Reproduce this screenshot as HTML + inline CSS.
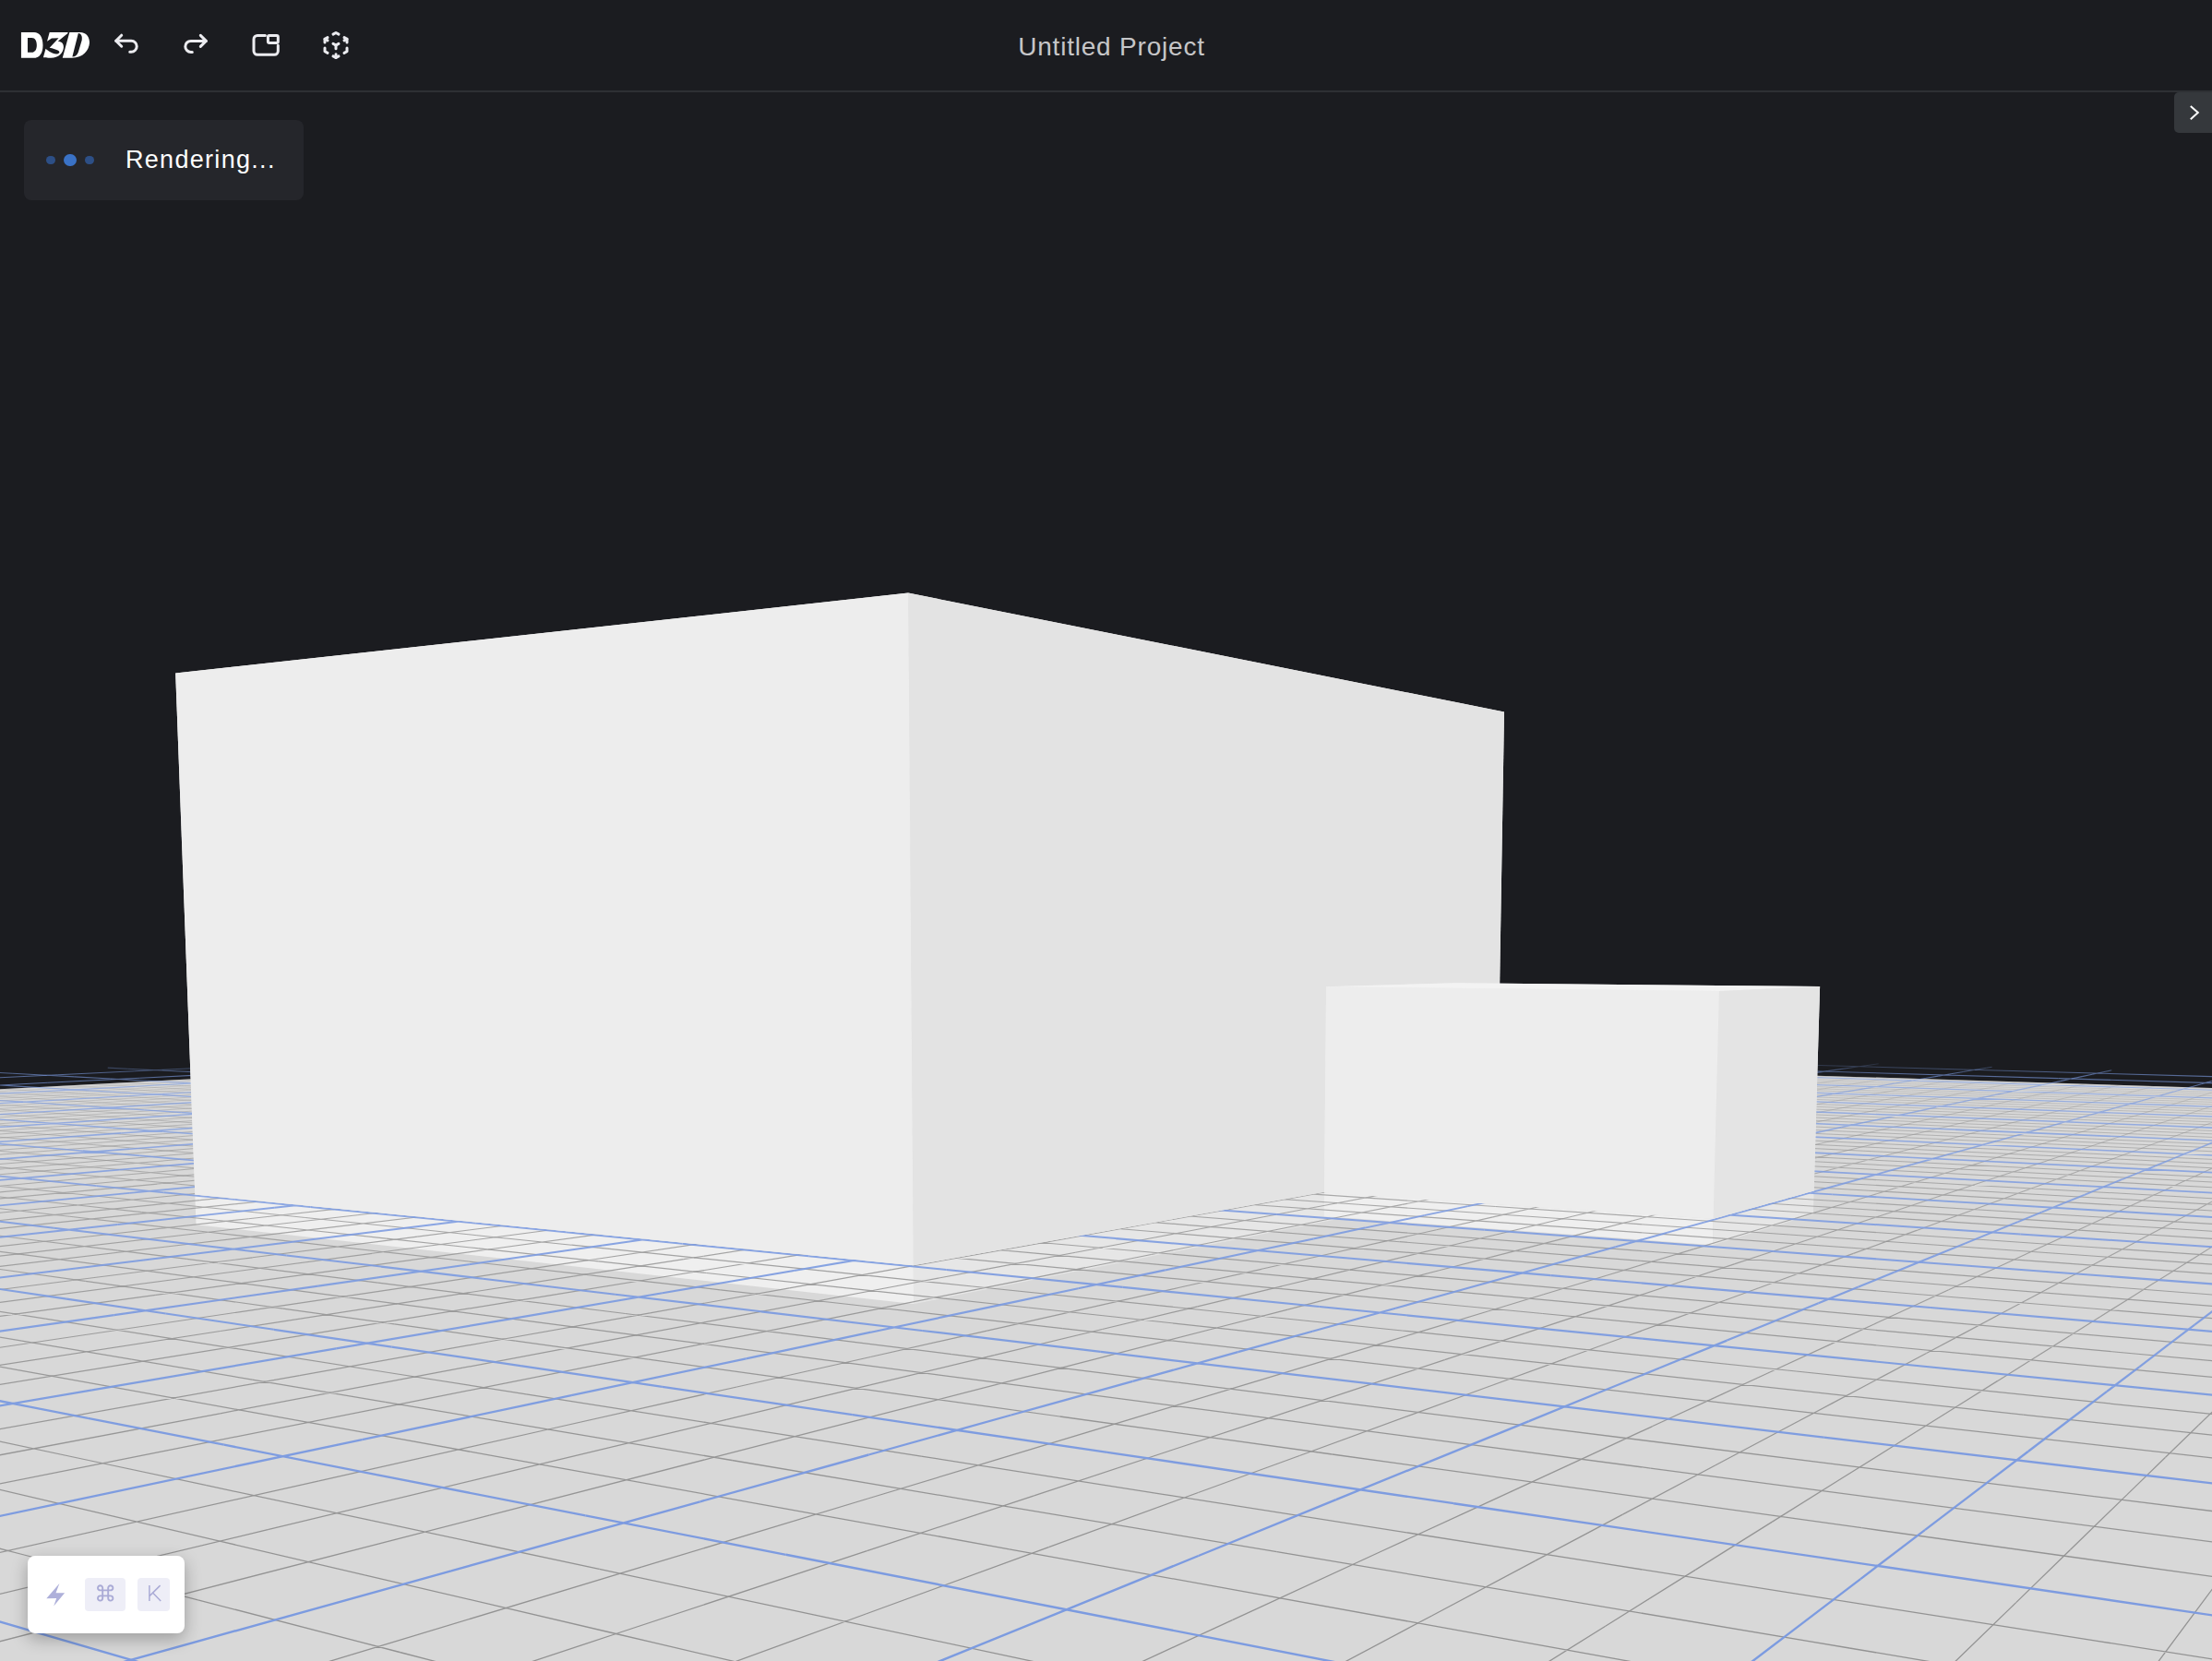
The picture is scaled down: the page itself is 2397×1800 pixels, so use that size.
<!DOCTYPE html>
<html><head><meta charset="utf-8"><title>D3D</title>
<style>
html,body{margin:0;padding:0;}
body{width:2397px;height:1800px;overflow:hidden;background:#1b1c20;position:relative;font-family:"Liberation Sans",sans-serif;}
.hdr{position:absolute;left:0;top:0;width:2397px;height:98px;background:#1b1c20;border-bottom:2px solid #2e3034;}
.title{position:absolute;left:0;top:1.5px;width:2397px;height:98px;text-align:center;line-height:98px;font-size:28px;color:#c6c6c8;letter-spacing:0.8px;text-indent:12px;}
.toast{position:absolute;left:26px;top:130px;width:303px;height:87px;background:#25262b;border-radius:8px;}
.toast .t{position:absolute;left:110px;top:0;line-height:87px;font-size:27px;color:#ffffff;letter-spacing:1.3px;}
.dot{position:absolute;border-radius:50%;}
.tog{position:absolute;left:2356px;top:100px;width:50px;height:44px;background:#35383c;border-radius:5px;}
.kb{position:absolute;left:30px;top:1686px;width:170px;height:84px;background:#ffffff;border-radius:8px;box-shadow:0 6px 18px rgba(0,0,0,0.28);}
.key{position:absolute;top:24px;height:36px;background:#eeeef7;border-radius:4px;color:#a9aad6;text-align:center;line-height:36px;font-size:22px;}
</style></head><body>
<svg width="2397" height="1800" viewBox="0 0 2397 1800" style="position:absolute;left:0;top:0">
<defs><clipPath id="sc"><rect x="0" y="100" width="2397" height="1700"/></clipPath><linearGradient id="gf" gradientUnits="userSpaceOnUse" x1="0" y1="1149" x2="0" y2="1164"><stop offset="0" stop-color="#000"/><stop offset="1" stop-color="#fff"/></linearGradient><mask id="mf" maskUnits="userSpaceOnUse" x="0" y="0" width="2397" height="1800"><rect x="0" y="0" width="2397" height="1800" fill="url(#gf)"/></mask></defs>
<clipPath id="fl"><polygon points="908.1,1132.6 -60.0,1183.3 -60.0,1900.0 2460.0,1900.0 2460.0,1180.9"/></clipPath>
<g clip-path="url(#sc)">
<polygon points="908.1,1132.6 -60.0,1183.3 -60.0,1900.0 2460.0,1900.0 2460.0,1180.9" fill="#d8d8d8" />
<polygon points="211.3,1294.6 989.8,1371.3 990.1,1413.0 212.5,1327.2" fill="#efefef" />
<polygon points="989.8,1371.3 1621.9,1258.4 1621.5,1286.6 990.1,1413.0" fill="#e6e6e6" />
<polygon points="1435.0,1292.4 1856.6,1320.8 1855.9,1349.2 1434.8,1318.1" fill="#efefef" />
<polygon points="1856.6,1320.8 1965.6,1290.6 1964.8,1316.1 1855.9,1349.2" fill="#e6e6e6" />
<path d="M-122.9,1945.4L-138.3,1950.0M308.7,1889.2L124.8,1950.0M633.2,1860.4L387.8,1950.0M1135.4,1847.8L913.7,1950.0M1380.8,1841.6L1176.6,1950.0M1589.4,1856.2L1439.4,1950.0M2029.7,1887.1L1965.0,1950.0M2262.4,1903.4L2227.7,1950.0M2492.4,1945.6L2490.3,1950.0M1295.3,1837.9L1821.4,1950.0M996.1,1847.4L1435.2,1950.0M689.9,1857.0L1048.8,1950.0M150.1,1908.4L275.8,1950.0" stroke="#939393" stroke-opacity="1.000" stroke-width="1.30" fill="none" clip-path="url(#fl)"/>
<path d="M-419.5,1886.8L-664.6,1950.0M380.1,1793.4L-122.9,1945.4M667.5,1770.5L308.7,1889.2M938.3,1749.0L633.2,1860.4M1335.4,1755.6L1135.4,1847.8M1552.0,1750.7L1380.8,1841.6M1739.7,1762.2L1589.4,1856.2M2114.6,1804.6L2029.7,1887.1M2326.0,1817.9L2262.4,1903.4M2535.3,1852.1L2492.4,1945.6M3013.3,1930.3L3015.5,1950.0M2004.1,1786.0L2979.6,1950.0M1536.6,1758.9L2593.7,1950.0M889.9,1751.6L1295.3,1837.9M667.5,1770.5L996.1,1847.4M433.2,1790.5L689.9,1857.0M-75.6,1833.8L150.1,1908.4M-313.9,1872.0L-110.9,1950.0M-576.0,1914.1L-497.6,1950.0" stroke="#939393" stroke-opacity="1.000" stroke-width="1.30" fill="none" clip-path="url(#fl)"/>
<path d="M-869.5,1877.8L-1191.0,1950.0M-194.0,1773.9L-927.8,1950.0M164.7,1736.3L-419.5,1886.8M695.2,1698.2L380.1,1793.4M939.5,1680.6L667.5,1770.5M1136.4,1676.7L938.3,1749.0M1495.0,1682.0L1335.4,1755.6M1663.7,1691.4L1552.0,1750.7M1837.4,1701.1L1739.7,1762.2M2184.7,1736.6L2114.6,1804.6M2378.3,1747.6L2326.0,1817.9M2570.3,1775.9L2535.3,1852.1M3003.4,1839.8L3013.3,1930.3M3248.8,1875.9L3278.0,1950.0M3517.1,1915.5L3540.5,1950.0M1735.0,1693.9L3365.5,1950.0M1383.7,1681.7L2004.1,1786.0M1093.6,1678.8L1536.6,1758.9M649.4,1700.4L889.9,1751.6M395.2,1706.8L667.5,1770.5M214.5,1733.8L433.2,1790.5M-230.3,1782.6L-75.6,1833.8M-459.7,1816.0L-313.9,1872.0M-710.5,1852.6L-576.0,1914.1" stroke="#939393" stroke-opacity="1.000" stroke-width="1.30" fill="none" clip-path="url(#fl)"/>
<path d="M-1423.0,1891.3L-1717.7,1950.0M-21.0,1687.1L-869.5,1877.8M290.2,1657.6L-194.0,1773.9M530.2,1642.1L164.7,1736.3M940.5,1624.0L695.2,1698.2M1120.5,1620.8L939.5,1680.6M1298.4,1617.5L1136.4,1676.7M1601.2,1633.1L1495.0,1682.0M1758.5,1641.1L1663.7,1691.4M1920.1,1649.4L1837.4,1701.1M2243.4,1679.5L2184.7,1736.6M2422.1,1688.8L2378.3,1747.6M2599.4,1712.6L2570.3,1775.9M2995.3,1765.7L3003.4,1839.8M3217.1,1795.5L3248.8,1875.9M3457.5,1827.8L3517.1,1915.5M4034.6,1925.4L4065.3,1950.0M2017.4,1655.7L4137.0,1950.0M1260.0,1619.3L1735.0,1693.9M1041.9,1624.3L1383.7,1681.7M820.0,1629.3L1093.6,1678.8M402.1,1647.7L649.4,1700.4M238.1,1670.1L395.2,1706.8M26.1,1685.0L214.5,1733.8M-398.2,1727.0L-230.3,1782.6M-617.0,1755.7L-459.7,1816.0M-827.5,1799.1L-710.5,1852.6M-1355.5,1887.7L-1271.4,1950.0M-1675.8,1931.4L-1658.5,1950.0" stroke="#939393" stroke-opacity="0.992" stroke-width="1.29" fill="none" clip-path="url(#fl)"/>
<path d="M-805.3,1728.5L-1981.0,1950.0M-242.8,1656.3L-1423.0,1891.3M345.6,1604.8L-21.0,1687.1M564.7,1591.7L290.2,1657.6M774.0,1579.2L530.2,1642.1M1107.1,1573.7L940.5,1624.0M1271.1,1571.0L1120.5,1620.8M1408.2,1577.5L1298.4,1617.5M1713.5,1581.3L1601.2,1633.1M1858.6,1588.0L1758.5,1641.1M1991.0,1605.0L1920.1,1649.4M2304.8,1619.9L2243.4,1679.5M2459.3,1638.9L2422.1,1688.8M2624.0,1659.2L2599.4,1712.6M2988.5,1704.1L2995.3,1765.7M3190.9,1729.0L3217.1,1795.5M3408.7,1755.8L3457.5,1827.8M3922.8,1835.8L4034.6,1925.4M4242.1,1894.2L4327.7,1950.0M2269.1,1621.6L3554.9,1781.6M1788.5,1591.1L4522.6,1950.0M1443.6,1576.0L2017.4,1655.7M998.2,1578.1L1260.0,1619.3M793.2,1582.5L1041.9,1624.3M585.0,1586.8L820.0,1629.3M223.8,1609.7L402.1,1647.7M64.0,1629.4L238.1,1670.1M-138.1,1642.4L26.1,1685.0M-515.7,1688.1L-398.2,1727.0M-726.5,1713.6L-617.0,1755.7M-930.3,1752.0L-827.5,1799.1M-1451.7,1816.3L-1355.5,1887.7M-1735.1,1867.5L-1675.8,1931.4M-2058.0,1925.8L-2045.6,1950.0" stroke="#939393" stroke-opacity="0.975" stroke-width="1.28" fill="none" clip-path="url(#fl)"/>
<path d="M-508.4,1639.6L-2244.5,1950.0M-89.4,1593.6L-805.3,1728.5M182.1,1571.7L-242.8,1656.3M594.0,1549.0L345.6,1604.8M787.2,1538.3L564.7,1591.7M942.2,1535.9L774.0,1579.2M1247.7,1531.2L1107.1,1573.7M1374.5,1536.8L1271.1,1571.0M1526.1,1534.4L1408.2,1577.5M1790.3,1545.8L1713.5,1581.3M1926.9,1551.7L1858.6,1588.0M2066.6,1557.8L1991.0,1605.0M2346.3,1579.5L2304.8,1619.9M2491.2,1596.0L2459.3,1638.9M2645.0,1613.5L2624.0,1659.2M2982.8,1651.9L2988.5,1704.1M3168.8,1673.1L3190.9,1729.0M3367.9,1695.8L3408.7,1755.8M3831.3,1762.5L3922.8,1835.8M4113.8,1810.4L4242.1,1894.2M4397.4,1844.0L4590.0,1950.0M1602.1,1538.6L2269.1,1621.6M3554.9,1781.6L4908.0,1950.0M1333.3,1531.4L1788.5,1591.1M1148.4,1535.0L1443.6,1576.0M770.3,1542.3L998.2,1578.1M577.0,1546.1L793.2,1582.5M413.0,1555.7L585.0,1586.8M96.0,1582.5L223.8,1609.7M-89.4,1593.6L64.0,1629.4M-254.9,1612.2L-138.1,1642.4M-620.9,1653.3L-515.7,1688.1M-824.0,1676.2L-726.5,1713.6M-1042.5,1700.7L-930.3,1752.0M-1517.9,1767.2L-1451.7,1816.3M-1786.7,1812.1L-1735.1,1867.5M-2090.2,1862.7L-2058.0,1925.8" stroke="#939393" stroke-opacity="0.959" stroke-width="1.27" fill="none" clip-path="url(#fl)"/>
<path d="M-2058.2,1798.5L-2731.3,1902.9M-760.4,1623.7L-2771.5,1950.0M-10.3,1550.5L-508.4,1639.6M238.4,1531.8L-89.4,1593.6M469.9,1514.4L182.1,1571.7M798.5,1503.0L594.0,1549.0M942.8,1500.9L787.2,1538.3M1085.8,1498.9L942.2,1535.9M1368.0,1494.9L1247.7,1531.2M1486.8,1499.7L1374.5,1536.8M1608.0,1504.5L1526.1,1534.4M1858.0,1514.6L1790.3,1545.8M1987.0,1519.9L1926.9,1551.7M2118.7,1525.2L2066.6,1557.8M2382.6,1544.3L2346.3,1579.5M2519.0,1558.7L2491.2,1596.0M2663.2,1574.0L2645.0,1613.5M2977.9,1607.3L2982.8,1651.9M3150.1,1625.5L3168.8,1673.1M3333.4,1644.9L3367.9,1695.8M3755.1,1701.4L3831.3,1762.5M4008.1,1741.5L4113.8,1810.4M4261.6,1769.3L4397.4,1844.0M4932.8,1873.9L5114.4,1950.0M5344.7,1938.1L5376.6,1950.0M2192.4,1533.1L3799.7,1706.2M1783.6,1510.8L4717.0,1841.6M1276.7,1498.1L1602.1,1538.6M1068.0,1496.6L1333.3,1531.4M894.1,1499.7L1148.4,1535.0M570.1,1510.9L770.3,1542.3M417.3,1519.3L577.0,1546.1M259.1,1527.9L413.0,1555.7M-47.8,1551.9L96.0,1582.5M-199.5,1567.8L-89.4,1593.6M-360.8,1584.7L-254.9,1612.2M-715.6,1622.0L-620.9,1653.3M-911.5,1642.6L-824.0,1676.2M-1121.4,1664.6L-1042.5,1700.7M-1576.3,1723.8L-1517.9,1767.2M-1831.8,1763.5L-1786.7,1812.1M-2118.2,1807.9L-2090.2,1862.7M-2808.7,1914.9L-2820.2,1950.0" stroke="#939393" stroke-opacity="0.942" stroke-width="1.25" fill="none" clip-path="url(#fl)"/>
<path d="M-1071.3,1619.3L-3298.7,1950.0M-507.8,1558.2L-2058.2,1798.5M-2731.3,1902.9L-3035.0,1950.0M-140.8,1523.2L-760.4,1623.7M324.7,1490.6L-10.3,1550.5M501.7,1482.2L238.4,1531.8M672.3,1474.1L469.9,1514.4M943.3,1470.5L798.5,1503.0M1077.2,1468.7L942.8,1500.9M1209.9,1466.9L1085.8,1498.9M1452.4,1469.3L1368.0,1494.9M1565.5,1473.6L1486.8,1499.7M1697.6,1471.8L1608.0,1504.5M1917.9,1487.0L1858.0,1514.6M2040.1,1491.6L1987.0,1519.9M2164.8,1496.4L2118.7,1525.2M2414.5,1513.3L2382.6,1544.3M2543.3,1526.0L2519.0,1558.7M2679.1,1539.4L2663.2,1574.0M2973.7,1568.5L2977.9,1607.3M3133.9,1584.4L3150.1,1625.5M3303.7,1601.2L3333.4,1644.9M3690.5,1649.7L3755.1,1701.4M3899.6,1670.7L4008.1,1741.5M4148.7,1707.1L4261.6,1769.3M4742.0,1793.9L4932.8,1873.9M5099.3,1846.1L5344.7,1938.1M5508.8,1906.0L5638.7,1950.0M1946.3,1486.0L4309.1,1729.5M1622.0,1471.7L2192.4,1533.1M3799.7,1706.2L5232.1,1860.4M1387.7,1466.2L1783.6,1510.8M4717.0,1841.6L5678.7,1950.0M1031.5,1467.6L1276.7,1498.1M868.1,1470.3L1068.0,1496.6M702.7,1473.1L894.1,1499.7M421.1,1487.5L570.1,1510.9M273.3,1495.1L417.3,1519.3M120.6,1502.9L259.1,1527.9M-176.6,1524.5L-47.8,1551.9M-323.9,1538.7L-199.5,1567.8M-479.9,1553.9L-360.8,1584.7M-821.5,1587.0L-715.6,1622.0M-990.4,1612.3L-911.5,1642.6M-1192.3,1632.2L-1121.4,1664.6M-1628.3,1685.3L-1576.3,1723.8M-1871.7,1720.5L-1831.8,1763.5M-2142.7,1759.7L-2118.2,1807.9M-2788.5,1853.2L-2808.7,1914.9M-3177.5,1909.6L-3207.7,1950.0" stroke="#939393" stroke-opacity="0.926" stroke-width="1.24" fill="none" clip-path="url(#fl)"/>
<path d="M-1539.7,1637.1L-3641.1,1924.7M-353.6,1512.8L-1071.3,1619.3M-67.4,1489.9L-507.8,1558.2M155.3,1475.2L-140.8,1523.2M529.5,1454.0L324.7,1490.6M689.3,1446.9L501.7,1482.2M817.1,1445.3L672.3,1474.1M1069.6,1442.1L943.3,1470.5M1194.4,1440.5L1077.2,1468.7M1318.2,1439.0L1209.9,1466.9M1545.8,1441.1L1452.4,1469.3M1652.4,1444.9L1565.5,1473.6M1760.9,1448.7L1697.6,1471.8M1983.9,1456.6L1917.9,1487.0M2087.5,1466.5L2040.1,1491.6M2205.8,1470.7L2164.8,1496.4M2442.7,1485.8L2414.5,1513.3M2564.8,1497.1L2543.3,1526.0M2693.0,1509.0L2679.1,1539.4M2969.9,1534.7L2973.7,1568.5M3119.7,1548.6L3133.9,1584.4M3277.9,1563.2L3303.7,1601.2M3635.2,1605.3L3690.5,1649.7M3827.2,1623.4L3899.6,1670.7M4053.2,1654.5L4148.7,1707.1M4548.8,1712.9L4742.0,1793.9M4854.4,1754.4L5099.3,1846.1M5255.1,1820.1L5508.8,1906.0M6130.0,1940.7L6162.8,1950.0M2135.6,1467.6L3916.7,1636.6M1519.4,1442.0L1946.3,1486.0M4309.1,1729.5L5626.2,1865.2M1334.9,1440.8L1622.0,1471.7M5232.1,1860.4L6063.9,1950.0M1151.4,1439.6L1387.7,1466.2M845.2,1444.4L1031.5,1467.6M689.3,1446.9L868.1,1470.3M558.8,1453.1L702.7,1473.1M285.8,1466.2L421.1,1487.5M142.8,1473.1L273.3,1495.1M19.3,1484.6L120.6,1502.9M-270.4,1504.5L-176.6,1524.5M-414.2,1517.6L-323.9,1538.7M-566.2,1531.5L-479.9,1553.9M-897.6,1561.8L-821.5,1587.0M-1061.8,1584.8L-990.4,1612.3M-1256.3,1602.9L-1192.3,1632.2M-1674.9,1650.8L-1628.3,1685.3M-1907.2,1682.3L-1871.7,1720.5M-2164.4,1717.2L-2142.7,1759.7M-2770.9,1799.6L-2788.5,1853.2M-3131.9,1848.6L-3177.5,1909.6M-3541.9,1904.3L-3595.2,1950.0" stroke="#939393" stroke-opacity="0.909" stroke-width="1.22" fill="none" clip-path="url(#fl)"/>
<path d="M-998.1,1542.9L-4089.8,1950.0M-507.3,1495.9L-1539.7,1637.1M-3641.1,1924.7L-3826.0,1950.0M35.3,1455.0L-353.6,1512.8M238.7,1442.5L-67.4,1489.9M399.0,1435.7L155.3,1475.2M704.4,1422.8L529.5,1454.0M824.8,1421.3L689.3,1446.9M967.9,1415.2L817.1,1445.3M1180.7,1417.1L1069.6,1442.1M1297.6,1415.8L1194.4,1440.5M1395.5,1419.1L1318.2,1439.0M1612.4,1421.0L1545.8,1441.1M1714.3,1424.4L1652.4,1444.9M1818.0,1427.9L1760.9,1448.7M2030.8,1435.0L1983.9,1456.6M2130.1,1443.9L2087.5,1466.5M2242.6,1447.7L2205.8,1470.7M2468.0,1461.3L2442.7,1485.8M2584.0,1471.4L2564.8,1497.1M2705.5,1482.0L2693.0,1509.0M2966.7,1504.8L2969.9,1534.7M3107.3,1517.1L3119.7,1548.6M3255.4,1530.0L3277.9,1563.2M3587.2,1566.9L3635.2,1605.3M3764.7,1582.6L3827.2,1623.4M3971.4,1609.5L4053.2,1654.5M4421.4,1659.5L4548.8,1712.9M4694.7,1694.6L4854.4,1754.4M5000.2,1733.8L5255.1,1820.1M5804.5,1848.3L6130.0,1940.7M6266.7,1908.5L6424.8,1950.0M2397.5,1458.2L3480.8,1553.5M1923.4,1431.4L4375.8,1655.3M1671.8,1423.5L2135.6,1467.6M3916.7,1636.6L5080.0,1747.0M1256.9,1414.9L1519.4,1442.0M5626.2,1865.2L6449.0,1950.0M1114.4,1417.0L1334.9,1440.8M942.0,1416.0L1151.4,1439.6M677.5,1423.5L845.2,1444.4M554.2,1429.1L689.3,1446.9M427.3,1434.9L558.8,1453.1M162.3,1446.9L285.8,1466.2M23.9,1453.1L142.8,1473.1M-96.8,1463.6L19.3,1484.6M-357.0,1486.0L-270.4,1504.5M-497.4,1498.2L-414.2,1517.6M-645.4,1511.0L-566.2,1531.5M-967.2,1538.8L-897.6,1561.8M-1126.9,1559.8L-1061.8,1584.8M-1314.5,1576.3L-1256.3,1602.9M-1716.8,1619.7L-1674.9,1650.8M-1939.1,1648.1L-1907.2,1682.3M-2183.7,1679.4L-2164.4,1717.2M-2755.4,1752.4L-2770.9,1799.6M-3092.2,1795.5L-3131.9,1848.6M-3471.5,1844.0L-3541.9,1904.3" stroke="#939393" stroke-opacity="0.893" stroke-width="1.21" fill="none" clip-path="url(#fl)"/>
<path d="M-701.4,1486.5L-4353.6,1950.0M-369.8,1460.1L-998.1,1542.9M-112.7,1441.9L-507.3,1495.9M279.2,1418.8L35.3,1455.0M459.2,1408.3L238.7,1442.5M603.2,1402.6L399.0,1435.7M855.3,1395.8L704.4,1422.8M967.0,1394.5L824.8,1421.3M1077.9,1393.3L967.9,1415.2M1279.1,1395.0L1180.7,1417.1M1389.1,1393.8L1297.6,1415.8M1482.1,1396.7L1395.5,1419.1M1672.7,1402.8L1612.4,1421.0M1770.4,1405.9L1714.3,1424.4M1869.6,1409.0L1818.0,1427.9M2073.1,1415.5L2030.8,1435.0M2168.4,1423.5L2130.1,1443.9M2275.7,1427.0L2242.6,1447.7M2490.7,1439.2L2468.0,1461.3M2601.1,1448.3L2584.0,1471.4M2716.6,1457.9L2705.5,1482.0M2963.8,1478.3L2966.7,1504.8M3096.3,1489.2L3107.3,1517.1M3235.5,1500.7L3255.4,1530.0M3545.2,1533.2L3587.2,1566.9M3710.2,1547.0L3764.7,1582.6M3900.6,1570.5L3971.4,1609.5M4312.4,1613.8L4421.4,1659.5M4559.4,1643.9L4694.7,1694.6M4833.0,1677.2L5000.2,1733.8M5479.9,1756.1L5804.5,1848.3M5865.9,1803.2L6266.7,1908.5M6394.1,1878.5L6686.7,1950.0M1777.0,1403.7L2397.5,1458.2M3480.8,1553.5L4765.0,1666.5M1544.9,1396.8L1923.4,1431.4M4375.8,1655.3L5419.4,1750.6M1380.4,1395.9L1671.8,1423.5M5080.0,1747.0L6271.8,1860.1M1053.7,1394.0L1256.9,1414.9M917.9,1395.9L1114.4,1417.0M780.6,1397.8L942.0,1416.0M550.0,1407.7L677.5,1423.5M429.9,1412.8L554.2,1429.1M306.6,1418.1L427.3,1434.9M49.3,1429.1L162.3,1446.9M-63.8,1438.4L23.9,1453.1M-182.4,1448.1L-96.8,1463.6M-456.2,1464.9L-357.0,1486.0M-592.5,1475.9L-497.4,1498.2M-735.9,1487.5L-645.4,1511.0M-1031.0,1517.7L-967.2,1538.8M-1200.6,1531.6L-1126.9,1559.8M-1367.5,1552.0L-1314.5,1576.3M-1754.7,1591.5L-1716.8,1619.7M-1967.7,1617.2L-1939.1,1648.1M-2201.1,1645.4L-2183.7,1679.4M-2741.7,1710.7L-2755.4,1752.4M-3057.4,1748.8L-3092.2,1795.5M-3410.3,1791.5L-3471.5,1844.0M-4290.3,1909.9L-4370.6,1950.0" stroke="#939393" stroke-opacity="0.876" stroke-width="1.20" fill="none" clip-path="url(#fl)"/>
<path d="M-2170.5,1609.6L-2786.5,1680.1M-941.6,1483.9L-4881.3,1950.0M-251.8,1429.4L-701.4,1486.5M-16.8,1413.6L-369.8,1460.1M168.8,1403.3L-112.7,1441.9M485.0,1388.3L279.2,1418.8M621.1,1383.2L459.2,1408.3M729.8,1382.0L603.2,1402.6M966.2,1375.9L855.3,1395.8M1071.5,1374.8L967.0,1394.5M1176.2,1373.7L1077.9,1393.3M1367.0,1375.3L1279.1,1395.0M1455.1,1377.9L1389.1,1393.8M1559.4,1376.8L1482.1,1396.7M1740.8,1382.2L1672.7,1402.8M1833.5,1385.0L1770.4,1405.9M1927.8,1387.8L1869.6,1409.0M2111.6,1397.7L2073.1,1415.5M2211.4,1400.7L2168.4,1423.5M2305.8,1408.2L2275.7,1427.0M2511.2,1419.3L2490.7,1439.2M2616.6,1427.5L2601.1,1448.3M2726.5,1436.1L2716.6,1457.9M2961.2,1454.5L2963.8,1478.3M3086.5,1464.3L3096.3,1489.2M3217.7,1474.6L3235.5,1500.7M3508.2,1503.5L3545.2,1533.2M3662.2,1515.7L3710.2,1547.0M3838.6,1536.4L3900.6,1570.5M4218.1,1574.2L4312.4,1613.8M4443.1,1600.3L4559.4,1643.9M4690.7,1629.0L4833.0,1677.2M5268.4,1696.0L5479.9,1756.1M5608.2,1735.5L5865.9,1803.2M5990.6,1779.8L6394.1,1878.5M7028.5,1910.9L7210.4,1950.0M2286.6,1406.7L3662.2,1515.7M1905.4,1388.4L4429.8,1595.3M1463.0,1376.1L1777.0,1403.7M4765.0,1666.5L5762.0,1754.2M1307.8,1375.2L1544.9,1396.8M5419.4,1750.6L6671.4,1864.9M1153.4,1374.3L1380.4,1395.9M6271.8,1860.1L7218.9,1950.0M896.1,1377.7L1053.7,1394.0M765.6,1379.5L917.9,1395.9M657.3,1383.9L780.6,1397.8M409.8,1390.2L550.0,1407.7M293.5,1394.9L429.9,1412.8M195.3,1402.6L306.6,1418.1M-34.4,1415.9L49.3,1429.1M-165.3,1421.3L-63.8,1438.4M-281.1,1430.2L-182.4,1448.1M-529.3,1449.3L-456.2,1464.9M-662.4,1459.6L-592.5,1475.9M-802.2,1470.4L-735.9,1487.5M-1089.8,1498.2L-1031.0,1517.7M-1254.1,1511.0L-1200.6,1531.6M-1416.0,1529.8L-1367.5,1552.0M-1789.2,1565.9L-1754.7,1591.5M-1993.7,1589.3L-1967.7,1617.2M-2216.7,1614.8L-2201.1,1645.4M-2729.6,1673.5L-2741.7,1710.7M-3026.5,1707.5L-3057.4,1748.8M-3356.4,1745.3L-3410.3,1791.5M-4167.8,1848.9L-4290.3,1909.9M-4648.4,1904.6L-4758.5,1950.0" stroke="#939393" stroke-opacity="0.860" stroke-width="1.18" fill="none" clip-path="url(#fl)"/>
<path d="M-1237.4,1487.7L-4519.2,1851.4M-727.4,1444.4L-2170.5,1609.6M-2786.5,1680.1L-5145.2,1950.0M-382.9,1417.8L-941.6,1483.9M66.8,1389.0L-251.8,1429.4M238.8,1380.0L-16.8,1413.6M375.4,1375.1L168.8,1403.3M637.4,1365.7L485.0,1388.3M740.7,1364.6L621.1,1383.2M864.6,1360.1L729.8,1382.0M1065.8,1358.1L966.2,1375.9M1165.4,1357.2L1071.5,1374.8M1247.5,1359.5L1176.2,1373.7M1430.7,1361.0L1367.0,1375.3M1530.1,1359.9L1455.1,1377.9M1615.5,1362.4L1559.4,1376.8M1790.0,1367.3L1740.8,1382.2M1879.3,1369.9L1833.5,1385.0M1969.8,1372.4L1927.8,1387.8M2146.7,1381.5L2111.6,1397.7M2242.4,1384.3L2211.4,1400.7M2333.1,1391.1L2305.8,1408.2M2529.8,1401.2L2511.2,1419.3M2630.6,1408.7L2616.6,1427.5M2735.6,1416.5L2726.5,1436.1M2958.8,1433.1L2961.2,1454.5M3077.7,1442.0L3086.5,1464.3M3201.9,1451.2L3217.7,1474.6M3475.2,1477.1L3508.2,1503.5M3619.7,1488.0L3662.2,1515.7M3771.4,1499.4L3838.6,1536.4M4135.7,1539.7L4218.1,1574.2M4319.1,1553.9L4443.1,1600.3M4539.9,1578.0L4690.7,1629.0M5048.4,1633.6L5268.4,1696.0M5343.2,1665.8L5608.2,1735.5M5729.5,1716.0L5990.6,1779.8M6535.5,1805.1L7028.5,1910.9M7130.1,1880.8L7472.2,1950.0M2057.1,1376.9L4091.0,1533.0M1774.7,1366.1L2286.6,1406.7M3662.2,1515.7L4694.8,1597.6M1594.2,1362.9L1905.4,1388.4M4429.8,1595.3L5367.3,1672.2M1269.1,1359.0L1463.0,1376.1M5762.0,1754.2L6909.3,1855.1M1122.0,1358.2L1307.8,1375.2M6671.4,1864.9L7603.7,1950.0M999.8,1359.8L1153.4,1374.3M751.9,1362.9L896.1,1377.7M648.6,1366.9L765.6,1379.5M520.9,1368.5L657.3,1383.9M302.4,1376.9L409.8,1390.2M209.3,1383.8L293.5,1394.9M92.5,1388.4L195.3,1402.6M-131.7,1400.7L-34.4,1415.9M-240.6,1408.7L-165.3,1421.3M-354.3,1417.0L-281.1,1430.2M-597.3,1434.9L-529.3,1449.3M-727.4,1444.4L-662.4,1459.6M-863.7,1454.4L-802.2,1470.4M-1144.1,1480.2L-1089.8,1498.2M-1303.4,1492.1L-1254.1,1511.0M-1460.6,1509.4L-1416.0,1529.8M-1820.7,1542.5L-1789.2,1565.9M-2017.3,1563.9L-1993.7,1589.3M-2230.8,1587.1L-2216.7,1614.8M-2718.6,1640.2L-2729.6,1673.5M-2998.9,1670.7L-3026.5,1707.5M-3308.6,1704.3L-3356.4,1745.3M-4061.2,1795.7L-4167.8,1848.9M-4502.1,1844.3L-4648.4,1904.6M-5048.8,1915.7L-5146.4,1950.0" stroke="#939393" stroke-opacity="0.844" stroke-width="1.17" fill="none" clip-path="url(#fl)"/>
<path d="M-1670.1,1505.3L-3461.9,1692.1M-547.3,1411.2L-1237.4,1487.7M-4519.2,1851.4L-5409.2,1950.0M-274.9,1392.6L-727.4,1444.4M-59.7,1379.5L-382.9,1417.8M273.5,1362.8L66.8,1389.0M403.1,1358.3L238.8,1380.0M529.2,1354.0L375.4,1375.1M771.8,1345.7L637.4,1365.7M868.6,1344.8L740.7,1364.6M964.8,1343.9L864.6,1360.1M1155.6,1342.1L1065.8,1358.1M1250.2,1341.2L1165.4,1357.2M1328.9,1343.3L1247.5,1359.5M1503.4,1344.6L1430.7,1361.0M1584.7,1346.8L1530.1,1359.9M1667.1,1349.1L1615.5,1362.4M1835.3,1353.6L1790.0,1367.3M1921.3,1356.0L1879.3,1369.9M2008.4,1358.4L1969.8,1372.4M2178.9,1366.7L2146.7,1381.5M2270.7,1369.2L2242.4,1384.3M2358.1,1375.5L2333.1,1391.1M2546.8,1384.7L2529.8,1401.2M2643.4,1391.6L2630.6,1408.7M2743.7,1398.7L2735.6,1416.5M2956.7,1413.8L2958.8,1433.1M3069.8,1421.8L3077.7,1442.0M3187.6,1430.2L3201.9,1451.2M3445.7,1453.5L3475.2,1477.1M3581.8,1463.2L3619.7,1488.0M3724.2,1473.4L3771.4,1499.4M4063.1,1509.3L4135.7,1539.7M4233.4,1521.8L4319.1,1553.9M4436.6,1543.0L4539.9,1578.0M4900.0,1591.4L5048.4,1633.6M5166.0,1619.2L5343.2,1665.8M5459.4,1649.9L5729.5,1716.0M6218.7,1737.1L6535.5,1805.1M6640.2,1781.6L7130.1,1880.8M7225.0,1852.6L7734.0,1950.0M2233.1,1368.6L3759.3,1478.7M1687.4,1348.6L2057.1,1376.9M4091.0,1533.0L5052.7,1606.8M1516.8,1345.7L1774.7,1366.1M4694.8,1597.6L5672.4,1675.0M1349.3,1342.9L1594.2,1362.9M5367.3,1672.2L6457.4,1761.5M1093.3,1343.5L1269.1,1359.0M6909.3,1855.1L7988.4,1950.0M953.3,1342.8L1122.0,1358.2M858.5,1346.4L999.8,1359.8M619.4,1349.2L751.9,1362.9M518.8,1352.9L648.6,1366.9M415.9,1356.7L520.9,1368.5M202.6,1364.4L302.4,1376.9M111.0,1370.9L209.3,1383.8M-2.8,1375.1L92.5,1388.4M-204.3,1389.3L-131.7,1400.7M-328.3,1393.9L-240.6,1408.7M-439.3,1401.6L-354.3,1417.0M-676.1,1418.1L-597.3,1434.9M-788.0,1430.2L-727.4,1444.4M-921.0,1439.6L-863.7,1454.4M-1194.4,1463.6L-1144.1,1480.2M-1349.0,1474.5L-1303.4,1492.1M-1501.8,1490.6L-1460.6,1509.4M-1849.6,1521.1L-1820.7,1542.5M-2038.8,1540.7L-2017.3,1563.9M-2243.7,1561.9L-2230.8,1587.1M-2708.7,1610.1L-2718.6,1640.2M-2974.2,1637.6L-2998.9,1670.7M-3266.0,1667.8L-3308.6,1704.3M-3967.5,1749.0L-4061.2,1795.7M-4374.5,1791.7L-4502.1,1844.3M-4872.9,1853.9L-5048.8,1915.7" stroke="#939393" stroke-opacity="0.827" stroke-width="1.16" fill="none" clip-path="url(#fl)"/>
<path d="M-1161.6,1440.0L-5003.9,1828.8M-706.3,1404.9L-1670.1,1505.3M-3461.9,1692.1L-5937.3,1950.0M-179.9,1370.5L-547.3,1411.2M19.5,1358.9L-274.9,1392.6M178.6,1351.3L-59.7,1379.5M452.3,1340.1L273.5,1362.8M570.9,1336.2L403.1,1358.3M665.5,1335.4L529.2,1354.0M872.3,1330.8L771.8,1345.7M964.3,1330.0L868.6,1344.8M1055.7,1329.1L964.8,1343.9M1237.2,1327.5L1155.6,1342.1M1312.3,1329.5L1250.2,1341.2M1402.6,1328.7L1328.9,1343.3M1556.6,1332.7L1503.4,1344.6M1647.2,1331.8L1584.7,1346.8M1726.1,1333.9L1667.1,1349.1M1887.1,1338.0L1835.3,1353.6M1960.0,1343.2L1921.3,1356.0M2044.0,1345.4L2008.4,1358.4M2208.4,1353.1L2178.9,1366.7M2296.8,1355.4L2270.7,1369.2M2381.0,1361.2L2358.1,1375.5M2562.3,1369.7L2546.8,1384.7M2655.0,1375.9L2643.4,1391.6M2751.2,1382.4L2743.7,1398.7M2954.8,1396.2L2956.7,1413.8M3062.5,1403.5L3069.8,1421.8M3174.7,1411.1L3187.6,1430.2M3413.0,1427.2L3445.7,1453.5M3547.7,1441.0L3581.8,1463.2M3682.0,1450.2L3724.2,1473.4M3983.7,1476.0L4063.1,1509.3M4157.6,1493.4L4233.4,1521.8M4345.6,1512.2L4436.6,1543.0M4770.9,1554.8L4900.0,1591.4M5012.8,1579.0L5166.0,1619.2M5278.0,1605.6L5459.4,1649.9M5893.0,1667.2L6218.7,1737.1M6323.3,1717.5L6640.2,1781.6M6738.8,1759.5L7225.0,1852.6M2435.4,1363.0L3441.2,1431.4M2028.8,1344.3L4157.6,1493.4M1800.8,1337.4L2233.1,1368.6M3759.3,1478.7L4716.3,1547.7M1447.0,1330.1L1687.4,1348.6M5052.7,1606.8L5980.1,1677.9M1288.2,1327.6L1516.8,1345.7M5672.4,1675.0L6668.4,1754.0M1178.1,1328.8L1349.3,1342.9M6457.4,1761.5L7538.8,1850.1M933.1,1329.4L1093.3,1343.5M820.7,1330.7L953.3,1342.8M728.2,1334.0L858.5,1346.4M516.9,1338.7L619.4,1349.2M418.5,1342.1L518.8,1352.9M317.9,1345.6L415.9,1356.7M127.7,1355.1L202.6,1364.4M19.5,1358.9L111.0,1370.9M-74.2,1365.2L-2.8,1375.1M-289.0,1376.0L-204.3,1389.3M-393.7,1382.9L-328.3,1393.9M-502.7,1390.2L-439.3,1401.6M-734.6,1405.6L-676.1,1418.1M-858.2,1413.8L-788.0,1430.2M-974.4,1425.7L-921.0,1439.6M-1241.2,1448.1L-1194.4,1463.6M-1391.3,1458.3L-1349.0,1474.5M-1539.8,1473.2L-1501.8,1490.6M-1876.2,1501.4L-1849.6,1521.1M-2058.6,1519.4L-2038.8,1540.7M-2255.4,1538.9L-2243.7,1561.9M-2699.8,1582.8L-2708.7,1610.1M-2951.9,1607.8L-2974.2,1637.6M-3227.7,1635.0L-3266.0,1667.8M-3884.6,1707.7L-3967.5,1749.0M-4262.4,1745.5L-4374.5,1791.7M-4719.8,1800.1L-4872.9,1853.9M-5817.6,1921.5L-5922.6,1950.0" stroke="#939393" stroke-opacity="0.811" stroke-width="1.14" fill="none" clip-path="url(#fl)"/>
<path d="M-860.2,1398.8L-6206.0,1924.5M-543.5,1377.5L-1161.6,1440.0M-5003.9,1828.8L-6201.4,1950.0M-294.0,1361.9L-706.3,1404.9M62.3,1343.7L-179.9,1370.5M213.3,1336.7L19.5,1358.9M357.9,1330.1L178.6,1351.3M587.3,1323.0L452.3,1340.1M677.7,1322.2L570.9,1336.2M787.0,1318.7L665.5,1335.4M963.7,1317.2L872.3,1330.8M1051.4,1316.5L964.3,1330.0M1138.5,1315.7L1055.7,1329.1M1297.1,1316.8L1237.2,1327.5M1383.7,1316.0L1312.3,1329.5M1456.9,1317.8L1402.6,1328.7M1617.8,1318.9L1556.6,1332.7M1693.1,1320.8L1647.2,1331.8M1769.5,1322.7L1726.1,1333.9M1925.0,1326.5L1887.1,1338.0M2004.4,1328.5L1960.0,1343.2M2076.9,1333.4L2044.0,1345.4M2235.7,1340.5L2208.4,1353.1M2320.8,1342.6L2296.8,1355.4M2402.1,1348.0L2381.0,1361.2M2576.6,1355.8L2562.3,1369.7M2665.7,1361.6L2655.0,1375.9M2758.1,1367.6L2751.2,1382.4M2953.0,1380.2L2954.8,1396.2M3056.0,1386.8L3062.5,1403.5M3162.9,1393.8L3174.7,1411.1M3389.5,1408.4L3413.0,1427.2M3517.0,1420.9L3547.7,1441.0M3643.9,1429.2L3682.0,1450.2M3927.7,1452.5L3983.7,1476.0M4090.1,1468.1L4157.6,1493.4M4264.8,1484.9L4345.6,1512.2M4631.3,1515.2L4770.9,1554.8M4848.4,1535.8L5012.8,1579.0M5084.7,1558.3L5278.0,1605.6M5675.3,1620.4L5893.0,1667.2M5995.7,1651.2L6323.3,1717.5M6351.1,1685.4L6738.8,1759.5M1906.5,1327.0L2435.4,1363.0M3441.2,1431.4L4442.2,1499.5M1693.1,1320.8L2028.8,1344.3M4157.6,1493.4L5042.7,1555.3M1537.2,1318.4L1800.8,1337.4M4716.3,1547.7L5600.4,1611.4M1255.4,1315.4L1447.0,1330.1M5980.1,1677.9L7018.6,1757.6M1127.5,1314.8L1288.2,1327.6M6668.4,1754.0L7940.3,1854.8M1021.4,1316.0L1178.1,1328.8M7538.8,1850.1L8757.5,1950.0M806.6,1318.3L933.1,1329.4M717.7,1321.3L820.7,1330.7M607.5,1322.5L728.2,1334.0M420.9,1328.8L516.9,1338.7M324.6,1332.0L418.5,1342.1M226.2,1335.3L317.9,1345.6M39.7,1344.2L127.7,1355.1M-49.3,1349.9L19.5,1358.9M-157.9,1353.6L-74.2,1365.2M-352.4,1366.0L-289.0,1376.0M-455.3,1372.6L-393.7,1382.9M-562.3,1379.4L-502.7,1390.2M-789.6,1393.9L-734.6,1405.6M-910.4,1401.6L-858.2,1413.8M-1024.4,1412.8L-974.4,1425.7M-1284.8,1433.7L-1241.2,1448.1M-1430.7,1443.2L-1391.3,1458.3M-1575.1,1457.0L-1539.8,1473.2M-1900.8,1483.2L-1876.2,1501.4M-2076.8,1499.8L-2058.6,1519.4M-2266.2,1517.7L-2255.4,1538.9M-2691.6,1558.0L-2699.8,1582.8M-2931.7,1580.7L-2951.9,1607.8M-3193.2,1605.4L-3227.7,1635.0M-3810.6,1670.8L-3884.6,1707.7M-4163.0,1704.5L-4262.4,1745.5M-4585.4,1752.9L-4719.8,1800.1M-5586.9,1858.9L-5817.6,1921.5M-6171.6,1916.1L-6310.8,1950.0" stroke="#939393" stroke-opacity="0.794" stroke-width="1.13" fill="none" clip-path="url(#fl)"/>
<path d="M-2165.1,1488.2L-2728.5,1539.3M-1100.0,1401.3L-5265.4,1789.1M-402.7,1353.8L-860.2,1398.8M-6206.0,1924.5L-6465.6,1950.0M-205.5,1343.3L-543.5,1377.5M-20.6,1333.5L-294.0,1361.9M269.3,1320.7L62.3,1343.7M382.9,1317.3L213.3,1336.7M493.8,1314.0L357.9,1330.1M708.2,1307.6L587.3,1323.0M793.7,1306.9L677.7,1322.2M878.7,1306.2L787.0,1318.7M1047.3,1304.8L963.7,1317.2M1131.0,1304.1L1051.4,1316.5M1214.3,1303.4L1138.5,1315.7M1366.3,1304.4L1297.1,1316.8M1449.1,1303.7L1383.7,1316.0M1519.5,1305.4L1456.9,1317.8M1662.8,1308.8L1617.8,1318.9M1735.8,1310.5L1693.1,1320.8M1809.7,1312.3L1769.5,1322.7M1960.3,1315.9L1925.0,1326.5M2037.0,1317.7L2004.4,1328.5M2107.4,1322.2L2076.9,1333.4M2261.0,1328.8L2235.7,1340.5M2343.1,1330.8L2320.8,1342.6M2421.6,1335.8L2402.1,1348.0M2589.7,1343.0L2576.6,1355.8M2675.6,1348.3L2665.7,1361.6M2764.4,1353.9L2758.1,1367.6M2951.4,1365.5L2953.0,1380.2M3050.0,1371.6L3056.0,1386.8M3152.1,1377.9L3162.9,1393.8M3368.2,1391.3L3389.5,1408.4M3489.1,1402.7L3517.0,1420.9M3609.5,1410.3L3643.9,1429.2M3877.2,1431.3L3927.7,1452.5M4029.5,1445.4L4090.1,1468.1M4175.9,1454.7L4264.8,1484.9M4533.9,1487.5L4631.3,1515.2M4734.3,1505.8L4848.4,1535.8M4951.3,1525.7L5084.7,1558.3M5444.2,1570.8L5675.3,1620.4M5725.5,1596.5L5995.7,1651.2M6093.4,1636.0L6351.1,1685.4M2343.1,1330.8L3536.7,1405.7M2005.4,1317.2L4214.6,1459.5M1620.6,1307.5L1906.5,1327.0M4442.2,1499.5L5291.1,1557.3M1472.2,1305.3L1693.1,1320.8M5042.7,1555.3L5877.5,1613.8M1326.0,1303.2L1537.2,1318.4M5600.4,1611.4L6480.1,1674.9M1102.2,1303.7L1255.4,1315.4M7018.6,1757.6L8160.5,1845.2M1000.2,1304.7L1127.5,1314.8M7940.3,1854.8L9141.9,1950.0M897.3,1305.8L1021.4,1316.0M689.2,1308.0L806.6,1318.3M602.2,1310.8L717.7,1321.3M513.6,1313.6L607.5,1322.5M330.8,1319.5L420.9,1328.8M236.5,1322.5L324.6,1332.0M140.3,1325.6L226.2,1335.3M-42.6,1333.9L39.7,1344.2M-130.1,1339.3L-49.3,1349.9M-220.8,1344.9L-157.9,1353.6M-426.7,1354.3L-352.4,1366.0M-527.4,1360.4L-455.3,1372.6M-618.5,1369.2L-562.3,1379.4M-841.2,1382.9L-789.6,1393.9M-959.4,1390.2L-910.4,1401.6M-1071.3,1400.6L-1024.4,1412.8M-1335.3,1417.0L-1284.8,1433.7M-1467.4,1429.1L-1430.7,1443.2M-1607.9,1442.0L-1575.1,1457.0M-1923.5,1466.3L-1900.8,1483.2M-2093.6,1481.7L-2076.8,1499.8M-2276.1,1498.3L-2266.2,1517.7M-2684.2,1535.3L-2691.6,1558.0M-2913.3,1556.0L-2931.7,1580.7M-3161.9,1578.6L-3193.2,1605.4M-3744.2,1637.7L-3810.6,1670.8M-4074.3,1668.0L-4163.0,1704.5M-4466.5,1711.1L-4585.4,1752.9M-5386.2,1804.5L-5586.9,1858.9M-5917.4,1854.2L-6171.6,1916.1M-6597.1,1927.4L-6699.1,1950.0" stroke="#939393" stroke-opacity="0.778" stroke-width="1.11" fill="none" clip-path="url(#fl)"/>
<path d="M-1343.2,1403.9L-4276.6,1663.1M-869.6,1370.7L-2165.1,1488.2M-2728.5,1539.3L-6431.0,1875.0M-540.3,1349.2L-1100.0,1401.3M-5265.4,1789.1L-6994.0,1950.0M-126.3,1326.6L-402.7,1353.8M20.8,1320.4L-205.5,1343.3M161.8,1314.4L-20.6,1333.5M405.9,1305.6L269.3,1320.7M512.1,1302.5L382.9,1317.3M616.1,1299.6L493.8,1314.0M799.8,1296.0L708.2,1307.6M881.5,1295.3L793.7,1306.9M978.8,1292.5L878.7,1306.2M1124.1,1293.4L1047.3,1304.8M1204.1,1292.8L1131.0,1304.1M1283.8,1292.1L1214.3,1303.4M1429.9,1293.0L1366.3,1304.4M1497.4,1294.6L1449.1,1303.7M1565.8,1296.2L1519.5,1305.4M1715.0,1297.1L1662.8,1308.8M1785.2,1298.7L1735.8,1310.5M1856.3,1300.3L1809.7,1312.3M1993.1,1306.0L1960.3,1315.9M2067.3,1307.7L2037.0,1317.7M2135.7,1311.9L2107.4,1322.2M2290.0,1315.5L2261.0,1328.8M2363.7,1319.9L2343.1,1330.8M2439.7,1324.5L2421.6,1335.8M2601.9,1331.2L2589.7,1343.0M2684.7,1336.1L2675.6,1348.3M2770.2,1341.2L2764.4,1353.9M2949.9,1351.9L2951.4,1365.5M3044.4,1357.6L3050.0,1371.6M3142.3,1363.4L3152.1,1377.9M3348.7,1375.7L3368.2,1391.3M3463.7,1386.1L3489.1,1402.7M3578.1,1393.0L3609.5,1410.3M3831.5,1412.1L3877.2,1431.3M3974.8,1424.9L4029.5,1445.4M4112.7,1433.4L4175.9,1454.7M4447.0,1462.8L4533.9,1487.5M4633.0,1479.2L4734.3,1505.8M4833.5,1496.9L4951.3,1525.7M5285.4,1536.7L5444.2,1570.8M5541.3,1559.2L5725.5,1596.5M5820.9,1583.9L6093.4,1636.0M2153.0,1311.5L3915.2,1419.2M1894.2,1302.7L2343.1,1330.8M3536.7,1405.7L4478.9,1464.8M1698.0,1297.4L2005.4,1317.2M4214.6,1459.5L5034.3,1512.3M1412.8,1293.4L1620.6,1307.5M5291.1,1557.3L6156.7,1616.2M1294.4,1292.9L1472.2,1305.3M5877.5,1613.8L6791.1,1677.8M1176.4,1292.4L1326.0,1303.2M6480.1,1674.9L7573.6,1753.8M961.1,1292.8L1102.2,1303.7M8160.5,1845.2L9526.2,1950.0M862.5,1293.8L1000.2,1304.7M781.7,1296.3L897.3,1305.8M597.4,1299.9L689.2,1308.0M512.1,1302.5L602.2,1310.8M425.2,1305.2L513.6,1313.6M246.0,1310.7L330.8,1319.5M153.7,1313.6L236.5,1322.5M75.3,1318.3L140.3,1325.6M-104.7,1326.2L-42.6,1333.9M-205.9,1329.4L-130.1,1339.3M-294.9,1334.6L-220.8,1344.9M-482.6,1345.5L-426.7,1354.3M-581.6,1351.3L-527.4,1360.4M-684.3,1357.3L-618.5,1369.2M-889.8,1372.6L-841.2,1382.9M-1005.5,1379.4L-959.4,1390.2M-1125.8,1386.5L-1071.3,1400.6M-1372.8,1404.6L-1335.3,1417.0M-1501.7,1415.9L-1467.4,1429.1M-1638.6,1428.0L-1607.9,1442.0M-1944.7,1450.6L-1923.5,1466.3M-2109.2,1464.9L-2093.6,1481.7M-2285.3,1480.3L-2276.1,1498.3M-2677.3,1514.4L-2684.2,1535.3M-2896.4,1533.5L-2913.3,1556.0M-3133.3,1554.1L-3161.9,1578.6M-3684.3,1607.8L-3744.2,1637.7M-3994.7,1635.1L-4074.3,1668.0M-4360.5,1673.8L-4466.5,1711.1M-5210.2,1756.7L-5386.2,1804.5M-5696.4,1800.3L-5917.4,1854.2M-6310.0,1864.0L-6597.1,1927.4" stroke="#939393" stroke-opacity="0.761" stroke-width="1.10" fill="none" clip-path="url(#fl)"/>
<path d="M-1754.3,1420.3L-3460.6,1563.8M-674.1,1344.8L-1343.2,1403.9M-4276.6,1663.1L-7522.7,1950.0M-441.7,1331.9L-869.6,1370.7M-6431.0,1875.0L-7258.3,1950.0M-227.4,1320.1L-540.3,1349.2M83.4,1306.0L-126.3,1326.6M216.4,1300.6L20.8,1320.4M322.9,1297.7L161.8,1314.4M548.4,1289.8L405.9,1305.6M628.8,1289.2L512.1,1302.5M726.5,1286.5L616.1,1299.6M900.2,1283.2L799.8,1296.0M977.7,1282.7L881.5,1295.3M1054.9,1282.1L978.8,1292.5M1194.8,1282.9L1124.1,1293.4M1271.5,1282.3L1204.1,1292.8M1335.5,1283.8L1283.8,1292.1M1477.1,1284.6L1429.9,1293.0M1553.6,1284.0L1497.4,1294.6M1619.5,1285.5L1565.8,1296.2M1753.6,1288.4L1715.0,1297.1M1821.8,1289.9L1785.2,1298.7M1890.8,1291.4L1856.3,1300.3M2023.8,1296.7L1993.1,1306.0M2095.7,1298.3L2067.3,1307.7M2168.5,1299.9L2135.7,1311.9M2311.5,1305.6L2290.0,1315.5M2382.9,1309.7L2363.7,1319.9M2456.5,1314.0L2439.7,1324.5M2613.2,1320.2L2601.9,1331.2M2693.1,1324.8L2684.7,1336.1M2775.5,1329.5L2770.2,1341.2M2948.5,1339.5L2949.9,1351.9M3039.3,1344.7L3044.4,1357.6M3133.2,1350.0L3142.3,1363.4M3330.8,1361.4L3348.7,1375.7M3440.4,1370.9L3463.7,1386.1M3549.5,1377.3L3578.1,1393.0M3790.0,1394.7L3831.5,1412.1M3925.3,1406.3L3974.8,1424.9M4055.6,1414.0L4112.7,1433.4M4368.9,1440.6L4447.0,1462.8M4521.1,1449.8L4633.0,1479.2M4704.0,1465.2L4833.5,1496.9M5112.9,1499.7L5285.4,1536.7M5379.7,1526.5L5541.3,1559.2M5634.3,1548.2L5820.9,1583.9M2294.8,1306.0L3666.8,1385.8M1793.6,1289.5L2153.0,1311.5M3915.2,1419.2L4749.7,1470.2M1630.8,1286.2L1894.2,1302.7M4478.9,1464.8L5262.3,1514.0M1493.5,1284.3L1698.0,1297.4M5034.3,1512.3L5793.2,1561.2M1244.8,1282.0L1412.8,1293.4M6156.7,1616.2L7104.9,1680.7M1151.3,1282.9L1294.4,1292.9M6791.1,1677.8L7770.9,1746.4M1038.0,1282.4L1176.4,1292.4M7573.6,1753.8L8774.5,1840.4M848.5,1284.2L961.1,1292.8M770.5,1286.5L862.5,1293.8M673.6,1287.5L781.7,1296.3M510.8,1292.3L597.4,1299.9M427.1,1294.8L512.1,1302.5M341.8,1297.3L425.2,1305.2M166.2,1302.5L246.0,1310.7M91.0,1306.8L153.7,1313.6M-1.5,1309.6L75.3,1318.3M-178.2,1317.0L-104.7,1326.2M-263.1,1321.8L-205.9,1329.4M-350.9,1326.8L-294.9,1334.6M-535.6,1337.2L-482.6,1345.5M-632.9,1342.7L-581.6,1351.3M-733.8,1348.4L-684.3,1357.3M-935.7,1362.8L-889.8,1372.6M-1049.0,1369.2L-1005.5,1379.4M-1166.6,1375.9L-1125.8,1386.5M-1407.9,1392.9L-1372.8,1404.6M-1533.8,1403.6L-1501.7,1415.9M-1667.2,1414.9L-1638.6,1428.0M-1964.3,1436.0L-1944.7,1450.6M-2123.7,1449.4L-2109.2,1464.9M-2293.8,1463.6L-2285.3,1480.3M-2671.0,1495.2L-2677.3,1514.4M-2880.9,1512.7L-2896.4,1533.5M-3107.2,1531.7L-3133.3,1554.1M-3630.0,1580.8L-3684.3,1607.8M-3922.9,1605.5L-3994.7,1635.1M-4243.2,1632.6L-4360.5,1673.8M-5018.4,1704.7L-5210.2,1756.7M-5502.3,1753.1L-5696.4,1800.3M-6060.6,1808.9L-6310.0,1864.0M-7387.2,1933.4L-7476.1,1950.0" stroke="#939393" stroke-opacity="0.745" stroke-width="1.09" fill="none" clip-path="url(#fl)"/>
<path d="M-1270.9,1371.4L-4658.2,1649.6M-840.7,1343.5L-1754.3,1420.3M-3460.6,1563.8L-6632.6,1830.6M-324.1,1313.8L-674.1,1344.8M-152.6,1305.7L-441.7,1331.9M-15.1,1300.3L-227.4,1320.1M244.5,1290.2L83.4,1306.0M367.1,1285.4L216.4,1300.6M466.2,1282.7L322.9,1297.7M658.2,1277.6L548.4,1289.8M734.7,1277.1L628.8,1289.2M810.8,1276.5L726.5,1286.5M976.8,1273.5L900.2,1283.2M1051.2,1273.0L977.7,1282.7M1125.3,1272.4L1054.9,1282.1M1260.1,1273.2L1194.8,1282.9M1333.8,1272.7L1271.5,1282.3M1395.6,1274.0L1335.5,1283.8M1532.0,1274.8L1477.1,1284.6M1595.4,1276.1L1553.6,1284.0M1659.5,1277.5L1619.5,1285.5M1789.9,1280.3L1753.6,1288.4M1856.1,1281.7L1821.8,1289.9M1923.1,1283.1L1890.8,1291.4M2052.4,1288.1L2023.8,1296.7M2122.2,1289.5L2095.7,1298.3M2192.7,1291.1L2168.5,1299.9M2331.5,1296.3L2311.5,1305.6M2400.8,1300.2L2382.9,1309.7M2472.1,1304.2L2456.5,1314.0M2623.7,1310.0L2613.2,1320.2M2700.9,1314.3L2693.1,1324.8M2780.5,1318.7L2775.5,1329.5M2947.3,1327.9L2948.5,1339.5M3034.6,1332.7L3039.3,1344.7M3124.8,1337.7L3133.2,1350.0M3314.3,1348.2L3330.8,1361.4M3419.0,1357.0L3440.4,1370.9M3523.2,1362.8L3549.5,1377.3M3752.0,1378.8L3790.0,1394.7M3869.5,1385.4L3925.3,1406.3M4003.7,1396.4L4055.6,1414.0M4281.8,1415.9L4368.9,1440.6M4441.6,1428.9L4521.1,1449.8M4612.4,1442.8L4704.0,1465.2M4991.9,1473.7L5112.9,1499.7M5203.7,1490.9L5379.7,1526.5M5432.3,1509.5L5634.3,1548.2M2488.4,1303.8L3376.0,1353.1M2122.2,1289.5L3978.6,1395.0M1883.7,1282.0L2294.8,1306.0M3666.8,1385.8L4510.5,1434.9M1568.9,1275.8L1793.6,1289.5M4749.7,1470.2L5491.9,1515.6M1437.6,1274.0L1630.8,1286.2M5262.3,1514.0L6047.0,1563.2M1327.7,1273.6L1493.5,1284.3M5793.2,1561.2L6608.5,1613.7M1109.2,1272.7L1244.8,1282.0M7104.9,1680.7L8122.6,1750.0M1018.6,1273.6L1151.3,1282.9M7770.9,1746.4L8981.2,1831.1M927.4,1274.4L1038.0,1282.4M8774.5,1840.4L10057.1,1932.9M743.1,1276.1L848.5,1284.2M666.6,1278.3L770.5,1286.5M588.7,1280.5L673.6,1287.5M412.9,1283.7L510.8,1292.3M331.1,1286.0L427.1,1294.8M262.9,1289.8L341.8,1297.3M90.8,1294.7L166.2,1302.5M16.6,1298.8L91.0,1306.8M-74.0,1301.4L-1.5,1309.6M-233.8,1310.1L-178.2,1317.0M-317.5,1314.7L-263.1,1321.8M-404.1,1319.4L-350.9,1326.8M-585.9,1329.3L-535.6,1337.2M-681.6,1334.5L-632.9,1342.7M-780.7,1339.9L-733.8,1348.4M-989.6,1351.3L-935.7,1362.8M-1090.0,1359.6L-1049.0,1369.2M-1205.1,1366.0L-1166.6,1375.9M-1441.0,1382.0L-1407.9,1392.9M-1564.0,1392.0L-1533.8,1403.6M-1694.0,1402.6L-1667.2,1414.9M-1982.7,1422.4L-1964.3,1436.0M-2137.2,1434.8L-2123.7,1449.4M-2301.7,1448.1L-2293.8,1463.6M-2665.2,1477.4L-2671.0,1495.2M-2866.6,1493.6L-2880.9,1512.7M-3083.1,1511.1L-3107.2,1531.7M-3580.5,1556.1L-3630.0,1580.8M-3857.7,1578.6L-3922.9,1605.5M-4159.6,1603.2L-4243.2,1632.6M-4883.6,1668.1L-5018.4,1704.7M-5330.5,1711.2L-5502.3,1753.1M-5842.0,1760.6L-6060.6,1808.9M-7042.3,1869.2L-7387.2,1933.4M-7837.3,1945.3L-7864.7,1950.0" stroke="#939393" stroke-opacity="0.728" stroke-width="1.07" fill="none" clip-path="url(#fl)"/>
<path d="M-1005.9,1342.2L-5717.9,1720.3M-661.5,1321.3L-1270.9,1371.4M-4658.2,1649.6L-7737.0,1902.4M-446.1,1310.3L-840.7,1343.5M-6632.6,1830.6L-8051.5,1950.0M-84.8,1292.7L-324.1,1313.8M45.1,1287.8L-152.6,1305.7M170.3,1283.1L-15.1,1300.3M388.2,1276.0L244.5,1290.2M483.5,1273.6L367.1,1285.4M576.9,1271.2L466.2,1282.7M742.3,1268.3L658.2,1277.6M831.2,1266.0L734.7,1277.1M903.7,1265.5L810.8,1276.5M1047.8,1264.5L976.8,1273.5M1119.4,1264.0L1051.2,1273.0M1190.6,1263.5L1125.3,1272.4M1320.6,1264.2L1260.1,1273.2M1380.3,1265.5L1333.8,1272.7M1451.4,1265.0L1395.6,1274.0M1573.0,1267.5L1532.0,1274.8M1634.7,1268.7L1595.4,1276.1M1706.2,1268.2L1659.5,1277.5M1824.0,1272.6L1789.9,1280.3M1888.4,1273.9L1856.1,1281.7M1953.5,1275.3L1923.1,1283.1M2085.8,1278.0L2052.4,1288.1M2147.0,1281.3L2122.2,1289.5M2215.5,1282.8L2192.7,1291.1M2350.2,1287.7L2331.5,1296.3M2417.5,1291.3L2400.8,1300.2M2486.7,1295.0L2472.1,1304.2M2633.5,1300.5L2623.7,1310.0M2708.2,1304.5L2700.9,1314.3M2785.2,1308.6L2780.5,1318.7M2946.1,1317.2L2947.3,1327.9M3030.3,1321.6L3034.6,1332.7M3117.1,1326.3L3124.8,1337.7M3299.1,1336.0L3314.3,1348.2M3399.3,1344.1L3419.0,1357.0M3499.0,1349.5L3523.2,1362.8M3717.2,1364.2L3752.0,1378.8M3829.1,1370.3L3869.5,1385.4M3956.3,1380.4L4003.7,1396.4M4219.3,1398.2L4281.8,1415.9M4369.6,1410.0L4441.6,1428.9M4529.7,1422.6L4612.4,1442.8M4883.6,1450.4L4991.9,1473.7M5080.0,1465.9L5203.7,1490.9M5291.1,1482.5L5432.3,1509.5M1992.1,1276.3L2488.4,1303.8M3376.0,1353.1L4253.3,1401.8M1790.7,1270.7L2122.2,1289.5M3978.6,1395.0L4762.9,1439.6M1639.5,1267.8L1883.7,1282.0M4510.5,1434.9L5237.9,1477.2M1385.9,1264.6L1568.9,1275.8M5491.9,1515.6L6302.6,1565.2M1280.3,1264.2L1437.6,1274.0M6047.0,1563.2L6890.5,1616.1M1175.1,1263.8L1327.7,1273.6M6608.5,1613.7L7465.4,1668.9M1000.5,1265.3L1109.2,1272.7M8122.6,1750.0L9183.3,1822.1M912.3,1266.1L1018.6,1273.6M8981.2,1831.1L10270.7,1921.4M823.5,1266.9L927.4,1274.4M10057.1,1932.9L10294.5,1950.0M660.1,1269.7L743.1,1276.1M584.9,1271.8L666.6,1278.3M492.7,1272.7L588.7,1280.5M336.1,1276.9L412.9,1283.7M270.5,1280.5L331.1,1286.0M188.4,1282.7L262.9,1289.8M33.5,1288.8L90.8,1294.7M-53.6,1291.3L16.6,1298.8M-129.0,1295.2L-74.0,1301.4M-299.6,1301.9L-233.8,1310.1M-382.0,1306.2L-317.5,1314.7M-467.0,1310.7L-404.1,1319.4M-645.3,1320.0L-585.9,1329.3M-739.0,1324.9L-681.6,1334.5M-825.1,1331.9L-780.7,1339.9M-1030.1,1342.7L-989.6,1351.3M-1128.8,1350.6L-1090.0,1359.6M-1241.4,1356.5L-1205.1,1366.0M-1472.2,1371.7L-1441.0,1382.0M-1592.3,1381.1L-1564.0,1392.0M-1719.2,1391.1L-1694.0,1402.6M-1999.9,1409.6L-1982.7,1422.4M-2149.8,1421.3L-2137.2,1434.8M-2309.1,1433.7L-2301.7,1448.1M-2659.8,1460.9L-2665.2,1477.4M-2853.4,1476.0L-2866.6,1493.6M-3061.0,1492.1L-3083.1,1511.1M-3535.2,1533.5L-3580.5,1556.1M-3798.3,1554.1L-3857.7,1578.6M-4083.7,1576.5L-4159.6,1603.2M-4762.6,1635.2L-4883.6,1668.1M-5177.5,1674.0L-5330.5,1711.2M-5604.0,1708.0L-5842.0,1760.6M-6743.1,1813.4L-7042.3,1869.2M-7455.9,1879.4L-7837.3,1945.3" stroke="#939393" stroke-opacity="0.712" stroke-width="1.06" fill="none" clip-path="url(#fl)"/>
<path d="M-2222.2,1413.2L-2765.2,1453.9M-1170.0,1340.9L-4877.0,1625.3M-565.1,1306.8L-1005.9,1342.2M-5717.9,1720.3L-8580.5,1950.0M-336.2,1294.6L-661.5,1321.3M-7737.0,1902.4L-8316.0,1950.0M-175.5,1287.5L-446.1,1310.3M100.0,1276.3L-84.8,1292.7M198.3,1273.9L45.1,1287.8M314.3,1269.7L170.3,1283.1M499.7,1265.1L388.2,1276.0M589.7,1262.8L483.5,1273.6M678.1,1260.6L576.9,1271.2M835.2,1258.0L742.3,1268.3M905.3,1257.5L831.2,1266.0M975.1,1257.1L903.7,1265.5M1113.8,1256.1L1047.8,1264.5M1182.7,1255.7L1119.4,1264.0M1239.5,1256.8L1190.6,1263.5M1365.9,1257.5L1320.6,1264.2M1434.7,1257.0L1380.3,1265.5M1493.1,1258.2L1451.4,1265.0M1620.9,1258.9L1573.0,1267.5M1680.7,1260.1L1634.7,1268.7M1741.1,1261.2L1706.2,1268.2M1863.7,1263.7L1824.0,1272.6M1926.0,1264.9L1888.4,1273.9M1982.0,1267.9L1953.5,1275.3M2110.6,1270.5L2085.8,1278.0M2170.4,1273.6L2147.0,1281.3M2236.8,1275.0L2215.5,1282.8M2367.8,1279.6L2350.2,1287.7M2433.2,1283.0L2417.5,1291.3M2500.4,1286.5L2486.7,1295.0M2642.6,1291.6L2633.5,1300.5M2715.0,1295.3L2708.2,1304.5M2789.5,1299.2L2785.2,1308.6M2945.0,1307.2L2946.1,1317.2M3026.2,1311.3L3030.3,1321.6M3109.9,1315.6L3117.1,1326.3M3285.0,1324.7L3299.1,1336.0M3381.1,1332.2L3399.3,1344.1M3476.7,1337.2L3499.0,1349.5M3685.2,1350.8L3717.2,1364.2M3792.0,1356.4L3829.1,1370.3M3912.8,1365.7L3956.3,1380.4M4162.3,1382.0L4219.3,1398.2M4304.0,1392.8L4369.6,1410.0M4454.6,1404.2L4529.7,1422.6M4763.1,1424.6L4883.6,1450.4M4942.9,1438.2L5080.0,1465.9M5135.4,1452.7L5291.1,1482.5M2406.8,1281.6L3496.2,1338.2M2095.8,1270.8L4034.6,1373.6M1726.4,1261.5L1992.1,1276.3M4253.3,1401.8L4955.9,1440.8M1581.6,1258.8L1790.7,1270.7M4762.9,1439.6L5450.0,1478.6M1459.0,1257.3L1639.5,1267.8M5237.9,1477.2L5955.5,1518.9M1254.5,1256.6L1385.9,1264.6M6302.6,1565.2L7056.4,1611.3M1152.7,1256.2L1280.3,1264.2M6890.5,1616.1L7777.7,1671.7M1068.4,1256.9L1175.1,1263.8M7465.4,1668.9L8500.0,1735.5M881.6,1257.2L1000.5,1265.3M9183.3,1822.1L10479.0,1910.3M812.2,1259.1L912.3,1266.1M10270.7,1921.4L10678.5,1950.0M725.6,1259.9L823.5,1266.9M565.9,1262.5L660.1,1269.7M492.2,1264.5L584.9,1271.8M417.1,1266.5L492.7,1272.7M263.2,1270.5L336.1,1276.9M198.3,1273.9L270.5,1280.5M117.7,1276.0L188.4,1282.7M-34.7,1281.8L33.5,1288.8M-107.1,1285.5L-53.6,1291.3M-194.4,1287.9L-129.0,1295.2M-349.7,1295.7L-299.6,1301.9M-430.9,1299.8L-382.0,1306.2M-514.7,1304.0L-467.0,1310.7M-690.3,1312.9L-645.3,1320.0M-782.4,1317.6L-739.0,1324.9M-867.4,1324.2L-825.1,1331.9M-1068.5,1334.5L-1030.1,1342.7M-1165.5,1342.0L-1128.8,1350.6M-1275.8,1347.6L-1241.4,1356.5M-1501.6,1362.0L-1472.2,1371.7M-1619.0,1370.9L-1592.3,1381.1M-1742.9,1380.2L-1719.2,1391.1M-2016.0,1397.7L-1999.9,1409.6M-2161.6,1408.6L-2149.8,1421.3M-2316.0,1420.2L-2309.1,1433.7M-2654.8,1445.6L-2659.8,1460.9M-2841.2,1459.6L-2853.4,1476.0M-3040.5,1474.6L-3061.0,1492.1M-3493.6,1512.8L-3535.2,1533.5M-3743.9,1531.7L-3798.3,1554.1M-4014.5,1552.2L-4083.7,1576.5M-4653.3,1605.6L-4762.6,1635.2M-5040.2,1640.5L-5177.5,1674.0M-5436.8,1671.1L-5604.0,1708.0M-6480.9,1764.6L-6743.1,1813.4M-7049.8,1809.2L-7455.9,1879.4M-7784.2,1874.4L-8253.5,1950.0" stroke="#939393" stroke-opacity="0.695" stroke-width="1.05" fill="none" clip-path="url(#fl)"/>
<path d="M-1416.5,1345.8L-4124.1,1544.8M-969.2,1319.1L-2222.2,1413.2M-2765.2,1453.9L-5915.0,1690.3M-681.2,1303.4L-1170.0,1340.9M-4877.0,1625.3L-7874.7,1855.3M-262.7,1282.6L-565.1,1306.8M-111.0,1276.1L-336.2,1294.6M11.5,1271.8L-175.5,1287.5M244.0,1263.6L100.0,1276.3M336.0,1261.4L198.3,1273.9M443.9,1257.6L314.3,1269.7M601.7,1255.0L499.7,1265.1M687.1,1253.0L589.7,1262.8M770.9,1251.0L678.1,1260.6M906.8,1250.1L835.2,1258.0M974.3,1249.6L905.3,1257.5M1041.6,1249.2L975.1,1257.1M1175.3,1248.3L1113.8,1256.1M1241.7,1247.9L1182.7,1255.7M1296.9,1249.0L1239.5,1256.8M1419.1,1249.6L1365.9,1257.5M1475.5,1250.7L1434.7,1257.0M1542.0,1250.2L1493.1,1258.2M1656.9,1252.4L1620.9,1258.9M1715.2,1253.6L1680.7,1260.1M1774.1,1254.7L1741.1,1261.2M1893.5,1257.0L1863.7,1263.7M1954.2,1258.1L1926.0,1264.9M2015.4,1259.3L1982.0,1267.9M2134.1,1263.4L2110.6,1270.5M2192.3,1266.4L2170.4,1273.6M2256.9,1267.6L2236.8,1275.0M2384.3,1272.0L2367.8,1279.6M2447.9,1275.2L2433.2,1283.0M2516.3,1276.5L2500.4,1286.5M2651.2,1283.3L2642.6,1291.6M2721.4,1286.8L2715.0,1295.3M2793.6,1290.3L2789.5,1299.2M2944.0,1297.8L2945.0,1307.2M3022.4,1301.7L3026.2,1311.3M3103.1,1305.8L3109.9,1315.6M3271.9,1314.2L3285.0,1324.7M3364.1,1321.2L3381.1,1332.2M3456.0,1325.8L3476.7,1337.2M3655.6,1338.4L3685.2,1350.8M3757.8,1343.6L3792.0,1356.4M3872.8,1352.1L3912.8,1365.7M4110.0,1367.1L4162.3,1382.0M4244.1,1377.0L4304.0,1392.8M4370.1,1383.6L4454.6,1404.2M4676.9,1406.0L4763.1,1424.6M4845.2,1418.4L4942.9,1438.2M5024.8,1431.5L5135.4,1452.7M2195.0,1265.5L3846.5,1349.4M1975.9,1259.3L2406.8,1281.6M3496.2,1338.2L4294.0,1379.6M1788.3,1254.4L2095.8,1270.8M4034.6,1373.6L4716.0,1409.8M1527.8,1250.5L1726.4,1261.5M4955.9,1440.8L5663.3,1480.0M1409.9,1249.1L1581.6,1258.8M5450.0,1478.6L6189.6,1520.6M1311.2,1248.7L1459.0,1257.3M5955.5,1518.9L6714.7,1563.1M1131.6,1249.0L1254.5,1256.6M7056.4,1611.3L7951.0,1666.0M1033.3,1248.7L1152.7,1256.2M7777.7,1671.7L8849.6,1739.0M951.4,1249.4L1068.4,1256.9M8500.0,1735.5L9773.7,1817.6M801.6,1251.8L881.6,1257.2M10479.0,1910.3L11062.5,1950.0M717.7,1252.5L812.2,1259.1M648.3,1254.3L725.6,1259.9M491.6,1256.8L565.9,1262.5M419.0,1258.7L492.2,1264.5M345.3,1260.6L417.1,1266.5M207.6,1265.6L263.2,1270.5M129.7,1267.6L198.3,1273.9M50.6,1269.7L117.7,1276.0M-99.4,1275.1L-34.7,1281.8M-170.7,1278.6L-107.1,1285.5M-244.1,1282.2L-194.4,1287.9M-397.5,1289.8L-349.7,1295.7M-477.6,1293.7L-430.9,1299.8M-560.2,1297.7L-514.7,1304.0M-733.1,1306.2L-690.3,1312.9M-823.7,1310.6L-782.4,1317.6M-917.3,1315.2L-867.4,1324.2M-1105.0,1326.7L-1068.5,1334.5M-1200.4,1333.8L-1165.5,1342.0M-1308.3,1339.2L-1275.8,1347.6M-1529.4,1352.8L-1501.6,1362.0M-1644.3,1361.2L-1619.0,1370.9M-1765.2,1370.0L-1742.9,1380.2M-2031.2,1386.5L-2016.0,1397.7M-2172.6,1396.7L-2161.6,1408.6M-2322.4,1407.6L-2316.0,1420.2M-2650.1,1431.4L-2654.8,1445.6M-2829.8,1444.4L-2841.2,1459.6M-3021.6,1458.3L-3040.5,1474.6M-3455.3,1493.7L-3493.6,1512.8M-3693.9,1511.1L-3743.9,1531.7M-3951.2,1530.0L-4014.5,1552.2M-4554.2,1578.7L-4653.3,1605.6M-4916.4,1610.4L-5040.2,1640.5M-5286.8,1637.9L-5436.8,1671.1M-6195.7,1711.4L-6480.9,1764.6M-6770.0,1760.8L-7049.8,1809.2M-7433.7,1818.0L-7784.2,1874.4" stroke="#939393" stroke-opacity="0.679" stroke-width="1.03" fill="none" clip-path="url(#fl)"/>
<path d="M-1813.1,1360.9L-3372.1,1470.8M-794.6,1300.1L-1416.5,1345.8M-4124.1,1544.8L-6760.6,1738.5M-561.0,1288.5L-969.2,1319.1M-5915.0,1690.3L-9131.5,1931.8M-372.2,1279.7L-681.2,1303.4M-7874.7,1855.3L-9109.7,1950.0M-73.9,1267.4L-262.7,1282.6M64.6,1261.7L-111.0,1276.1M177.1,1257.9L11.5,1271.8M374.0,1252.1L244.0,1263.6M460.3,1250.1L336.0,1261.4M545.2,1248.2L443.9,1257.6M695.4,1245.8L601.7,1255.0M776.6,1243.9L687.1,1253.0M842.5,1243.5L770.9,1251.0M973.6,1242.7L906.8,1250.1M1038.8,1242.3L974.3,1249.6M1103.7,1241.9L1041.6,1249.2M1232.7,1241.0L1175.3,1248.3M1286.1,1242.0L1241.7,1247.9M1350.4,1241.6L1296.9,1249.0M1468.7,1242.2L1419.1,1249.6M1523.5,1243.3L1475.5,1250.7M1578.8,1244.3L1542.0,1250.2M1690.9,1246.4L1656.9,1252.4M1747.8,1247.4L1715.2,1253.6M1805.2,1248.5L1774.1,1254.7M1921.7,1250.6L1893.5,1257.0M1980.8,1251.7L1954.2,1258.1M2040.4,1252.9L2015.4,1259.3M2156.1,1256.7L2134.1,1263.4M2218.0,1257.9L2192.3,1266.4M2275.9,1260.7L2256.9,1267.6M2399.8,1264.8L2384.3,1272.0M2461.7,1267.8L2447.9,1275.2M2528.2,1269.1L2516.3,1276.5M2659.3,1275.4L2651.2,1283.3M2727.4,1278.7L2721.4,1286.8M2797.4,1282.1L2793.6,1290.3M2943.0,1289.1L2944.0,1297.8M3018.9,1292.8L3022.4,1301.7M3096.9,1296.5L3103.1,1305.8M3259.7,1304.4L3271.9,1314.2M3348.4,1310.9L3364.1,1321.2M3436.8,1315.2L3456.0,1325.8M3628.3,1326.9L3655.6,1338.4M3726.1,1331.7L3757.8,1343.6M3835.9,1339.7L3872.8,1352.1M4062.0,1353.5L4110.0,1367.1M4189.2,1362.6L4244.1,1377.0M4308.9,1368.6L4370.1,1383.6M4598.3,1389.2L4676.9,1406.0M4756.5,1400.4L4845.2,1418.4M4924.7,1412.4L5024.8,1431.5M2337.3,1262.8L3605.9,1324.6M1887.2,1249.8L2195.0,1265.5M3846.5,1349.4L4509.6,1383.1M1728.2,1246.4L1975.9,1259.3M4294.0,1379.6L4954.8,1413.9M1592.6,1244.1L1788.3,1254.4M4716.0,1409.8L5414.0,1446.8M1381.8,1242.4L1527.8,1250.5M5663.3,1480.0L6333.6,1517.2M1286.1,1242.0L1409.9,1249.1M6189.6,1520.6L6867.1,1559.1M1190.7,1241.7L1311.2,1248.7M6714.7,1563.1L7500.2,1608.8M1016.5,1242.0L1131.6,1249.0M7951.0,1666.0L9030.0,1731.9M937.0,1242.6L1033.3,1248.7M8849.6,1739.0L9963.5,1808.9M857.0,1243.3L951.4,1249.4M9773.7,1817.6L11125.7,1904.6M710.3,1245.6L801.6,1251.8M628.5,1246.2L717.7,1252.5M560.3,1247.9L648.3,1254.3M420.8,1251.4L491.6,1256.8M349.4,1253.2L419.0,1258.7M276.8,1255.0L345.3,1260.6M141.0,1259.8L207.6,1265.6M64.6,1261.7L129.7,1267.6M-0.7,1264.8L50.6,1269.7M-148.7,1270.1L-99.4,1275.1M-219.3,1273.4L-170.7,1278.6M-303.4,1275.6L-244.1,1282.2M-454.4,1282.7L-397.5,1289.8M-533.2,1286.4L-477.6,1293.7M-614.3,1290.2L-560.2,1297.7M-774.0,1299.8L-733.1,1306.2M-863.2,1304.0L-823.7,1310.6M-955.1,1308.4L-917.3,1315.2M-1139.7,1319.3L-1105.0,1326.7M-1241.5,1324.2L-1200.4,1333.8M-1339.2,1331.2L-1308.3,1339.2M-1555.7,1344.1L-1529.4,1352.8M-1668.1,1352.0L-1644.3,1361.2M-1786.3,1360.4L-1765.2,1370.0M-2045.4,1375.9L-2031.2,1386.5M-2183.0,1385.5L-2172.6,1396.7M-2328.4,1395.8L-2322.4,1407.6M-2645.7,1418.0L-2650.1,1431.4M-2819.2,1430.2L-2829.8,1444.4M-3003.9,1443.2L-3021.6,1458.3M-3419.8,1476.0L-3455.3,1493.7M-3647.9,1492.2L-3693.9,1511.1M-3893.0,1509.5L-3951.2,1530.0M-4463.9,1554.2L-4554.2,1578.7M-4804.2,1583.0L-4916.4,1610.4M-5151.4,1608.0L-5286.8,1637.9M-5995.4,1674.1L-6195.7,1711.4M-6522.7,1718.1L-6770.0,1760.8M-7127.0,1768.5L-7433.7,1818.0M-8645.6,1895.3L-9031.2,1950.0" stroke="#939393" stroke-opacity="0.662" stroke-width="1.02" fill="none" clip-path="url(#fl)"/>
<path d="M-1349.0,1322.2L-4438.7,1535.7M-937.5,1299.2L-1813.1,1360.9M-3372.1,1470.8L-6095.8,1662.9M-453.2,1275.1L-794.6,1300.1M-6760.6,1738.5L-9639.1,1950.0M-277.2,1267.2L-561.0,1288.5M-9131.5,1931.8L-9374.4,1950.0M-134.0,1261.5L-372.2,1279.7M93.8,1254.0L-73.9,1267.4M202.2,1250.4L64.6,1261.7M307.3,1246.9L177.1,1257.9M475.7,1243.1L374.0,1252.1M557.8,1241.3L460.3,1250.1M638.4,1239.5L545.2,1248.2M781.9,1237.3L695.4,1245.8M845.8,1236.9L776.6,1243.9M909.5,1236.5L842.5,1243.5M1036.1,1235.8L973.6,1242.7M1099.1,1235.4L1038.8,1242.3M1161.8,1235.0L1103.7,1241.9M1276.0,1235.5L1232.7,1241.0M1338.4,1235.2L1286.1,1242.0M1390.8,1236.1L1350.4,1241.6M1506.1,1236.7L1468.7,1242.2M1559.6,1237.7L1523.5,1243.3M1622.1,1237.3L1578.8,1244.3M1730.9,1239.2L1690.9,1246.4M1786.1,1240.2L1747.8,1247.4M1841.8,1241.2L1805.2,1248.5M1948.3,1244.7L1921.7,1250.6M2005.9,1245.7L1980.8,1251.7M2064.1,1246.8L2040.4,1252.9M2177.0,1250.4L2156.1,1256.7M2237.3,1251.5L2218.0,1257.9M2293.8,1254.2L2275.9,1260.7M2414.5,1258.1L2399.8,1264.8M2474.8,1260.9L2461.7,1267.8M2539.4,1262.1L2528.2,1269.1M2666.8,1268.1L2659.3,1275.4M2733.0,1271.2L2727.4,1278.7M2800.9,1274.3L2797.4,1282.1M2942.1,1280.9L2943.0,1289.1M3015.6,1284.4L3018.9,1292.8M3091.0,1287.9L3096.9,1296.5M3248.3,1295.2L3259.7,1304.4M3333.8,1301.4L3348.4,1310.9M3418.9,1305.4L3436.8,1315.2M3602.8,1316.3L3628.3,1326.9M3696.8,1320.7L3726.1,1331.7M3801.8,1328.1L3835.9,1339.7M4017.6,1340.9L4062.0,1353.5M4126.6,1346.2L4189.2,1362.6M4252.6,1354.8L4308.9,1368.6M4526.4,1373.7L4598.3,1389.2M4675.5,1384.0L4756.5,1400.4M4833.7,1395.0L4924.7,1412.4M2525.5,1262.4L3332.0,1300.2M2166.1,1249.9L3902.8,1332.9M1961.7,1244.4L2337.3,1262.8M3605.9,1324.6L4330.1,1360.0M1672.2,1238.9L1887.2,1249.8M4509.6,1383.1L5136.2,1415.0M1541.7,1236.7L1728.2,1246.4M4954.8,1413.9L5612.1,1448.1M1431.1,1235.5L1592.6,1244.1M5414.0,1446.8L6012.6,1478.6M1245.9,1234.8L1381.8,1242.4M6333.6,1517.2L7123.5,1561.1M1153.8,1234.5L1286.1,1242.0M6867.1,1559.1L7783.2,1611.2M1077.5,1235.1L1190.7,1241.7M7500.2,1608.8L8431.8,1663.0M923.5,1236.3L1016.5,1242.0M9030.0,1731.9L10149.1,1800.3M845.8,1236.9L937.0,1242.6M9963.5,1808.9L11319.4,1893.9M767.7,1237.5L857.0,1243.3M11125.7,1904.6L11830.0,1950.0M623.9,1239.7L710.3,1245.6M557.8,1241.3L628.5,1246.2M490.7,1242.9L560.3,1247.9M353.3,1246.2L420.8,1251.4M283.0,1247.9L349.4,1253.2M211.6,1249.6L276.8,1255.0M77.7,1254.2L141.0,1259.8M14.7,1257.1L64.6,1261.7M-61.9,1259.0L-0.7,1264.8M-207.6,1264.0L-148.7,1270.1M-277.2,1267.2L-219.3,1273.4M-348.7,1270.5L-303.4,1275.6M-497.8,1277.3L-454.4,1282.7M-575.5,1280.8L-533.2,1286.4M-655.4,1284.5L-614.3,1290.2M-822.6,1292.2L-774.0,1299.8M-900.8,1297.7L-863.2,1304.0M-991.2,1301.9L-955.1,1308.4M-1172.7,1312.3L-1139.7,1319.3M-1272.6,1317.0L-1241.5,1324.2M-1368.6,1323.6L-1339.2,1331.2M-1580.7,1335.8L-1555.7,1344.1M-1690.7,1343.3L-1668.1,1352.0M-1806.2,1351.3L-1786.3,1360.4M-2058.9,1365.9L-2045.4,1375.9M-2192.8,1375.0L-2183.0,1385.5M-2334.1,1384.6L-2328.4,1395.8M-2641.6,1405.6L-2645.7,1418.0M-2809.3,1417.0L-2819.2,1430.2M-2987.5,1429.1L-3003.9,1443.2M-3387.0,1459.6L-3419.8,1476.0M-3605.3,1474.6L-3647.9,1492.2M-3839.3,1490.6L-3893.0,1509.5M-4381.2,1531.8L-4463.9,1554.2M-4677.9,1552.3L-4804.2,1583.0M-5028.6,1580.9L-5151.4,1608.0M-5815.8,1640.6L-5995.4,1674.1M-6302.6,1680.1L-6522.7,1718.1M-6856.3,1724.9L-7127.0,1768.5M-8132.8,1822.6L-8645.6,1895.3M-8973.2,1890.2L-9420.3,1950.0" stroke="#939393" stroke-opacity="0.646" stroke-width="1.00" fill="none" clip-path="url(#fl)"/>
<path d="M-1079.5,1298.2L-5267.4,1582.0M-776.0,1282.6L-1349.0,1322.2M-4438.7,1535.7L-6916.7,1707.0M-557.5,1272.4L-937.5,1299.2M-6095.8,1662.9L-9196.3,1881.4M-213.4,1257.4L-453.2,1275.1M-98.3,1253.7L-277.2,1267.2M33.1,1248.6L-134.0,1261.5M243.6,1241.9L93.8,1254.0M327.2,1240.1L202.2,1250.4M409.4,1238.3L307.3,1246.9M569.7,1234.8L475.7,1243.1M647.8,1233.1L557.8,1241.3M724.6,1231.5L638.4,1239.5M848.9,1230.7L781.9,1237.3M910.7,1230.4L845.8,1236.9M984.4,1228.7L909.5,1236.5M1094.7,1229.3L1036.1,1235.8M1155.6,1228.9L1099.1,1235.4M1216.3,1228.5L1161.8,1235.0M1327.0,1229.1L1276.0,1235.5M1387.4,1228.7L1338.4,1235.2M1438.4,1229.6L1390.8,1236.1M1550.2,1230.1L1506.1,1236.7M1602.3,1231.0L1559.6,1237.7M1654.8,1232.0L1622.1,1237.3M1761.1,1233.8L1730.9,1239.2M1815.0,1234.8L1786.1,1240.2M1869.4,1235.7L1841.8,1241.2M1979.7,1237.6L1948.3,1244.7M2029.8,1240.0L2005.9,1245.7M2086.5,1241.0L2064.1,1246.8M2196.8,1244.4L2177.0,1250.4M2255.5,1245.5L2237.3,1251.5M2310.7,1248.0L2293.8,1254.2M2428.3,1251.7L2414.5,1258.1M2487.1,1254.4L2474.8,1260.9M2549.9,1255.5L2539.4,1262.1M2674.0,1261.1L2666.8,1268.1M2738.3,1264.1L2733.0,1271.2M2804.3,1267.0L2800.9,1274.3M2941.3,1273.3L2942.1,1280.9M3012.5,1276.5L3015.6,1284.4M3085.5,1279.8L3091.0,1287.9M3237.6,1286.7L3248.3,1295.2M3316.8,1290.3L3333.8,1301.4M3402.1,1296.2L3418.9,1305.4M3579.2,1306.4L3602.8,1316.3M3669.5,1310.5L3696.8,1320.7M3762.5,1314.8L3801.8,1328.1M3976.6,1329.2L4017.6,1340.9M4080.8,1334.1L4126.6,1346.2M4200.7,1342.2L4252.6,1354.8M4444.8,1356.2L4526.4,1373.7M4583.8,1365.5L4675.5,1384.0M4730.9,1375.3L4833.7,1395.0M2053.0,1240.2L2525.5,1262.4M3332.0,1300.2L4129.2,1337.6M1879.0,1236.2L2166.1,1249.9M3902.8,1332.9L4533.9,1363.1M1729.8,1233.1L1961.7,1244.4M4330.1,1360.0L4953.9,1390.4M1494.2,1229.9L1672.2,1238.9M5136.2,1415.0L5811.4,1449.3M1404.0,1229.6L1541.7,1236.7M5612.1,1448.1L6227.5,1480.0M1297.8,1228.4L1431.1,1235.5M6012.6,1478.6L6708.9,1515.5M1134.6,1228.7L1245.9,1234.8M7123.5,1561.1L7940.2,1606.4M1060.4,1229.2L1153.8,1234.5M7783.2,1611.2L8596.9,1657.4M971.0,1228.9L1077.5,1235.1M8431.8,1663.0L9380.2,1718.2M835.2,1230.9L923.5,1236.3M10149.1,1800.3L11508.5,1883.4M759.3,1231.5L845.8,1236.9M11319.4,1893.9L12213.6,1950.0M696.7,1233.0L767.7,1237.5M555.4,1235.0L623.9,1239.7M490.2,1236.6L557.8,1241.3M424.1,1238.1L490.7,1242.9M288.8,1241.3L353.3,1246.2M219.6,1242.9L283.0,1247.9M149.3,1244.5L211.6,1249.6M17.2,1248.9L77.7,1254.2M-45.0,1251.7L14.7,1257.1M-108.9,1254.5L-61.9,1259.0M-252.7,1259.3L-207.6,1264.0M-321.5,1262.4L-277.2,1267.2M-392.1,1265.6L-348.7,1270.5M-539.3,1272.1L-497.8,1277.3M-616.0,1275.5L-575.5,1280.8M-694.9,1279.0L-655.4,1284.5M-859.5,1286.4L-822.6,1292.2M-936.7,1291.6L-900.8,1297.7M-1025.6,1295.6L-991.2,1301.9M-1204.2,1305.6L-1172.7,1312.3M-1302.2,1310.0L-1272.6,1317.0M-1396.5,1316.3L-1368.6,1323.6M-1604.4,1328.0L-1580.7,1335.8M-1712.1,1335.1L-1690.7,1343.3M-1825.1,1342.6L-1806.2,1351.3M-2071.5,1356.5L-2058.9,1365.9M-2202.0,1365.1L-2192.8,1375.0M-2339.5,1374.2L-2334.1,1384.6M-2637.8,1393.8L-2641.6,1405.6M-2800.1,1404.5L-2809.3,1417.0M-2972.1,1415.9L-2987.5,1429.1M-3356.5,1444.4L-3387.0,1459.6M-3565.8,1458.3L-3605.3,1474.6M-3789.7,1473.2L-3839.3,1490.6M-4305.3,1511.2L-4381.2,1531.8M-4586.4,1530.0L-4677.9,1552.3M-4916.8,1556.2L-5028.6,1580.9M-5653.9,1610.5L-5815.8,1640.6M-6105.5,1646.0L-6302.6,1680.1M-6559.6,1677.1L-6856.3,1724.9M-7780.5,1772.6L-8132.8,1822.6M-8536.0,1831.6L-8973.2,1890.2M-9421.7,1900.9L-9809.4,1950.0" stroke="#939393" stroke-opacity="0.629" stroke-width="0.99" fill="none" clip-path="url(#fl)"/>
<path d="M-2210.7,1355.7L-2727.4,1388.8M-1255.4,1299.6L-4625.8,1519.4M-659.6,1269.8L-1079.5,1298.2M-5267.4,1582.0L-7860.4,1757.7M-456.2,1260.5L-776.0,1282.6M-6916.7,1707.0L-10242.2,1936.8M-312.6,1255.1L-557.5,1272.4M-9196.3,1881.4L-10168.7,1950.0M-44.7,1245.0L-213.4,1257.4M61.7,1241.7L-98.3,1253.7M164.9,1238.5L33.1,1248.6M345.9,1233.7L243.6,1241.9M441.2,1230.7L327.2,1240.1M518.9,1229.1L409.4,1238.3M656.6,1227.2L569.7,1234.8M731.2,1225.6L647.8,1233.1M791.6,1225.2L724.6,1231.5M924.0,1223.3L848.9,1230.7M983.5,1223.0L910.7,1230.4M1042.7,1222.7L984.4,1228.7M1149.8,1223.2L1094.7,1229.3M1208.7,1222.8L1155.6,1228.9M1267.5,1222.5L1216.3,1228.5M1375.0,1223.0L1327.0,1229.1M1424.5,1223.8L1387.4,1228.7M1483.1,1223.5L1438.4,1229.6M1583.6,1225.2L1550.2,1230.1M1634.5,1226.1L1602.3,1231.0M1685.8,1226.9L1654.8,1232.0M1789.8,1228.7L1761.1,1233.8M1842.5,1229.6L1815.0,1234.8M1895.6,1230.5L1869.4,1235.7M2003.3,1232.3L1979.7,1237.6M2052.4,1234.5L2029.8,1240.0M2107.8,1235.5L2086.5,1241.0M2215.5,1238.8L2196.8,1244.4M2272.8,1239.8L2255.5,1245.5M2326.7,1242.2L2310.7,1248.0M2441.4,1245.7L2428.3,1251.7M2498.8,1248.2L2487.1,1254.4M2559.9,1249.3L2549.9,1255.5M2680.7,1254.6L2674.0,1261.1M2743.3,1257.3L2738.3,1264.1M2807.4,1260.2L2804.3,1267.0M2940.5,1266.0L2941.3,1273.3M3009.5,1269.1L3012.5,1276.5M3080.3,1272.2L3085.5,1279.8M3227.6,1278.6L3237.6,1286.7M3304.1,1282.0L3316.8,1290.3M3386.5,1287.5L3402.1,1296.2M3551.8,1294.9L3579.2,1306.4M3644.0,1301.0L3669.5,1310.5M3733.5,1305.0L3762.5,1314.8M3929.4,1315.8L3976.6,1329.2M4038.3,1322.9L4080.8,1334.1M4152.7,1330.4L4200.7,1342.2M4385.2,1343.4L4444.8,1356.2M4517.0,1352.0L4583.8,1365.5M4656.2,1361.0L4730.9,1375.3M2430.1,1245.2L3435.1,1289.7M2140.8,1236.2L3953.5,1318.0M1802.4,1228.5L2053.0,1240.2M4129.2,1337.6L4741.6,1366.3M1677.0,1226.5L1879.0,1236.2M4533.9,1363.1L5124.2,1391.3M1554.1,1224.6L1729.8,1233.1M4953.9,1390.4L5567.7,1420.3M1362.4,1223.2L1494.2,1229.9M5811.4,1449.3L6443.7,1481.4M1275.2,1222.9L1404.0,1229.6M6227.5,1480.0L6943.7,1517.2M1188.3,1222.6L1297.8,1228.4M6708.9,1515.5L7529.0,1559.1M1029.7,1222.8L1134.6,1228.7M7940.2,1606.4L8908.0,1660.1M957.4,1223.4L1060.4,1229.2M8596.9,1657.4L9725.1,1721.5M884.6,1223.9L971.0,1228.9M9380.2,1718.2L10717.6,1796.0M751.4,1225.8L835.2,1230.9M11508.5,1883.4L12597.2,1950.0M677.1,1226.3L759.3,1231.5M615.6,1227.7L696.7,1233.0M489.8,1230.6L555.4,1235.0M425.5,1232.0L490.2,1236.6M360.3,1233.5L424.1,1238.1M227.1,1236.5L288.8,1241.3M158.9,1238.1L219.6,1242.9M101.5,1240.6L149.3,1244.5M-29.1,1244.8L17.2,1248.9M-102.0,1246.5L-45.0,1251.7M-165.0,1249.2L-108.9,1254.5M-296.0,1254.9L-252.7,1259.3M-374.4,1256.7L-321.5,1262.4M-444.1,1259.7L-392.1,1265.6M-589.0,1265.9L-539.3,1272.1M-654.9,1270.4L-616.0,1275.5M-732.6,1273.8L-694.9,1279.0M-894.8,1280.8L-859.5,1286.4M-979.5,1284.5L-936.7,1291.6M-1058.6,1289.7L-1025.6,1295.6M-1234.2,1299.2L-1204.2,1305.6M-1330.4,1303.4L-1302.2,1310.0M-1423.1,1309.5L-1396.5,1316.3M-1626.9,1320.5L-1604.4,1328.0M-1732.4,1327.3L-1712.1,1335.1M-1847.3,1332.5L-1825.1,1342.6M-2083.6,1347.6L-2071.5,1356.5M-2210.7,1355.7L-2202.0,1365.1M-2344.5,1364.3L-2339.5,1374.2M-2634.2,1382.8L-2637.8,1393.8M-2791.3,1392.9L-2800.1,1404.5M-2957.7,1403.5L-2972.1,1415.9M-3328.0,1430.2L-3356.5,1444.4M-3529.1,1443.2L-3565.8,1458.3M-3743.7,1457.0L-3789.7,1473.2M-4235.3,1492.2L-4305.3,1511.2M-4502.4,1509.5L-4586.4,1530.0M-4814.5,1533.6L-4916.8,1556.2M-5507.1,1583.1L-5653.9,1610.5M-5927.8,1615.3L-6105.5,1646.0M-6349.9,1643.4L-6559.6,1677.1M-7469.7,1728.5L-7780.5,1772.6M-8154.3,1780.5L-8536.0,1831.6M-8948.7,1840.9L-9421.7,1900.9" stroke="#939393" stroke-opacity="0.613" stroke-width="0.98" fill="none" clip-path="url(#fl)"/>
<path d="M-1508.1,1305.6L-4019.3,1463.5M-1042.9,1281.0L-2210.7,1355.7M-2727.4,1388.8L-5442.2,1562.6M-759.6,1267.2L-1255.4,1299.6M-4625.8,1519.4L-7059.7,1678.1M-387.0,1251.3L-659.6,1269.8M-7860.4,1757.7L-10698.4,1950.0M-250.5,1246.3L-456.2,1260.5M-10242.2,1936.8L-10433.5,1950.0M-120.0,1241.6L-312.6,1255.1M106.7,1233.9L-44.7,1245.0M205.5,1230.9L61.7,1241.7M285.2,1229.3L164.9,1238.5M455.8,1224.9L345.9,1233.7M531.2,1223.4L441.2,1230.7M605.3,1221.8L518.9,1229.1M737.3,1220.0L656.6,1227.2M796.1,1219.7L731.2,1225.6M866.8,1218.2L791.6,1225.2M982.6,1217.6L924.0,1223.3M1040.2,1217.3L983.5,1223.0M1097.5,1216.9L1042.7,1222.7M1201.6,1217.4L1149.8,1223.2M1258.8,1217.1L1208.7,1222.8M1306.3,1217.9L1267.5,1222.5M1411.4,1218.4L1375.0,1223.0M1468.4,1218.0L1424.5,1223.8M1516.9,1218.8L1483.1,1223.5M1615.3,1220.5L1583.6,1225.2M1672.6,1220.1L1634.5,1226.1M1722.5,1221.0L1685.8,1226.9M1823.7,1222.6L1789.8,1228.7M1874.9,1223.5L1842.5,1229.6M1920.6,1225.5L1895.6,1230.5M2025.8,1227.3L2003.3,1232.3M2079.1,1228.1L2052.4,1234.5M2128.0,1230.3L2107.8,1235.5M2233.3,1233.4L2215.5,1238.8M2289.1,1234.3L2272.8,1239.8M2341.8,1236.6L2326.7,1242.2M2453.8,1239.9L2441.4,1245.7M2509.8,1242.4L2498.8,1248.2M2569.3,1243.4L2559.9,1249.3M2687.1,1248.4L2680.7,1254.6M2748.0,1251.0L2743.3,1257.3M2810.4,1253.7L2807.4,1260.2M2939.7,1259.2L2940.5,1266.0M3006.8,1262.1L3009.5,1269.1M3075.5,1265.0L3080.3,1272.2M3218.2,1271.1L3227.6,1278.6M3292.3,1274.3L3304.1,1282.0M3371.8,1279.5L3386.5,1287.5M3531.4,1286.3L3551.8,1294.9M3620.2,1292.0L3644.0,1301.0M3706.4,1295.8L3733.5,1305.0M3894.5,1305.9L3929.4,1315.8M3998.8,1312.6L4038.3,1322.9M4108.1,1319.5L4152.7,1330.4M4330.1,1331.6L4385.2,1343.4M4455.4,1339.5L4517.0,1352.0M4587.5,1347.8L4656.2,1361.0M2245.7,1233.2L3762.8,1299.2M2035.3,1227.7L2430.1,1245.2M3435.1,1289.7L4169.4,1322.2M1871.8,1224.1L2140.8,1236.2M3953.5,1318.0L4555.7,1345.2M1627.6,1220.3L1802.4,1228.5M4741.6,1366.3L5295.3,1392.2M1508.9,1218.5L1677.0,1226.5M5124.2,1391.3L5753.6,1421.4M1423.7,1218.2L1554.1,1224.6M5567.7,1420.3L6136.4,1448.1M1238.9,1216.9L1362.4,1223.2M6443.7,1481.4L7081.5,1513.9M1169.3,1217.4L1275.2,1222.9M6943.7,1517.2L7674.1,1555.1M1085.0,1217.1L1188.3,1222.6M7529.0,1559.1L8376.3,1604.0M944.5,1218.1L1029.7,1222.8M8908.0,1660.1L9892.5,1714.8M873.6,1218.6L957.4,1223.4M9725.1,1721.5L10891.9,1787.8M802.4,1219.1L884.6,1223.9M10717.6,1796.0L12128.7,1878.1M671.7,1220.9L751.4,1225.8M611.7,1222.2L677.1,1226.3M551.0,1223.6L615.6,1227.7M414.7,1225.5L489.8,1230.6M351.5,1226.9L425.5,1232.0M299.3,1229.1L360.3,1233.5M168.0,1232.0L227.1,1236.5M112.4,1234.4L158.9,1238.1M44.1,1235.9L101.5,1240.6M-84.7,1239.9L-29.1,1244.8M-145.7,1242.5L-102.0,1246.5M-208.1,1245.1L-165.0,1249.2M-347.9,1249.5L-296.0,1254.9M-415.0,1252.3L-374.4,1256.7M-483.8,1255.2L-444.1,1259.7M-626.9,1261.2L-589.0,1265.9M-701.3,1264.3L-654.9,1270.4M-777.7,1267.5L-732.6,1273.8M-928.7,1275.5L-894.8,1280.8M-1012.0,1279.0L-979.5,1284.5M-1090.1,1284.0L-1058.6,1289.7M-1262.9,1293.1L-1234.2,1299.2M-1357.3,1297.1L-1330.4,1303.4M-1448.5,1302.9L-1423.1,1309.5M-1648.3,1313.4L-1626.9,1320.5M-1751.7,1319.9L-1732.4,1327.3M-1864.1,1324.8L-1847.3,1332.5M-2094.9,1339.1L-2083.6,1347.6M-2219.0,1346.9L-2210.7,1355.7M-2349.3,1355.0L-2344.5,1364.3M-2630.8,1372.5L-2634.2,1382.8M-2783.2,1381.9L-2791.3,1392.9M-2944.1,1392.0L-2957.7,1403.5M-3301.4,1417.0L-3328.0,1430.2M-3494.9,1429.1L-3529.1,1443.2M-3700.8,1442.0L-3743.7,1457.0M-4170.6,1474.6L-4235.3,1492.2M-4425.0,1490.7L-4502.4,1509.5M-4720.6,1512.8L-4814.5,1533.6M-5373.5,1558.2L-5507.1,1583.1M-5729.1,1581.0L-5927.8,1615.3M-6160.9,1612.9L-6349.9,1643.4M-7193.7,1689.3L-7469.7,1728.5M-7740.3,1725.1L-8154.3,1780.5M-8441.4,1776.7L-8948.7,1840.9M-10208.2,1906.5L-10587.9,1950.0" stroke="#939393" stroke-opacity="0.596" stroke-width="0.96" fill="none" clip-path="url(#fl)"/>
<path d="M-1856.5,1317.1L-3237.7,1400.9M-885.5,1266.5L-1508.1,1305.6M-4019.3,1463.5L-6249.4,1603.7M-650.7,1255.9L-1042.9,1281.0M-5442.2,1562.6L-7970.9,1724.5M-482.0,1249.1L-759.6,1267.2M-7059.7,1678.1L-10245.5,1885.9M-193.0,1238.2L-387.0,1251.3M-68.5,1233.7L-250.5,1246.3M32.9,1230.8L-120.0,1241.6M226.9,1225.1L106.7,1233.9M319.9,1222.4L205.5,1230.9M395.4,1220.9L285.2,1229.3M542.8,1217.9L455.8,1224.9M614.9,1216.5L531.2,1223.4M672.8,1216.2L605.3,1221.8M800.3,1214.5L737.3,1220.0M869.1,1213.1L796.1,1219.7M925.5,1212.8L866.8,1218.2M1037.8,1212.2L982.6,1217.6M1093.6,1211.9L1040.2,1217.3M1149.2,1211.6L1097.5,1216.9M1250.5,1212.0L1201.6,1217.4M1305.9,1211.7L1258.8,1217.1M1352.2,1212.4L1306.3,1217.9M1454.4,1212.9L1411.4,1218.4M1501.7,1213.7L1468.4,1218.0M1557.1,1213.4L1516.9,1218.8M1653.0,1214.9L1615.3,1220.5M1701.5,1215.7L1672.6,1220.1M1750.4,1216.4L1722.5,1221.0M1849.4,1218.0L1823.7,1222.6M1899.5,1218.8L1874.9,1223.5M1950.1,1219.6L1920.6,1225.5M2047.2,1222.4L2025.8,1227.3M2099.3,1223.3L2079.1,1228.1M2147.2,1225.3L2128.0,1230.3M2250.2,1228.3L2233.3,1233.4M2304.7,1229.2L2289.1,1234.3M2356.3,1231.4L2341.8,1236.6M2465.6,1234.5L2453.8,1239.9M2520.2,1236.8L2509.8,1242.4M2578.3,1237.8L2569.3,1243.4M2693.1,1242.5L2687.1,1248.4M2752.5,1245.0L2748.0,1251.0M2813.2,1247.5L2810.4,1253.7M2939.0,1252.8L2939.7,1259.2M3004.2,1255.5L3006.8,1262.1M3070.9,1258.2L3075.5,1265.0M3209.3,1264.0L3218.2,1271.1M3281.1,1267.0L3292.3,1274.3M3358.0,1271.9L3371.8,1279.5M3512.3,1278.3L3531.4,1286.3M3597.9,1283.7L3620.2,1292.0M3681.0,1287.2L3706.4,1295.8M3862.0,1296.7L3894.5,1305.9M3962.0,1302.9L3998.8,1312.6M4056.7,1306.9L4108.1,1319.5M4278.9,1320.6L4330.1,1331.6M4398.4,1327.9L4455.4,1339.5M4508.8,1332.8L4587.5,1347.8M2368.4,1231.2L3530.6,1280.0M1938.2,1219.8L2245.7,1233.2M3762.8,1299.2L4391.5,1326.6M1799.7,1217.2L2035.3,1227.7M4169.4,1322.2L4752.3,1348.1M1681.3,1215.5L1871.8,1224.1M4555.7,1345.2L5113.6,1370.4M1466.3,1212.7L1627.6,1220.3M5295.3,1392.2L5871.2,1419.2M1383.7,1212.5L1508.9,1218.5M5753.6,1421.4L6337.1,1449.3M1301.3,1212.2L1423.7,1218.2M6136.4,1448.1L6791.3,1480.0M1137.1,1211.7L1238.9,1216.9M7081.5,1513.9L7931.3,1557.1M1069.2,1212.2L1169.3,1217.4M7674.1,1555.1L8526.6,1599.4M1000.9,1212.7L1085.0,1217.1M8376.3,1604.0L9225.2,1649.1M863.2,1213.6L944.5,1218.1M9892.5,1714.8L11062.6,1779.7M793.8,1214.1L873.6,1218.6M10891.9,1787.8L12304.6,1868.0M736.9,1215.3L802.4,1219.1M12128.7,1878.1L13363.9,1950.0M608.1,1217.0L671.7,1220.9M536.7,1217.5L611.7,1222.2M476.9,1218.8L551.0,1223.6M354.9,1221.4L414.7,1225.5M304.2,1223.5L351.5,1226.9M240.9,1224.9L299.3,1229.1M111.5,1227.7L168.0,1232.0M56.4,1229.9L112.4,1234.4M-10.9,1231.4L44.1,1235.9M-127.4,1236.2L-84.7,1239.9M-198.1,1237.7L-145.7,1242.5M-259.8,1240.2L-208.1,1245.1M-387.7,1245.4L-347.9,1249.5M-454.0,1248.1L-415.0,1252.3M-522.1,1250.9L-483.8,1255.2M-663.4,1256.7L-626.9,1261.2M-736.8,1259.7L-701.3,1264.3M-812.2,1262.7L-777.7,1267.5M-961.2,1270.4L-928.7,1275.5M-1043.2,1273.7L-1012.0,1279.0M-1120.2,1278.5L-1090.1,1284.0M-1290.4,1287.3L-1262.9,1293.1M-1383.1,1291.1L-1357.3,1297.1M-1472.7,1296.6L-1448.5,1302.9M-1668.8,1306.7L-1648.3,1313.4M-1770.1,1312.8L-1751.7,1319.9M-1880.0,1317.5L-1864.1,1324.8M-2105.7,1331.1L-2094.9,1339.1M-2226.8,1338.5L-2219.0,1346.9M-2353.8,1346.1L-2349.3,1355.0M-2627.6,1362.7L-2630.8,1372.5M-2775.4,1371.6L-2783.2,1381.9M-2931.4,1381.1L-2944.1,1392.0M-3276.5,1404.5L-3301.4,1417.0M-3462.9,1415.9L-3494.9,1429.1M-3660.9,1427.9L-3700.8,1442.0M-4110.6,1458.3L-4170.6,1474.6M-4353.3,1473.2L-4425.0,1490.7M-4634.1,1493.7L-4720.6,1512.8M-5251.2,1535.4L-5373.5,1558.2M-5586.0,1556.2L-5729.1,1581.0M-5989.7,1585.3L-6160.9,1612.9M-6889.0,1646.1L-7193.7,1689.3M-7450.4,1686.3L-7740.3,1725.1M-8089.8,1732.1L-8441.4,1776.7M-9678.0,1845.8L-10208.2,1906.5M-10681.2,1917.6L-10977.4,1950.0" stroke="#939393" stroke-opacity="0.580" stroke-width="0.95" fill="none" clip-path="url(#fl)"/>
<path d="M-1407.7,1285.3L-4192.2,1451.4M-1010.6,1265.8L-1856.5,1317.1M-3237.7,1400.9L-5605.3,1544.5M-551.7,1245.5L-885.5,1266.5M-6249.4,1603.7L-9022.1,1778.0M-393.2,1239.4L-650.7,1255.9M-7970.9,1724.5L-11493.4,1950.0M-263.7,1234.9L-482.0,1249.1M-10245.5,1885.9L-11228.3,1950.0M-20.5,1226.5L-193.0,1238.2M76.6,1223.7L-68.5,1233.7M171.1,1221.0L32.9,1230.8M337.4,1217.0L226.9,1225.1M410.6,1215.6L319.9,1222.4M482.8,1214.2L395.4,1220.9M623.9,1211.4L542.8,1217.9M692.9,1210.1L614.9,1216.5M748.7,1209.8L672.8,1216.2M871.3,1208.2L800.3,1214.5M926.2,1207.9L869.1,1213.1M980.9,1207.6L925.5,1212.8M1089.9,1207.0L1037.8,1212.2M1144.1,1206.7L1093.6,1211.9M1198.1,1206.5L1149.2,1211.6M1296.7,1206.9L1250.5,1212.0M1341.8,1207.6L1305.9,1211.7M1395.7,1207.3L1352.2,1212.4M1487.2,1208.7L1454.4,1212.9M1541.2,1208.5L1501.7,1213.7M1587.6,1209.2L1557.1,1213.4M1681.5,1210.6L1653.0,1214.9M1729.0,1211.4L1701.5,1215.7M1776.9,1212.1L1750.4,1216.4M1873.9,1213.6L1849.4,1218.0M1923.0,1214.4L1899.5,1218.8M1972.4,1215.2L1950.1,1219.6M2067.6,1217.9L2047.2,1222.4M2118.6,1218.7L2099.3,1223.3M2165.5,1220.6L2147.2,1225.3M2270.2,1222.3L2250.2,1228.3M2319.5,1224.3L2304.7,1229.2M2370.0,1226.4L2356.3,1231.4M2476.8,1229.4L2465.6,1234.5M2530.2,1231.5L2520.2,1236.8M2586.8,1232.5L2578.3,1237.8M2698.8,1237.0L2693.1,1242.5M2756.7,1239.3L2752.5,1245.0M2815.9,1241.7L2813.2,1247.5M2938.4,1246.7L2939.0,1252.8M3001.7,1249.2L3004.2,1255.5M3066.6,1251.9L3070.9,1258.2M3200.9,1257.3L3209.3,1264.0M3270.6,1260.1L3281.1,1267.0M3345.1,1264.7L3358.0,1271.9M3494.4,1270.8L3512.3,1278.3M3577.0,1275.9L3597.9,1283.7M3657.2,1279.1L3681.0,1287.2M3831.6,1288.1L3862.0,1296.7M3927.6,1293.9L3962.0,1302.9M4018.6,1297.6L4056.7,1306.9M4231.3,1310.4L4278.9,1320.6M4332.7,1314.7L4398.4,1327.9M4451.0,1321.7L4508.8,1332.8M2553.0,1231.8L3300.3,1262.1M2217.6,1221.4L3814.3,1287.4M2019.7,1216.5L2368.4,1231.2M3530.6,1280.0L4205.8,1308.3M1748.8,1211.6L1938.2,1219.8M4391.5,1326.6L4902.2,1348.8M1634.4,1209.9L1799.7,1217.2M4752.3,1348.1L5274.8,1371.2M1521.9,1208.3L1681.3,1215.5M5113.6,1370.4L5640.0,1394.1M1346.1,1207.1L1466.3,1212.7M5871.2,1419.2L6538.8,1450.5M1266.1,1206.9L1383.7,1212.5M6337.1,1449.3L7009.1,1481.4M1186.4,1206.6L1301.3,1212.2M6791.3,1480.0L7451.3,1512.2M1054.2,1207.5L1137.1,1211.7M7931.3,1557.1L8674.4,1594.8M974.3,1207.3L1069.2,1212.2M8526.6,1599.4L9379.6,1643.7M907.6,1207.7L1000.9,1212.7M9225.2,1649.1L10217.6,1701.7M785.7,1209.3L863.2,1213.6M11062.6,1779.7L12476.3,1858.2M717.7,1209.8L793.8,1214.1M12304.6,1868.0L13747.2,1950.0M661.5,1210.9L736.9,1215.3M535.1,1212.6L608.1,1217.0M476.9,1213.8L536.7,1217.5M417.9,1215.0L476.9,1218.8M297.5,1217.5L354.9,1221.4M247.2,1219.5L304.2,1223.5M184.8,1220.8L240.9,1224.9M68.0,1224.3L111.5,1227.7M2.7,1225.7L56.4,1229.9M-53.1,1227.9L-10.9,1231.4M-178.8,1231.6L-127.4,1236.2M-238.4,1234.0L-198.1,1237.7M-299.5,1236.4L-259.8,1240.2M-435.4,1240.5L-387.7,1245.4M-500.9,1243.1L-454.0,1248.1M-567.9,1245.7L-522.1,1250.9M-698.5,1252.3L-663.4,1256.7M-770.9,1255.2L-736.8,1259.7M-845.3,1258.1L-812.2,1262.7M-992.4,1265.5L-961.2,1270.4M-1073.2,1268.7L-1043.2,1273.7M-1156.2,1272.0L-1120.2,1278.5M-1323.0,1280.3L-1290.4,1287.3M-1407.7,1285.3L-1383.1,1291.1M-1495.9,1290.6L-1472.7,1296.6M-1688.3,1300.2L-1668.8,1306.7M-1787.7,1306.1L-1770.1,1312.8M-1895.2,1310.5L-1880.0,1317.5M-2116.0,1323.5L-2105.7,1331.1M-2234.2,1330.5L-2226.8,1338.5M-2358.0,1337.8L-2353.8,1346.1M-2624.5,1353.4L-2627.6,1362.7M-2768.2,1361.9L-2775.4,1371.6M-2919.4,1370.8L-2931.4,1381.1M-3247.5,1390.1L-3276.5,1404.5M-3432.9,1403.5L-3462.9,1415.9M-3623.6,1414.8L-3660.9,1427.9M-4054.8,1443.2L-4110.6,1458.3M-4286.9,1457.0L-4353.3,1473.2M-4554.1,1476.0L-4634.1,1493.7M-5139.0,1514.5L-5251.2,1535.4M-5455.1,1533.6L-5586.0,1556.2M-5833.8,1560.2L-5989.7,1585.3M-6672.5,1615.4L-6889.0,1646.1M-7191.0,1651.6L-7450.4,1686.3M-7777.6,1692.5L-8089.8,1732.1M-9216.2,1793.0L-9678.0,1845.8M-10111.7,1855.5L-10681.2,1917.6M-11166.4,1929.1L-11366.9,1950.0" stroke="#939393" stroke-opacity="0.564" stroke-width="0.94" fill="none" clip-path="url(#fl)"/>
<path d="M-1165.1,1266.8L-4966.5,1489.6M-863.9,1252.9L-1407.7,1285.3M-4192.2,1451.4L-6395.5,1582.8M-642.7,1243.4L-1010.6,1265.8M-5605.3,1544.5L-8071.7,1694.2M-332.2,1231.7L-551.7,1245.5M-9022.1,1778.0L-11758.5,1950.0M-208.6,1227.6L-393.2,1239.4M-89.9,1223.6L-263.7,1234.9M117.4,1217.1L-20.5,1226.5M192.5,1215.7L76.6,1223.7M281.6,1213.2L171.1,1221.0M439.0,1209.5L337.4,1217.0M508.7,1208.2L410.6,1215.6M564.3,1207.9L482.8,1214.2M699.5,1205.3L623.9,1211.4M753.9,1205.1L692.9,1210.1M819.6,1203.8L748.7,1209.8M926.8,1203.3L871.3,1208.2M980.2,1203.0L926.2,1207.9M1033.4,1202.7L980.9,1207.6M1139.2,1202.2L1089.9,1207.0M1191.9,1201.9L1144.1,1206.7M1235.3,1202.6L1198.1,1206.5M1331.8,1203.0L1296.7,1206.9M1384.4,1202.7L1341.8,1207.6M1428.7,1203.4L1395.7,1207.3M1526.1,1203.8L1487.2,1208.7M1571.2,1204.5L1541.2,1208.5M1616.7,1205.2L1587.6,1209.2M1715.5,1205.6L1681.5,1210.6M1761.8,1206.3L1729.0,1211.4M1808.5,1207.0L1776.9,1212.1M1897.3,1209.5L1873.9,1213.6M1945.3,1210.2L1923.0,1214.4M1993.8,1210.9L1972.4,1215.2M2087.1,1213.5L2067.6,1217.9M2136.9,1214.3L2118.6,1218.7M2187.2,1215.0L2165.5,1220.6M2285.3,1217.7L2270.2,1222.3M2333.7,1219.6L2319.5,1224.3M2383.0,1221.6L2370.0,1226.4M2487.4,1224.5L2476.8,1229.4M2539.6,1226.5L2530.2,1231.5M2594.9,1227.4L2586.8,1232.5M2704.3,1231.7L2698.8,1237.0M2760.7,1233.9L2756.7,1239.3M2818.4,1236.2L2815.9,1241.7M2937.7,1240.9L2938.4,1246.7M2999.4,1243.3L3001.7,1249.2M3062.5,1245.8L3066.6,1251.9M3193.0,1251.0L3200.9,1257.3M3260.6,1253.6L3270.6,1260.1M3332.8,1258.0L3345.1,1264.7M3477.5,1263.7L3494.4,1270.8M3557.3,1268.5L3577.0,1275.9M3634.9,1271.6L3657.2,1279.1M3803.0,1280.0L3831.6,1288.1M3895.3,1285.4L3927.6,1293.9M3983.1,1288.9L4018.6,1297.6M4187.0,1300.9L4231.3,1310.4M4284.2,1304.9L4332.7,1314.7M4397.2,1311.4L4451.0,1321.7M2098.4,1213.3L2553.0,1231.8M3300.3,1262.1L4041.4,1292.2M1928.3,1209.5L2217.6,1221.4M3814.3,1287.4L4376.7,1310.6M1797.3,1207.2L2019.7,1216.5M4205.8,1308.3L4761.9,1331.7M1590.1,1204.7L1748.8,1211.6M4902.2,1348.8L5436.7,1372.0M1496.1,1203.8L1634.4,1209.9M5274.8,1371.2L5813.7,1395.1M1402.9,1202.9L1521.9,1208.3M5640.0,1394.1L6244.5,1421.4M1246.7,1202.4L1346.1,1207.1M6538.8,1450.5L7136.4,1478.6M1168.9,1202.2L1266.1,1206.9M7009.1,1481.4L7686.8,1513.8M1104.6,1202.6L1186.4,1206.6M7451.3,1512.2L8212.1,1549.3M962.1,1202.8L1054.2,1207.5M8674.4,1594.8L9687.1,1646.3M896.9,1203.2L974.3,1207.3M9379.6,1643.7L10557.9,1704.9M831.5,1203.7L907.6,1207.7M10217.6,1701.7L11393.2,1764.1M711.6,1205.2L785.7,1209.3M12476.3,1858.2L14130.3,1950.0M656.9,1206.3L717.7,1209.8M589.7,1206.7L661.5,1210.9M476.9,1209.0L535.1,1212.6M419.4,1210.2L476.9,1213.8M361.1,1211.3L417.9,1215.0M242.3,1213.7L297.5,1217.5M192.5,1215.7L247.2,1219.5M130.9,1217.0L184.8,1220.8M15.5,1220.3L68.0,1224.3M-38.6,1222.4L2.7,1225.7M-104.0,1223.7L-53.1,1227.9M-218.3,1228.2L-178.8,1231.6M-286.9,1229.6L-238.4,1234.0M-347.2,1231.9L-299.5,1236.4M-472.1,1236.7L-435.4,1240.5M-536.8,1239.2L-500.9,1243.1M-603.1,1241.8L-567.9,1245.7M-740.5,1247.1L-698.5,1252.3M-803.8,1250.9L-770.9,1255.2M-877.2,1253.7L-845.3,1258.1M-1022.4,1260.8L-992.4,1265.5M-1101.9,1263.9L-1073.2,1268.7M-1183.7,1267.1L-1156.2,1272.0M-1347.9,1275.0L-1323.0,1280.3M-1431.3,1279.8L-1407.7,1285.3M-1518.0,1284.9L-1495.9,1290.6M-1706.9,1294.0L-1688.3,1300.2M-1804.4,1299.7L-1787.7,1306.1M-1909.7,1303.9L-1895.2,1310.5M-2125.8,1316.3L-2116.0,1323.5M-2241.2,1322.9L-2234.2,1330.5M-2362.1,1329.8L-2358.0,1337.8M-2621.7,1344.7L-2624.5,1353.4M-2761.3,1352.7L-2768.2,1361.9M-2908.1,1361.1L-2919.4,1370.8M-3225.8,1379.3L-3247.5,1390.1M-3404.8,1391.9L-3432.9,1403.5M-3588.6,1402.5L-3623.6,1414.8M-4002.7,1429.1L-4054.8,1443.2M-4225.1,1442.0L-4286.9,1457.0M-4462.2,1455.7L-4554.1,1476.0M-5035.7,1495.3L-5139.0,1514.5M-5335.0,1512.9L-5455.1,1533.6M-5691.3,1537.3L-5833.8,1560.2M-6476.4,1587.6L-6672.5,1615.4M-6957.5,1620.3L-7191.0,1651.6M-7498.5,1657.2L-7777.6,1692.5M-8716.5,1735.7L-9216.2,1793.0M-9502.7,1788.9L-10111.7,1855.5M-10416.5,1850.8L-11166.4,1929.1" stroke="#939393" stroke-opacity="0.547" stroke-width="0.92" fill="none" clip-path="url(#fl)"/>
<path d="M-2247.9,1315.7L-2699.7,1340.9M-1352.8,1269.6L-4450.1,1445.3M-756.5,1242.8L-1165.1,1266.8M-4966.5,1489.6L-7312.1,1627.1M-571.5,1235.5L-863.9,1252.9M-6395.5,1582.8L-9081.6,1742.9M-398.7,1228.6L-642.7,1243.4M-8071.7,1694.2L-11306.4,1890.4M-157.2,1220.7L-332.2,1231.7M-43.5,1217.0L-208.6,1227.6M49.4,1214.5L-89.9,1223.6M227.9,1209.6L117.4,1217.1M299.2,1208.3L192.5,1215.7M383.5,1206.1L281.6,1213.2M520.0,1203.5L439.0,1209.5M586.8,1202.3L508.7,1208.2M640.5,1202.1L564.3,1207.9M758.9,1200.6L699.5,1205.3M822.9,1199.4L753.9,1205.1M875.3,1199.1L819.6,1203.8M979.5,1198.6L926.8,1203.3M1031.3,1198.4L980.2,1203.0M1083.0,1198.1L1033.4,1202.7M1185.9,1197.6L1139.2,1202.2M1228.3,1198.2L1191.9,1201.9M1279.6,1198.0L1235.3,1202.6M1373.6,1198.4L1331.8,1203.0M1424.7,1198.1L1384.4,1202.7M1468.1,1198.7L1428.7,1203.4M1555.7,1200.0L1526.1,1203.8M1607.0,1199.8L1571.2,1204.5M1651.4,1200.4L1616.7,1205.2M1741.3,1201.8L1715.5,1205.6M1786.7,1202.4L1761.8,1206.3M1832.5,1203.1L1808.5,1207.0M1925.1,1204.5L1897.3,1209.5M1966.7,1206.2L1945.3,1210.2M2014.2,1206.9L1993.8,1210.9M2105.7,1209.3L2087.1,1213.5M2154.5,1210.0L2136.9,1214.3M2203.7,1210.8L2187.2,1215.0M2299.7,1213.3L2285.3,1217.7M2347.1,1215.2L2333.7,1219.6M2395.4,1217.1L2383.0,1221.6M2497.5,1219.8L2487.4,1224.5M2548.6,1221.8L2539.6,1226.5M2602.6,1222.6L2594.9,1227.4M2709.4,1226.7L2704.3,1231.7M2764.6,1228.8L2760.7,1233.9M2820.9,1231.0L2818.4,1236.2M2937.1,1235.4L2937.7,1240.9M2997.2,1237.7L2999.4,1243.3M3058.6,1240.1L3062.5,1245.8M3185.5,1245.0L3193.0,1251.0M3251.2,1247.5L3260.6,1253.6M3321.2,1251.6L3332.8,1258.0M3461.5,1257.0L3477.5,1263.7M3538.7,1261.5L3557.3,1268.5M3613.8,1264.4L3634.9,1271.6M3776.2,1272.3L3803.0,1280.0M3857.9,1275.5L3895.3,1285.4M3949.7,1280.8L3983.1,1288.9M4135.5,1289.8L4187.0,1300.9M4239.0,1295.7L4284.2,1304.9M4347.1,1301.8L4397.2,1311.4M2467.4,1218.6L3418.7,1255.4M2192.6,1210.9L3861.5,1276.5M1859.6,1203.6L2098.4,1213.3M4041.4,1292.2L4550.3,1312.8M1749.1,1202.1L1928.3,1209.5M4376.7,1310.6L4904.1,1332.3M1640.5,1200.6L1797.3,1207.2M4761.9,1331.7L5256.5,1352.5M1457.1,1198.9L1590.1,1204.7M5436.7,1372.0L5988.2,1396.0M1366.7,1198.0L1496.1,1203.8M5813.7,1395.1L6432.7,1422.5M1290.7,1197.8L1402.9,1202.9M6244.5,1421.4L6862.4,1449.3M1152.3,1198.0L1246.7,1202.4M7136.4,1478.6L7818.4,1510.5M1076.6,1197.8L1168.9,1202.2M7686.8,1513.8L8468.2,1551.2M1013.6,1198.2L1104.6,1202.6M8212.1,1549.3L9098.5,1592.5M886.8,1199.0L962.1,1202.8M9687.1,1646.3L10713.3,1698.5M822.9,1199.4L896.9,1203.2M10557.9,1704.9L11770.9,1767.8M770.6,1200.4L831.5,1203.7M11393.2,1764.1L12807.9,1839.2M652.4,1201.9L711.6,1205.2M586.8,1202.3L656.9,1206.3M532.2,1203.4L589.7,1206.7M420.8,1205.6L476.9,1209.0M364.0,1206.7L419.4,1210.2M306.5,1207.8L361.1,1211.3M199.8,1210.8L242.3,1213.7M139.8,1212.0L192.5,1215.7M79.1,1213.2L130.9,1217.0M-34.8,1216.4L15.5,1220.3M-88.5,1218.5L-38.6,1222.4M-143.3,1220.5L-104.0,1223.7M-265.8,1224.0L-218.3,1228.2M-324.2,1226.2L-286.9,1229.6M-383.9,1228.4L-347.2,1231.9M-507.5,1233.1L-472.1,1236.7M-571.5,1235.5L-536.8,1239.2M-637.0,1237.9L-603.1,1241.8M-772.8,1243.1L-740.5,1247.1M-843.2,1245.7L-803.8,1250.9M-907.8,1249.5L-877.2,1253.7M-1058.2,1255.1L-1022.4,1260.8M-1129.6,1259.2L-1101.9,1263.9M-1210.1,1262.3L-1183.7,1267.1M-1371.8,1269.9L-1347.9,1275.0M-1453.9,1274.5L-1431.3,1279.8M-1539.2,1279.4L-1518.0,1284.9M-1724.7,1288.2L-1706.9,1294.0M-1820.4,1293.5L-1804.4,1299.7M-1923.5,1297.6L-1909.7,1303.9M-2135.1,1309.4L-2125.8,1316.3M-2247.9,1315.7L-2241.2,1322.9M-2365.9,1322.3L-2362.1,1329.8M-2619.0,1336.4L-2621.7,1344.7M-2754.8,1344.0L-2761.3,1352.7M-2897.4,1351.9L-2908.1,1361.1M-3205.4,1369.1L-3225.8,1379.3M-3378.4,1381.0L-3404.8,1391.9M-3555.8,1391.0L-3588.6,1402.5M-3954.1,1415.9L-4002.7,1429.1M-4167.4,1427.9L-4225.1,1442.0M-4394.4,1440.8L-4462.2,1455.7M-4917.4,1473.2L-5035.7,1495.3M-5224.2,1493.7L-5335.0,1512.9M-5560.6,1516.2L-5691.3,1537.3M-6297.9,1562.3L-6476.4,1587.6M-6746.3,1592.1L-6957.5,1620.3M-7188.6,1617.9L-7498.5,1657.2M-8367.4,1695.8L-8716.5,1735.7M-9081.6,1742.9L-9502.7,1788.9M-9904.1,1797.3L-10416.5,1850.8" stroke="#939393" stroke-opacity="0.531" stroke-width="0.91" fill="none" clip-path="url(#fl)"/>
<path d="M-1545.0,1272.5L-3863.7,1399.9M-1127.6,1253.2L-2247.9,1315.7M-2699.7,1340.9L-5235.3,1482.4M-844.6,1240.8L-1352.8,1269.6M-4450.1,1445.3L-6531.4,1563.3M-484.2,1226.9L-756.5,1242.8M-7312.1,1627.1L-9943.2,1781.4M-340.6,1221.7L-571.5,1235.5M-9081.6,1742.9L-12554.0,1950.0M-222.7,1217.9L-398.7,1228.6M-11306.4,1890.4L-12288.8,1950.0M-16.8,1211.9L-157.2,1220.7M89.2,1208.5L-43.5,1217.0M176.3,1206.2L49.4,1214.5M330.0,1202.7L227.9,1209.6M397.9,1201.5L299.2,1208.3M464.8,1200.3L383.5,1206.1M595.9,1198.0L520.0,1203.5M660.1,1196.8L586.8,1202.3M711.9,1196.6L640.5,1202.1M826.0,1195.2L758.9,1200.6M877.1,1194.9L822.9,1199.4M928.0,1194.7L875.3,1199.1M1029.4,1194.2L979.5,1198.6M1079.8,1194.0L1031.3,1198.4M1130.1,1193.7L1083.0,1198.1M1230.2,1193.2L1185.9,1197.6M1271.6,1193.8L1228.3,1198.2M1321.6,1193.6L1279.6,1198.0M1413.3,1194.0L1373.6,1198.4M1455.5,1194.6L1424.7,1198.1M1498.1,1195.2L1468.1,1198.7M1591.0,1195.6L1555.7,1200.0M1634.3,1196.2L1607.0,1199.8M1677.9,1196.8L1651.4,1200.4M1766.0,1198.1L1741.3,1201.8M1810.6,1198.7L1786.7,1202.4M1855.5,1199.4L1832.5,1203.1M1946.3,1200.7L1925.1,1204.5M1992.2,1201.4L1966.7,1206.2M2033.7,1203.0L2014.2,1206.9M2127.7,1204.4L2105.7,1209.3M2171.2,1206.0L2154.5,1210.0M2219.4,1206.7L2203.7,1210.8M2313.5,1209.2L2299.7,1213.3M2360.0,1210.9L2347.1,1215.2M2410.2,1211.7L2395.4,1217.1M2507.2,1215.3L2497.5,1219.8M2557.2,1217.2L2548.6,1221.8M2609.9,1218.0L2602.6,1222.6M2714.4,1221.9L2709.4,1226.7M2768.2,1223.9L2764.6,1228.8M2823.1,1226.0L2820.9,1231.0M2936.6,1230.2L2937.1,1235.4M2995.1,1232.4L2997.2,1237.7M3054.9,1234.7L3058.6,1240.1M3178.5,1239.3L3185.5,1245.0M3242.3,1241.7L3251.2,1247.5M3310.3,1245.6L3321.2,1251.6M3446.5,1250.7L3461.5,1257.0M3521.2,1255.0L3538.7,1261.5M3593.9,1257.7L3613.8,1264.4M3750.9,1265.2L3776.2,1272.3M3829.9,1268.2L3857.9,1275.5M3918.3,1273.1L3949.7,1280.8M4097.3,1281.6L4135.5,1289.8M4196.6,1287.1L4239.0,1295.7M4300.2,1292.9L4347.1,1301.8M2284.3,1208.6L3701.6,1262.5M2080.5,1203.7L2467.4,1218.6M3418.7,1255.4L4079.8,1280.9M1935.6,1200.9L2192.6,1210.9M3861.5,1276.5L4402.3,1297.7M1688.6,1196.7L1859.6,1203.6M4550.3,1312.8L5095.6,1335.0M1598.3,1195.9L1749.1,1202.1M4904.1,1332.3L5409.5,1353.2M1508.8,1195.1L1640.5,1200.6M5256.5,1352.5L5762.8,1373.7M1345.8,1194.0L1457.1,1198.9M5988.2,1396.0L6546.8,1420.3M1271.6,1193.8L1366.7,1198.0M6432.7,1422.5L6981.6,1446.8M1197.6,1193.6L1290.7,1197.8M6862.4,1449.3L7479.2,1477.1M1062.5,1193.8L1152.3,1198.0M7818.4,1510.5L8604.1,1547.4M1001.0,1194.2L1076.6,1197.8M8468.2,1551.2L9240.0,1588.1M939.2,1194.6L1013.6,1198.2M9098.5,1592.5L9983.9,1635.7M814.7,1195.3L886.8,1199.0M10713.3,1698.5L11927.8,1760.2M752.0,1195.7L822.9,1199.4M11770.9,1767.8L12967.9,1830.0M700.4,1196.7L770.6,1200.4M12807.9,1839.2L14542.9,1931.2M584.2,1198.1L652.4,1201.9M530.8,1199.1L586.8,1202.3M476.8,1200.2L532.2,1203.4M366.7,1202.3L420.8,1205.6M310.7,1203.4L364.0,1206.7M253.9,1204.4L306.5,1207.8M148.3,1207.3L199.8,1210.8M89.2,1208.5L139.8,1212.0M39.2,1210.3L79.1,1213.2M-73.7,1213.4L-34.8,1216.4M-136.3,1214.7L-88.5,1218.5M-190.5,1216.7L-143.3,1220.5M-302.5,1220.8L-265.8,1224.0M-360.3,1222.9L-324.2,1226.2M-419.4,1225.1L-383.9,1228.4M-541.7,1229.6L-507.5,1233.1M-605.0,1231.9L-571.5,1235.5M-669.7,1234.3L-637.0,1237.9M-803.9,1239.2L-772.8,1243.1M-873.4,1241.7L-843.2,1245.7M-937.4,1245.4L-907.8,1249.5M-1085.6,1250.8L-1058.2,1255.1M-1156.1,1254.8L-1129.6,1259.2M-1235.4,1257.7L-1210.1,1262.3M-1394.7,1265.0L-1371.8,1269.9M-1475.6,1269.5L-1453.9,1274.5M-1564.5,1272.8L-1539.2,1279.4M-1741.7,1282.5L-1724.7,1288.2M-1835.7,1287.7L-1820.4,1293.5M-1936.7,1291.5L-1923.5,1297.6M-2143.9,1302.8L-2135.1,1309.4M-2254.3,1308.8L-2247.9,1315.7M-2369.6,1315.1L-2365.9,1322.3M-2616.4,1328.5L-2619.0,1336.4M-2748.6,1335.7L-2754.8,1344.0M-2887.3,1343.3L-2897.4,1351.9M-3186.2,1359.5L-3205.4,1369.1M-3353.4,1370.8L-3378.4,1381.0M-3524.9,1380.1L-3555.8,1391.0M-3908.6,1403.5L-3954.1,1415.9M-4113.6,1414.8L-4167.4,1427.9M-4331.2,1426.8L-4394.4,1440.8M-4830.5,1457.0L-4917.4,1473.2M-5121.9,1476.1L-5224.2,1493.7M-5411.6,1492.2L-5560.6,1516.2M-6134.9,1539.2L-6297.9,1562.3M-6508.9,1560.3L-6746.3,1592.1M-6967.2,1589.9L-7188.6,1617.9M-8055.5,1660.1L-8367.4,1695.8M-8708.3,1702.2L-9081.6,1742.9M-9454.2,1750.3L-9904.1,1797.3" stroke="#939393" stroke-opacity="0.514" stroke-width="0.89" fill="none" clip-path="url(#fl)"/>
<path d="M-1889.9,1283.4L-3200.9,1353.2M-956.5,1240.2L-1545.0,1272.5M-3863.7,1399.9L-5900.8,1511.7M-743.5,1231.7L-1127.6,1253.2M-5235.3,1482.4L-7424.2,1604.5M-568.1,1225.1L-844.6,1240.8M-6531.4,1563.3L-9135.7,1711.0M-286.3,1215.3L-484.2,1226.9M-9943.2,1781.4L-12819.2,1950.0M-173.3,1211.7L-340.6,1221.7M-64.4,1208.3L-222.7,1217.9M111.4,1203.8L-16.8,1211.9M196.0,1201.7L89.2,1208.5M278.5,1199.5L176.3,1206.2M411.6,1197.2L330.0,1202.7M476.8,1196.1L397.9,1201.5M541.1,1194.9L464.8,1200.3M667.1,1192.7L595.9,1198.0M717.7,1192.5L660.1,1196.8M779.0,1191.4L711.9,1196.6M878.9,1191.0L826.0,1195.2M928.6,1190.7L877.1,1194.9M987.9,1189.7L928.0,1194.7M1076.8,1190.0L1029.4,1194.2M1125.9,1189.8L1079.8,1194.0M1174.9,1189.6L1130.1,1193.7M1264.1,1189.9L1230.2,1193.2M1312.8,1189.7L1271.6,1193.8M1353.6,1190.3L1321.6,1193.6M1443.6,1190.6L1413.3,1194.0M1492.3,1190.4L1455.5,1194.6M1533.9,1191.0L1498.1,1195.2M1617.9,1192.1L1591.0,1195.6M1660.4,1192.8L1634.3,1196.2M1709.4,1192.5L1677.9,1196.8M1795.5,1193.7L1766.0,1198.1M1833.5,1195.2L1810.6,1198.7M1877.5,1195.8L1855.5,1199.4M1966.6,1197.1L1946.3,1200.7M2011.6,1197.7L1992.2,1201.4M2052.4,1199.3L2033.7,1203.0M2144.6,1200.6L2127.7,1204.4M2187.3,1202.2L2171.2,1206.0M2234.4,1202.8L2219.4,1206.7M2326.7,1205.2L2313.5,1209.2M2372.2,1206.9L2360.0,1210.9M2421.4,1207.6L2410.2,1211.7M2516.4,1211.1L2507.2,1215.3M2565.3,1212.9L2557.2,1217.2M2616.9,1213.6L2609.9,1218.0M2719.0,1217.4L2714.4,1221.9M2771.6,1219.3L2768.2,1223.9M2825.3,1221.2L2823.1,1226.0M2936.0,1225.3L2936.6,1230.2M2993.1,1227.4L2995.1,1232.4M3051.4,1229.5L3054.9,1234.7M3171.7,1233.9L3178.5,1239.3M3233.9,1236.2L3242.3,1241.7M3299.9,1239.9L3310.3,1245.6M3432.2,1244.7L3446.5,1250.7M3504.6,1248.8L3521.2,1255.0M3575.2,1251.4L3593.9,1257.7M3727.1,1258.4L3750.9,1265.2M3803.5,1261.3L3829.9,1268.2M3888.8,1265.9L3918.3,1273.1M4061.4,1273.9L4097.3,1281.6M4156.8,1279.1L4196.6,1287.1M4245.8,1282.4L4300.2,1292.9M2410.7,1207.7L3502.6,1248.0M1993.1,1197.5L2284.3,1208.6M3701.6,1262.5L4269.2,1284.1M1869.8,1195.5L2080.5,1203.7M4079.8,1280.9L4568.2,1299.8M1749.3,1193.5L1935.6,1200.9M4402.3,1297.7L4905.9,1317.5M1558.3,1191.4L1688.6,1196.7M5095.6,1335.0L5563.2,1354.0M1471.4,1190.6L1598.3,1195.9M5409.5,1353.2L5927.0,1374.6M1385.2,1189.9L1508.8,1195.1M5762.8,1373.7L6339.7,1398.0M1240.6,1189.5L1345.8,1194.0M6546.8,1420.3L7183.9,1448.1M1168.6,1189.3L1271.6,1193.8M6981.6,1446.8L7602.3,1474.3M1109.0,1189.6L1197.6,1193.6M7479.2,1477.1L8182.8,1508.9M977.0,1189.8L1062.5,1193.8M8604.1,1547.4L9379.2,1583.7M916.8,1190.2L1001.0,1194.2M9240.0,1588.1L10128.4,1630.6M867.9,1191.1L939.2,1194.6M9983.9,1635.7L11015.3,1686.0M745.6,1191.8L814.7,1195.3M11927.8,1760.2L13387.9,1834.4M695.2,1192.8L752.0,1195.7M12967.9,1830.0L14698.8,1919.9M633.2,1193.1L700.4,1196.7M14542.9,1931.2L14896.3,1950.0M529.5,1195.1L584.2,1198.1M476.8,1196.1L530.8,1199.1M423.4,1197.1L476.8,1200.2M314.7,1199.1L366.7,1202.3M259.3,1200.1L310.7,1203.4M203.3,1201.2L253.9,1204.4M98.8,1204.0L148.3,1207.3M50.1,1205.7L89.2,1208.5M-9.1,1206.9L39.2,1210.3M-120.6,1209.8L-73.7,1213.4M-173.3,1211.7L-136.3,1214.7M-227.0,1213.7L-190.5,1216.7M-346.6,1216.9L-302.5,1220.8M-403.8,1218.9L-360.3,1222.9M-462.2,1221.0L-419.4,1225.1M-582.9,1225.3L-541.7,1229.6M-645.3,1227.5L-605.0,1231.9M-709.1,1229.8L-669.7,1234.3M-833.9,1235.4L-803.9,1239.2M-902.5,1237.9L-873.4,1241.7M-972.8,1240.4L-937.4,1245.4M-1112.1,1246.7L-1085.6,1250.8M-1181.7,1250.5L-1156.1,1254.8M-1259.8,1253.3L-1235.4,1257.7M-1416.7,1260.3L-1394.7,1265.0M-1496.4,1264.6L-1475.6,1269.5M-1583.8,1267.8L-1564.5,1272.8M-1758.0,1277.1L-1741.7,1282.5M-1850.3,1282.1L-1835.7,1287.7M-1949.4,1285.8L-1936.7,1291.5M-2152.4,1296.5L-2143.9,1302.8M-2260.4,1302.3L-2254.3,1308.8M-2373.1,1308.2L-2369.6,1315.1M-2613.9,1321.0L-2616.4,1328.5M-2742.7,1327.9L-2748.6,1335.7M-2877.7,1335.0L-2887.3,1343.3M-3168.0,1350.4L-3186.2,1359.5M-3329.9,1361.1L-3353.4,1370.8M-3495.8,1369.9L-3524.9,1380.1M-3865.8,1391.9L-3908.6,1403.5M-4063.1,1402.5L-4113.6,1414.8M-4272.2,1413.8L-4331.2,1426.8M-4749.7,1442.0L-4830.5,1457.0M-5027.0,1459.7L-5121.9,1476.1M-5302.5,1474.6L-5411.6,1492.2M-5985.3,1517.9L-6134.9,1539.2M-6337.3,1537.3L-6508.9,1560.3M-6765.9,1564.3L-6967.2,1589.9M-7775.2,1628.0L-8055.5,1660.1M-8375.2,1665.8L-8708.3,1702.2M-8963.3,1699.0L-9454.2,1750.3" stroke="#939393" stroke-opacity="0.498" stroke-width="0.88" fill="none" clip-path="url(#fl)"/>
<path d="M-1453.4,1256.6L-4094.8,1395.1M-1094.2,1241.0L-1889.9,1283.4M-3200.9,1353.2L-5380.7,1469.2M-650.7,1223.4L-956.5,1240.2M-5900.8,1511.7L-8249.4,1640.7M-485.1,1217.3L-743.5,1231.7M-7424.2,1604.5L-9959.9,1746.0M-348.2,1212.6L-568.1,1225.1M-9135.7,1711.0L-12379.2,1895.0M-126.9,1205.9L-286.3,1215.3M-38.3,1203.7L-173.3,1211.7M63.5,1200.6L-64.4,1208.3M214.7,1197.3L111.4,1203.8M294.9,1195.3L196.0,1201.7M360.2,1194.2L278.5,1199.5M500.4,1191.2L411.6,1197.2M550.8,1190.9L476.8,1196.1M612.7,1189.9L541.1,1194.9M723.2,1188.6L667.1,1192.7M783.0,1187.6L717.7,1192.5M831.9,1187.4L779.0,1191.4M938.9,1186.1L878.9,1191.0M987.0,1185.9L928.6,1190.7M1035.0,1185.7L987.9,1189.7M1121.9,1186.0L1076.8,1190.0M1169.7,1185.8L1125.9,1189.8M1217.4,1185.6L1174.9,1189.6M1304.5,1185.9L1264.1,1189.9M1352.0,1185.7L1312.8,1189.7M1392.0,1186.3L1353.6,1190.3M1479.8,1186.6L1443.6,1190.6M1520.4,1187.2L1492.3,1190.4M1561.2,1187.7L1533.9,1191.0M1650.1,1188.1L1617.9,1192.1M1691.7,1188.6L1660.4,1192.8M1733.5,1189.2L1709.4,1192.5M1818.1,1190.4L1795.5,1193.7M1860.8,1191.0L1833.5,1195.2M1903.8,1191.6L1877.5,1195.8M1986.0,1193.6L1966.6,1197.1M2030.2,1194.2L2011.6,1197.7M2074.7,1194.8L2052.4,1199.3M2160.7,1197.0L2144.6,1200.6M2202.6,1198.5L2187.3,1202.2M2248.9,1199.1L2234.4,1202.8M2339.3,1201.4L2326.7,1205.2M2384.0,1203.0L2372.2,1206.9M2432.1,1203.7L2421.4,1207.6M2525.3,1207.0L2516.4,1211.1M2575.0,1207.7L2565.3,1212.9M2623.6,1209.4L2616.9,1213.6M2723.5,1213.0L2719.0,1217.4M2774.9,1214.9L2771.6,1219.3M2827.4,1216.7L2825.3,1221.2M2935.5,1220.6L2936.0,1225.3M2991.2,1222.6L2993.1,1227.4M3048.0,1224.6L3051.4,1229.5M3165.3,1228.8L3171.7,1233.9M3225.9,1230.9L3233.9,1236.2M3290.1,1234.5L3299.9,1239.9M3418.7,1239.1L3432.2,1244.7M3485.2,1241.5L3504.6,1248.8M3557.4,1245.4L3575.2,1251.4M3704.6,1252.0L3727.1,1258.4M3778.6,1254.7L3803.5,1261.3M3861.0,1259.1L3888.8,1265.9M4027.6,1266.6L4061.4,1273.9M4119.5,1271.5L4156.8,1279.1M4205.3,1274.7L4245.8,1282.4M2574.1,1208.2L3276.4,1233.4M2257.5,1199.4L3748.8,1253.6M2064.4,1195.0L2410.7,1207.7M3502.6,1248.0L4114.9,1270.6M1807.9,1190.5L1993.1,1197.5M4269.2,1284.1L4736.6,1301.9M1706.0,1189.2L1869.8,1195.5M4568.2,1299.8L5041.8,1318.1M1605.6,1187.9L1749.3,1193.5M4905.9,1317.5L5385.1,1336.3M1435.8,1186.4L1558.3,1191.4M5563.2,1354.0L6091.9,1375.4M1364.9,1186.2L1471.4,1190.6M5927.0,1374.6L6447.2,1396.0M1294.2,1186.0L1385.2,1189.9M6339.7,1398.0L6847.2,1419.3M1153.2,1185.7L1240.6,1189.5M7183.9,1448.1L7819.7,1475.7M1094.9,1186.0L1168.6,1189.3M7602.3,1474.3L8309.7,1505.7M1024.5,1185.8L1109.0,1189.6M8182.8,1508.9L8993.0,1545.5M907.0,1186.5L977.0,1189.8M9379.2,1583.7L10432.2,1633.1M847.8,1186.9L916.8,1190.2M10128.4,1630.6L11162.1,1680.0M799.4,1187.7L867.9,1191.1M11015.3,1686.0L12232.2,1745.4M690.2,1189.0L745.6,1191.8M13387.9,1834.4L14850.9,1908.8M629.6,1189.4L695.2,1192.8M14698.8,1919.9L15279.2,1950.0M579.2,1190.3L633.2,1193.1M476.7,1192.2L529.5,1195.1M424.6,1193.1L476.8,1196.1M371.8,1194.1L423.4,1197.1M264.4,1196.0L314.7,1199.1M209.8,1197.0L259.3,1200.1M164.1,1198.7L203.3,1201.2M51.1,1200.7L98.8,1204.0M2.8,1202.4L50.1,1205.7M-55.6,1203.5L-9.1,1206.9M-156.9,1207.1L-120.6,1209.8M-217.9,1208.2L-173.3,1211.7M-271.0,1210.1L-227.0,1213.7M-380.7,1213.9L-346.6,1216.9M-437.3,1215.9L-403.8,1218.9M-495.2,1217.9L-462.2,1221.0M-614.6,1222.0L-582.9,1225.3M-676.3,1224.2L-645.3,1227.5M-739.4,1226.4L-709.1,1229.8M-862.9,1231.8L-833.9,1235.4M-930.7,1234.2L-902.5,1237.9M-1000.0,1236.6L-972.8,1240.4M-1137.6,1242.7L-1112.1,1246.7M-1206.3,1246.3L-1181.7,1250.5M-1283.3,1249.1L-1259.8,1253.3M-1437.9,1255.8L-1416.7,1260.3M-1516.4,1259.9L-1496.4,1264.6M-1602.3,1263.0L-1583.8,1267.8M-1773.7,1272.0L-1758.0,1277.1M-1864.3,1276.7L-1850.3,1282.1M-1961.5,1280.2L-1949.4,1285.8M-2160.5,1290.5L-2152.4,1296.5M-2266.2,1296.0L-2260.4,1302.3M-2376.4,1301.7L-2373.1,1308.2M-2611.6,1313.9L-2613.9,1321.0M-2737.2,1320.4L-2742.7,1327.9M-2868.6,1327.2L-2877.7,1335.0M-3150.7,1341.8L-3168.0,1350.4M-3307.7,1351.9L-3329.9,1361.1M-3468.4,1360.3L-3495.8,1369.9M-3815.9,1378.4L-3865.8,1391.9M-4015.7,1391.0L-4063.1,1402.5M-4216.8,1401.5L-4272.2,1413.8M-4674.3,1427.9L-4749.7,1442.0M-4938.8,1444.4L-5027.0,1459.7M-5201.3,1458.3L-5302.5,1474.6M-5814.9,1493.8L-5985.3,1517.9M-6179.9,1516.3L-6337.3,1537.3M-6581.9,1541.0L-6765.9,1564.3M-7462.3,1592.1L-7775.2,1628.0M-8006.1,1625.5L-8375.2,1665.8M-8618.0,1663.0L-8963.3,1699.0" stroke="#939393" stroke-opacity="0.481" stroke-width="0.87" fill="none" clip-path="url(#fl)"/>
<path d="M-1233.0,1241.8L-4846.7,1428.5M-933.6,1229.4L-1453.4,1256.6M-4094.8,1395.1L-6035.0,1496.9M-731.9,1221.7L-1094.2,1241.0M-5380.7,1469.2L-7350.9,1574.1M-427.3,1211.1L-650.7,1223.4M-8249.4,1640.7L-11205.1,1803.1M-296.1,1206.8L-485.1,1217.3M-9959.9,1746.0L-13615.3,1950.0M-187.9,1203.6L-348.2,1212.6M-12379.2,1895.0L-13349.9,1950.0M2.0,1198.4L-126.9,1205.9M85.3,1196.3L-38.3,1203.7M166.7,1194.3L63.5,1200.6M310.6,1191.3L214.7,1197.3M387.0,1189.4L294.9,1195.3M449.3,1188.4L360.2,1194.2M571.7,1186.4L500.4,1191.2M620.5,1186.1L550.8,1190.9M680.1,1185.1L612.7,1189.9M786.9,1183.9L723.2,1188.6M834.6,1183.7L783.0,1187.6M891.9,1182.8L831.9,1187.4M986.2,1182.3L938.9,1186.1M1033.2,1182.1L987.0,1185.9M1080.0,1181.9L1035.0,1185.7M1164.8,1182.2L1121.9,1186.0M1211.4,1182.0L1169.7,1185.8M1257.9,1181.8L1217.4,1185.6M1343.0,1182.1L1304.5,1185.9M1382.0,1182.7L1352.0,1185.7M1428.5,1182.5L1392.0,1186.3M1507.5,1183.5L1479.8,1186.6M1553.9,1183.3L1520.4,1187.2M1593.9,1183.9L1561.2,1187.7M1674.7,1184.9L1650.1,1188.1M1715.6,1185.5L1691.7,1188.6M1756.7,1186.0L1733.5,1189.2M1839.7,1187.2L1818.1,1190.4M1881.6,1187.7L1860.8,1191.0M1923.9,1188.3L1903.8,1191.6M2004.7,1190.3L1986.0,1193.6M2048.0,1190.8L2030.2,1194.2M2091.7,1191.4L2074.7,1194.8M2176.1,1193.5L2160.7,1197.0M2217.3,1195.0L2202.6,1198.5M2262.7,1195.6L2248.9,1199.1M2351.4,1197.7L2339.3,1201.4M2395.2,1199.3L2384.0,1203.0M2442.4,1199.9L2432.1,1203.7M2533.7,1203.1L2525.3,1207.0M2582.4,1203.8L2575.0,1207.7M2630.0,1205.5L2623.6,1209.4M2727.8,1208.9L2723.5,1213.0M2778.1,1210.6L2774.9,1214.9M2829.4,1212.4L2827.4,1216.7M2935.0,1216.1L2935.5,1220.6M2989.4,1218.0L2991.2,1222.6M3044.9,1219.9L3048.0,1224.6M3159.3,1223.9L3165.3,1228.8M3218.2,1226.0L3225.9,1230.9M3280.7,1229.3L3290.1,1234.5M3405.9,1233.7L3418.7,1239.1M3470.5,1236.0L3485.2,1241.5M3540.6,1239.7L3557.4,1245.4M3683.3,1246.0L3704.6,1252.0M3755.0,1248.5L3778.6,1254.7M3834.8,1252.7L3861.0,1259.1M3995.7,1259.8L4027.6,1266.6M4075.8,1262.7L4119.5,1271.5M4167.1,1267.4L4205.3,1274.7M2149.8,1193.0L2574.1,1208.2M3276.4,1233.4L3944.9,1257.3M1981.7,1189.4L2257.5,1199.4M3748.8,1253.6L4262.1,1272.3M1864.3,1187.6L2064.4,1195.0M4114.9,1270.6L4584.5,1287.9M1651.0,1184.5L1807.9,1190.5M4736.6,1301.9L5225.3,1320.5M1567.3,1183.8L1706.0,1189.2M5041.8,1318.1L5530.8,1337.0M1484.3,1183.1L1605.6,1187.9M5385.1,1336.3L5872.6,1355.5M1333.0,1182.3L1435.8,1186.4M6091.9,1375.4L6623.6,1397.0M1264.1,1182.1L1364.9,1186.2M6447.2,1396.0L7035.8,1420.3M1195.3,1181.9L1294.2,1186.0M6847.2,1419.3L7503.3,1446.8M1069.7,1182.0L1153.2,1185.7M7819.7,1475.7L8544.6,1507.3M1012.6,1182.4L1094.9,1186.0M8309.7,1505.7L9123.5,1541.7M955.2,1182.7L1024.5,1185.8M8993.0,1545.5L9791.9,1581.5M839.6,1183.3L907.0,1186.5M10432.2,1633.1L11495.3,1682.9M792.3,1184.2L847.8,1186.9M11162.1,1680.0L12379.7,1738.2M733.7,1184.5L799.4,1187.7M12232.2,1745.4L13689.6,1816.5M626.1,1185.7L690.2,1189.0M14850.9,1908.8L15661.9,1950.0M576.9,1186.6L629.6,1189.4M527.1,1187.5L579.2,1190.3M415.8,1188.8L476.7,1192.2M364.3,1189.7L424.6,1193.1M322.1,1191.2L371.8,1194.1M216.0,1193.1L264.4,1196.0M162.0,1194.0L209.8,1197.0M116.6,1195.6L164.1,1198.7M14.2,1198.2L51.1,1200.7M-42.7,1199.2L2.8,1202.4M-91.5,1200.9L-55.6,1203.5M-200.7,1203.7L-156.9,1207.1M-252.3,1205.5L-217.9,1208.2M-305.0,1207.3L-271.0,1210.1M-413.8,1211.0L-380.7,1213.9M-469.8,1212.9L-437.3,1215.9M-527.1,1214.8L-495.2,1217.9M-645.3,1218.9L-614.6,1222.0M-706.3,1221.0L-676.3,1224.2M-768.7,1223.1L-739.4,1226.4M-890.9,1228.4L-862.9,1231.8M-957.8,1230.7L-930.7,1234.2M-1026.3,1233.0L-1000.0,1236.6M-1162.1,1238.8L-1137.6,1242.7M-1235.9,1241.4L-1206.3,1246.3M-1305.9,1245.0L-1283.3,1249.1M-1458.3,1251.5L-1437.9,1255.8M-1535.6,1255.4L-1516.4,1259.9M-1620.1,1258.4L-1602.3,1263.0M-1788.7,1267.0L-1773.7,1272.0M-1877.7,1271.5L-1864.3,1276.7M-1973.1,1274.9L-1961.5,1280.2M-2168.2,1284.8L-2160.5,1290.5M-2271.8,1290.0L-2266.2,1296.0M-2379.6,1295.5L-2376.4,1301.7M-2609.4,1307.1L-2611.6,1313.9M-2731.9,1313.3L-2737.2,1320.4M-2859.9,1319.8L-2868.6,1327.2M-3134.3,1333.7L-3150.7,1341.8M-3286.7,1343.2L-3307.7,1351.9M-3442.4,1351.2L-3468.4,1360.3M-3778.6,1368.3L-3815.9,1378.4M-3971.1,1380.1L-4015.7,1391.0M-4164.9,1390.0L-4216.8,1401.5M-4603.9,1414.8L-4674.3,1427.9M-4856.5,1430.2L-4938.8,1444.4M-5107.2,1443.2L-5201.3,1458.3M-5690.2,1476.1L-5814.9,1493.8M-6035.0,1496.9L-6179.9,1516.3M-6413.2,1519.7L-6581.9,1541.0M-7237.6,1566.4L-7462.3,1592.1M-7742.7,1596.7L-8006.1,1625.5M-8307.8,1630.6L-8618.0,1663.0" stroke="#939393" stroke-opacity="0.465" stroke-width="0.85" fill="none" clip-path="url(#fl)"/>
<path d="M-2277.1,1284.3L-2726.8,1306.6M-1401.7,1244.1L-4320.2,1390.5M-834.1,1221.2L-1233.0,1241.8M-4846.7,1428.5L-6776.7,1528.2M-643.8,1214.2L-933.6,1229.4M-6035.0,1496.9L-8125.9,1606.5M-486.0,1208.6L-731.9,1221.7M-7350.9,1574.1L-9975.1,1713.8M-247.2,1201.3L-427.3,1211.1M-11205.1,1803.1L-13880.8,1950.0M-143.1,1198.2L-296.1,1206.8M-58.0,1196.2L-187.9,1203.6M120.4,1191.4L2.0,1198.4M199.0,1189.5L85.3,1196.3M262.7,1188.5L166.7,1194.3M400.0,1185.7L310.6,1191.3M460.8,1184.7L387.0,1189.4M520.9,1183.7L449.3,1188.4M638.9,1181.8L571.7,1186.4M686.2,1181.6L620.5,1186.1M743.7,1180.7L680.1,1185.1M837.2,1180.2L786.9,1183.9M893.3,1179.3L834.6,1183.7M939.4,1179.1L891.9,1182.8M1031.4,1178.7L986.2,1182.3M1077.1,1178.5L1033.2,1182.1M1122.8,1178.3L1080.0,1181.9M1205.7,1178.6L1164.8,1182.2M1251.2,1178.4L1211.4,1182.0M1289.0,1178.9L1257.9,1181.8M1372.5,1179.2L1343.0,1182.1M1418.0,1179.0L1382.0,1182.7M1456.4,1179.5L1428.5,1182.5M1540.6,1179.9L1507.5,1183.5M1579.7,1180.4L1553.9,1183.3M1619.0,1180.9L1593.9,1183.9M1698.4,1181.9L1674.7,1184.9M1738.5,1182.5L1715.6,1185.5M1778.9,1183.0L1756.7,1186.0M1860.5,1184.1L1839.7,1187.2M1901.7,1184.6L1881.6,1187.7M1943.2,1185.2L1923.9,1188.3M2022.6,1187.1L2004.7,1190.3M2065.2,1187.6L2048.0,1190.8M2108.0,1188.2L2091.7,1191.4M2191.0,1190.1L2176.1,1193.5M2234.9,1190.7L2217.3,1195.0M2275.9,1192.2L2262.7,1195.6M2363.0,1194.2L2351.4,1197.7M2406.0,1195.7L2395.2,1199.3M2452.2,1196.3L2442.4,1199.9M2541.8,1199.4L2533.7,1203.1M2589.5,1200.0L2582.4,1203.8M2636.1,1201.6L2630.0,1205.5M2731.9,1204.9L2727.8,1208.9M2781.1,1206.6L2778.1,1210.6M2831.3,1208.3L2829.4,1212.4M2934.5,1211.8L2935.0,1216.1M2987.7,1213.6L2989.4,1218.0M3041.8,1215.5L3044.9,1219.9M3153.5,1219.3L3159.3,1223.9M3211.0,1221.2L3218.2,1226.0M3271.8,1224.4L3280.7,1229.3M3393.7,1228.6L3405.9,1233.7M3456.6,1230.7L3470.5,1236.0M3524.6,1234.3L3540.6,1239.7M3663.2,1240.3L3683.3,1246.0M3732.7,1242.7L3755.0,1248.5M3809.9,1246.6L3834.8,1252.7M3965.6,1253.3L3995.7,1259.8M4043.1,1256.1L4075.8,1262.7M4131.1,1260.5L4167.1,1267.4M2496.6,1197.8L3381.3,1228.2M2233.2,1191.1L3792.5,1245.4M1918.8,1184.8L2149.8,1193.0M3944.9,1257.3L4447.2,1275.3M1805.4,1183.0L1981.7,1189.4M4262.1,1272.3L4745.5,1289.8M1708.1,1181.8L1864.3,1187.6M4584.5,1287.9L5037.0,1304.6M1530.9,1180.0L1651.0,1184.5M5225.3,1320.5L5677.0,1337.7M1450.1,1179.3L1567.3,1183.8M5530.8,1337.0L6028.3,1356.2M1382.4,1179.1L1484.3,1183.1M5872.6,1355.5L6359.3,1374.6M1247.3,1178.8L1333.0,1182.3M6623.6,1397.0L7145.8,1418.2M1180.0,1178.6L1264.1,1182.1M7035.8,1420.3L7618.0,1444.4M1112.8,1178.4L1195.3,1181.9M7503.3,1446.8L8157.8,1474.3M1001.1,1179.1L1069.7,1182.0M8544.6,1507.3L9252.1,1538.0M944.9,1179.4L1012.6,1182.4M9123.5,1541.7L9925.1,1577.2M888.5,1179.7L955.2,1182.7M9791.9,1581.5L10710.0,1622.9M774.9,1180.3L839.6,1183.3M11495.3,1682.9L12748.6,1741.7M728.1,1181.1L792.3,1184.2M12379.7,1738.2L13835.4,1807.8M670.5,1181.5L733.7,1184.5M13689.6,1816.5L15466.6,1903.1M574.7,1183.1L626.1,1185.7M516.0,1183.5L576.9,1186.6M466.8,1184.3L527.1,1187.5M366.8,1186.1L415.8,1188.8M316.0,1186.9L364.3,1189.7M274.0,1188.4L322.1,1191.2M169.2,1190.2L216.0,1193.1M124.9,1191.7L162.0,1194.0M70.8,1192.7L116.6,1195.6M-30.5,1195.2L14.2,1198.2M-78.0,1196.8L-42.7,1199.2M-135.0,1197.8L-91.5,1200.9M-234.5,1201.1L-200.7,1203.7M-285.8,1202.8L-252.3,1205.5M-346.1,1203.9L-305.0,1207.3M-453.6,1207.5L-413.8,1211.0M-509.0,1209.3L-469.8,1212.9M-565.6,1211.2L-527.1,1214.8M-682.3,1215.1L-645.3,1218.9M-735.4,1217.8L-706.3,1221.0M-797.1,1219.9L-768.7,1223.1M-924.6,1224.2L-890.9,1228.4M-984.1,1227.2L-957.8,1230.7M-1051.7,1229.5L-1026.3,1233.0M-1185.9,1235.1L-1162.1,1238.8M-1258.6,1237.5L-1235.9,1241.4M-1327.7,1241.0L-1305.9,1245.0M-1477.9,1247.3L-1458.3,1251.5M-1554.1,1251.1L-1535.6,1255.4M-1637.3,1254.0L-1620.1,1258.4M-1803.1,1262.2L-1788.7,1267.0M-1890.6,1266.6L-1877.7,1271.5M-1984.2,1269.8L-1973.1,1274.9M-2175.6,1279.3L-2168.2,1284.8M-2277.1,1284.3L-2271.8,1290.0M-2382.6,1289.5L-2379.6,1295.5M-2607.2,1300.6L-2609.4,1307.1M-2726.8,1306.6L-2731.9,1313.3M-2851.7,1312.7L-2859.9,1319.8M-3118.8,1325.9L-3134.3,1333.7M-3266.7,1335.0L-3286.7,1343.2M-3417.8,1342.5L-3442.4,1351.2M-3743.4,1358.7L-3778.6,1368.3M-3929.2,1369.9L-3971.1,1380.1M-4116.0,1379.2L-4164.9,1390.0M-4537.9,1402.5L-4603.9,1414.8M-4779.7,1416.9L-4856.5,1430.2M-5019.5,1429.1L-5107.2,1443.2M-5574.5,1459.7L-5690.2,1476.1M-5901.0,1478.9L-6035.0,1496.9M-6258.0,1500.0L-6413.2,1519.7M-7032.5,1542.9L-7237.6,1566.4M-7503.4,1570.6L-7742.7,1596.7M-8027.6,1601.3L-8307.8,1630.6" stroke="#939393" stroke-opacity="0.448" stroke-width="0.84" fill="none" clip-path="url(#fl)"/>
<path d="M-1604.9,1247.9L-3747.6,1352.4M-1195.7,1230.8L-2277.1,1284.3M-2726.8,1306.6L-4985.2,1418.2M-935.8,1220.7L-1401.7,1244.1M-4320.2,1390.5L-6161.2,1482.9M-562.3,1207.2L-834.1,1221.2M-6776.7,1528.2L-8998.7,1643.0M-430.7,1203.0L-643.8,1214.2M-8125.9,1606.5L-10846.4,1749.1M-305.0,1199.0L-486.0,1208.6M-9975.1,1713.8L-13464.2,1899.6M-101.0,1193.2L-247.2,1201.3M-18.8,1191.3L-143.1,1198.2M61.4,1189.4L-58.0,1196.2M216.4,1185.8L120.4,1191.4M291.2,1184.0L199.0,1189.5M352.2,1183.1L262.7,1188.5M471.8,1181.2L400.0,1185.7M530.5,1180.2L460.8,1184.7M588.5,1179.3L520.9,1183.7M692.0,1178.2L638.9,1181.8M748.3,1177.3L686.2,1181.6M794.0,1177.1L743.7,1180.7M894.5,1176.0L837.2,1180.2M939.7,1175.8L893.3,1179.3M984.7,1175.6L939.4,1179.1M1074.4,1175.3L1031.4,1178.7M1119.1,1175.1L1077.1,1178.5M1163.6,1174.9L1122.8,1178.3M1244.8,1175.2L1205.7,1178.6M1289.2,1175.0L1251.2,1178.4M1326.2,1175.5L1289.0,1178.9M1407.9,1175.8L1372.5,1179.2M1445.5,1176.2L1418.0,1179.0M1489.9,1176.1L1456.4,1179.5M1566.0,1177.0L1540.6,1179.9M1604.4,1177.5L1579.7,1180.4M1649.0,1177.3L1619.0,1180.9M1726.8,1178.3L1698.4,1181.9M1766.0,1178.8L1738.5,1182.5M1805.6,1179.4L1778.9,1183.0M1885.4,1180.4L1860.5,1184.1M1921.0,1181.6L1901.7,1184.6M1961.8,1182.2L1943.2,1185.2M2044.1,1183.2L2022.6,1187.1M2081.7,1184.5L2065.2,1187.6M2123.7,1185.1L2108.0,1188.2M2205.2,1186.9L2191.0,1190.1M2248.3,1187.5L2234.9,1190.7M2288.7,1188.9L2275.9,1192.2M2374.1,1190.9L2363.0,1194.2M2416.4,1192.3L2406.0,1195.7M2461.7,1192.9L2452.2,1196.3M2549.5,1195.8L2541.8,1199.4M2596.3,1196.4L2589.5,1200.0M2641.9,1198.0L2636.1,1201.6M2735.8,1201.1L2731.9,1204.9M2784.0,1202.7L2781.1,1206.6M2833.1,1204.3L2831.3,1208.3M2934.1,1207.7L2934.5,1211.8M2986.0,1209.4L2987.7,1213.6M3039.0,1211.2L3041.8,1215.5M3147.9,1214.8L3153.5,1219.3M3204.1,1216.7L3211.0,1221.2M3261.3,1218.6L3271.8,1224.4M3382.1,1223.7L3393.7,1228.6M3443.3,1225.8L3456.6,1230.7M3509.5,1229.1L3524.6,1234.3M3644.0,1234.8L3663.2,1240.3M3711.6,1237.1L3732.7,1242.7M3780.7,1239.4L3809.9,1246.6M3937.1,1247.2L3965.6,1253.3M4012.2,1249.8L4043.1,1256.1M4097.2,1254.0L4131.1,1260.5M2314.7,1189.3L3628.4,1233.7M2131.4,1185.3L2496.6,1197.8M3381.3,1228.2L3982.0,1248.8M1985.9,1182.5L2233.2,1191.1M3792.5,1245.4L4288.9,1262.6M1749.8,1178.7L1918.8,1184.8M4447.2,1275.3L4908.9,1291.8M1655.6,1177.6L1805.4,1183.0M4745.5,1289.8L5167.0,1305.2M1575.5,1176.9L1708.1,1181.8M5037.0,1304.6L5501.5,1321.7M1417.5,1175.7L1530.9,1180.0M5677.0,1337.7L6184.7,1357.0M1351.4,1175.5L1450.1,1179.3M6028.3,1356.2L6525.2,1375.4M1285.4,1175.3L1382.4,1179.1M6359.3,1374.6L6906.0,1396.1M1153.9,1175.0L1247.3,1178.8M7145.8,1418.2L7731.3,1442.0M1099.6,1175.3L1180.0,1178.6M7618.0,1444.4L8275.8,1471.5M1045.0,1175.6L1112.8,1178.4M8157.8,1474.3L8790.9,1500.9M924.4,1175.7L1001.1,1179.1M9252.1,1538.0L10056.3,1573.0M879.9,1176.5L944.9,1179.4M9925.1,1577.2L10845.3,1618.0M824.3,1176.8L888.5,1179.7M10710.0,1622.9L11776.0,1671.1M722.8,1177.9L774.9,1180.3M12748.6,1741.7L13978.0,1799.3M666.4,1178.2L728.1,1181.1M13835.4,1807.8L15606.3,1892.5M619.7,1179.0L670.5,1181.5M15466.6,1903.1L16427.2,1950.0M515.1,1180.1L574.7,1183.1M467.0,1180.9L516.0,1183.5M418.4,1181.7L466.8,1184.3M319.5,1183.4L366.8,1186.1M278.5,1184.8L316.0,1186.9M227.5,1185.7L274.0,1188.4M123.9,1187.4L169.2,1190.2M80.0,1188.9L124.9,1191.7M26.6,1189.8L70.8,1192.7M-73.6,1192.2L-30.5,1195.2M-120.7,1193.8L-78.0,1196.8M-168.7,1195.4L-135.0,1197.8M-275.5,1198.0L-234.5,1201.1M-326.2,1199.6L-285.8,1202.8M-377.9,1201.3L-346.1,1203.9M-484.5,1204.8L-453.6,1207.5M-539.3,1206.5L-509.0,1209.3M-595.3,1208.4L-565.6,1211.2M-710.8,1212.1L-682.3,1215.1M-770.4,1214.1L-735.4,1217.8M-824.5,1216.8L-797.1,1219.9M-950.6,1220.9L-924.6,1224.2M-1009.5,1223.9L-984.1,1227.2M-1076.2,1226.1L-1051.7,1229.5M-1208.8,1231.5L-1185.9,1235.1M-1280.5,1233.9L-1258.6,1237.5M-1348.7,1237.2L-1327.7,1241.0M-1496.8,1243.3L-1477.9,1247.3M-1572.0,1246.9L-1554.1,1251.1M-1653.8,1249.7L-1637.3,1254.0M-1816.9,1257.6L-1803.1,1262.2M-1903.0,1261.8L-1890.6,1266.6M-1994.8,1264.9L-1984.2,1269.8M-2182.7,1274.0L-2175.6,1279.3M-2282.2,1278.8L-2277.1,1284.3M-2385.6,1283.8L-2382.6,1289.5M-2605.2,1294.5L-2607.2,1300.6M-2722.0,1300.1L-2726.8,1306.6M-2843.8,1306.0L-2851.7,1312.7M-3104.0,1318.6L-3118.8,1325.9M-3247.8,1327.2L-3266.7,1335.0M-3394.5,1334.3L-3417.8,1342.5M-3710.1,1349.7L-3743.4,1358.7M-3889.5,1360.3L-3929.2,1369.9M-4069.9,1369.1L-4116.0,1379.2M-4475.9,1391.0L-4537.9,1402.5M-4690.5,1401.5L-4779.7,1416.9M-4937.5,1415.9L-5019.5,1429.1M-5467.0,1444.4L-5574.5,1459.7M-5776.9,1462.3L-5901.0,1478.9M-6080.5,1477.5L-6258.0,1500.0M-6844.4,1521.4L-7032.5,1542.9M-7285.0,1546.7L-7503.4,1570.6M-7713.3,1568.5L-8027.6,1601.3" stroke="#939393" stroke-opacity="0.432" stroke-width="0.83" fill="none" clip-path="url(#fl)"/>
<path d="M-1916.3,1256.7L-3172.5,1316.2M-1037.0,1220.3L-1604.9,1247.9M-3747.6,1352.4L-5647.8,1445.0M-818.7,1212.2L-1195.7,1230.8M-4985.2,1418.2L-6887.8,1512.3M-637.5,1205.8L-935.8,1220.7M-6161.2,1482.9L-8204.8,1585.4M-378.7,1197.7L-562.3,1207.2M-8998.7,1643.0L-12168.8,1806.7M-257.9,1194.0L-430.7,1203.0M-10846.4,1749.1L-14677.4,1950.0M-157.9,1191.2L-305.0,1199.0M-13464.2,1899.6L-14411.8,1950.0M18.1,1186.7L-101.0,1193.2M95.7,1184.9L-18.8,1191.3M171.5,1183.2L61.4,1189.4M306.0,1180.5L216.4,1185.8M365.5,1179.6L291.2,1184.0M435.9,1178.0L352.2,1183.1M539.7,1176.9L471.8,1181.2M596.3,1176.0L530.5,1180.2M652.3,1175.1L588.5,1179.3M752.6,1174.1L692.0,1178.2M797.4,1173.9L748.3,1177.3M851.4,1173.1L794.0,1177.1M939.9,1172.7L894.5,1176.0M984.0,1172.5L939.7,1175.8M1028.0,1172.3L984.7,1175.6M1115.6,1172.0L1074.4,1175.3M1159.2,1171.8L1119.1,1175.1M1195.0,1172.2L1163.6,1174.9M1282.1,1171.9L1244.8,1175.2M1318.3,1172.3L1289.2,1175.0M1361.7,1172.2L1326.2,1175.5M1441.7,1172.4L1407.9,1175.8M1478.5,1172.9L1445.5,1176.2M1515.6,1173.4L1489.9,1176.1M1596.5,1173.7L1566.0,1177.0M1634.1,1174.1L1604.4,1177.5M1672.0,1174.6L1649.0,1177.3M1748.5,1175.6L1726.8,1178.3M1787.1,1176.1L1766.0,1178.8M1826.0,1176.6L1805.6,1179.4M1904.5,1177.5L1885.4,1180.4M1944.1,1178.0L1921.0,1181.6M1979.6,1179.3L1961.8,1182.2M2060.5,1180.3L2044.1,1183.2M2097.5,1181.5L2081.7,1184.5M2138.8,1182.1L2123.7,1185.1M2218.9,1183.9L2205.2,1186.9M2261.2,1184.4L2248.3,1187.5M2300.9,1185.7L2288.7,1188.9M2384.8,1187.6L2374.1,1190.9M2426.3,1189.0L2416.4,1192.3M2470.7,1189.6L2461.7,1192.9M2556.9,1192.4L2549.5,1195.8M2602.8,1193.0L2596.3,1196.4M2647.6,1194.5L2641.9,1198.0M2739.5,1197.5L2735.8,1201.1M2786.7,1199.0L2784.0,1202.7M2834.8,1200.6L2833.1,1204.3M2933.7,1203.8L2934.1,1207.7M2984.4,1205.4L2986.0,1209.4M3036.2,1207.1L3039.0,1211.2M3142.7,1210.6L3147.9,1214.8M3197.5,1212.4L3204.1,1216.7M3253.3,1214.2L3261.3,1218.6M3371.0,1219.1L3382.1,1223.7M3430.7,1221.1L3443.3,1225.8M3495.0,1224.2L3509.5,1229.1M3621.4,1228.4L3644.0,1234.8M3691.5,1231.8L3711.6,1237.1M3758.6,1234.1L3780.7,1239.4M3903.7,1240.0L3937.1,1247.2M3982.9,1243.9L4012.2,1249.8M4065.1,1247.9L4097.2,1254.0M2427.5,1188.6L3456.5,1222.4M2036.6,1179.9L2314.7,1189.3M3628.4,1233.7L4146.0,1251.2M1911.5,1177.8L2131.4,1185.3M3982.0,1248.8L4466.9,1265.4M1803.2,1176.2L1985.9,1182.5M4288.9,1262.6L4753.7,1278.8M1618.5,1174.0L1749.8,1178.7M4908.9,1291.8L5343.2,1307.3M1540.5,1173.4L1655.6,1177.6M5167.0,1305.2L5640.5,1322.4M1463.1,1172.8L1575.5,1176.9M5501.5,1321.7L5971.3,1339.1M1321.9,1172.0L1417.5,1175.7M6184.7,1357.0L6691.9,1376.3M1257.5,1171.9L1351.4,1175.5M6525.2,1375.4L7009.9,1394.2M1204.5,1172.1L1285.4,1175.3M6906.0,1396.1L7442.7,1417.1M1086.9,1172.3L1153.9,1175.0M7731.3,1442.0L8392.3,1468.8M1022.6,1172.1L1099.6,1175.3M8275.8,1471.5L9024.9,1502.5M969.0,1172.4L1045.0,1175.6M8790.9,1500.9L9631.4,1536.2M861.2,1173.0L924.4,1175.7M10056.3,1573.0L11145.5,1620.4M817.2,1173.7L879.9,1176.5M10845.3,1618.0L11912.5,1665.3M762.5,1174.0L824.3,1176.8M11776.0,1671.1L13028.9,1727.6M662.4,1175.0L722.8,1177.9M13978.0,1799.3L15742.7,1882.1M616.7,1175.8L666.4,1178.2M15606.3,1892.5L16809.6,1950.0M560.9,1176.1L619.7,1179.0M467.2,1177.7L515.1,1180.1M419.6,1178.5L467.0,1180.9M371.5,1179.3L418.4,1181.7M273.7,1180.9L319.5,1183.4M232.9,1182.2L278.5,1184.8M182.6,1183.1L227.5,1185.7M88.8,1185.3L123.9,1187.4M36.6,1186.2L80.0,1188.9M-7.7,1187.6L26.6,1189.8M-107.1,1190.0L-73.6,1192.2M-153.8,1191.5L-120.7,1193.8M-209.5,1192.4L-168.7,1195.4M-307.3,1195.5L-275.5,1198.0M-357.6,1197.1L-326.2,1199.6M-408.8,1198.8L-377.9,1201.3M-514.4,1202.1L-484.5,1204.8M-568.7,1203.9L-539.3,1206.5M-624.2,1205.6L-595.3,1208.4M-738.5,1209.3L-710.8,1212.1M-797.5,1211.2L-770.4,1214.1M-851.1,1213.8L-824.5,1216.8M-975.7,1217.8L-950.6,1220.9M-1040.0,1219.9L-1009.5,1223.9M-1099.9,1222.8L-1076.2,1226.1M-1230.9,1228.0L-1208.8,1231.5M-1301.6,1230.3L-1280.5,1233.9M-1369.0,1233.5L-1348.7,1237.2M-1515.1,1239.4L-1496.8,1243.3M-1589.1,1242.9L-1572.0,1246.9M-1669.6,1245.6L-1653.8,1249.7M-1830.3,1253.2L-1816.9,1257.6M-1914.9,1257.2L-1903.0,1261.8M-2005.1,1260.3L-1994.8,1264.9M-2189.5,1269.0L-2182.7,1274.0M-2287.0,1273.6L-2282.2,1278.8M-2388.3,1278.4L-2385.6,1283.8M-2603.3,1288.5L-2605.2,1294.5M-2717.4,1293.9L-2722.0,1300.1M-2836.3,1299.6L-2843.8,1306.0M-3090.0,1311.6L-3104.0,1318.6M-3229.7,1319.8L-3247.8,1327.2M-3372.4,1326.5L-3394.5,1334.3M-3678.5,1341.1L-3710.1,1349.7M-3852.1,1351.1L-3889.5,1360.3M-4026.4,1359.5L-4069.9,1369.1M-4417.7,1380.1L-4475.9,1391.0M-4624.0,1390.0L-4690.5,1401.5M-4860.8,1403.5L-4937.5,1415.9M-5366.8,1430.2L-5467.0,1444.4M-5661.6,1446.9L-5776.9,1462.3M-5950.2,1461.0L-6080.5,1477.5M-6671.3,1501.6L-6844.4,1521.4M-7037.6,1519.7L-7285.0,1546.7M-7486.6,1544.8L-7713.3,1568.5" stroke="#939393" stroke-opacity="0.415" stroke-width="0.81" fill="none" clip-path="url(#fl)"/>
<path d="M-1518.3,1235.0L-4020.1,1352.0M-1162.1,1220.9L-1916.3,1256.7M-3172.5,1316.2L-5116.8,1408.4M-731.6,1205.4L-1037.0,1220.3M-5647.8,1445.0L-7546.6,1537.6M-559.8,1199.4L-818.7,1212.2M-6887.8,1512.3L-9048.8,1619.1M-433.8,1195.6L-637.5,1205.8M-8204.8,1585.4L-10822.0,1716.6M-213.5,1189.2L-378.7,1197.7M-12168.8,1806.7L-14943.0,1950.0M-117.0,1186.6L-257.9,1194.0M-38.0,1184.8L-157.9,1191.2M114.9,1181.4L18.1,1186.7M188.8,1179.7L95.7,1184.9M261.2,1178.1L171.5,1183.2M389.8,1175.6L306.0,1180.5M446.9,1174.8L365.5,1179.6M503.3,1173.9L435.9,1178.0M603.9,1172.9L539.7,1176.9M658.6,1172.0L596.3,1176.0M712.8,1171.2L652.3,1175.1M809.9,1170.2L752.6,1174.1M853.5,1170.0L797.4,1173.9M896.9,1169.9L851.4,1173.1M983.3,1169.5L939.9,1172.7M1026.4,1169.3L984.0,1172.5M1069.4,1169.2L1028.0,1172.3M1154.9,1168.8L1115.6,1172.0M1197.5,1168.6L1159.2,1171.8M1232.7,1169.1L1195.0,1172.2M1310.7,1169.3L1282.1,1171.9M1353.3,1169.2L1318.3,1172.3M1389.0,1169.6L1361.7,1172.2M1467.6,1169.9L1441.7,1172.4M1503.9,1170.3L1478.5,1172.9M1546.5,1170.2L1515.6,1173.4M1619.9,1171.1L1596.5,1173.7M1656.9,1171.5L1634.1,1174.1M1694.2,1172.0L1672.0,1174.6M1769.5,1172.9L1748.5,1175.6M1807.5,1173.4L1787.1,1176.1M1845.7,1173.9L1826.0,1176.6M1922.9,1174.8L1904.5,1177.5M1961.8,1175.3L1944.1,1178.0M2001.0,1175.8L1979.6,1179.3M2076.3,1177.5L2060.5,1180.3M2116.5,1178.0L2097.5,1181.5M2153.3,1179.2L2138.8,1182.1M2232.1,1180.9L2218.9,1183.9M2273.7,1181.4L2261.2,1184.4M2312.6,1182.7L2300.9,1185.7M2395.1,1184.5L2384.8,1187.6M2435.8,1185.8L2426.3,1189.0M2479.4,1186.4L2470.7,1189.6M2564.1,1189.1L2556.9,1192.4M2609.0,1189.7L2602.8,1193.0M2652.9,1191.1L2647.6,1194.5M2743.1,1194.0L2739.5,1197.5M2789.4,1195.4L2786.7,1199.0M2836.5,1197.0L2834.8,1200.6M2933.2,1200.0L2933.7,1203.8M2982.9,1201.6L2984.4,1205.4M3033.6,1203.2L3036.2,1207.1M3137.6,1206.6L3142.7,1210.6M3191.1,1208.3L3197.5,1212.4M3245.7,1210.0L3253.3,1214.2M3360.5,1214.7L3371.0,1219.1M3418.6,1216.5L3430.7,1221.1M3481.3,1219.6L3495.0,1224.2M3604.3,1223.6L3621.4,1228.4M3672.4,1226.8L3691.5,1231.8M3737.6,1228.9L3758.6,1234.1M3878.4,1234.6L3903.7,1240.0M3955.2,1238.3L3982.9,1243.9M4034.6,1242.0L4065.1,1247.9M2590.8,1189.5L3257.7,1210.9M2289.2,1181.9L3698.3,1227.7M2114.6,1178.3L2427.5,1188.6M3456.5,1222.4L4016.3,1240.8M1854.8,1173.8L2036.6,1179.9M4146.0,1251.2L4613.1,1267.0M1763.0,1172.7L1911.5,1177.8M4466.9,1265.4L4871.2,1279.2M1672.4,1171.6L1803.2,1176.2M4753.7,1278.8L5156.9,1292.8M1507.0,1170.0L1618.5,1174.0M5343.2,1307.3L5780.0,1323.0M1431.6,1169.4L1540.5,1173.4M5640.5,1322.4L6119.4,1339.8M1368.2,1169.3L1463.1,1172.8M5971.3,1339.1L6437.6,1356.3M1241.9,1169.0L1321.9,1172.0M6691.9,1376.3L7186.7,1395.1M1179.0,1168.8L1257.5,1171.9M7009.9,1394.2L7631.7,1418.2M1127.0,1169.1L1204.5,1172.1M7442.7,1417.1L8044.3,1440.8M1011.7,1169.2L1086.9,1172.3M8392.3,1468.8L9144.4,1499.3M959.2,1169.5L1022.6,1172.1M9024.9,1502.5L9755.0,1532.6M906.4,1169.8L969.0,1172.4M9631.4,1536.2L10458.1,1570.9M800.3,1170.3L861.2,1173.0M11145.5,1620.4L12046.6,1659.6M756.7,1171.0L817.2,1173.7M11912.5,1665.3L13164.9,1720.8M703.0,1171.3L762.5,1174.0M13028.9,1727.6L14522.6,1795.0M613.8,1172.8L662.4,1175.0M15742.7,1882.1L17192.0,1950.0M559.1,1173.1L616.7,1175.8M513.5,1173.8L560.9,1176.1M420.7,1175.3L467.2,1177.7M373.6,1176.1L419.6,1178.5M326.0,1176.8L371.5,1179.3M238.1,1178.9L273.7,1180.9M188.8,1179.7L232.9,1182.2M139.1,1180.5L182.6,1183.1M46.2,1182.7L88.8,1185.3M2.9,1184.1L36.6,1186.2M-49.3,1184.9L-7.7,1187.6M-147.6,1187.2L-107.1,1190.0M-194.0,1188.7L-153.8,1191.5M-241.1,1190.1L-209.5,1192.4M-338.1,1193.2L-307.3,1195.5M-395.5,1194.1L-357.6,1197.1M-446.2,1195.7L-408.8,1198.8M-550.6,1198.9L-514.4,1202.1M-604.3,1200.6L-568.7,1203.9M-652.2,1203.0L-624.2,1205.6M-765.4,1206.5L-738.5,1209.3M-823.7,1208.3L-797.5,1211.2M-883.2,1210.2L-851.1,1213.8M-1000.0,1214.8L-975.7,1217.8M-1063.6,1216.8L-1040.0,1219.9M-1122.9,1219.6L-1099.9,1222.8M-1252.3,1224.7L-1230.9,1228.0M-1322.1,1226.9L-1301.6,1230.3M-1388.7,1230.0L-1369.0,1233.5M-1532.7,1235.6L-1515.1,1239.4M-1605.7,1239.1L-1589.1,1242.9M-1684.9,1241.6L-1669.6,1245.6M-1843.1,1249.0L-1830.3,1253.2M-1926.3,1252.8L-1914.9,1257.2M-2015.0,1255.7L-2005.1,1260.3M-2196.1,1264.1L-2189.5,1269.0M-2291.7,1268.6L-2287.0,1273.6M-2391.0,1273.1L-2388.3,1278.4M-2601.4,1282.9L-2603.3,1288.5M-2713.0,1288.0L-2717.4,1293.9M-2829.2,1293.4L-2836.3,1299.6M-3076.6,1304.9L-3090.0,1311.6M-3212.6,1312.7L-3229.7,1319.8M-3351.3,1319.1L-3372.4,1326.5M-3648.6,1333.0L-3678.5,1341.1M-3816.6,1342.5L-3852.1,1351.1M-3985.3,1350.4L-4026.4,1359.5M-4362.8,1369.9L-4417.7,1380.1M-4561.5,1379.2L-4624.0,1390.0M-4788.7,1391.9L-4860.8,1403.5M-5273.2,1416.9L-5366.8,1430.2M-5528.5,1429.1L-5661.6,1446.9M-5829.1,1445.6L-5950.2,1461.0M-6473.6,1478.9L-6671.3,1501.6M-6857.4,1500.0L-7037.6,1519.7M-7278.8,1523.2L-7486.6,1544.8" stroke="#939393" stroke-opacity="0.399" stroke-width="0.80" fill="none" clip-path="url(#fl)"/>
<path d="M-1012.4,1211.3L-1518.3,1235.0M-4020.1,1352.0L-5770.7,1433.9M-804.8,1204.0L-1162.1,1220.9M-5116.8,1408.4L-6849.6,1490.6M-505.1,1194.3L-731.6,1205.4M-7546.6,1537.6L-10001.8,1657.3M-383.8,1190.7L-559.8,1199.4M-9048.8,1619.1L-12078.8,1769.0M-267.8,1187.2L-433.8,1195.6M-10822.0,1716.6L-14561.5,1904.2M-92.8,1183.0L-213.5,1189.2M-1.9,1180.5L-117.0,1186.6M72.9,1178.9L-38.0,1184.8M217.8,1175.7L114.9,1181.4M276.0,1174.8L188.8,1179.7M345.2,1173.3L261.2,1178.1M457.5,1171.7L389.8,1175.6M512.7,1170.8L446.9,1174.8M567.3,1170.0L503.3,1173.9M664.7,1169.0L603.9,1172.9M717.7,1168.3L658.6,1172.0M760.7,1168.1L712.8,1171.2M855.5,1167.1L809.9,1170.2M898.0,1167.0L853.5,1170.0M940.4,1166.8L896.9,1169.9M1024.9,1166.5L983.3,1169.5M1067.0,1166.3L1026.4,1169.3M1109.0,1166.1L1069.4,1169.2M1192.6,1165.8L1154.9,1168.8M1227.0,1166.2L1197.5,1168.6M1268.7,1166.0L1232.7,1169.1M1345.2,1166.3L1310.7,1169.3M1386.8,1166.1L1353.3,1169.2M1421.9,1166.6L1389.0,1169.6M1498.8,1166.8L1467.6,1169.9M1534.4,1167.3L1503.9,1170.3M1570.2,1167.7L1546.5,1170.2M1648.0,1168.0L1619.9,1171.1M1684.3,1168.4L1656.9,1171.5M1720.9,1168.8L1694.2,1172.0M1794.7,1169.7L1769.5,1172.9M1831.9,1170.2L1807.5,1173.4M1864.7,1171.3L1845.7,1173.9M1940.6,1172.2L1922.9,1174.8M1978.9,1172.6L1961.8,1175.3M2017.5,1173.1L2001.0,1175.8M2091.6,1174.7L2076.3,1177.5M2131.1,1175.2L2116.5,1178.0M2167.3,1176.4L2153.3,1179.2M2244.8,1178.1L2232.1,1180.9M2285.6,1178.6L2273.7,1181.4M2324.0,1179.8L2312.6,1182.7M2405.0,1181.5L2395.1,1184.5M2447.3,1182.1L2435.8,1185.8M2487.8,1183.3L2479.4,1186.4M2570.9,1185.9L2564.1,1189.1M2615.0,1186.5L2609.0,1189.7M2658.1,1187.9L2652.9,1191.1M2746.6,1190.6L2743.1,1194.0M2791.9,1192.0L2789.4,1195.4M2838.1,1193.5L2836.5,1197.0M2932.8,1196.4L2933.2,1200.0M2981.5,1198.0L2982.9,1201.6M3031.0,1199.5L3033.6,1203.2M3132.8,1202.7L3137.6,1206.6M3185.1,1204.3L3191.1,1208.3M3238.4,1206.0L3245.7,1210.0M3350.4,1210.5L3360.5,1214.7M3407.2,1212.2L3418.6,1216.5M3468.2,1215.1L3481.3,1219.6M3588.1,1218.9L3604.3,1223.6M3654.2,1222.0L3672.4,1226.8M3717.7,1224.1L3737.6,1228.9M3854.4,1229.5L3878.4,1234.6M3928.8,1232.9L3955.2,1238.3M3998.8,1235.2L4034.6,1242.0M2176.4,1176.3L2590.8,1189.5M3257.7,1210.9L3870.9,1230.5M2038.4,1173.8L2289.2,1181.9M3698.3,1227.7L4174.8,1243.1M1904.8,1171.4L2114.6,1178.3M4016.3,1240.8L4451.8,1255.2M1712.0,1168.9L1854.8,1173.8M4613.1,1267.0L5028.7,1281.0M1624.1,1167.9L1763.0,1172.7M4871.2,1279.2L5325.1,1294.8M1549.3,1167.4L1672.4,1171.6M5156.9,1292.8L5607.4,1308.5M1412.9,1166.7L1507.0,1170.0M5780.0,1323.0L6211.0,1338.4M1339.5,1166.1L1431.6,1169.4M6119.4,1339.8L6594.9,1357.0M1277.8,1165.9L1368.2,1169.3M6437.6,1356.3L6958.2,1375.5M1165.3,1166.1L1241.9,1169.0M7186.7,1395.1L7737.8,1416.1M1103.7,1165.9L1179.0,1168.8M7631.7,1418.2L8246.4,1442.0M1052.6,1166.2L1127.0,1169.1M8044.3,1440.8L8723.2,1467.4M949.7,1166.7L1011.7,1169.2M9144.4,1499.3L9876.8,1529.0M898.0,1167.0L959.2,1169.5M9755.0,1532.6L10583.7,1566.8M846.0,1167.2L906.4,1169.8M10458.1,1570.9L11405.6,1610.7M751.2,1168.2L800.3,1170.3M12046.6,1659.6L13298.3,1714.1M698.5,1168.4L756.7,1171.0M13164.9,1720.8L14655.4,1786.8M655.0,1169.1L703.0,1171.3M14522.6,1795.0L16005.7,1862.0M557.4,1170.1L613.8,1172.8M512.7,1170.8L559.1,1173.1M467.5,1171.6L513.5,1173.8M375.7,1173.0L420.7,1175.3M329.1,1173.8L373.6,1176.1M282.0,1174.5L326.0,1176.8M194.9,1176.5L238.1,1178.9M146.2,1177.3L188.8,1179.7M96.9,1178.1L139.1,1180.5M5.0,1180.2L46.2,1182.7M-37.9,1181.5L2.9,1184.1M-81.6,1182.8L-49.3,1184.9M-179.1,1185.1L-147.6,1187.2M-225.1,1186.5L-194.0,1188.7M-279.5,1187.4L-241.1,1190.1M-375.5,1190.3L-338.1,1193.2M-424.9,1191.8L-395.5,1194.1M-475.2,1193.3L-446.2,1195.7M-578.6,1196.5L-550.6,1198.9M-631.8,1198.1L-604.3,1200.6M-686.1,1199.8L-652.2,1203.0M-791.4,1203.8L-765.4,1206.5M-849.1,1205.6L-823.7,1208.3M-908.0,1207.4L-883.2,1210.2M-1023.6,1211.8L-1000.0,1214.8M-1086.4,1213.8L-1063.6,1216.8M-1145.1,1216.5L-1122.9,1219.6M-1273.0,1221.4L-1252.3,1224.7M-1336.9,1224.4L-1322.1,1226.9M-1402.9,1227.4L-1388.7,1230.0M-1541.2,1233.8L-1532.7,1235.6M-1613.8,1237.2L-1605.7,1239.1M-1688.7,1240.6L-1684.9,1241.6M-1846.2,1247.9L-1843.1,1249.0M-1929.1,1251.8L-1926.3,1252.8M-3208.4,1311.0L-3212.6,1312.7M-3346.2,1317.4L-3351.3,1319.1M-3641.3,1331.0L-3648.6,1333.0M-3799.6,1338.3L-3816.6,1342.5M-3965.6,1346.0L-3985.3,1350.4M-4323.6,1362.6L-4362.8,1369.9M-4517.0,1371.5L-4561.5,1379.2M-4721.0,1381.0L-4788.7,1391.9M-5185.5,1404.5L-5273.2,1416.9M-5429.8,1415.9L-5528.5,1429.1M-5716.3,1431.3L-5829.1,1445.6M-6328.4,1462.3L-6473.6,1478.9M-6691.0,1481.8L-6857.4,1500.0M-7087.7,1503.2L-7278.8,1523.2" stroke="#939393" stroke-opacity="0.382" stroke-width="0.78" fill="none" clip-path="url(#fl)"/>
<path d="M-721.9,1197.7L-1012.4,1211.3M-5770.7,1433.9L-7635.0,1521.1M-575.3,1193.1L-804.8,1204.0M-6849.6,1490.6L-9095.2,1597.1M-336.7,1186.1L-505.1,1194.3M-10001.8,1657.3L-13142.2,1810.4M-224.8,1182.8L-383.8,1190.7M-12078.8,1769.0L-15740.2,1950.0M-131.9,1180.4L-267.8,1187.2M-14561.5,1904.2L-15474.4,1950.0M18.9,1177.2L-92.8,1183.0M104.8,1174.9L-1.9,1180.5M163.4,1174.1L72.9,1178.9M301.9,1171.1L217.8,1175.7M357.8,1170.3L276.0,1174.8M413.0,1169.5L345.2,1173.3M521.7,1167.9L457.5,1171.7M575.1,1167.1L512.7,1170.8M627.9,1166.3L567.3,1170.0M722.4,1165.4L664.7,1169.0M764.6,1165.3L717.7,1168.3M815.6,1164.5L760.7,1168.1M899.0,1164.2L855.5,1167.1M940.6,1164.0L898.0,1167.0M990.2,1163.3L940.4,1166.8M1064.7,1163.5L1024.9,1166.5M1105.8,1163.4L1067.0,1166.3M1146.9,1163.2L1109.0,1166.1M1228.7,1162.9L1192.6,1165.8M1262.5,1163.3L1227.0,1166.2M1303.3,1163.1L1268.7,1166.0M1378.2,1163.4L1345.2,1166.3M1412.5,1163.8L1386.8,1166.1M1453.3,1163.6L1421.9,1166.6M1522.8,1164.5L1498.8,1166.8M1557.9,1164.9L1534.4,1167.3M1598.7,1164.7L1570.2,1167.7M1669.6,1165.6L1648.0,1168.0M1705.4,1166.0L1684.3,1168.4M1741.4,1166.4L1720.9,1168.8M1814.0,1167.3L1794.7,1169.7M1850.6,1167.7L1831.9,1170.2M1887.5,1168.1L1864.7,1171.3M1957.7,1169.6L1940.6,1172.2M1995.4,1170.1L1978.9,1172.6M2033.3,1170.5L2017.5,1173.1M2106.3,1172.1L2091.6,1174.7M2145.1,1172.6L2131.1,1175.2M2180.8,1173.7L2167.3,1176.4M2257.0,1175.3L2244.8,1178.1M2297.1,1175.8L2285.6,1178.6M2334.9,1177.0L2324.0,1179.8M2414.5,1178.7L2405.0,1181.5M2456.0,1179.2L2447.3,1182.1M2495.9,1180.4L2487.8,1183.3M2577.5,1182.9L2570.9,1185.9M2620.8,1183.4L2615.0,1186.5M2663.1,1184.7L2658.1,1187.9M2749.9,1187.4L2746.6,1190.6M2794.4,1188.8L2791.9,1192.0M2839.6,1190.2L2838.1,1193.5M2932.5,1193.0L2932.8,1196.4M2980.1,1194.5L2981.5,1198.0M3028.6,1195.9L3031.0,1199.5M3128.2,1199.0L3132.8,1202.7M3179.3,1200.6L3185.1,1204.3M3231.4,1202.2L3238.4,1206.0M3340.8,1206.4L3350.4,1210.5M3396.2,1208.1L3407.2,1212.2M3455.7,1210.9L3468.2,1215.1M3572.5,1214.5L3588.1,1218.9M3636.9,1217.5L3654.2,1222.0M3698.7,1219.4L3717.7,1224.1M3831.6,1224.6L3854.4,1229.5M3903.8,1227.9L3928.8,1232.9M3971.8,1230.0L3998.8,1235.2M2520.1,1181.1L3351.8,1206.8M2265.9,1175.2L3738.8,1221.2M1966.5,1169.5L2176.4,1176.3M3870.9,1230.5L4336.7,1245.4M1850.6,1167.7L2038.4,1173.8M4174.8,1243.1L4591.6,1256.6M1762.6,1166.7L1904.8,1171.4M4451.8,1255.2L4874.0,1269.0M1590.0,1164.8L1712.0,1168.9M5028.7,1281.0L5451.0,1295.3M1517.0,1164.3L1624.1,1167.9M5325.1,1294.8L5740.2,1309.0M1444.5,1163.7L1549.3,1167.4M5607.4,1308.5L6007.8,1322.4M1323.1,1163.4L1412.9,1166.7M6211.0,1338.4L6689.3,1355.5M1262.5,1163.3L1339.5,1166.1M6594.9,1357.0L7056.1,1373.8M1202.0,1163.2L1277.8,1165.9M6958.2,1375.5L7466.0,1394.2M1091.7,1163.3L1165.3,1166.1M7737.8,1416.1L8355.3,1439.6M1041.5,1163.5L1103.7,1165.9M8246.4,1442.0L8835.7,1464.7M981.1,1163.4L1052.6,1166.2M8723.2,1467.4L9378.6,1493.2M889.9,1164.3L949.7,1166.7M9876.8,1529.0L10707.3,1562.8M838.9,1164.5L898.0,1167.0M10583.7,1566.8L11532.4,1606.0M787.8,1164.8L846.0,1167.2M11405.6,1610.7L12502.2,1656.8M694.1,1165.7L751.2,1168.2M13298.3,1714.1L14785.4,1778.8M651.5,1166.4L698.5,1168.4M14655.4,1786.8L16132.6,1852.3M599.2,1166.6L655.0,1169.1M16005.7,1862.0L17956.4,1950.0M512.0,1168.0L557.4,1170.1M467.7,1168.7L512.7,1170.8M422.9,1169.4L467.5,1171.6M332.1,1170.8L375.7,1173.0M286.0,1171.5L329.1,1173.8M239.4,1172.2L282.0,1174.5M153.0,1174.2L194.9,1176.5M104.8,1174.9L146.2,1177.3M64.2,1176.2L96.9,1178.1M-27.0,1178.2L5.0,1180.2M-77.5,1179.0L-37.9,1181.5M-120.8,1180.3L-81.6,1182.8M-217.3,1182.5L-179.1,1185.1M-262.9,1183.8L-225.1,1186.5M-309.2,1185.2L-279.5,1187.4M-404.5,1188.1L-375.5,1190.3M-453.5,1189.5L-424.9,1191.8M-503.3,1191.0L-475.2,1193.3M-605.8,1194.1L-578.6,1196.5M-658.5,1195.7L-631.8,1198.1M-712.3,1197.3L-686.1,1199.8M-822.9,1200.6L-791.4,1203.8M-873.8,1202.9L-849.1,1205.6M-926.1,1205.4L-908.0,1207.4M-1035.1,1210.4L-1023.6,1211.8M-1092.0,1213.0L-1086.4,1213.8M-1150.6,1215.7L-1145.1,1216.5M-5164.5,1401.5L-5185.5,1404.5M-5406.1,1412.7L-5429.8,1415.9M-5662.7,1424.6L-5716.3,1431.3M-6226.4,1450.6L-6328.4,1462.3M-6536.9,1465.0L-6691.0,1481.8M-6911.3,1484.8L-7087.7,1503.2" stroke="#939393" stroke-opacity="0.366" stroke-width="0.77" fill="none" clip-path="url(#fl)"/>
<path d="M-505.0,1187.6L-721.9,1197.7M-7635.0,1521.1L-9775.2,1621.2M-388.6,1184.2L-575.3,1193.1M-9095.2,1597.1L-11676.5,1719.5M-184.2,1178.7L-336.7,1186.1M-13142.2,1810.4L-16006.0,1950.0M-108.3,1177.1L-224.8,1182.8M-20.5,1174.8L-131.9,1180.4M122.6,1171.8L18.9,1177.2M192.0,1170.4L104.8,1174.9M259.9,1168.9L163.4,1174.1M369.9,1167.4L301.9,1171.1M434.6,1166.0L357.8,1170.3M487.8,1165.2L413.0,1169.5M582.6,1164.3L521.7,1167.9M634.3,1163.6L575.1,1167.1M685.4,1162.9L627.9,1166.3M777.2,1162.0L722.4,1165.4M818.2,1161.8L764.6,1165.3M859.2,1161.7L815.6,1164.5M949.0,1160.8L899.0,1164.2M989.5,1160.6L940.6,1164.0M1029.8,1160.5L990.2,1163.3M1102.8,1160.7L1064.7,1163.5M1143.1,1160.6L1105.8,1163.4M1183.3,1160.4L1146.9,1163.2M1256.5,1160.7L1228.7,1162.9M1296.5,1160.5L1262.5,1163.3M1329.9,1160.9L1303.3,1163.1M1403.6,1161.1L1378.2,1163.4M1443.6,1161.0L1412.5,1163.8M1477.5,1161.4L1453.3,1163.6M1551.7,1161.6L1522.8,1164.5M1586.1,1162.0L1557.9,1164.9M1620.7,1162.4L1598.7,1164.7M1690.5,1163.2L1669.6,1165.6M1725.8,1163.6L1705.4,1166.0M1761.2,1164.1L1741.4,1166.4M1832.7,1164.9L1814.0,1167.3M1868.8,1165.3L1850.6,1167.7M1905.1,1165.7L1887.5,1168.1M1978.3,1166.6L1957.7,1169.6M2011.3,1167.6L1995.4,1170.1M2048.6,1168.1L2033.3,1170.5M2120.5,1169.6L2106.3,1172.1M2158.6,1170.0L2145.1,1172.6M2193.9,1171.1L2180.8,1173.7M2271.7,1172.0L2257.0,1175.3M2308.2,1173.1L2297.1,1175.8M2345.4,1174.3L2334.9,1177.0M2423.6,1175.9L2414.5,1178.7M2464.4,1176.4L2456.0,1179.2M2503.6,1177.6L2495.9,1180.4M2583.8,1180.0L2577.5,1182.9M2626.3,1180.5L2620.8,1183.4M2667.9,1181.8L2663.1,1184.7M2753.1,1184.3L2749.9,1187.4M2796.7,1185.6L2794.4,1188.8M2841.1,1187.0L2839.6,1190.2M2932.1,1189.7L2932.5,1193.0M2978.8,1191.1L2980.1,1194.5M3026.3,1192.5L3028.6,1195.9M3123.7,1195.4L3128.2,1199.0M3173.8,1197.0L3179.3,1200.6M3224.7,1198.5L3231.4,1202.2M3331.6,1202.6L3340.8,1206.4M3385.7,1204.2L3396.2,1208.1M3443.7,1206.8L3455.7,1210.9M3557.7,1210.3L3572.5,1214.5M3620.4,1213.1L3636.9,1217.5M3680.6,1215.0L3698.7,1219.4M3809.8,1219.9L3831.6,1224.6M3879.9,1223.0L3903.8,1227.9M3946.0,1225.1L3971.8,1230.0M2354.1,1174.2L3594.7,1211.9M2158.6,1170.0L2520.1,1181.1M3351.8,1206.8L3932.7,1224.7M2026.6,1167.7L2265.9,1175.2M3738.8,1221.2L4201.6,1235.6M1811.6,1164.6L1966.5,1169.5M4336.7,1245.4L4733.1,1258.1M1713.7,1163.3L1850.6,1167.7M4591.6,1256.6L5025.1,1270.7M1641.0,1162.7L1762.6,1166.7M4874.0,1269.0L5266.9,1282.0M1486.1,1161.3L1590.0,1164.8M5451.0,1295.3L5873.5,1309.6M1426.3,1161.2L1517.0,1164.3M5740.2,1309.0L6147.9,1323.0M1355.8,1160.6L1444.5,1163.7M6007.8,1322.4L6508.1,1339.8M1237.2,1160.4L1323.1,1163.4M6689.3,1355.5L7223.1,1374.6M1188.4,1160.6L1262.5,1163.3M7056.1,1373.8L7566.4,1392.3M1129.2,1160.5L1202.0,1163.2M7466.0,1394.2L8031.2,1415.0M1021.0,1160.6L1091.7,1163.3M8355.3,1439.6L9051.9,1466.1M971.7,1160.8L1041.5,1163.5M8835.7,1464.7L9610.5,1494.7M922.2,1161.1L981.1,1163.4M9378.6,1493.2L10246.9,1527.3M832.0,1161.9L889.9,1164.3M10707.3,1562.8L11657.2,1601.3M781.8,1162.2L838.9,1164.5M11532.4,1606.0L12629.3,1651.3M731.4,1162.4L787.8,1164.8M12502.2,1656.8L13786.5,1710.7M639.1,1163.3L694.1,1165.7M14785.4,1778.8L16256.5,1842.8M596.9,1163.9L651.5,1166.4M16132.6,1852.3L18279.2,1947.4M554.3,1164.6L599.2,1166.6M467.8,1165.9L512.0,1168.0M424.0,1166.6L467.7,1168.7M379.6,1167.3L422.9,1169.4M289.7,1168.6L332.1,1170.8M244.1,1169.3L286.0,1171.5M198.0,1170.0L239.4,1172.2M112.3,1171.9L153.0,1174.2M72.6,1173.1L104.8,1174.9M24.4,1173.9L64.2,1176.2M-66.0,1175.8L-27.0,1178.2M-108.3,1177.1L-77.5,1179.0M-158.8,1177.9L-120.8,1180.3M-247.0,1180.4L-217.3,1182.5M-292.2,1181.8L-262.9,1183.8M-338.2,1183.1L-309.2,1185.2M-439.7,1185.4L-404.5,1188.1M-488.1,1186.8L-453.5,1189.5M-537.4,1188.2L-503.3,1191.0M-632.3,1191.8L-605.8,1194.1M-678.1,1193.9L-658.5,1195.7M-725.1,1196.1L-712.3,1197.3M-6869.3,1480.4L-6911.3,1484.8" stroke="#939393" stroke-opacity="0.349" stroke-width="0.76" fill="none" clip-path="url(#fl)"/>
<path d="M-343.1,1180.0L-505.0,1187.6M-9775.2,1621.2L-13004.7,1772.3M-235.3,1177.0L-388.6,1184.2M-11676.5,1719.5L-15671.4,1908.9M-72.1,1173.2L-184.2,1178.7M12.9,1171.1L-108.3,1177.1M83.1,1169.6L-20.5,1174.8M207.4,1167.4L122.6,1171.8M273.9,1166.1L192.0,1170.4M328.0,1165.3L259.9,1168.9M444.9,1163.2L369.9,1167.4M496.9,1162.5L434.6,1166.0M548.4,1161.8L487.8,1165.2M640.4,1160.9L582.6,1164.3M690.6,1160.2L634.3,1163.6M731.2,1160.1L685.4,1162.9M820.8,1159.2L777.2,1162.0M861.0,1159.1L818.2,1161.8M909.2,1158.4L859.2,1161.7M988.7,1158.1L949.0,1160.8M1028.3,1158.0L989.5,1160.6M1067.9,1157.8L1029.8,1160.5M1139.5,1158.0L1102.8,1160.7M1178.9,1157.9L1143.1,1160.6M1218.2,1157.7L1183.3,1160.4M1289.9,1158.0L1256.5,1160.7M1329.1,1157.8L1296.5,1160.5M1361.9,1158.2L1329.9,1160.9M1434.2,1158.4L1403.6,1161.1M1467.5,1158.8L1443.6,1161.0M1506.7,1158.7L1477.5,1161.4M1573.9,1159.4L1551.7,1161.6M1607.8,1159.8L1586.1,1162.0M1641.9,1160.2L1620.7,1162.4M1715.7,1160.5L1690.5,1163.2M1750.3,1160.8L1725.8,1163.6M1785.0,1161.2L1761.2,1164.1M1850.8,1162.6L1832.7,1164.9M1886.3,1163.0L1868.8,1165.3M1922.0,1163.4L1905.1,1165.7M1994.1,1164.2L1978.3,1166.6M2026.7,1165.2L2011.3,1167.6M2063.4,1165.7L2048.6,1168.1M2134.2,1167.1L2120.5,1169.6M2171.7,1167.5L2158.6,1170.0M2209.5,1168.0L2193.9,1171.1M2283.0,1169.5L2271.7,1172.0M2319.0,1170.6L2308.2,1173.1M2358.0,1171.0L2345.4,1174.3M2432.5,1173.2L2423.6,1175.9M2472.6,1173.7L2464.4,1176.4M2511.1,1174.8L2503.6,1177.6M2590.0,1177.2L2583.8,1180.0M2631.6,1177.7L2626.3,1180.5M2672.5,1178.9L2667.9,1181.8M2756.1,1181.3L2753.1,1184.3M2799.0,1182.6L2796.7,1185.6M2842.5,1183.9L2841.1,1187.0M2931.8,1186.5L2932.1,1189.7M2977.5,1187.9L2978.8,1191.1M3024.0,1189.2L3026.3,1192.5M3119.5,1192.0L3123.7,1195.4M3168.5,1193.5L3173.8,1197.0M3218.3,1195.0L3224.7,1198.5M3322.8,1198.9L3331.6,1202.6M3375.6,1200.4L3385.7,1204.2M3429.4,1202.0L3443.7,1206.8M3543.5,1206.3L3557.7,1210.3M3604.6,1209.0L3620.4,1213.1M3663.3,1210.7L3680.6,1215.0M3789.1,1215.4L3809.8,1219.9M3857.2,1218.4L3879.9,1223.0M3921.5,1220.4L3946.0,1225.1M2456.3,1173.6L3441.7,1202.8M2085.2,1166.0L2354.1,1174.2M3594.7,1211.9L4078.2,1226.6M1958.0,1163.8L2158.6,1170.0M3932.7,1224.7L4358.0,1237.8M1859.2,1162.5L2026.6,1167.7M4201.6,1235.6L4604.5,1248.2M1678.8,1160.3L1811.6,1164.6M4733.1,1258.1L5139.1,1271.1M1596.4,1159.5L1713.7,1163.3M5025.1,1270.7L5386.7,1282.4M1526.2,1158.9L1641.0,1162.7M5266.9,1282.0L5704.1,1296.3M1398.0,1158.3L1486.1,1161.3M5873.5,1309.6L6288.6,1323.6M1339.7,1158.2L1426.3,1161.2M6147.9,1323.0L6598.0,1338.4M1281.4,1158.1L1355.8,1160.6M6508.1,1339.8L6939.8,1354.8M1165.2,1157.8L1237.2,1160.4M7223.1,1374.6L7743.6,1393.3M1117.2,1158.0L1188.4,1160.6M7566.4,1392.3L8134.3,1413.0M1059.2,1157.9L1129.2,1160.5M8031.2,1415.0L8664.4,1438.4M962.5,1158.3L1021.0,1160.6M9051.9,1466.1L9724.1,1491.6M913.9,1158.6L971.7,1160.8M9610.5,1494.7L10363.9,1523.8M865.1,1158.8L922.2,1161.1M10246.9,1527.3L11098.8,1560.7M776.1,1159.7L832.0,1161.9M11657.2,1601.3L12754.1,1645.8M726.7,1159.9L781.8,1162.2M12629.3,1651.3L13911.9,1704.2M686.0,1160.5L731.4,1162.4M13786.5,1710.7L15037.3,1763.2M594.6,1161.4L639.1,1163.3M16256.5,1842.8L18389.5,1935.6M552.8,1162.0L596.9,1163.9M18279.2,1947.4L18338.5,1950.0M510.6,1162.6L554.3,1164.6M416.5,1163.5L467.8,1165.9M381.5,1164.6L424.0,1166.6M337.6,1165.2L379.6,1167.3M248.6,1166.6L289.7,1168.6M203.4,1167.2L244.1,1169.3M165.7,1168.3L198.0,1170.0M72.9,1169.7L112.3,1171.9M33.5,1170.9L72.6,1173.1M-14.2,1171.6L24.4,1173.9M-96.2,1174.0L-66.0,1175.8M-145.7,1174.7L-108.3,1177.1M-188.3,1176.0L-158.8,1177.9M-275.9,1178.5L-247.0,1180.4M-327.8,1179.3L-292.2,1181.8M-373.4,1180.6L-338.2,1183.1M-460.2,1183.8L-439.7,1185.4M-501.6,1185.7L-488.1,1186.8M-544.1,1187.7L-537.4,1188.2" stroke="#939393" stroke-opacity="0.333" stroke-width="0.75" fill="none" clip-path="url(#fl)"/>
<path d="M-195.9,1173.1L-343.1,1180.0M-13004.7,1772.3L-16803.8,1950.0M-122.6,1171.6L-235.3,1177.0M-15671.4,1908.9L-16537.8,1950.0M32.2,1168.1L-72.1,1173.2M100.7,1166.7L12.9,1171.1M167.9,1165.4L83.1,1169.6M287.3,1163.3L207.4,1167.4M351.0,1162.0L273.9,1166.1M403.1,1161.3L328.0,1165.3M505.7,1159.9L444.9,1163.2M556.2,1159.2L496.9,1162.5M606.1,1158.5L548.4,1161.8M695.5,1157.7L640.4,1160.9M735.4,1157.6L690.6,1160.2M783.7,1156.9L731.2,1160.1M870.8,1156.1L820.8,1159.2M910.0,1155.9L861.0,1159.1M949.1,1155.8L909.2,1158.4M1026.9,1155.5L988.7,1158.1M1065.7,1155.4L1028.3,1158.0M1104.4,1155.2L1067.9,1157.8M1174.6,1155.5L1139.5,1158.0M1213.2,1155.3L1178.9,1157.9M1251.7,1155.2L1218.2,1157.7M1322.1,1155.4L1289.9,1158.0M1354.3,1155.8L1329.1,1157.8M1392.7,1155.6L1361.9,1158.2M1463.6,1155.8L1434.2,1158.4M1496.3,1156.2L1467.5,1158.8M1529.1,1156.6L1506.7,1158.7M1600.7,1156.8L1573.9,1159.4M1634.0,1157.2L1607.8,1159.8M1667.5,1157.5L1641.9,1160.2M1735.1,1158.3L1715.7,1160.5M1769.2,1158.7L1750.3,1160.8M1803.4,1159.1L1785.0,1161.2M1872.5,1159.8L1850.8,1162.6M1907.4,1160.2L1886.3,1163.0M1938.4,1161.2L1922.0,1163.4M2009.4,1162.0L1994.1,1164.2M2045.2,1162.4L2026.7,1165.2M2077.7,1163.3L2063.4,1165.7M2150.6,1164.2L2134.2,1167.1M2184.4,1165.2L2171.7,1167.5M2221.5,1165.6L2209.5,1168.0M2293.8,1167.0L2283.0,1169.5M2329.3,1168.1L2319.0,1170.6M2367.7,1168.5L2358.0,1171.0M2441.0,1170.7L2432.5,1173.2M2480.4,1171.1L2472.6,1173.7M2518.3,1172.2L2511.1,1174.8M2595.8,1174.5L2590.0,1177.2M2636.8,1174.9L2631.6,1177.7M2676.9,1176.1L2672.5,1178.9M2759.1,1178.5L2756.1,1181.3M2801.1,1179.7L2799.0,1182.6M2843.9,1180.9L2842.5,1183.9M2931.4,1183.5L2931.8,1186.5M2976.3,1184.8L2977.5,1187.9M3021.9,1186.1L3024.0,1189.2M3115.4,1188.8L3119.5,1192.0M3163.4,1190.2L3168.5,1193.5M3212.2,1191.6L3218.3,1195.0M3314.3,1195.3L3322.8,1198.9M3366.0,1196.8L3375.6,1200.4M3418.6,1198.4L3429.4,1202.0M3530.0,1202.4L3543.5,1206.3M3589.5,1205.0L3604.6,1209.0M3646.7,1206.7L3663.3,1210.7M3769.3,1211.2L3789.1,1215.4M3830.3,1213.0L3857.2,1218.4M3898.1,1215.9L3921.5,1220.4M2604.4,1174.4L3242.7,1192.8M2315.0,1167.7L3658.3,1207.0M2142.3,1164.3L2456.3,1173.6M3441.7,1202.8L3965.0,1218.4M1905.3,1160.5L2085.2,1166.0M4078.2,1226.6L4486.5,1239.0M1809.4,1159.3L1958.0,1163.8M4358.0,1237.8L4740.9,1249.6M1715.2,1158.0L1859.2,1162.5M4604.5,1248.2L4985.1,1260.0M1564.9,1156.7L1678.8,1160.3M5139.1,1271.1L5549.8,1284.3M1496.3,1156.2L1596.4,1159.5M5386.7,1282.4L5831.3,1296.9M1438.8,1156.1L1526.2,1158.9M5704.1,1296.3L6090.8,1309.1M1313.8,1155.5L1398.0,1158.3M6288.6,1323.6L6746.9,1339.1M1256.7,1155.3L1339.7,1158.2M6598.0,1338.4L7097.3,1355.6M1199.8,1155.2L1281.4,1158.1M6939.8,1354.8L7486.6,1373.8M1095.9,1155.3L1165.2,1157.8M7743.6,1393.3L8322.9,1414.0M1048.7,1155.5L1117.2,1158.0M8134.3,1413.0L8769.9,1436.1M1001.3,1155.8L1059.2,1157.9M8664.4,1438.4L9270.8,1460.8M906.0,1156.2L962.5,1158.3M9724.1,1491.6L10479.2,1520.4M858.1,1156.4L913.9,1158.6M10363.9,1523.8L11217.1,1556.8M810.0,1156.6L865.1,1158.8M11098.8,1560.7L12072.6,1599.0M722.1,1157.5L776.1,1159.7M12754.1,1645.8L14034.9,1697.8M682.1,1158.0L726.7,1159.9M13911.9,1704.2L15159.3,1755.7M633.1,1158.3L686.0,1160.5M15037.3,1763.2L16817.3,1838.0M551.3,1159.5L594.6,1161.4M18389.5,1935.6L18720.5,1950.0M501.5,1159.7L552.8,1162.0M459.8,1160.3L510.6,1162.6M375.1,1161.6L416.5,1163.5M332.1,1162.2L381.5,1164.6M296.8,1163.2L337.6,1165.2M208.7,1164.5L248.6,1166.6M164.0,1165.2L203.4,1167.2M126.5,1166.3L165.7,1168.3M42.2,1168.0L72.9,1169.7M-4.5,1168.7L33.5,1170.9M-44.3,1169.9L-14.2,1171.6M-133.0,1171.7L-96.2,1174.0M-174.7,1172.9L-145.7,1174.7M-217.1,1174.1L-188.3,1176.0M-304.0,1176.6L-275.9,1178.5M-341.7,1178.3L-327.8,1179.3M-380.3,1180.1L-373.4,1180.6" stroke="#939393" stroke-opacity="0.316" stroke-width="0.75" fill="none" clip-path="url(#fl)"/>
<path d="M-87.3,1168.0L-195.9,1173.1M-5.0,1166.1L-122.6,1171.6M129.4,1163.4L32.2,1168.1M194.7,1162.1L100.7,1166.7M247.7,1161.4L167.9,1165.4M362.5,1159.4L287.3,1163.3M413.6,1158.7L351.0,1162.0M464.1,1158.1L403.1,1161.3M563.6,1156.7L505.7,1159.9M612.6,1156.1L556.2,1159.2M661.0,1155.4L606.1,1158.5M748.0,1154.6L695.5,1157.7M786.8,1154.5L735.4,1157.6M825.6,1154.3L783.7,1156.9M910.8,1153.6L870.8,1156.1M949.1,1153.4L910.0,1155.9M987.4,1153.3L949.1,1155.8M1063.6,1153.0L1026.9,1155.5M1101.6,1152.9L1065.7,1155.4M1139.5,1152.8L1104.4,1155.2M1208.4,1153.0L1174.6,1155.5M1246.2,1152.8L1213.2,1155.3M1277.6,1153.2L1251.7,1155.2M1346.9,1153.4L1322.1,1155.4M1384.7,1153.3L1354.3,1155.8M1416.5,1153.6L1392.7,1155.6M1486.3,1153.8L1463.6,1155.8M1518.5,1154.2L1496.3,1156.2M1556.3,1154.0L1529.1,1156.6M1621.4,1154.8L1600.7,1156.8M1654.2,1155.1L1634.0,1157.2M1687.3,1155.5L1667.5,1157.5M1753.9,1156.2L1735.1,1158.3M1787.4,1156.6L1769.2,1158.7M1821.2,1157.0L1803.4,1159.1M1889.3,1157.7L1872.5,1159.8M1923.6,1158.1L1907.4,1160.2M1958.2,1158.5L1938.4,1161.2M2024.2,1159.8L2009.4,1162.0M2059.4,1160.2L2045.2,1162.4M2091.5,1161.1L2077.7,1163.3M2163.3,1161.9L2150.6,1164.2M2196.6,1162.9L2184.4,1165.2M2233.1,1163.3L2221.5,1165.6M2304.3,1164.7L2293.8,1167.0M2339.3,1165.7L2329.3,1168.1M2377.0,1166.1L2367.7,1168.5M2449.2,1168.2L2441.0,1170.7M2488.0,1168.6L2480.4,1171.1M2525.2,1169.7L2518.3,1172.2M2601.5,1171.8L2595.8,1174.5M2641.7,1172.3L2636.8,1174.9M2681.2,1173.4L2676.9,1176.1M2761.9,1175.7L2759.1,1178.5M2803.2,1176.9L2801.1,1179.7M2845.2,1178.1L2843.9,1180.9M2931.1,1180.5L2931.4,1183.5M2975.1,1181.8L2976.3,1184.8M3019.8,1183.0L3021.9,1186.1M3111.5,1185.6L3115.4,1188.8M3158.5,1187.0L3163.4,1190.2M3206.2,1188.3L3212.2,1191.6M3306.2,1191.9L3314.3,1195.3M3356.8,1193.4L3366.0,1196.8M3408.2,1194.8L3418.6,1198.4M3517.0,1198.7L3530.0,1202.4M3571.5,1200.3L3589.5,1205.0M3630.9,1202.8L3646.7,1206.7M3750.4,1207.1L3769.3,1211.2M3809.8,1208.8L3830.3,1213.0M3875.8,1211.6L3898.1,1215.9M2211.5,1163.0L2604.4,1174.4M3242.7,1192.8L3836.5,1210.1M2072.2,1160.5L2315.0,1167.7M3658.3,1207.0L4106.1,1220.2M1950.1,1158.6L2142.3,1164.3M3965.0,1218.4L4377.9,1230.6M1761.9,1156.1L1905.3,1160.5M4486.5,1239.0L4878.9,1251.0M1681.6,1155.3L1809.4,1159.3M4740.9,1249.6L5131.3,1261.6M1613.3,1154.8L1715.2,1158.0M4985.1,1260.0L5368.3,1272.0M1467.6,1153.6L1564.9,1156.7M5549.8,1284.3L5911.5,1295.9M1411.3,1153.4L1496.3,1156.2M5831.3,1296.9L6224.7,1309.6M1355.1,1153.3L1438.8,1156.1M6090.8,1309.1L6515.7,1323.0M1243.0,1153.1L1313.8,1155.5M6746.9,1339.1L7189.0,1354.1M1187.0,1153.0L1256.7,1155.3M7097.3,1355.6L7581.4,1372.1M1131.2,1152.8L1199.8,1155.2M7486.6,1373.8L8019.7,1392.3M1038.6,1153.3L1095.9,1155.3M8322.9,1414.0L8874.2,1433.7M982.7,1153.1L1048.7,1155.5M8769.9,1436.1L9378.3,1458.2M936.1,1153.3L1001.3,1155.8M9270.8,1460.8L9946.9,1485.7M851.3,1154.1L906.0,1156.2M10479.2,1520.4L11333.7,1552.9M804.0,1154.3L858.1,1156.4M11217.1,1556.8L12191.4,1594.4M756.6,1154.5L810.0,1156.6M12072.6,1599.0L12997.2,1635.3M669.8,1155.3L722.1,1157.5M14034.9,1697.8L15278.8,1748.3M630.2,1155.9L682.1,1158.0M15159.3,1755.7L16931.2,1828.9M590.3,1156.5L633.1,1158.3M16817.3,1838.0L18601.8,1912.9M501.0,1157.3L551.3,1159.5M460.0,1157.9L501.5,1159.7M418.7,1158.5L459.8,1160.3M334.8,1159.7L375.1,1161.6M300.2,1160.7L332.1,1162.2M257.2,1161.3L296.8,1163.2M169.9,1162.6L208.7,1164.5M133.2,1163.6L164.0,1165.2M88.4,1164.2L126.5,1166.3M4.9,1166.0L42.2,1168.0M-34.0,1167.0L-4.5,1168.7M-80.8,1167.7L-44.3,1169.9M-161.7,1170.0L-133.0,1171.7M-196.1,1171.6L-174.7,1172.9M-231.2,1173.2L-217.1,1174.1" stroke="#939393" stroke-opacity="0.300" stroke-width="0.75" fill="none" clip-path="url(#fl)"/>
<path d="M13.9,1163.3L-87.3,1168.0M80.3,1162.0L-5.0,1166.1M209.3,1159.5L129.4,1163.4M272.0,1158.3L194.7,1162.1M323.1,1157.6L247.7,1161.4M423.7,1156.3L362.5,1159.4M482.9,1155.1L413.6,1158.7M522.3,1155.0L464.1,1158.1M618.8,1153.7L563.6,1156.7M666.3,1153.1L612.6,1156.1M704.8,1152.9L661.0,1155.4M789.8,1152.2L748.0,1154.6M835.9,1151.6L786.8,1154.5M873.8,1151.4L825.6,1154.3M949.1,1151.2L910.8,1153.6M986.7,1151.0L949.1,1153.4M1024.2,1150.9L987.4,1153.3M1098.9,1150.6L1063.6,1153.0M1136.1,1150.5L1101.6,1152.9M1173.3,1150.4L1139.5,1152.8M1240.9,1150.6L1208.4,1153.0M1278.0,1150.4L1246.2,1152.8M1308.8,1150.8L1277.6,1153.2M1376.9,1151.0L1346.9,1153.4M1413.9,1150.9L1384.7,1153.3M1445.2,1151.2L1416.5,1153.6M1513.6,1151.4L1486.3,1153.8M1545.3,1151.8L1518.5,1154.2M1577.2,1152.1L1556.3,1154.0M1641.4,1152.8L1621.4,1154.8M1673.8,1153.1L1654.2,1155.1M1711.1,1153.0L1687.3,1155.5M1776.5,1153.7L1753.9,1156.2M1805.2,1154.6L1787.4,1156.6M1838.4,1154.9L1821.2,1157.0M1905.5,1155.6L1889.3,1157.7M1939.4,1156.0L1923.6,1158.1M1973.4,1156.4L1958.2,1158.5M2038.5,1157.6L2024.2,1159.8M2073.2,1158.0L2059.4,1160.2M2108.2,1158.4L2091.5,1161.1M2175.6,1159.7L2163.3,1161.9M2208.4,1160.6L2196.6,1162.9M2244.4,1161.0L2233.1,1163.3M2314.5,1162.4L2304.3,1164.7M2348.9,1163.4L2339.3,1165.7M2386.1,1163.8L2377.0,1166.1M2457.1,1165.8L2449.2,1168.2M2495.3,1166.2L2488.0,1168.6M2532.0,1167.2L2525.2,1169.7M2607.0,1169.3L2601.5,1171.8M2646.5,1169.8L2641.7,1172.3M2685.3,1170.8L2681.2,1173.4M2764.6,1173.1L2761.9,1175.7M2805.2,1174.2L2803.2,1176.9M2846.4,1175.3L2845.2,1178.1M2930.8,1177.7L2931.1,1180.5M2974.0,1178.9L2975.1,1181.8M3017.8,1180.1L3019.8,1183.0M3107.7,1182.6L3111.5,1185.6M3153.8,1183.9L3158.5,1187.0M3200.6,1185.2L3206.2,1188.3M3298.4,1188.7L3306.2,1191.9M3347.9,1190.0L3356.8,1193.4M3398.2,1191.5L3408.2,1194.8M3504.5,1195.2L3517.0,1198.7M3557.8,1196.7L3571.5,1200.3M3615.7,1199.1L3630.9,1202.8M3732.3,1203.2L3750.4,1207.1M3790.2,1204.9L3809.8,1208.8M3854.5,1207.5L3875.8,1211.6M2539.4,1167.4L3328.0,1189.5M2292.8,1162.1L3695.9,1201.8M2005.8,1157.0L2211.5,1163.0M3836.5,1210.1L4249.9,1222.0M1899.6,1155.5L2072.2,1160.5M4106.1,1220.2L4502.1,1231.8M1807.3,1154.3L1950.1,1158.6M4377.9,1230.6L4748.0,1241.6M1649.4,1152.7L1761.9,1156.1M4878.9,1251.0L5241.2,1262.0M1571.8,1151.9L1681.6,1155.3M5131.3,1261.6L5483.4,1272.4M1505.7,1151.5L1613.3,1154.8M5368.3,1272.0L5748.2,1283.8M1384.9,1150.9L1467.6,1153.6M5911.5,1295.9L6359.2,1310.2M1329.8,1150.8L1411.3,1153.4M6224.7,1309.6L6657.1,1323.7M1274.8,1150.7L1355.1,1153.3M6515.7,1323.0L6984.7,1338.5M1165.2,1150.4L1243.0,1153.1M7189.0,1354.1L7675.3,1370.5M1119.9,1150.6L1187.0,1153.0M7581.4,1372.1L8116.8,1390.5M1074.4,1150.9L1131.2,1152.8M8019.7,1392.3L8524.1,1409.9M973.9,1150.9L1038.6,1153.3M8874.2,1433.7L9592.6,1459.5M928.1,1151.1L982.7,1153.1M9378.3,1458.2L10176.7,1487.2M882.1,1151.4L936.1,1153.3M9946.9,1485.7L10840.6,1518.7M798.3,1152.1L851.3,1154.1M11333.7,1552.9L12308.4,1590.0M751.7,1152.3L804.0,1154.3M12191.4,1594.4L13314.5,1637.8M713.4,1152.9L756.6,1154.5M12997.2,1635.3L14274.1,1685.4M627.5,1153.6L669.8,1155.3M15278.8,1748.3L17042.7,1819.9M588.2,1154.2L630.2,1155.9M16931.2,1828.9L18704.0,1902.0M540.4,1154.4L590.3,1156.5M18601.8,1912.9L19484.2,1950.0M460.3,1155.5L501.0,1157.3M419.7,1156.1L460.0,1157.9M378.7,1156.7L418.7,1158.5M295.6,1157.8L334.8,1159.7M261.2,1158.8L300.2,1160.7M218.6,1159.4L257.2,1161.3M139.6,1161.0L169.9,1162.6M95.7,1161.6L133.2,1163.6M51.4,1162.3L88.4,1164.2M-31.4,1163.9L4.9,1166.0M-62.9,1165.4L-34.0,1167.0M-95.1,1166.9L-80.8,1167.7" stroke="#939393" stroke-opacity="0.284" stroke-width="0.75" fill="none" clip-path="url(#fl)"/>
<path d="M108.5,1158.9L13.9,1163.3M171.9,1157.7L80.3,1162.0M284.7,1155.8L209.3,1159.5M334.8,1155.2L272.0,1158.3M394.3,1154.0L323.1,1157.6M491.4,1152.8L423.7,1156.3M539.3,1152.2L482.9,1155.1M586.7,1151.5L522.3,1155.0M671.5,1150.8L618.8,1153.7M709.3,1150.7L666.3,1153.1M755.2,1150.1L704.8,1152.9M838.0,1149.4L789.8,1152.2M875.1,1149.2L835.9,1151.6M912.2,1149.1L873.8,1151.4M986.1,1148.8L949.1,1151.2M1022.9,1148.7L986.7,1151.0M1059.7,1148.6L1024.2,1150.9M1132.9,1148.3L1098.9,1150.6M1169.4,1148.2L1136.1,1150.5M1199.4,1148.5L1173.3,1150.4M1272.2,1148.3L1240.9,1150.6M1302.5,1148.6L1278.0,1150.4M1338.9,1148.5L1308.8,1150.8M1405.7,1148.7L1376.9,1151.0M1436.4,1149.0L1413.9,1150.9M1467.3,1149.3L1445.2,1151.2M1534.8,1149.5L1513.6,1151.4M1566.1,1149.9L1545.3,1151.8M1597.5,1150.2L1577.2,1152.1M1665.6,1150.4L1641.4,1152.8M1697.5,1150.8L1673.8,1153.1M1729.5,1151.1L1711.1,1153.0M1794.0,1151.8L1776.5,1153.7M1826.5,1152.1L1805.2,1154.6M1859.2,1152.5L1838.4,1154.9M1921.3,1153.7L1905.5,1155.6M1954.6,1154.0L1939.4,1156.0M1988.2,1154.4L1973.4,1156.4M2052.4,1155.6L2038.5,1157.6M2086.6,1156.0L2073.2,1158.0M2121.0,1156.3L2108.2,1158.4M2187.5,1157.6L2175.6,1159.7M2219.8,1158.5L2208.4,1160.6M2255.2,1158.9L2244.4,1161.0M2321.9,1160.7L2314.5,1162.4M2356.0,1161.7L2348.9,1163.4M2390.5,1162.6L2386.1,1163.8M2461.0,1164.6L2457.1,1165.8M2497.0,1165.6L2495.3,1166.2M2533.6,1166.6L2532.0,1167.2M2608.3,1168.7L2607.0,1169.3M3296.5,1187.9L3298.4,1188.7M3345.7,1189.2L3347.9,1190.0M3395.8,1190.6L3398.2,1191.5M3498.5,1193.5L3504.5,1195.2M3551.2,1195.0L3557.8,1196.7M3604.8,1196.4L3615.7,1199.1M3714.9,1199.5L3732.3,1203.2M3771.5,1201.1L3790.2,1204.9M3834.1,1203.6L3854.5,1207.5M2193.9,1157.8L2539.4,1167.4M3328.0,1189.5L3869.4,1204.6M2060.2,1155.5L2292.8,1162.1M3695.9,1201.8L4132.3,1214.1M1851.4,1152.5L2005.8,1157.0M4249.9,1222.0L4627.7,1233.0M1761.7,1151.4L1899.6,1155.5M4502.1,1231.8L4848.0,1241.9M1684.3,1150.7L1807.3,1154.3M4748.0,1241.6L5124.1,1252.7M1542.6,1149.5L1649.4,1152.7M5241.2,1262.0L5599.0,1272.9M1488.1,1149.4L1571.8,1151.9M5483.4,1272.4L5869.6,1284.3M1423.6,1148.9L1505.7,1151.5M5748.2,1283.8L6166.6,1296.9M1305.5,1148.4L1384.9,1150.9M6359.2,1310.2L6741.7,1322.5M1251.6,1148.3L1329.8,1150.8M6657.1,1323.7L7072.1,1337.1M1207.3,1148.5L1274.8,1150.7M6984.7,1338.5L7436.9,1353.3M1108.9,1148.5L1165.2,1150.4M7675.3,1370.5L8212.9,1388.7M1055.1,1148.4L1119.9,1150.6M8116.8,1390.5L8712.2,1410.9M1010.3,1148.6L1074.4,1150.9M8524.1,1409.9L9177.2,1432.6M920.4,1149.0L973.9,1150.9M9592.6,1459.5L10284.7,1484.2M875.1,1149.2L928.1,1151.1M10176.7,1487.2L10951.4,1515.3M829.7,1149.4L882.1,1151.4M10840.6,1518.7L11715.3,1550.9M746.9,1150.1L798.3,1152.1M12308.4,1590.0L13430.7,1632.7M709.3,1150.7L751.7,1152.3M13314.5,1637.8L14390.4,1679.4M663.0,1150.9L713.4,1152.9M14274.1,1685.4L15780.1,1744.6M578.1,1151.6L627.5,1153.6M17042.7,1819.9L18803.7,1891.4M539.3,1152.2L588.2,1154.2M18704.0,1902.0L19865.9,1950.0M500.1,1152.7L540.4,1154.4M420.7,1153.8L460.3,1155.5M380.5,1154.4L419.7,1156.1M339.9,1154.9L378.7,1156.7M257.5,1156.1L295.6,1157.8M223.3,1157.0L261.2,1158.8M181.1,1157.6L218.6,1159.4M102.8,1159.1L139.6,1161.0M59.3,1159.8L95.7,1161.6M29.7,1161.1L51.4,1162.3" stroke="#939393" stroke-opacity="0.267" stroke-width="0.75" fill="none" clip-path="url(#fl)"/>
<path d="M186.4,1155.2L108.5,1158.9M247.3,1154.1L171.9,1157.7M356.0,1152.3L284.7,1155.8M404.4,1151.7L334.8,1155.2M452.3,1151.1L394.3,1154.0M546.7,1149.9L491.4,1152.8M593.1,1149.3L539.3,1152.2M630.6,1149.2L586.7,1151.5M721.8,1148.0L671.5,1150.8M758.7,1147.9L709.3,1150.7M795.5,1147.8L755.2,1150.1M876.5,1147.1L838.0,1149.4M912.9,1147.0L875.1,1149.2M949.2,1146.8L912.2,1149.1M1021.7,1146.6L986.1,1148.8M1057.8,1146.5L1022.9,1148.7M1093.8,1146.4L1059.7,1148.6M1165.6,1146.1L1132.9,1148.3M1201.4,1146.0L1169.4,1148.2M1230.9,1146.3L1199.4,1148.5M1296.4,1146.5L1272.2,1148.3M1332.2,1146.4L1302.5,1148.6M1362.1,1146.7L1338.9,1148.5M1428.0,1146.9L1405.7,1148.7M1463.7,1146.8L1436.4,1149.0M1494.1,1147.1L1467.3,1149.3M1555.3,1147.7L1534.8,1149.5M1591.1,1147.6L1566.1,1149.9M1622.0,1147.9L1597.5,1150.2M1684.4,1148.6L1665.6,1150.4M1715.8,1148.9L1697.5,1150.8M1747.3,1149.2L1729.5,1151.1M1811.0,1149.9L1794.0,1151.8M1843.0,1150.2L1826.5,1152.1M1875.3,1150.6L1859.2,1152.5M1940.3,1151.2L1921.3,1153.7M1969.4,1152.1L1954.6,1154.0M2002.5,1152.4L1988.2,1154.4M2065.8,1153.6L2052.4,1155.6M2096.3,1154.4L2086.6,1156.0M2127.3,1155.3L2121.0,1156.3M2190.4,1157.1L2187.5,1157.6M2222.6,1158.0L2219.8,1158.5M3829.1,1202.7L3834.1,1203.6M1996.5,1152.2L2193.9,1157.8M3869.4,1204.6L4271.8,1215.9M1894.3,1150.8L2060.2,1155.5M4132.3,1214.1L4516.6,1225.0M1728.8,1149.0L1851.4,1152.5M4627.7,1233.0L4981.9,1243.2M1653.1,1148.2L1761.7,1151.4M4848.0,1241.9L5229.8,1253.1M1588.7,1147.8L1684.3,1150.7M5124.1,1252.7L5462.0,1262.8M1461.0,1147.0L1542.6,1149.5M5599.0,1272.9L5991.3,1284.8M1397.8,1146.6L1488.1,1149.4M5869.6,1284.3L6294.9,1297.4M1344.7,1146.5L1423.6,1148.9M6166.6,1296.9L6575.7,1309.7M1238.7,1146.2L1305.5,1148.4M6741.7,1322.5L7221.3,1337.8M1185.8,1146.1L1251.6,1148.3M7072.1,1337.1L7594.8,1354.1M1142.1,1146.3L1207.3,1148.5M7436.9,1353.3L7934.4,1369.7M1045.4,1146.4L1108.9,1148.5M8212.9,1388.7L8810.4,1408.9M1001.4,1146.6L1055.1,1148.4M8712.2,1410.9L9278.2,1430.3M957.2,1146.8L1010.3,1148.6M9177.2,1432.6L9801.7,1454.3M868.4,1147.2L920.4,1149.0M10284.7,1484.2L11060.7,1512.0M823.8,1147.4L875.1,1149.2M10951.4,1515.3L11826.9,1547.1M779.0,1147.5L829.7,1149.4M11715.3,1550.9L12536.9,1581.2M697.1,1148.2L746.9,1150.1M13430.7,1632.7L14504.5,1673.5M659.8,1148.8L709.3,1150.7M14390.4,1679.4L15891.5,1737.4M622.3,1149.3L663.0,1150.9M15780.1,1744.6L17258.1,1802.6M538.2,1150.0L578.1,1151.6M18803.7,1891.4L20247.5,1950.0M499.7,1150.5L539.3,1152.2M460.9,1151.0L500.1,1152.7M382.1,1152.1L420.7,1153.8M342.3,1152.7L380.5,1154.4M302.0,1153.2L339.9,1154.9M227.8,1154.7L257.5,1156.1M186.4,1155.2L223.3,1157.0M144.6,1155.8L181.1,1157.6M88.3,1158.4L102.8,1159.1" stroke="#939393" stroke-opacity="0.251" stroke-width="0.75" fill="none" clip-path="url(#fl)"/>
<path d="M260.1,1151.8L186.4,1155.2M318.7,1150.7L247.3,1154.1M414.1,1149.5L356.0,1152.3M461.1,1148.9L404.4,1151.7M507.7,1148.3L452.3,1151.1M599.4,1147.2L546.7,1149.9M644.6,1146.6L593.1,1149.3M681.2,1146.5L630.6,1149.2M762.0,1145.8L721.8,1148.0M805.9,1145.3L758.7,1147.9M841.9,1145.2L795.5,1147.8M913.5,1144.9L876.5,1147.1M949.3,1144.8L912.9,1147.0M984.9,1144.7L949.2,1146.8M1056.0,1144.4L1021.7,1146.6M1091.4,1144.3L1057.8,1146.5M1126.7,1144.2L1093.8,1146.4M1197.1,1144.0L1165.6,1146.1M1226.2,1144.3L1201.4,1146.0M1261.3,1144.2L1230.9,1146.3M1325.7,1144.4L1296.4,1146.5M1360.8,1144.2L1332.2,1146.4M1390.2,1144.5L1362.1,1146.7M1455.0,1144.7L1428.0,1146.9M1484.8,1145.0L1463.7,1146.8M1514.8,1145.3L1494.1,1147.1M1580.1,1145.5L1555.3,1147.7M1610.5,1145.8L1591.1,1147.6M1641.0,1146.2L1622.0,1147.9M1702.5,1146.8L1684.4,1148.6M1733.5,1147.1L1715.8,1148.9M1764.6,1147.4L1747.3,1149.2M1827.4,1148.1L1811.0,1149.9M1859.1,1148.4L1843.0,1150.2M1890.9,1148.7L1875.3,1150.6M1947.7,1150.3L1940.3,1151.2M1976.6,1151.1L1969.4,1152.1M2006.0,1151.9L2002.5,1152.4M1848.0,1148.1L1996.5,1152.2M4271.8,1215.9L4638.1,1226.1M1772.2,1147.4L1894.3,1150.8M4516.6,1225.0L4851.2,1234.5M1623.2,1145.9L1728.8,1149.0M4981.9,1243.2L5335.8,1253.5M1560.0,1145.5L1653.1,1148.2M5229.8,1253.1L5572.9,1263.2M1497.3,1145.1L1588.7,1147.8M5462.0,1262.8L5831.1,1273.7M1382.7,1144.6L1461.0,1147.0M5991.3,1284.8L6373.4,1296.4M1321.0,1144.2L1397.8,1146.6M6294.9,1297.4L6710.8,1310.2M1268.9,1144.1L1344.7,1146.5M6575.7,1309.7L7025.3,1323.7M1174.2,1144.2L1238.7,1146.2M7221.3,1337.8L7683.7,1352.6M1122.2,1144.1L1185.8,1146.1M7594.8,1354.1L8101.3,1370.5M1079.2,1144.2L1142.1,1146.3M7934.4,1369.7L8484.2,1387.8M992.7,1144.6L1045.4,1146.4M8810.4,1408.9L9378.1,1428.1M940.7,1144.5L1001.4,1146.6M9278.2,1430.3L9904.4,1451.8M905.7,1145.0L957.2,1146.8M9801.7,1454.3L10496.7,1478.5M818.0,1145.4L868.4,1147.2M11060.7,1512.0L11936.8,1543.4M773.9,1145.5L823.8,1147.4M11826.9,1547.1L12824.1,1583.3M737.8,1146.0L779.0,1147.5M12536.9,1581.2L13657.2,1622.5M656.7,1146.7L697.1,1148.2M14504.5,1673.5L16000.7,1730.4M611.9,1146.9L659.8,1148.8M15891.5,1737.4L17362.3,1794.3M574.7,1147.4L622.3,1149.3M17258.1,1802.6L19380.8,1886.0M499.3,1148.4L538.2,1150.0M461.1,1148.9L499.7,1150.5M422.6,1149.4L460.9,1151.0M344.6,1150.5L382.1,1152.1M305.0,1151.0L342.3,1152.7M265.2,1151.5L302.0,1153.2M198.7,1153.3L227.8,1154.7M171.9,1154.5L186.4,1155.2" stroke="#939393" stroke-opacity="0.234" stroke-width="0.75" fill="none" clip-path="url(#fl)"/>
<path d="M329.8,1148.5L260.1,1151.8M376.9,1147.9L318.7,1150.7M478.6,1146.4L414.1,1149.5M515.3,1146.2L461.1,1148.9M560.6,1145.7L507.7,1148.3M649.8,1144.6L599.4,1147.2M685.8,1144.5L644.6,1146.6M729.6,1143.9L681.2,1146.5M808.4,1143.3L762.0,1145.8M843.7,1143.2L805.9,1145.3M879.0,1143.1L841.9,1145.2M956.3,1142.4L913.5,1144.9M991.2,1142.3L949.3,1144.8M1026.1,1142.2L984.9,1144.7M1089.0,1142.4L1056.0,1144.4M1123.8,1142.3L1091.4,1144.3M1158.5,1142.1L1126.7,1144.2M1221.6,1142.3L1197.1,1144.0M1256.2,1142.2L1226.2,1144.3M1290.7,1142.1L1261.3,1144.2M1353.9,1142.3L1325.7,1144.4M1382.9,1142.6L1360.8,1144.2M1417.4,1142.5L1390.2,1144.5M1475.9,1143.1L1455.0,1144.7M1510.4,1142.9L1484.8,1145.0M1539.9,1143.2L1514.8,1145.3M1599.4,1143.8L1580.1,1145.5M1633.9,1143.7L1610.5,1145.8M1664.0,1144.0L1641.0,1146.2M1724.5,1144.6L1702.5,1146.8M1754.9,1144.9L1733.5,1147.1M1781.4,1145.7L1764.6,1147.4M1835.5,1147.2L1827.4,1148.1M1863.0,1147.9L1859.1,1148.4M1729.7,1144.8L1848.0,1148.1M4638.1,1226.1L4980.4,1235.7M1656.6,1144.1L1772.2,1147.4M4851.2,1234.5L5219.2,1244.9M1532.5,1143.3L1623.2,1145.9M5335.8,1253.5L5684.1,1263.6M1471.0,1142.9L1560.0,1145.5M5572.9,1263.2L5947.8,1274.2M1409.9,1142.5L1497.3,1145.1M5831.1,1273.7L6236.1,1285.8M1307.3,1142.3L1382.7,1144.6M6373.4,1296.4L6791.4,1309.1M1256.2,1142.2L1321.0,1144.2M6710.8,1310.2L7108.4,1322.5M1205.1,1142.1L1268.9,1144.1M7025.3,1323.7L7456.8,1337.2M1111.8,1142.2L1174.2,1144.2M7683.7,1352.6L8192.1,1368.9M1069.5,1142.4L1122.2,1144.1M8101.3,1370.5L8577.6,1386.0M1018.4,1142.2L1079.2,1144.2M8484.2,1387.8L9095.0,1407.9M933.2,1142.6L992.7,1144.6M9378.1,1428.1L10116.9,1453.0M890.4,1142.8L940.7,1144.5M9904.4,1451.8L10724.4,1479.9M855.6,1143.2L905.7,1145.0M10496.7,1478.5L11274.9,1505.5M769.1,1143.6L818.0,1145.4M11936.8,1543.4L12933.8,1579.1M733.5,1144.1L773.9,1145.5M12824.1,1583.3L13767.6,1617.6M689.8,1144.3L737.8,1146.0M13657.2,1622.5L14957.7,1670.5M609.6,1144.9L656.7,1146.7M16000.7,1730.4L17785.3,1798.3M573.0,1145.4L611.9,1146.9M17362.3,1794.3L19470.5,1875.8M536.1,1145.9L574.7,1147.4M19380.8,1886.0L21010.4,1950.0M461.3,1146.9L499.3,1148.4M423.5,1147.4L461.1,1148.9M385.3,1147.9L422.6,1149.4M307.9,1148.9L344.6,1150.5M275.9,1149.7L305.0,1151.0M250.7,1150.9L265.2,1151.5" stroke="#939393" stroke-opacity="0.218" stroke-width="0.75" fill="none" clip-path="url(#fl)"/>
<path d="M396.1,1145.4L329.8,1148.5M441.6,1144.9L376.9,1147.9M531.4,1143.8L478.6,1146.4M575.6,1143.3L515.3,1146.2M611.3,1143.1L560.6,1145.7M698.1,1142.1L649.8,1144.6M733.3,1142.0L685.8,1144.5M775.9,1141.5L729.6,1143.9M845.5,1141.2L808.4,1143.3M880.2,1141.1L843.7,1143.2M921.8,1140.6L879.0,1143.1M990.6,1140.4L956.3,1142.4M1024.8,1140.3L991.2,1142.3M1059.0,1140.2L1026.1,1142.2M1121.0,1140.4L1089.0,1142.4M1155.1,1140.3L1123.8,1142.3M1189.1,1140.1L1158.5,1142.1M1251.2,1140.3L1221.6,1142.3M1285.1,1140.2L1256.2,1142.2M1313.4,1140.5L1290.7,1142.1M1375.8,1140.7L1353.9,1142.3M1409.7,1140.6L1382.9,1142.6M1438.4,1140.8L1417.4,1142.5M1501.1,1141.0L1475.9,1143.1M1530.1,1141.3L1510.4,1142.9M1559.3,1141.6L1539.9,1143.2M1622.6,1141.8L1599.4,1143.8M1652.1,1142.1L1633.9,1143.7M1677.3,1142.8L1664.0,1144.0M1728.8,1144.2L1724.5,1144.6M1627.6,1141.9L1729.7,1144.8M4980.4,1235.7L5321.3,1245.2M1566.6,1141.5L1656.6,1144.1M5219.2,1244.9L5548.8,1254.2M1445.7,1140.8L1532.5,1143.3M5684.1,1263.6L6064.8,1274.6M1395.1,1140.7L1471.0,1142.9M5947.8,1274.2L6311.5,1284.8M1335.4,1140.3L1409.9,1142.5M6236.1,1285.8L6630.6,1297.5M1234.9,1140.1L1307.3,1142.3M6791.4,1309.1L7250.6,1323.1M1193.5,1140.3L1256.2,1142.2M7108.4,1322.5L7541.7,1335.8M1143.3,1140.2L1205.1,1142.1M7456.8,1337.2L7929.2,1351.9M1051.5,1140.2L1111.8,1142.2M8192.1,1368.9L8754.0,1386.9M1009.8,1140.4L1069.5,1142.4M8577.6,1386.0L9190.3,1405.9M967.9,1140.6L1018.4,1142.2M9095.0,1407.9L9675.2,1426.9M883.8,1140.9L933.2,1142.6M10116.9,1453.0L10827.3,1477.0M841.5,1141.1L890.4,1142.8M10724.4,1479.9L11518.7,1507.1M807.0,1141.6L855.6,1143.2M11274.9,1505.5L12151.9,1536.0M721.6,1141.9L769.1,1143.6M12933.8,1579.1L13876.1,1612.8M686.4,1142.4L733.5,1144.1M13767.6,1617.6L15065.1,1664.8M650.9,1142.8L689.8,1144.3M14957.7,1670.5L16212.6,1716.8M571.4,1143.5L609.6,1144.9M17785.3,1798.3L19558.1,1865.7M535.1,1143.9L573.0,1145.4M19470.5,1875.8L21391.7,1950.0M498.5,1144.4L536.1,1145.9M417.1,1145.1L461.3,1146.9M386.8,1145.9L423.5,1147.4M348.9,1146.3L385.3,1147.9M300.7,1148.6L307.9,1148.9" stroke="#939393" stroke-opacity="0.201" stroke-width="0.75" fill="none" clip-path="url(#fl)"/>
<path d="M450.2,1142.9L396.1,1145.4M494.5,1142.4L441.6,1144.9M581.9,1141.3L531.4,1143.8M625.0,1140.8L575.6,1143.3M659.8,1140.7L611.3,1143.1M736.8,1140.1L698.1,1142.1M778.8,1139.6L733.3,1142.0M813.0,1139.5L775.9,1141.5M888.4,1138.9L845.5,1141.2M922.3,1138.8L880.2,1141.1M956.1,1138.7L921.8,1140.6M1023.6,1138.5L990.6,1140.4M1057.3,1138.4L1024.8,1140.3M1090.9,1138.3L1059.0,1140.2M1151.8,1138.4L1121.0,1140.4M1185.3,1138.3L1155.1,1140.3M1218.7,1138.2L1189.1,1140.1M1279.7,1138.4L1251.2,1140.3M1313.0,1138.3L1285.1,1140.2M1340.9,1138.6L1313.4,1140.5M1402.3,1138.7L1375.8,1140.7M1430.5,1139.0L1409.7,1140.6M1463.8,1138.9L1438.4,1140.8M1520.7,1139.5L1501.1,1141.0M1554.1,1139.3L1530.1,1141.3M1578.2,1140.0L1559.3,1141.6M1627.2,1141.4L1622.6,1141.8M1539.8,1139.5L1627.6,1141.9M5321.3,1245.2L5655.8,1254.6M1480.3,1139.1L1566.6,1141.5M5548.8,1254.2L5907.7,1264.4M1371.6,1138.6L1445.7,1140.8M6064.8,1274.6L6434.2,1285.3M1322.0,1138.5L1395.1,1140.7M6311.5,1284.8L6707.8,1296.5M1272.5,1138.4L1335.4,1140.3M6630.6,1297.5L7006.1,1308.6M1173.7,1138.2L1234.9,1140.1M7250.6,1323.1L7691.3,1336.5M1132.9,1138.4L1193.5,1140.3M7541.7,1335.8L8016.0,1350.4M1083.5,1138.3L1143.3,1140.2M7929.2,1351.9L8448.6,1368.1M1001.4,1138.6L1051.5,1140.2M8754.0,1386.9L9284.6,1403.9M960.2,1138.8L1009.8,1140.4M9190.3,1405.9L9772.0,1424.7M918.8,1139.0L967.9,1140.6M9675.2,1426.9L10316.5,1448.0M835.7,1139.3L883.8,1140.9M10827.3,1477.0L11622.3,1503.9M793.9,1139.5L841.5,1141.1M11518.7,1507.1L12257.2,1532.4M759.8,1139.9L807.0,1141.6M12151.9,1536.0L13148.2,1570.7M683.0,1140.5L721.6,1141.9M13876.1,1612.8L15170.6,1659.1M640.5,1140.7L686.4,1142.4M15065.1,1664.8L16315.5,1710.2M605.3,1141.1L650.9,1142.8M16212.6,1716.8L17979.0,1782.0M534.2,1142.1L571.4,1143.5M19558.1,1865.7L21772.9,1950.0M490.8,1142.2L535.1,1143.9M454.6,1142.7L498.5,1144.4M395.4,1144.2L417.1,1145.1M372.4,1145.3L386.8,1145.9" stroke="#939393" stroke-opacity="0.185" stroke-width="0.75" fill="none" clip-path="url(#fl)"/>
<path d="M502.0,1140.5L450.2,1142.9M545.2,1140.0L494.5,1142.4M630.3,1139.0L581.9,1141.3M664.5,1138.9L625.0,1140.8M706.3,1138.4L659.8,1140.7M781.5,1137.8L736.8,1140.1M815.2,1137.7L778.8,1139.6M848.9,1137.6L813.0,1139.5M922.8,1137.0L888.4,1138.9M956.1,1136.9L922.3,1138.8M989.3,1136.8L956.1,1138.7M1055.6,1136.6L1023.6,1138.5M1088.7,1136.5L1057.3,1138.4M1121.6,1136.4L1090.9,1138.3M1181.5,1136.6L1151.8,1138.4M1214.4,1136.5L1185.3,1138.3M1247.3,1136.3L1218.7,1138.2M1307.3,1136.5L1279.7,1138.4M1334.7,1136.8L1313.0,1138.3M1367.5,1136.7L1340.9,1138.6M1427.9,1136.8L1402.3,1138.7M1455.7,1137.1L1430.5,1139.0M1483.6,1137.4L1463.8,1138.9M1530.3,1138.7L1520.7,1139.5M1455.7,1137.1L1539.8,1139.5M5655.8,1254.6L6020.0,1264.8M1406.7,1137.0L1480.3,1139.1M5907.7,1264.4L6254.7,1274.2M1300.2,1136.6L1371.6,1138.6M6434.2,1285.3L6836.7,1297.0M1251.6,1136.5L1322.0,1138.5M6707.8,1296.5L7141.4,1309.2M1203.0,1136.4L1272.5,1138.4M7006.1,1308.6L7413.8,1320.7M1114.4,1136.4L1173.7,1138.2M7691.3,1336.5L8173.6,1351.2M1074.2,1136.6L1132.9,1138.4M8016.0,1350.4L8537.1,1366.5M1033.8,1136.8L1083.5,1138.3M8448.6,1368.1L8936.7,1383.3M944.8,1136.8L1001.4,1138.6M9284.6,1403.9L9867.7,1422.5M912.0,1137.2L960.2,1138.8M9772.0,1424.7L10414.6,1445.6M871.1,1137.4L918.8,1139.0M10316.5,1448.0L11029.0,1471.5M789.0,1137.7L835.7,1139.3M11622.3,1503.9L12518.0,1534.2M755.4,1138.2L793.9,1139.5M12257.2,1532.4L13252.9,1566.6M713.9,1138.3L759.8,1139.9M13148.2,1570.7L14289.6,1610.3M637.9,1138.9L683.0,1140.5M15170.6,1659.1L16687.0,1713.4M603.3,1139.3L640.5,1140.7M16315.5,1710.2L18072.8,1774.0M568.4,1139.8L605.3,1141.1M17979.0,1782.0L19727.1,1846.4M490.6,1140.4L534.2,1142.1M462.0,1141.1L490.8,1142.2M440.2,1142.1L454.6,1142.7" stroke="#939393" stroke-opacity="0.168" stroke-width="0.75" fill="none" clip-path="url(#fl)"/>
<path d="M551.7,1138.1L502.0,1140.5M593.7,1137.7L545.2,1140.0M676.7,1136.7L630.3,1139.0M710.2,1136.6L664.5,1138.9M751.0,1136.1L706.3,1138.4M817.4,1135.9L781.5,1137.8M857.4,1135.5L815.2,1137.7M890.3,1135.4L848.9,1137.6M956.0,1135.2L922.8,1137.0M988.7,1135.1L956.1,1136.9M1021.4,1135.0L989.3,1136.8M1086.5,1134.8L1055.6,1136.6M1119.0,1134.7L1088.7,1136.5M1151.4,1134.6L1121.6,1136.4M1210.3,1134.7L1181.5,1136.6M1242.7,1134.6L1214.4,1136.5M1269.5,1134.9L1247.3,1136.3M1328.7,1135.1L1307.3,1136.5M1361.0,1135.0L1334.7,1136.8M1388.2,1135.2L1367.5,1136.7M1437.9,1136.1L1427.9,1136.8M1460.6,1136.7L1455.7,1137.1M1383.7,1135.1L1455.7,1137.1M6020.0,1264.8L6372.2,1274.6M1335.7,1135.0L1406.7,1137.0M6254.7,1274.2L6631.5,1284.9M1239.9,1134.8L1300.2,1136.6M6836.7,1297.0L7219.9,1308.1M1192.1,1134.7L1251.6,1136.5M7141.4,1309.2L7555.7,1321.3M1144.3,1134.6L1203.0,1136.4M7413.8,1320.7L7857.9,1333.9M1065.2,1134.9L1114.4,1136.4M8173.6,1351.2L8624.8,1364.9M1017.4,1134.9L1074.2,1136.6M8537.1,1366.5L9112.5,1384.2M977.6,1135.0L1033.8,1136.8M8936.7,1383.3L9564.1,1402.9M897.6,1135.3L944.8,1136.8M9867.7,1422.5L10625.3,1446.8M857.4,1135.5L912.0,1137.2M10414.6,1445.6L11128.0,1468.7M824.7,1135.9L871.1,1137.4M11029.0,1471.5L11825.3,1497.7M743.6,1136.2L789.0,1137.7M12518.0,1534.2L13356.0,1562.5M710.2,1136.6L755.4,1138.2M13252.9,1566.6L14392.5,1605.6M669.2,1136.8L713.9,1138.3M14289.6,1610.3L15376.0,1648.1M601.3,1137.6L637.9,1138.9M16687.0,1713.4L18164.6,1766.3M567.0,1138.0L603.3,1139.3M18072.8,1774.0L19808.7,1837.1M525.2,1138.2L568.4,1139.8M19727.1,1846.4L22263.4,1940.0M483.5,1140.1L490.6,1140.4" stroke="#939393" stroke-opacity="0.160" stroke-width="0.75" fill="none" clip-path="url(#fl)"/>
<path d="M599.4,1135.9L551.7,1138.1M640.4,1135.4L593.7,1137.7M714.0,1134.9L676.7,1136.7M754.1,1134.4L710.2,1136.6M786.8,1134.3L751.0,1136.1M858.9,1133.8L817.4,1135.9M891.3,1133.7L857.4,1135.5M923.6,1133.6L890.3,1135.4M988.1,1133.4L956.0,1135.2M1020.3,1133.3L988.7,1135.1M1052.4,1133.2L1021.4,1135.0M1116.4,1133.0L1086.5,1134.8M1148.3,1132.9L1119.0,1134.7M1174.5,1133.2L1151.4,1134.6M1238.2,1133.0L1210.3,1134.7M1264.6,1133.2L1242.7,1134.6M1296.4,1133.1L1269.5,1134.9M1349.6,1133.6L1328.7,1135.1M1371.3,1134.3L1361.0,1135.0M1393.2,1134.9L1388.2,1135.2M1314.4,1133.2L1383.7,1135.1M6372.2,1274.6L6754.7,1285.3M1267.3,1133.1L1335.7,1135.0M6631.5,1284.9L7042.1,1296.5M1181.4,1133.1L1239.9,1134.8M7219.9,1308.1L7635.8,1320.1M1134.4,1133.0L1192.1,1134.7M7555.7,1321.3L8007.1,1334.5M1095.4,1133.2L1144.3,1134.6M7857.9,1333.9L8343.6,1348.3M1009.3,1133.2L1065.2,1134.9M8624.8,1364.9L9201.8,1382.5M970.1,1133.4L1017.4,1134.9M9112.5,1384.2L9655.6,1400.9M930.8,1133.5L977.6,1135.0M9564.1,1402.9L10159.2,1421.5M851.7,1133.8L897.6,1135.3M10625.3,1446.8L11352.5,1470.1M819.5,1134.2L857.4,1135.5M11128.0,1468.7L11924.8,1494.6M779.6,1134.4L824.7,1135.9M11825.3,1497.7L12721.0,1527.1M706.7,1134.9L743.6,1136.2M13356.0,1562.5L14493.7,1601.0M666.3,1135.1L710.2,1136.6M14392.5,1605.6L15709.6,1650.8M633.0,1135.5L669.2,1136.8M15376.0,1648.1L16880.7,1700.4M565.6,1136.3L601.3,1137.6M18164.6,1766.3L19888.5,1828.0M545.6,1137.2L567.0,1138.0M19808.7,1837.1L22321.8,1928.4M22263.4,1940.0L22535.0,1950.0" stroke="#939393" stroke-opacity="0.160" stroke-width="0.75" fill="none" clip-path="url(#fl)"/>
<path d="M645.2,1133.8L599.4,1135.9M685.2,1133.3L640.4,1135.4M757.1,1132.8L714.0,1134.9M789.3,1132.7L754.1,1134.4M828.3,1132.3L786.8,1134.3M892.2,1132.1L858.9,1133.8M924.1,1132.0L891.3,1133.7M955.9,1131.9L923.6,1133.6M1019.3,1131.7L988.1,1133.4M1050.9,1131.6L1020.3,1133.3M1082.4,1131.5L1052.4,1133.2M1145.3,1131.3L1116.4,1133.0M1176.7,1131.2L1148.3,1132.9M1202.5,1131.5L1174.5,1133.2M1265.1,1131.3L1238.2,1133.0M1285.9,1131.9L1264.6,1133.2M1306.9,1132.5L1296.4,1133.1M1255.7,1131.5L1314.4,1133.2M6754.7,1285.3L7117.4,1295.5M1209.3,1131.4L1267.3,1133.1M7042.1,1296.5L7432.8,1307.5M1124.8,1131.5L1181.4,1133.1M7635.8,1320.1L8088.8,1333.2M1078.5,1131.4L1134.4,1133.0M8007.1,1334.5L8500.8,1349.0M1040.0,1131.5L1095.4,1133.2M8343.6,1348.3L8877.0,1364.1M962.8,1131.8L1009.3,1133.2M9201.8,1382.5L9746.2,1399.0M924.1,1132.0L970.1,1133.4M9655.6,1400.9L10251.9,1419.3M885.2,1132.1L930.8,1133.5M10159.2,1421.5L10816.0,1442.0M807.0,1132.4L851.7,1133.8M11352.5,1470.1L12164.9,1496.1M775.1,1132.8L819.5,1134.2M11924.8,1494.6L12820.4,1523.6M735.6,1132.9L779.6,1134.4M12721.0,1527.1L13736.1,1560.5M663.5,1133.5L706.7,1134.9M14493.7,1601.0L15807.1,1645.4M630.6,1133.9L666.3,1135.1M15709.6,1650.8L16974.8,1694.1M604.6,1134.5L633.0,1135.5M16880.7,1700.4L18342.6,1751.3M19888.5,1828.0L22378.7,1917.1M22321.8,1928.4L22915.9,1950.0" stroke="#939393" stroke-opacity="0.160" stroke-width="0.75" fill="none" clip-path="url(#fl)"/>
<path d="M689.2,1131.7L645.2,1133.8M728.3,1131.3L685.2,1133.3M791.8,1131.1L757.1,1132.8M830.1,1130.7L789.3,1132.7M861.7,1130.6L828.3,1132.3M924.5,1130.4L892.2,1132.1M955.8,1130.3L924.1,1132.0M987.0,1130.2L955.9,1131.9M1049.4,1130.0L1019.3,1131.7M1080.5,1130.0L1050.9,1131.6M1111.5,1129.9L1082.4,1131.5M1173.3,1129.7L1145.3,1131.3M1198.8,1129.9L1176.7,1131.2M1224.3,1130.2L1202.5,1131.5M1190.8,1129.7L1255.7,1131.5M7117.4,1295.5L7568.3,1308.1M1153.1,1129.8L1209.3,1131.4M7432.8,1307.5L7856.8,1319.5M1069.8,1129.9L1124.8,1131.5M8088.8,1333.2L8584.1,1347.6M1031.9,1130.0L1078.5,1131.4M8500.8,1349.0L8962.4,1362.6M993.9,1130.2L1040.0,1131.5M8877.0,1364.1L9377.8,1379.0M917.6,1130.5L962.8,1131.8M9746.2,1399.0L10343.6,1417.2M879.2,1130.6L924.1,1132.0M10251.9,1419.3L10909.7,1439.6M840.8,1130.7L885.2,1132.1M10816.0,1442.0L11544.6,1464.7M770.7,1131.3L807.0,1132.4M12164.9,1496.1L12918.3,1520.2M731.8,1131.4L775.1,1132.8M12820.4,1523.6L13834.4,1556.6M692.8,1131.5L735.6,1132.9M13736.1,1560.5L14691.3,1591.9M642.3,1132.8L663.5,1133.5M15807.1,1645.4L17067.2,1688.0M623.6,1133.6L630.6,1133.9M16974.8,1694.1L18428.8,1744.0M18342.6,1751.3L20416.5,1823.4M22378.7,1917.1L23296.8,1950.0" stroke="#939393" stroke-opacity="0.160" stroke-width="0.75" fill="none" clip-path="url(#fl)"/>
<path d="M731.6,1129.7L689.2,1131.7M762.9,1129.6L728.3,1131.3M831.9,1129.1L791.8,1131.1M863.0,1129.1L830.1,1130.7M894.0,1129.0L861.7,1130.6M961.9,1128.5L924.5,1130.4M992.6,1128.4L955.8,1130.3M1023.2,1128.3L987.0,1130.2M1078.6,1128.4L1049.4,1130.0M1109.1,1128.4L1080.5,1130.0M1139.6,1128.3L1111.5,1129.9M1184.3,1129.0L1173.3,1129.7M1204.2,1129.6L1198.8,1129.9M1135.8,1128.2L1190.8,1129.7M7568.3,1308.1L7999.0,1320.2M1098.6,1128.3L1153.1,1129.8M7856.8,1319.5L8318.7,1332.6M1016.5,1128.3L1069.8,1129.9M8584.1,1347.6L9047.0,1361.0M979.1,1128.5L1031.9,1130.0M8962.4,1362.6L9552.4,1379.9M941.6,1128.6L993.9,1130.2M9377.8,1379.0L10020.6,1398.1M866.2,1128.9L917.6,1130.5M10343.6,1417.2L11002.3,1437.2M835.5,1129.3L879.2,1130.6M10909.7,1439.6L11638.9,1462.0M797.5,1129.4L840.8,1130.7M11544.6,1464.7L12357.4,1490.1M728.1,1129.9L770.7,1131.3M12918.3,1520.2L13931.2,1552.7M696.6,1130.3L731.8,1131.4M13834.4,1556.6L14991.9,1594.1M678.8,1131.1L692.8,1131.5M14691.3,1591.9L15997.1,1634.9M17067.2,1688.0L18828.6,1747.5M18428.8,1744.0L20488.1,1814.6M20416.5,1823.4L22488.3,1895.4" stroke="#939393" stroke-opacity="0.160" stroke-width="0.75" fill="none" clip-path="url(#fl)"/>
<path d="M765.7,1128.1L731.6,1129.7M803.1,1127.7L762.9,1129.6M864.3,1127.6L831.9,1129.1M894.8,1127.5L863.0,1129.1M931.4,1127.1L894.0,1129.0M992.0,1126.9L961.9,1128.5M1022.2,1126.8L992.6,1128.4M1052.3,1126.8L1023.2,1128.3M1106.8,1126.9L1078.6,1128.4M1125.9,1127.4L1109.1,1128.4M1145.2,1128.0L1139.6,1128.3M1089.9,1126.9L1135.8,1128.2M7999.0,1320.2L8398.5,1331.3M1045.7,1126.8L1098.6,1128.3M8318.7,1332.6L8823.5,1346.9M972.0,1127.1L1016.5,1128.3M9047.0,1361.0L9638.4,1378.1M935.0,1127.2L979.1,1128.5M9552.4,1379.9L10108.6,1396.2M897.9,1127.3L941.6,1128.6M10020.6,1398.1L10629.6,1416.1M823.4,1127.6L866.2,1128.9M11002.3,1437.2L11732.0,1459.4M793.0,1127.9L835.5,1129.3M11638.9,1462.0L12451.8,1487.1M755.4,1128.1L797.5,1129.4M12357.4,1490.1L13270.0,1518.5M714.2,1129.4L728.1,1129.9M13931.2,1552.7L15086.3,1589.7M14991.9,1594.1L16089.6,1629.7M15997.1,1634.9L17246.8,1676.0M18828.6,1747.5L20558.1,1806.0M20488.1,1814.6L22541.1,1885.0M22488.3,1895.4L24058.1,1950.0" stroke="#939393" stroke-opacity="0.160" stroke-width="0.75" fill="none" clip-path="url(#fl)"/>
<path d="M805.2,1126.3L765.7,1128.1M835.4,1126.2L803.1,1127.7M901.8,1125.7L864.3,1127.6M931.7,1125.7L894.8,1127.5M961.6,1125.6L931.4,1127.1M1021.1,1125.4L992.0,1126.9M1050.9,1125.3L1022.2,1126.8M1069.3,1125.8L1052.3,1126.8M1037.8,1125.4L1089.9,1126.9M8398.5,1331.3L8904.8,1345.5M1001.5,1125.6L1045.7,1126.8M8823.5,1346.9L9295.2,1360.3M928.7,1125.8L972.0,1127.1M9638.4,1378.1L10195.6,1394.3M892.1,1125.9L935.0,1127.2M10108.6,1396.2L10718.5,1414.0M855.4,1126.1L897.9,1127.3M10629.6,1416.1L11300.8,1436.1M788.5,1126.5L823.4,1127.6M11732.0,1459.4L12545.0,1484.2M765.2,1127.1L793.0,1127.9M12451.8,1487.1L13363.8,1515.2M748.4,1127.9L755.4,1128.1M13270.0,1518.5L14120.6,1545.1M15086.3,1589.7L16180.6,1624.7M16089.6,1629.7L17603.3,1678.8M17246.8,1676.0L18988.8,1733.2M20558.1,1806.0L22592.6,1874.7M22541.1,1885.0L24438.7,1950.0" stroke="#939393" stroke-opacity="0.160" stroke-width="0.75" fill="none" clip-path="url(#fl)"/>
<path d="M837.0,1124.8L805.2,1126.3M866.7,1124.7L835.4,1126.2M932.0,1124.3L901.8,1125.7M961.4,1124.2L931.7,1125.7M990.8,1124.1L961.6,1125.6M1032.6,1124.8L1021.1,1125.4M994.4,1124.2L1037.8,1125.4M8904.8,1345.5L9377.6,1358.7M951.4,1124.1L1001.5,1125.6M9295.2,1360.3L9807.8,1374.8M886.4,1124.6L928.7,1125.8M10195.6,1394.3L10806.4,1412.0M850.2,1124.7L892.1,1125.9M10718.5,1414.0L11390.3,1433.7M813.9,1124.8L855.4,1126.1M11300.8,1436.1L12044.2,1458.1M781.6,1126.3L788.5,1126.5M12545.0,1484.2L13456.3,1511.9M13363.8,1515.2L14394.1,1546.9M14120.6,1545.1L15270.7,1580.9M16180.6,1624.7L17687.7,1673.0M17603.3,1678.8L19066.5,1726.3M18988.8,1733.2L20693.6,1789.3M22592.6,1874.7L24819.1,1950.0" stroke="#939393" stroke-opacity="0.160" stroke-width="0.75" fill="none" clip-path="url(#fl)"/>
<path d="M874.0,1123.1L837.0,1124.8M903.1,1123.0L866.7,1124.7M961.3,1122.8L932.0,1124.3M978.8,1123.3L961.4,1124.2M996.6,1123.8L990.8,1124.1M945.0,1122.8L994.4,1124.2M9377.6,1358.7L9981.3,1375.6M909.6,1122.9L951.4,1124.1M9807.8,1374.8L10465.2,1393.4M845.1,1123.4L886.4,1124.6M10806.4,1412.0L11478.8,1431.5M829.6,1124.1L850.2,1124.7M11390.3,1433.7L12134.0,1455.6M12044.2,1458.1L12872.2,1482.7M13456.3,1511.9L14485.1,1543.2M14394.1,1546.9L15360.7,1576.7M15270.7,1580.9L16591.6,1622.2M17687.7,1673.0L19142.7,1719.5M19066.5,1726.3L20759.2,1781.2M20693.6,1789.3L23133.7,1869.6" stroke="#939393" stroke-opacity="0.160" stroke-width="0.75" fill="none" clip-path="url(#fl)"/>
<path d="M903.8,1121.7L874.0,1123.1M926.7,1121.9L903.1,1123.0M903.8,1121.7L945.0,1122.8M9981.3,1375.6L10549.7,1391.5M875.4,1122.0L909.6,1122.9M10465.2,1393.4L11087.1,1411.0M11478.8,1431.5L12222.7,1453.0M12134.0,1455.6L12961.7,1479.8M12872.2,1482.7L13637.6,1505.4M14485.1,1543.2L15449.4,1572.5M15360.7,1576.7L16677.2,1617.2M16591.6,1622.2L17852.1,1661.5M19142.7,1719.5L20823.4,1773.4M20759.2,1781.2L23177.3,1859.7M23133.7,1869.6L25579.7,1950.0" stroke="#939393" stroke-opacity="0.160" stroke-width="0.75" fill="none" clip-path="url(#fl)"/>
<path d="M909.7,1121.4L903.8,1121.7M890.3,1121.3L903.8,1121.7M10549.7,1391.5L11172.3,1408.9M11087.1,1411.0L11771.6,1430.3M12222.7,1453.0L13050.1,1477.0M12961.7,1479.8L13726.4,1502.2M13637.6,1505.4L14663.1,1535.8M15449.4,1572.5L16761.4,1612.4M16677.2,1617.2L17932.1,1655.9M17852.1,1661.5L19290.6,1706.4M20823.4,1773.4L23219.9,1850.1M23177.3,1859.7L25612.6,1938.7" stroke="#939393" stroke-opacity="0.160" stroke-width="0.75" fill="none" clip-path="url(#fl)"/>
<path d="M11172.3,1408.9L11857.1,1428.1M11771.6,1430.3L12396.9,1448.0M13050.1,1477.0L13975.9,1503.8M13726.4,1502.2L14750.1,1532.3M14663.1,1535.8L15827.5,1570.4M16761.4,1612.4L18010.7,1650.4M17932.1,1655.9L19672.9,1709.5M19290.6,1706.4L21309.9,1769.4M23219.9,1850.1L25628.2,1927.2M25612.6,1938.7L25959.9,1950.0" stroke="#939393" stroke-opacity="0.160" stroke-width="0.75" fill="none" clip-path="url(#fl)"/>
<path d="M11857.1,1428.1L12614.1,1449.3M12396.9,1448.0L13223.6,1471.4M13975.9,1503.8L14836.0,1528.7M14750.1,1532.3L15911.5,1566.3M15827.5,1570.4L16925.7,1603.0M18010.7,1650.4L19741.5,1703.1M19672.9,1709.5L21367.4,1761.7M21309.9,1769.4L23302.2,1831.5M25628.2,1927.2L26339.9,1950.0" stroke="#939393" stroke-opacity="0.160" stroke-width="0.75" fill="none" clip-path="url(#fl)"/>
<path d="M12614.1,1449.3L13308.7,1468.7M13223.6,1471.4L14147.2,1497.6M14836.0,1528.7L15994.3,1562.3M15911.5,1566.3L17005.8,1598.4M16925.7,1603.0L18430.5,1647.7M19741.5,1703.1L21423.6,1754.2M21367.4,1761.7L23341.9,1822.5M23302.2,1831.5L25658.0,1905.0" stroke="#939393" stroke-opacity="0.160" stroke-width="0.75" fill="none" clip-path="url(#fl)"/>
<path d="M13308.7,1468.7L14231.2,1494.5M14147.2,1497.6L15186.1,1527.0M15994.3,1562.3L17084.7,1593.9M17005.8,1598.4L18503.7,1642.3M18430.5,1647.7L19874.7,1690.5M21423.6,1754.2L23380.8,1813.8M23341.9,1822.5L25672.4,1894.3M25658.0,1905.0L27099.8,1950.0" stroke="#939393" stroke-opacity="0.160" stroke-width="0.75" fill="none" clip-path="url(#fl)"/>
<path d="M14231.2,1494.5L15267.9,1523.5M15186.1,1527.0L16156.1,1554.4M17084.7,1593.9L18575.6,1637.1M18503.7,1642.3L19939.4,1684.4M19874.7,1690.5L21532.7,1739.7M23380.8,1813.8L25686.5,1883.9M25672.4,1894.3L27479.5,1950.0" stroke="#939393" stroke-opacity="0.160" stroke-width="0.75" fill="none" clip-path="url(#fl)"/>
<path d="M15267.9,1523.5L16235.2,1550.6M16156.1,1554.4L17470.4,1591.6M18575.6,1637.1L20002.9,1678.4M19939.4,1684.4L21585.6,1732.7M21532.7,1739.7L23878.2,1809.3M25686.5,1883.9L27859.2,1950.0" stroke="#939393" stroke-opacity="0.160" stroke-width="0.75" fill="none" clip-path="url(#fl)"/>
<path d="M16235.2,1550.6L17544.6,1587.2M17470.4,1591.6L18715.7,1626.8M20002.9,1678.4L21637.5,1725.8M21585.6,1732.7L23910.5,1800.8M23878.2,1809.3L26213.0,1878.6" stroke="#939393" stroke-opacity="0.160" stroke-width="0.75" fill="none" clip-path="url(#fl)"/>
<path d="M17544.6,1587.2L18784.0,1621.9M18715.7,1626.8L20126.6,1666.8M21637.5,1725.8L23942.1,1792.5M23910.5,1800.8L26220.4,1868.6M26213.0,1878.6L28618.3,1950.0" stroke="#939393" stroke-opacity="0.160" stroke-width="0.75" fill="none" clip-path="url(#fl)"/>
<path d="M18784.0,1621.9L20489.7,1669.6M20126.6,1666.8L22088.5,1722.3M23942.1,1792.5L26227.6,1858.8M26220.4,1868.6L28997.7,1950.0" stroke="#939393" stroke-opacity="0.160" stroke-width="0.75" fill="none" clip-path="url(#fl)"/>
<path d="M20489.7,1669.6L22134.7,1715.6M22088.5,1722.3L24003.4,1776.5M26227.6,1858.8L28945.2,1937.5" stroke="#939393" stroke-opacity="0.160" stroke-width="0.75" fill="none" clip-path="url(#fl)"/>
<path d="M22134.7,1715.6L24033.0,1768.7M24003.4,1776.5L26241.4,1839.8M28945.2,1937.5L29377.0,1950.0" stroke="#939393" stroke-opacity="0.160" stroke-width="0.75" fill="none" clip-path="url(#fl)"/>
<path d="M24033.0,1768.7L26248.1,1830.7M26241.4,1839.8L28892.0,1914.8" stroke="#939393" stroke-opacity="0.160" stroke-width="0.75" fill="none" clip-path="url(#fl)"/>
<path d="M26248.1,1830.7L29448.4,1920.2M28892.0,1914.8L30135.3,1950.0" stroke="#939393" stroke-opacity="0.160" stroke-width="0.75" fill="none" clip-path="url(#fl)"/>
<path d="M29448.4,1920.2L30514.3,1950.0" stroke="#939393" stroke-opacity="0.160" stroke-width="0.75" fill="none" clip-path="url(#fl)"/>
<path d="M886.3,1854.0L650.8,1950.0M1805.5,1871.4L1702.2,1950.0M1730.4,1856.7L2207.6,1950.0M428.1,1881.9L662.3,1950.0" stroke="#7c9be0" stroke-opacity="1.000" stroke-width="2.40" fill="none" mask="url(#mf)"/>
<path d="M74.4,1817.6L-401.4,1950.0M1155.6,1744.3L886.3,1854.0M1933.4,1774.1L1805.5,1871.4M2763.5,1889.4L2752.9,1950.0M1211.7,1755.2L1730.4,1856.7M185.8,1811.5L428.1,1881.9" stroke="#7c9be0" stroke-opacity="1.000" stroke-width="2.40" fill="none" mask="url(#mf)"/>
<path d="M488.9,1702.3L74.4,1817.6M1298.7,1686.0L1155.6,1744.3M2016.2,1711.1L1933.4,1774.1M2778.0,1806.5L2763.5,1889.4M2453.4,1758.7L3353.2,1891.3M851.7,1684.8L1211.7,1755.2M-19.6,1751.8L185.8,1811.5M-985.6,1892.8L-884.5,1950.0" stroke="#7c9be0" stroke-opacity="1.000" stroke-width="2.40" fill="none" mask="url(#mf)"/>
<path d="M-509.2,1750.5L-1454.3,1950.0M758.6,1627.3L488.9,1702.3M1447.8,1625.2L1298.7,1686.0M2086.1,1657.9L2016.2,1711.1M2790.0,1738.2L2778.0,1806.5M3740.3,1885.0L3802.9,1950.0M1575.2,1629.2L2453.4,1758.7M3353.2,1891.3L3751.3,1950.0M634.4,1642.3L851.7,1684.8M-162.7,1710.2L-19.6,1751.8M-1089.3,1834.1L-985.6,1892.8" stroke="#7c9be0" stroke-opacity="0.996" stroke-width="2.38" fill="none" mask="url(#mf)"/>
<path d="M64.0,1629.4L-509.2,1750.5M941.4,1576.5L758.6,1627.3M1548.7,1584.1L1447.8,1625.2M2145.9,1612.4L2086.1,1657.9M2800.0,1680.9L2790.0,1738.2M3661.2,1802.9L3740.3,1885.0M1199.9,1573.9L1575.2,1629.2M408.0,1598.1L634.4,1642.3M-320.1,1664.5L-162.7,1710.2M-1179.9,1782.8L-1089.3,1834.1" stroke="#7c9be0" stroke-opacity="0.987" stroke-width="2.35" fill="none" mask="url(#mf)"/>
<path d="M-1170.0,1722.4L-2507.9,1950.0M392.4,1560.1L64.0,1629.4M1095.6,1533.5L941.4,1576.5M1656.8,1540.1L1548.7,1584.1M2197.7,1573.0L2145.9,1612.4M2808.6,1632.1L2800.0,1680.9M3596.0,1735.2L3661.2,1802.9M4754.7,1903.6L4852.2,1950.0M1976.3,1557.6L4224.4,1823.5M923.8,1533.2L1199.9,1573.9M242.8,1565.7L408.0,1598.1M-431.7,1632.1L-320.1,1664.5M-1259.7,1737.7L-1179.9,1782.8M-2435.6,1920.3L-2432.9,1950.0" stroke="#7c9be0" stroke-opacity="0.978" stroke-width="2.32" fill="none" mask="url(#mf)"/>
<path d="M-278.3,1570.7L-1170.0,1722.4M619.1,1512.2L392.4,1560.1M1227.5,1496.9L1095.6,1533.5M1731.7,1509.5L1656.8,1540.1M2242.9,1538.5L2197.7,1573.0M2815.9,1590.1L2808.6,1632.1M3528.9,1665.5L3596.0,1735.2M4575.2,1818.1L4754.7,1903.6M1486.8,1499.7L1976.3,1557.6M4224.4,1823.5L5293.4,1950.0M717.8,1502.8L923.8,1533.2M95.2,1536.9L242.8,1565.7M-532.4,1602.8L-431.7,1632.1M-1330.5,1697.6L-1259.7,1737.7M-2441.3,1857.9L-2435.6,1920.3" stroke="#7c9be0" stroke-opacity="0.969" stroke-width="2.29" fill="none" mask="url(#mf)"/>
<path d="M99.9,1506.4L-278.3,1570.7M808.4,1472.3L619.1,1512.2M1341.5,1465.1L1227.5,1496.9M1798.1,1482.5L1731.7,1509.5M2282.8,1508.2L2242.9,1538.5M2822.3,1553.6L2815.9,1590.1M3484.0,1619.0L3528.9,1665.5M4427.6,1747.9L4575.2,1818.1M2543.3,1526.0L3268.9,1597.7M1192.8,1464.9L1486.8,1499.7M564.1,1480.2L717.8,1502.8M-12.0,1515.9L95.2,1536.9M-645.5,1569.9L-532.4,1602.8M-1393.7,1661.8L-1330.5,1697.6M-2446.2,1803.7L-2441.3,1857.9" stroke="#7c9be0" stroke-opacity="0.960" stroke-width="2.25" fill="none" mask="url(#mf)"/>
<path d="M-727.0,1546.2L-3562.3,1950.0M364.2,1461.4L99.9,1506.4M943.8,1443.7L808.4,1472.3M1422.2,1442.7L1341.5,1465.1M1871.4,1452.6L1798.1,1482.5M2318.2,1481.3L2282.8,1508.2M2827.9,1521.5L2822.3,1553.6M3445.3,1578.7L3484.0,1619.0M4304.0,1689.1L4427.6,1747.9M5661.7,1876.2L5900.7,1950.0M1779.9,1450.6L2543.3,1526.0M3268.9,1597.7L4743.9,1743.5M999.2,1442.0L1192.8,1464.9M424.4,1459.6L564.1,1480.2M-134.1,1492.0L-12.0,1515.9M-727.0,1546.2L-645.5,1569.9M-1450.5,1629.6L-1393.7,1661.8M-2450.6,1756.1L-2446.2,1803.7" stroke="#7c9be0" stroke-opacity="0.951" stroke-width="2.22" fill="none" mask="url(#mf)"/>
<path d="M-223.6,1474.5L-727.0,1546.2M554.2,1429.1L364.2,1461.4M1085.0,1413.9L943.8,1443.7M1512.2,1417.7L1422.2,1442.7M1923.4,1431.4L1871.4,1452.6M2349.8,1457.2L2318.2,1481.3M2832.9,1493.1L2827.9,1521.5M3411.5,1543.6L3445.3,1578.7M4175.4,1627.8L4304.0,1689.1M5343.8,1778.0L5661.7,1876.2M1429.7,1416.0L1779.9,1450.6M4743.9,1743.5L5876.6,1855.4M824.8,1421.3L999.2,1442.0M296.8,1440.8L424.4,1459.6M-223.6,1474.5L-134.1,1492.0M-801.8,1524.5L-727.0,1546.2M-1501.9,1600.6L-1450.5,1629.6M-2454.4,1714.0L-2450.6,1756.1M-3927.8,1915.3L-3982.9,1950.0" stroke="#7c9be0" stroke-opacity="0.942" stroke-width="2.19" fill="none" mask="url(#mf)"/>
<path d="M-1333.0,1547.8L-4193.2,1898.1M123.6,1425.1L-223.6,1474.5M717.8,1401.3L554.2,1429.1M1168.4,1396.3L1085.0,1413.9M1576.7,1399.7L1512.2,1417.7M1970.5,1412.2L1923.4,1431.4M2378.2,1435.6L2349.8,1457.2M2837.3,1467.8L2832.9,1493.1M3381.7,1512.7L3411.5,1543.6M4088.4,1586.5L4175.4,1627.8M5138.0,1714.4L5343.8,1778.0M2091.9,1417.0L4012.0,1580.0M1216.6,1394.9L1429.7,1416.0M5876.6,1855.4L6834.0,1950.0M666.8,1402.7L824.8,1421.3M179.7,1423.5L296.8,1440.8M-326.5,1454.4L-223.6,1474.5M-870.6,1504.5L-801.8,1524.5M-1548.5,1574.2L-1501.9,1600.6M-2457.8,1676.4L-2454.4,1714.0M-3829.9,1853.6L-3927.8,1915.3" stroke="#7c9be0" stroke-opacity="0.933" stroke-width="2.16" fill="none" mask="url(#mf)"/>
<path d="M-507.0,1446.6L-1333.0,1547.8M-4193.2,1898.1L-4617.4,1950.0M344.8,1393.6L123.6,1425.1M860.2,1377.0L717.8,1401.3M1262.5,1376.4L1168.4,1396.3M1649.4,1379.5L1576.7,1399.7M2013.4,1394.8L1970.5,1412.2M2404.0,1416.0L2378.2,1435.6M2841.3,1445.1L2837.3,1467.8M3355.3,1485.3L3381.7,1512.7M4012.7,1550.4L4088.4,1586.5M4964.3,1660.8L5138.0,1714.4M6513.1,1850.4L6948.6,1950.0M1680.4,1382.1L2091.9,1417.0M4012.0,1580.0L5064.9,1669.3M1025.4,1376.0L1216.6,1394.9M523.2,1385.7L666.8,1402.7M72.1,1407.6L179.7,1423.5M-402.3,1439.6L-326.5,1454.4M-934.0,1486.1L-870.6,1504.5M-1591.1,1550.1L-1548.5,1574.2M-2460.9,1642.8L-2457.8,1676.4M-3744.7,1799.8L-3829.9,1853.6" stroke="#7c9be0" stroke-opacity="0.924" stroke-width="2.12" fill="none" mask="url(#mf)"/>
<path d="M-149.4,1402.8L-507.0,1446.6M508.2,1370.3L344.8,1393.6M965.5,1359.1L860.2,1377.0M1347.0,1358.5L1262.5,1376.4M1702.1,1364.8L1649.4,1379.5M2052.5,1378.8L2013.4,1394.8M2432.8,1394.0L2404.0,1416.0M2844.9,1424.7L2841.3,1445.1M3331.7,1460.9L3355.3,1485.3M3946.1,1518.7L4012.7,1550.4M4782.0,1604.5L4964.3,1660.8M6108.0,1757.8L6513.1,1850.4M2589.8,1405.7L3176.6,1449.3M1417.0,1359.8L1680.4,1382.1M5064.9,1669.3L6108.0,1757.8M876.5,1361.3L1025.4,1376.0M413.0,1372.6L523.2,1385.7M-27.3,1393.0L72.1,1407.6M-473.1,1425.7L-402.3,1439.6M-1006.8,1464.9L-934.0,1486.1M-1630.0,1528.0L-1591.1,1550.1M-2463.7,1612.5L-2460.9,1642.8M-3669.8,1752.7L-3744.7,1799.8" stroke="#7c9be0" stroke-opacity="0.915" stroke-width="2.09" fill="none" mask="url(#mf)"/>
<path d="M-896.7,1437.0L-5673.2,1950.0M111.0,1370.9L-149.4,1402.8M652.1,1349.8L508.2,1370.3M1060.5,1343.0L965.5,1359.1M1423.3,1342.4L1347.0,1358.5M1750.6,1351.3L1702.1,1364.8M2096.8,1360.8L2052.5,1378.8M2453.7,1378.2L2432.8,1394.0M2848.1,1406.1L2844.9,1424.7M3310.5,1438.9L3331.7,1460.9M3887.2,1490.7L3946.1,1518.7M4657.9,1566.1L4782.0,1604.5M5784.9,1683.9L6108.0,1757.8M7931.1,1938.3L7995.7,1950.0M1921.3,1356.0L2589.8,1405.7M3176.6,1449.3L4399.2,1540.2M1209.1,1342.1L1417.0,1359.8M6108.0,1757.8L7309.8,1859.8M739.5,1347.8L876.5,1361.3M310.5,1360.5L413.0,1372.6M-101.5,1382.1L-27.3,1393.0M-555.2,1409.7L-473.1,1425.7M-1060.3,1449.3L-1006.8,1464.9M-1674.4,1502.9L-1630.0,1528.0M-2466.2,1585.0L-2463.7,1612.5M-3603.6,1710.9L-3669.8,1752.7M-5404.9,1910.3L-5534.4,1950.0" stroke="#7c9be0" stroke-opacity="0.906" stroke-width="2.06" fill="none" mask="url(#mf)"/>
<path d="M-393.7,1382.9L-896.7,1437.0M305.0,1347.2L111.0,1370.9M779.7,1331.6L652.1,1349.8M1146.7,1328.3L1060.5,1343.0M1479.1,1330.6L1423.3,1342.4M1806.1,1335.9L1750.6,1351.3M2129.1,1347.6L2096.8,1360.8M2472.8,1363.6L2453.7,1378.2M2851.1,1389.2L2848.1,1406.1M3291.4,1419.0L3310.5,1438.9M3834.6,1465.6L3887.2,1490.7M4549.3,1532.6L4657.9,1566.1M5570.0,1634.8L5784.9,1683.9M7313.8,1826.2L7931.1,1938.3M1608.6,1332.7L1921.3,1356.0M4399.2,1540.2L5325.5,1609.1M1044.5,1328.2L1209.1,1342.1M7309.8,1859.8L8373.0,1950.0M613.2,1335.3L739.5,1347.8M214.9,1349.2L310.5,1360.5M-188.3,1369.3L-101.5,1382.1M-616.3,1397.7L-555.2,1409.7M-1110.2,1434.8L-1060.3,1449.3M-1706.8,1484.6L-1674.4,1502.9M-2468.5,1559.9L-2466.2,1585.0M-3544.6,1673.7L-3603.6,1710.9M-5205.3,1849.2L-5404.9,1910.3" stroke="#7c9be0" stroke-opacity="0.897" stroke-width="2.03" fill="none" mask="url(#mf)"/>
<path d="M-1487.3,1448.6L-4017.7,1690.6M-95.7,1350.9L-393.7,1382.9M473.9,1326.5L305.0,1347.2M875.6,1318.0L779.7,1331.6M1225.2,1315.0L1146.7,1328.3M1543.3,1317.1L1479.1,1330.6M1846.7,1324.6L1806.1,1335.9M2159.0,1335.4L2129.1,1347.6M2490.4,1350.2L2472.8,1363.6M2853.8,1373.7L2851.1,1389.2M3274.0,1401.0L3291.4,1419.0M3787.4,1443.2L3834.6,1465.6M4431.2,1496.1L4549.3,1532.6M5342.7,1582.8L5570.0,1634.8M6831.7,1738.7L7313.8,1826.2M2189.4,1337.4L3842.8,1446.8M1383.7,1316.0L1608.6,1332.7M5325.5,1609.1L6290.5,1680.9M914.5,1317.1L1044.5,1328.2M515.2,1325.6L613.2,1335.3M143.0,1340.7L214.9,1349.2M-253.3,1359.7L-188.3,1369.3M-673.6,1386.5L-616.3,1397.7M-1156.8,1421.3L-1110.2,1434.8M-1736.8,1467.6L-1706.8,1484.6M-2470.5,1537.1L-2468.5,1559.9M-3491.6,1640.3L-3544.6,1673.7M-5031.6,1796.0L-5205.3,1849.2" stroke="#7c9be0" stroke-opacity="0.888" stroke-width="1.99" fill="none" mask="url(#mf)"/>
<path d="M-688.8,1372.2L-1487.3,1448.6M-4017.7,1690.6L-6729.8,1950.0M127.4,1327.0L-95.7,1350.9M602.2,1310.8L473.9,1326.5M963.2,1305.5L875.6,1318.0M1297.1,1302.7L1225.2,1315.0M1590.7,1307.1L1543.3,1317.1M1884.6,1314.1L1846.7,1324.6M2186.7,1324.1L2159.0,1335.4M2506.6,1337.9L2490.4,1350.2M2856.2,1359.6L2853.8,1373.7M3258.1,1384.5L3274.0,1401.0M3744.8,1422.9L3787.4,1443.2M4348.3,1470.5L4431.2,1496.1M5187.1,1547.3L5342.7,1582.8M6444.9,1668.5L6831.7,1738.7M1796.9,1311.5L2189.4,1337.4M3842.8,1446.8L4734.3,1505.8M1203.5,1302.6L1383.7,1316.0M6290.5,1680.9L7222.7,1750.2M793.7,1306.9L914.5,1317.1M423.1,1316.5L515.2,1325.6M58.3,1330.7L143.0,1340.7M-314.8,1350.6L-253.3,1359.7M-727.6,1375.9L-673.6,1386.5M-1200.4,1408.6L-1156.8,1421.3M-1764.6,1451.9L-1736.8,1467.6M-2472.5,1516.1L-2470.5,1537.1M-3432.6,1603.1L-3491.6,1640.3M-4878.9,1749.3L-5031.6,1796.0" stroke="#7c9be0" stroke-opacity="0.879" stroke-width="1.96" fill="none" mask="url(#mf)"/>
<path d="M-310.3,1336.0L-688.8,1372.2M297.2,1308.7L127.4,1327.0M717.7,1296.6L602.2,1310.8M1058.9,1291.9L963.2,1305.5M1350.3,1293.7L1297.1,1302.7M1645.5,1295.5L1590.7,1307.1M1919.8,1304.3L1884.6,1314.1M2212.4,1313.7L2186.7,1324.1M2521.7,1326.4L2506.6,1337.9M2858.5,1346.5L2856.2,1359.6M3243.6,1369.5L3258.1,1384.5M3706.2,1404.5L3744.8,1422.9M4274.0,1447.6L4348.3,1470.5M5050.2,1516.0L5187.1,1547.3M6186.4,1621.6L6444.9,1668.5M2651.2,1334.1L3162.3,1364.6M1554.3,1295.4L1796.9,1311.5M4734.3,1505.8L5541.3,1559.2M1078.9,1293.3L1203.5,1302.6M7222.7,1750.2L8375.5,1835.9M681.1,1297.3L793.7,1306.9M336.5,1308.0L423.1,1316.5M-21.2,1321.3L58.3,1330.7M-387.1,1340.0L-314.8,1350.6M-790.9,1363.6L-727.6,1375.9M-1241.3,1396.8L-1200.4,1408.6M-1790.6,1437.2L-1764.6,1451.9M-2474.2,1496.7L-2472.5,1516.1M-3390.3,1576.5L-3432.6,1603.1M-4743.7,1707.9L-4878.9,1749.3M-7033.7,1939.1L-7087.6,1950.0" stroke="#7c9be0" stroke-opacity="0.870" stroke-width="1.93" fill="none" mask="url(#mf)"/>
<path d="M-1049.0,1369.2L-5502.3,1753.1M-55.0,1311.6L-310.3,1336.0M447.5,1292.6L297.2,1308.7M805.5,1285.9L717.7,1296.6M1131.8,1281.5L1058.9,1291.9M1412.1,1283.2L1350.3,1293.7M1686.2,1286.9L1645.5,1295.5M1960.5,1292.9L1919.8,1304.3M2236.3,1303.9L2212.4,1313.7M2535.7,1315.8L2521.7,1326.4M2860.6,1334.4L2858.5,1346.5M3230.3,1355.6L3243.6,1369.5M3662.7,1383.8L3706.2,1404.5M4207.1,1426.9L4274.0,1447.6M4900.7,1481.8L5050.2,1516.0M5912.0,1571.8L6186.4,1621.6M1985.6,1294.4L2651.2,1334.1M3162.3,1364.6L4207.1,1426.9M1358.2,1282.4L1554.3,1295.4M5541.3,1559.2L6438.2,1618.6M943.6,1283.3L1078.9,1293.3M8375.5,1835.9L9838.0,1944.6M592.9,1289.9L681.1,1297.3M254.8,1299.9L336.5,1308.0M-81.4,1314.1L-21.2,1321.3M-441.7,1331.9L-387.1,1340.0M-838.3,1354.3L-790.9,1363.6M-1279.8,1385.6L-1241.3,1396.8M-1814.8,1423.5L-1790.6,1437.2M-2475.8,1478.8L-2474.2,1496.7M-3351.8,1552.2L-3390.3,1576.5M-4623.2,1670.9L-4743.7,1707.9M-6638.6,1859.2L-7033.7,1939.1" stroke="#7c9be0" stroke-opacity="0.861" stroke-width="1.90" fill="none" mask="url(#mf)"/>
<path d="M-537.5,1325.1L-1049.0,1369.2M-5502.3,1753.1L-7787.1,1950.0M140.2,1292.9L-55.0,1311.6M563.2,1280.2L447.5,1292.6M902.0,1274.1L805.5,1285.9M1186.1,1273.8L1131.8,1281.5M1469.2,1273.5L1412.1,1283.2M1724.4,1278.9L1686.2,1286.9M1990.8,1284.5L1960.5,1292.9M2258.7,1294.8L2236.3,1303.9M2548.7,1305.9L2535.7,1315.8M2862.6,1323.2L2860.6,1334.4M3218.0,1342.8L3230.3,1355.6M3631.2,1368.8L3662.7,1383.8M4146.4,1408.2L4207.1,1426.9M4795.4,1457.7L4900.7,1481.8M5723.6,1537.6L5912.0,1571.8M1702.1,1277.5L1985.6,1294.4M4207.1,1426.9L4957.0,1471.6M1218.3,1273.2L1358.2,1282.4M6438.2,1618.6L7286.8,1674.7M835.6,1275.3L943.6,1283.3M9838.0,1944.6L9910.4,1950.0M493.3,1281.4L592.9,1289.9M177.7,1292.3L254.8,1299.9M-152.6,1305.7L-81.4,1314.1M-493.5,1324.3L-441.7,1331.9M-883.2,1345.5L-838.3,1354.3M-1315.9,1375.1L-1279.8,1385.6M-1837.4,1410.7L-1814.8,1423.5M-2477.4,1462.3L-2475.8,1478.8M-3316.5,1529.9L-3351.8,1552.2M-4515.0,1637.8L-4623.2,1670.9M-6369.1,1804.7L-6638.6,1859.2" stroke="#7c9be0" stroke-opacity="0.852" stroke-width="1.86" fill="none" mask="url(#mf)"/>
<path d="M-1543.5,1377.3L-3798.3,1554.1M-246.2,1300.0L-537.5,1325.1M291.0,1278.5L140.2,1292.9M668.5,1268.8L563.2,1280.2M975.9,1265.0L902.0,1274.1M1249.4,1264.7L1186.1,1273.8M1511.9,1266.2L1469.2,1273.5M1768.9,1269.5L1724.4,1278.9M2019.3,1276.6L1990.8,1284.5M2279.7,1286.2L2258.7,1294.8M2560.8,1296.6L2548.7,1305.9M2864.4,1312.8L2862.6,1323.2M3206.6,1331.0L3218.0,1342.8M3602.2,1355.0L3631.2,1368.8M4091.1,1391.1L4146.4,1408.2M4700.6,1436.0L4795.4,1457.7M5518.9,1500.4L5723.6,1537.6M2253.8,1284.8L3739.3,1365.4M1511.9,1266.2L1702.1,1277.5M4957.0,1471.6L5722.9,1517.3M1088.1,1264.6L1218.3,1273.2M7286.8,1674.7L8313.2,1742.7M734.0,1267.7L835.6,1275.3M415.1,1274.8L493.3,1281.4M104.7,1285.1L177.7,1292.3M-206.7,1299.3L-152.6,1305.7M-554.7,1315.3L-493.5,1324.3M-925.8,1337.2L-883.2,1345.5M-1350.1,1365.1L-1315.9,1375.1M-1858.6,1398.7L-1837.4,1410.7M-2478.8,1446.9L-2477.4,1462.3M-3284.1,1509.5L-3316.5,1529.9M-4417.4,1607.9L-4515.0,1637.8M-6132.6,1756.9L-6369.1,1804.7" stroke="#7c9be0" stroke-opacity="0.844" stroke-width="1.83" fill="none" mask="url(#mf)"/>
<path d="M-815.9,1320.2L-1543.5,1377.3M-3798.3,1554.1L-6814.2,1790.7M-46.4,1282.8L-246.2,1300.0M407.9,1267.3L291.0,1278.5M749.3,1260.2L668.5,1268.8M1044.6,1256.6L975.9,1265.0M1308.3,1256.3L1249.4,1264.7M1552.1,1259.4L1511.9,1266.2M1802.1,1262.5L1768.9,1269.5M2046.0,1269.2L2019.3,1276.6M2299.3,1278.2L2279.7,1286.2M2572.2,1288.0L2560.8,1296.6M2866.1,1303.1L2864.4,1312.8M3196.1,1320.1L3206.6,1331.0M3575.5,1342.3L3602.2,1355.0M4028.7,1371.8L4091.1,1391.1M4615.0,1416.5L4700.6,1436.0M5375.5,1474.4L5518.9,1500.4M1874.6,1264.3L2253.8,1284.8M3739.3,1365.4L4538.1,1408.8M1356.6,1256.9L1511.9,1266.2M5722.9,1517.3L6458.7,1561.1M966.7,1256.5L1088.1,1264.6M8313.2,1742.7L9380.8,1813.3M654.0,1261.8L734.0,1267.7M340.9,1268.5L415.1,1274.8M35.6,1278.2L104.7,1285.1M-270.9,1291.7L-206.7,1299.3M-601.1,1308.4L-554.7,1315.3M-966.2,1329.3L-925.8,1337.2M-1382.3,1355.8L-1350.1,1365.1M-1878.6,1387.4L-1858.6,1398.7M-2480.1,1432.5L-2478.8,1446.9M-3254.2,1490.6L-3284.1,1509.5M-4328.9,1580.8L-4417.4,1607.9M-5923.5,1714.7L-6132.6,1756.9" stroke="#7c9be0" stroke-opacity="0.835" stroke-width="1.80" fill="none" mask="url(#mf)"/>
<path d="M-449.9,1291.5L-815.9,1320.2M-6814.2,1790.7L-8845.1,1950.0M129.7,1267.6L-46.4,1282.8M531.7,1255.5L407.9,1267.3M839.0,1250.5L749.3,1260.2M1108.6,1248.8L1044.6,1256.6M1363.2,1248.5L1308.3,1256.3M1599.2,1251.3L1552.1,1259.4M1833.5,1255.8L1802.1,1262.5M2071.2,1262.2L2046.0,1269.2M2317.8,1270.7L2299.3,1278.2M2582.9,1279.9L2572.2,1288.0M2867.7,1294.0L2866.1,1303.1M3186.3,1309.9L3196.1,1320.1M3550.8,1330.6L3575.5,1342.3M3983.3,1357.8L4028.7,1371.8M4518.8,1394.5L4615.0,1416.5M5217.0,1445.6L5375.5,1474.4M2665.1,1284.0L3152.7,1308.2M1647.1,1251.9L1874.6,1264.3M4538.1,1408.8L5149.9,1442.0M1212.8,1248.4L1356.6,1256.9M6458.7,1561.1L7338.8,1613.6M869.0,1250.0L966.7,1256.5M9380.8,1813.3L10927.1,1915.6M563.0,1255.0L654.0,1261.8M270.3,1262.5L340.9,1268.5M-17.1,1273.0L35.6,1278.2M-319.7,1285.9L-270.9,1291.7M-645.3,1301.9L-601.1,1308.4M-1004.6,1321.8L-966.2,1329.3M-1412.8,1346.9L-1382.3,1355.8M-1897.4,1376.7L-1878.6,1387.4M-2481.3,1419.1L-2480.1,1432.5M-3226.5,1473.2L-3254.2,1490.6M-4248.3,1556.1L-4328.9,1580.8M-5737.3,1677.0L-5923.5,1714.7M-8209.6,1884.7L-8642.3,1950.0" stroke="#7c9be0" stroke-opacity="0.826" stroke-width="1.77" fill="none" mask="url(#mf)"/>
<path d="M-1121.4,1318.0L-5079.5,1602.8M-195.6,1271.6L-449.9,1291.5M267.5,1255.8L129.7,1267.6M628.5,1246.2L531.7,1255.5M908.2,1243.1L839.0,1250.5M1168.3,1241.4L1108.6,1248.8M1404.5,1242.6L1363.2,1248.5M1634.6,1245.3L1599.2,1251.3M1863.2,1249.6L1833.5,1255.8M2094.9,1255.6L2071.2,1262.2M2335.2,1263.6L2317.8,1270.7M2592.9,1272.2L2582.9,1279.9M2869.2,1285.6L2867.7,1294.0M3177.1,1300.4L3186.3,1309.9M3527.8,1319.6L3550.8,1330.6M3941.5,1344.9L3983.3,1357.8M4449.4,1378.6L4518.8,1394.5M5104.1,1425.1L5217.0,1445.6M2073.0,1254.5L2665.1,1284.0M3152.7,1308.2L4084.5,1354.6M1477.7,1242.7L1647.1,1251.9M5149.9,1442.0L5877.9,1481.5M1095.5,1241.4L1212.8,1248.4M7338.8,1613.6L8263.8,1668.8M776.6,1243.9L869.0,1250.0M10927.1,1915.6L11446.3,1950.0M491.1,1249.6L563.0,1255.0M203.1,1256.8L270.3,1262.5M-80.0,1266.8L-17.1,1273.0M-377.8,1279.1L-319.7,1285.9M-697.8,1294.2L-645.3,1301.9M-1041.2,1314.6L-1004.6,1321.8M-1441.7,1338.5L-1412.8,1346.9M-1915.1,1366.7L-1897.4,1376.7M-2482.4,1406.6L-2481.3,1419.1M-3200.9,1457.0L-3226.5,1473.2M-4174.6,1533.5L-4248.3,1556.1M-5570.3,1643.3L-5737.3,1677.0M-7826.5,1826.9L-8209.6,1884.7" stroke="#7c9be0" stroke-opacity="0.817" stroke-width="1.73" fill="none" mask="url(#mf)"/>
<path d="M-669.7,1285.5L-1121.4,1318.0M-5079.5,1602.8L-7998.3,1812.9M-18.2,1257.6L-195.6,1271.6M392.3,1245.0L267.5,1255.8M703.3,1239.1L628.5,1246.2M972.9,1236.1L908.2,1243.1M1224.2,1234.6L1168.3,1241.4M1453.1,1235.7L1404.5,1242.6M1676.3,1238.2L1634.6,1245.3M1898.0,1242.2L1863.2,1249.6M2117.4,1249.3L2094.9,1255.6M2355.6,1255.3L2335.2,1263.6M2602.3,1265.1L2592.9,1272.2M2870.6,1277.6L2869.2,1285.6M3168.5,1291.5L3177.1,1300.4M3506.5,1309.5L3527.8,1319.6M3902.8,1332.9L3941.5,1344.9M4385.7,1364.0L4449.4,1378.6M5001.9,1406.6L5104.1,1425.1M1805.4,1241.2L2073.0,1254.5M4084.5,1354.6L4729.6,1386.7M1338.4,1235.2L1477.7,1242.7M5877.9,1481.5L6568.0,1518.9M1000.7,1235.7L1095.5,1241.4M8263.8,1668.8L9206.8,1725.0M703.3,1239.1L776.6,1243.9M422.5,1244.5L491.1,1249.6M151.6,1252.4L203.1,1256.8M-128.1,1262.0L-80.0,1266.8M-422.2,1273.8L-377.8,1279.1M-737.8,1288.3L-697.8,1294.2M-1084.5,1306.2L-1041.2,1314.6M-1475.8,1328.6L-1441.7,1338.5M-1931.8,1357.3L-1915.1,1366.7M-2483.5,1394.8L-2482.4,1406.6M-3177.0,1442.0L-3200.9,1457.0M-4106.8,1512.8L-4174.6,1533.5M-5419.9,1612.8L-5570.3,1643.3M-7414.5,1764.8L-7826.5,1826.9" stroke="#7c9be0" stroke-opacity="0.808" stroke-width="1.70" fill="none" mask="url(#mf)"/>
<path d="M-1625.5,1329.4L-3653.6,1464.2M-380.0,1264.7L-669.7,1285.5M-7998.3,1812.9L-9903.9,1950.0M140.0,1245.2L-18.2,1257.6M490.2,1236.6L392.3,1245.0M786.9,1231.1L703.3,1239.1M1045.3,1228.4L972.9,1236.1M1276.7,1228.2L1224.2,1234.6M1489.8,1230.5L1453.1,1235.7M1707.7,1232.9L1676.3,1238.2M1924.3,1236.7L1898.0,1242.2M2143.8,1242.0L2117.4,1249.3M2370.9,1249.1L2355.6,1255.3M2611.2,1258.3L2602.3,1265.1M2871.9,1270.1L2870.6,1277.6M3160.5,1283.2L3168.5,1291.5M3486.6,1300.0L3506.5,1309.5M3866.9,1321.8L3902.8,1332.9M4327.1,1350.6L4385.7,1364.0M4886.7,1385.7L5001.9,1406.6M2299.5,1247.5L3669.5,1310.5M1602.3,1231.0L1805.4,1241.2M4729.6,1386.7L5382.7,1419.2M1224.2,1229.0L1338.4,1235.2M6568.0,1518.9L7272.2,1557.1M896.2,1229.5L1000.7,1235.7M9206.8,1725.0L10330.7,1792.0M619.6,1233.5L703.3,1239.1M356.9,1239.7L422.5,1244.5M89.9,1247.2L151.6,1252.4M-185.6,1256.4L-128.1,1262.0M-464.7,1268.8L-422.2,1273.8M-776.0,1282.6L-737.8,1288.3M-1117.3,1299.7L-1084.5,1306.2M-1501.6,1321.1L-1475.8,1328.6M-1947.6,1348.3L-1931.8,1357.3M-2484.5,1383.7L-2483.5,1394.8M-3154.8,1427.9L-3177.0,1442.0M-4029.6,1489.1L-4106.8,1512.8M-5251.4,1578.8L-5419.9,1612.8M-7128.3,1721.6L-7414.5,1764.8" stroke="#7c9be0" stroke-opacity="0.799" stroke-width="1.67" fill="none" mask="url(#mf)"/>
<path d="M-909.8,1281.8L-1625.5,1329.4M-3653.6,1464.2L-6262.3,1637.5M-175.6,1250.0L-380.0,1264.7M265.0,1235.4L140.0,1245.2M580.8,1228.8L490.2,1236.6M851.9,1224.9L786.9,1231.1M1101.7,1222.3L1045.3,1228.4M1316.4,1223.3L1276.7,1228.2M1533.1,1224.3L1489.8,1230.5M1737.6,1227.8L1707.7,1232.9M1949.2,1231.4L1924.3,1236.7M2163.7,1236.4L2143.8,1242.0M2385.3,1243.2L2370.9,1249.1M2619.6,1251.9L2611.2,1258.3M2873.1,1263.1L2871.9,1270.1M3153.0,1275.4L3160.5,1283.2M3468.0,1291.2L3486.6,1300.0M3833.5,1311.5L3866.9,1321.8M4260.1,1335.3L4327.1,1350.6M4803.3,1370.5L4886.7,1385.7M1949.2,1231.4L2299.5,1247.5M3669.5,1310.5L4362.4,1342.4M1449.7,1223.4L1602.3,1231.0M5382.7,1419.2L5936.9,1446.8M1116.5,1223.1L1224.2,1229.0M7272.2,1557.1L8094.7,1601.7M811.4,1224.4L896.2,1229.5M10330.7,1792.0L11692.9,1873.2M553.1,1229.1L619.6,1233.5M294.2,1235.0L356.9,1239.7M31.1,1242.2L89.9,1247.2M-229.7,1252.0L-185.6,1256.4M-515.5,1262.8L-464.7,1268.8M-812.6,1277.2L-776.0,1282.6M-1148.7,1293.6L-1117.3,1299.7M-1526.1,1314.0L-1501.6,1321.1M-1962.6,1339.8L-1947.6,1348.3M-2485.5,1373.3L-2484.5,1383.7M-3134.0,1414.8L-3154.8,1427.9M-3973.0,1471.8L-4029.6,1489.1M-5130.1,1554.3L-5251.4,1578.8M-6873.6,1683.2L-7128.3,1721.6M-9881.5,1911.9L-10198.6,1950.0" stroke="#7c9be0" stroke-opacity="0.790" stroke-width="1.64" fill="none" mask="url(#mf)"/>
<path d="M-554.4,1258.2L-909.8,1281.8M-6262.3,1637.5L-8956.6,1816.6M4.9,1237.0L-175.6,1250.0M379.3,1226.5L265.0,1235.4M664.9,1221.5L580.8,1228.8M924.8,1217.9L851.9,1224.9M1154.7,1216.6L1101.7,1222.3M1363.3,1217.6L1316.4,1223.3M1565.9,1219.7L1533.1,1224.3M1772.9,1221.8L1737.6,1227.8M1973.0,1226.4L1949.2,1231.4M2182.5,1231.2L2163.7,1236.4M2399.1,1237.6L2385.3,1243.2M2627.5,1245.9L2619.6,1251.9M2874.3,1256.4L2873.1,1263.1M3145.9,1268.0L3153.0,1275.4M3450.5,1282.9L3468.0,1291.2M3802.4,1301.9L3833.5,1311.5M4210.9,1324.1L4260.1,1335.3M4726.7,1356.6L4803.3,1370.5M2675.1,1247.9L3145.9,1268.0M1731.2,1221.4L1949.2,1231.4M4362.4,1342.4L4953.1,1369.5M1323.3,1217.2L1449.7,1223.4M5936.9,1446.8L6574.7,1478.6M1014.9,1217.6L1116.5,1223.1M8094.7,1601.7L9068.1,1654.6M743.9,1220.4L811.4,1224.4M11692.9,1873.2L12980.6,1950.0M477.0,1224.1L553.1,1229.1M234.2,1230.5L294.2,1235.0M-14.2,1238.4L31.1,1242.2M-282.5,1246.8L-229.7,1252.0M-554.4,1258.2L-515.5,1262.8M-847.7,1272.1L-812.6,1277.2M-1178.7,1287.7L-1148.7,1293.6M-1549.4,1307.2L-1526.1,1314.0M-1976.8,1331.8L-1962.6,1339.8M-2486.4,1363.5L-2485.5,1373.3M-3114.5,1402.5L-3134.0,1414.8M-3920.5,1455.7L-3973.0,1471.8M-5019.1,1531.8L-5130.1,1554.3M-6645.7,1648.8L-6873.6,1683.2M-9254.4,1836.4L-9881.5,1911.9" stroke="#7c9be0" stroke-opacity="0.781" stroke-width="1.60" fill="none" mask="url(#mf)"/>
<path d="M-1207.4,1282.1L-4801.4,1504.1M-323.0,1242.8L-554.4,1258.2M-8956.6,1816.6L-10963.4,1950.0M131.3,1227.9L4.9,1237.0M469.7,1219.4L379.3,1226.5M743.2,1214.8L664.9,1221.5M981.7,1212.5L924.8,1217.9M1194.9,1212.3L1154.7,1216.6M1407.6,1212.1L1363.3,1217.6M1604.8,1214.1L1565.9,1219.7M1799.7,1217.2L1772.9,1221.8M1995.5,1221.6L1973.0,1226.4M2200.5,1226.2L2182.5,1231.2M2412.1,1232.3L2399.1,1237.6M2635.1,1240.1L2627.5,1245.9M2875.4,1250.1L2874.3,1256.4M3139.2,1261.1L3145.9,1268.0M3434.2,1275.1L3450.5,1282.9M3773.4,1292.9L3802.4,1301.9M4165.2,1313.6L4210.9,1324.1M4639.3,1340.7L4726.7,1356.6M2118.4,1224.1L2675.1,1247.9M3145.9,1268.0L3999.5,1304.5M1565.1,1213.7L1731.2,1221.4M4953.1,1369.5L5467.3,1393.2M1219.1,1212.0L1323.3,1217.2M6574.7,1478.6L7316.6,1515.5M932.2,1213.1L1014.9,1217.6M9068.1,1654.6L10056.6,1708.2M666.5,1215.8L743.9,1220.4M416.3,1220.1L477.0,1224.1M176.6,1226.3L234.2,1230.5M-68.5,1233.7L-14.2,1238.4M-323.0,1242.8L-282.5,1246.8M-591.8,1253.7L-554.4,1258.2M-881.4,1267.1L-847.7,1272.1M-1207.4,1282.1L-1178.7,1287.7M-1571.7,1300.7L-1549.4,1307.2M-1990.3,1324.2L-1976.8,1331.8M-2487.2,1354.2L-2486.4,1363.5M-3096.2,1391.0L-3114.5,1402.5M-3871.6,1440.8L-3920.5,1455.7M-4917.2,1511.2L-5019.1,1531.8M-6440.4,1617.8L-6645.7,1648.8M-8824.6,1784.7L-9254.4,1836.4" stroke="#7c9be0" stroke-opacity="0.772" stroke-width="1.57" fill="none" mask="url(#mf)"/>
<path d="M-770.9,1255.2L-1207.4,1282.1M-4801.4,1504.1L-7191.0,1651.6M-139.6,1230.6L-323.0,1242.8M263.0,1218.4L131.3,1227.9M553.8,1212.8L469.7,1219.4M816.1,1208.5L743.2,1214.8M1035.5,1207.3L981.7,1212.5M1242.7,1207.2L1194.9,1212.3M1441.2,1208.0L1407.6,1212.1M1634.4,1209.9L1604.8,1214.1M1825.2,1212.9L1799.7,1217.2M2017.1,1217.1L1995.5,1221.6M2217.6,1221.4L2200.5,1226.2M2424.5,1227.2L2412.1,1232.3M2642.2,1234.7L2635.1,1240.1M2876.4,1244.2L2875.4,1250.1M3132.9,1254.5L3139.2,1261.1M3418.8,1267.7L3434.2,1275.1M3746.2,1284.5L3773.4,1292.9M4122.6,1303.9L4165.2,1313.6M4575.2,1329.1L4639.3,1340.7M1865.3,1213.3L2118.4,1224.1M3999.5,1304.5L4575.2,1329.1M1441.2,1208.0L1565.1,1213.7M5467.3,1393.2L6057.4,1420.3M1120.4,1207.1L1219.1,1212.0M7316.6,1515.5L8072.7,1553.2M853.3,1208.8L932.2,1213.1M10056.6,1708.2L11229.6,1771.8M604.7,1212.1L666.5,1215.8M358.1,1216.2L416.3,1220.1M121.5,1222.2L176.6,1226.3M-120.5,1229.3L-68.5,1233.7M-362.0,1238.9L-323.0,1242.8M-627.8,1249.5L-591.8,1253.7M-921.6,1261.2L-881.4,1267.1M-1234.9,1276.7L-1207.4,1282.1M-1592.9,1294.6L-1571.7,1300.7M-2003.1,1316.9L-1990.3,1324.2M-2488.0,1345.4L-2487.2,1354.2M-3079.0,1380.2L-3096.2,1391.0M-3826.0,1426.8L-3871.6,1440.8M-4823.2,1492.2L-4917.2,1511.2M-6254.5,1589.8L-6440.4,1617.8M-8446.4,1739.2L-8824.6,1784.7" stroke="#7c9be0" stroke-opacity="0.763" stroke-width="1.54" fill="none" mask="url(#mf)"/>
<path d="M-1687.8,1293.0L-3626.7,1404.7M-483.1,1237.4L-770.9,1255.2M-7191.0,1651.6L-10248.5,1840.4M6.8,1220.9L-139.6,1230.6M353.8,1211.9L263.0,1218.4M632.4,1206.6L553.8,1212.8M873.3,1203.5L816.1,1208.5M1086.4,1202.5L1035.5,1207.3M1287.9,1202.3L1242.7,1207.2M1481.2,1203.1L1441.2,1208.0M1669.5,1204.9L1634.4,1209.9M1849.6,1208.7L1825.2,1212.9M2042.6,1211.7L2017.1,1217.1M2233.9,1216.9L2217.6,1221.4M2436.3,1222.4L2424.5,1227.2M2649.0,1229.5L2642.2,1234.7M2877.4,1238.5L2876.4,1244.2M3127.0,1248.4L3132.9,1254.5M3404.3,1260.8L3418.8,1267.7M3720.6,1276.6L3746.2,1284.5M4082.7,1294.8L4122.6,1303.9M4515.6,1318.3L4575.2,1329.1M2333.7,1219.6L3619.2,1270.9M1685.1,1205.6L1865.3,1213.3M4575.2,1329.1L5104.1,1351.7M1324.7,1202.7L1441.2,1208.0M6057.4,1420.3L6660.4,1448.1M1026.8,1202.4L1120.4,1207.1M8072.7,1553.2L8954.8,1597.1M778.0,1204.8L853.3,1208.8M11229.6,1771.8L12644.0,1848.6M533.6,1207.9L604.7,1212.1M302.1,1212.5L358.1,1216.2M78.9,1219.0L121.5,1222.2M-160.5,1225.9L-120.5,1229.3M-408.9,1234.3L-362.0,1238.9M-670.9,1244.4L-627.8,1249.5M-952.4,1256.6L-921.6,1261.2M-1261.2,1271.6L-1234.9,1276.7M-1613.3,1288.7L-1592.9,1294.6M-2015.4,1310.0L-2003.1,1316.9M-2488.8,1337.1L-2488.0,1345.4M-3062.8,1369.9L-3079.0,1380.2M-3783.4,1413.8L-3826.0,1426.8M-4736.3,1474.6L-4823.2,1492.2M-6045.6,1558.3L-6254.5,1589.8M-8033.0,1689.5L-8446.4,1739.2M-11491.8,1923.5L-11756.5,1950.0" stroke="#7c9be0" stroke-opacity="0.754" stroke-width="1.51" fill="none" mask="url(#mf)"/>
<path d="M-982.1,1252.3L-1687.8,1293.0M-3626.7,1404.7L-5757.8,1527.6M-275.6,1224.6L-483.1,1237.4M-10248.5,1840.4L-12023.6,1950.0M139.8,1212.0L6.8,1220.9M452.3,1204.8L353.8,1211.9M705.9,1200.8L632.4,1206.6M927.5,1198.9L873.3,1203.5M1134.5,1197.8L1086.4,1202.5M1330.7,1197.7L1287.9,1202.3M1511.7,1199.4L1481.2,1203.1M1696.2,1201.1L1669.5,1204.9M1878.6,1203.8L1849.6,1208.7M2062.0,1207.6L2042.6,1211.7M2249.5,1212.6L2233.9,1216.9M2447.5,1217.8L2436.3,1222.4M2655.5,1224.6L2649.0,1229.5M2878.4,1233.2L2877.4,1238.5M3121.3,1242.5L3127.0,1248.4M3390.6,1254.3L3404.3,1260.8M3690.8,1267.4L3720.6,1276.6M4045.5,1286.2L4082.7,1294.8M4460.3,1308.2L4515.6,1318.3M2005.7,1206.5L2333.7,1219.6M3619.2,1270.9L4239.0,1295.7M1548.3,1199.7L1685.1,1205.6M5104.1,1351.7L5599.4,1372.9M1214.9,1197.6L1324.7,1202.7M6660.4,1448.1L7354.5,1480.0M950.4,1198.6L1026.8,1202.4M8954.8,1597.1L9836.8,1641.0M705.9,1200.8L778.0,1204.8M12644.0,1848.6L14382.9,1942.9M476.8,1204.5L533.6,1207.9M248.3,1209.0L302.1,1212.5M27.7,1215.2L78.9,1219.0M-208.7,1221.8L-160.5,1225.9M-445.0,1230.7L-408.9,1234.3M-704.1,1240.5L-670.9,1244.4M-982.1,1252.3L-952.4,1256.6M-1286.5,1266.6L-1261.2,1271.6M-1632.7,1283.0L-1613.3,1288.7M-2027.0,1303.4L-2015.4,1310.0M-2489.5,1329.2L-2488.8,1337.1M-3047.5,1360.3L-3062.8,1369.9M-3743.5,1401.5L-3783.4,1413.8M-4655.7,1458.3L-4736.3,1474.6M-5894.5,1535.5L-6045.6,1558.3M-7741.6,1654.4L-8033.0,1689.5M-10861.8,1860.5L-11491.8,1923.5" stroke="#7c9be0" stroke-opacity="0.745" stroke-width="1.47" fill="none" mask="url(#mf)"/>
<path d="M-658.3,1233.6L-982.1,1252.3M-5757.8,1527.6L-8164.2,1666.3M-109.3,1214.3L-275.6,1224.6M246.6,1204.9L139.8,1212.0M530.8,1199.1L452.3,1204.8M774.8,1195.4L705.9,1200.8M978.8,1194.5L927.5,1198.9M1180.3,1193.5L1134.5,1197.8M1363.4,1194.2L1330.7,1197.7M1548.0,1194.9L1511.7,1199.4M1721.8,1197.5L1696.2,1201.1M1900.7,1200.0L1878.6,1203.8M2080.5,1203.7L2062.0,1207.6M2264.3,1208.4L2249.5,1212.6M2458.2,1213.5L2447.5,1217.8M2661.6,1219.9L2655.5,1224.6M2879.3,1228.1L2878.4,1233.2M3116.0,1237.0L3121.3,1242.5M3377.6,1248.1L3390.6,1254.3M3668.5,1260.5L3690.8,1267.4M4010.5,1278.3L4045.5,1286.2M4396.2,1296.6L4460.3,1308.2M2703.7,1221.5L3116.0,1237.0M1810.6,1198.7L2005.7,1206.5M4239.0,1295.7L4726.7,1315.2M1420.2,1194.3L1548.3,1199.7M5599.4,1372.9L6163.5,1397.0M1123.8,1193.4L1214.9,1197.6M7354.5,1480.0L8054.2,1512.2M877.1,1194.9L950.4,1198.6M9836.8,1641.0L10865.7,1692.2M636.9,1197.1L705.9,1200.8M14382.9,1942.9L14513.4,1950.0M422.1,1201.2L476.8,1204.5M196.5,1205.5L248.3,1209.0M-21.6,1211.5L27.7,1215.2M-245.9,1218.7L-208.7,1221.8M-479.9,1227.3L-445.0,1230.7M-736.0,1236.7L-704.1,1240.5M-1010.6,1248.1L-982.1,1252.3M-1310.8,1261.9L-1286.5,1266.6M-1651.4,1277.6L-1632.7,1283.0M-2038.2,1297.1L-2027.0,1303.4M-2490.2,1321.6L-2489.5,1329.2M-3033.0,1351.2L-3047.5,1360.3M-3706.0,1390.1L-3743.5,1401.5M-4580.8,1443.2L-4655.7,1458.3M-5755.9,1514.6L-5894.5,1535.5M-7479.4,1622.9L-7741.6,1654.4M-10314.5,1805.8L-10861.8,1860.5" stroke="#7c9be0" stroke-opacity="0.736" stroke-width="1.44" fill="none" mask="url(#mf)"/>
<path d="M-1274.5,1254.1L-4604.6,1434.1M-423.6,1220.1L-658.3,1233.6M-8164.2,1666.3L-11253.1,1844.4M24.6,1206.1L-109.3,1214.3M345.5,1198.4L246.6,1204.9M604.5,1193.8L530.8,1199.1M829.0,1191.2L774.8,1195.4M1037.0,1189.4L978.8,1194.5M1223.7,1189.3L1180.3,1193.5M1402.4,1190.0L1363.4,1194.2M1575.8,1191.6L1548.0,1194.9M1752.3,1193.1L1721.8,1197.5M1921.9,1196.4L1900.7,1200.0M2098.3,1199.9L2080.5,1203.7M2278.5,1204.5L2264.3,1208.4M2468.5,1209.3L2458.2,1213.5M2667.5,1215.5L2661.6,1219.9M2880.1,1223.2L2879.3,1228.1M3110.9,1231.7L3116.0,1237.0M3365.3,1242.3L3377.6,1248.1M3647.4,1254.0L3668.5,1260.5M3969.8,1268.9L4010.5,1278.3M4348.6,1288.0L4396.2,1296.6M2170.1,1201.5L2703.7,1221.5M3116.0,1237.0L3904.9,1266.5M1646.0,1192.2L1810.6,1198.7M4726.7,1315.2L5240.1,1335.7M1312.8,1189.7L1420.2,1194.3M6163.5,1397.0L6735.1,1421.4M1049.1,1190.0L1123.8,1193.4M8054.2,1512.2L8737.9,1543.6M806.9,1191.4L877.1,1194.9M10865.7,1692.2L12081.6,1752.7M581.6,1194.1L636.9,1197.1M369.4,1198.1L422.1,1201.2M156.4,1202.9L196.5,1205.5M-59.7,1208.7L-21.6,1211.5M-290.7,1214.9L-245.9,1218.7M-521.9,1223.1L-479.9,1227.3M-766.9,1233.0L-736.0,1236.7M-1038.1,1244.0L-1010.6,1248.1M-1334.2,1257.3L-1310.8,1261.9M-1669.3,1272.4L-1651.4,1277.6M-2048.8,1291.0L-2038.2,1297.1M-2490.8,1314.5L-2490.2,1321.6M-3019.3,1342.5L-3033.0,1351.2M-3670.8,1379.3L-3706.0,1390.1M-4510.9,1429.1L-4580.8,1443.2M-5628.1,1495.3L-5755.9,1514.6M-7242.3,1594.4L-7479.4,1622.9M-9723.7,1746.7L-10314.5,1805.8" stroke="#7c9be0" stroke-opacity="0.727" stroke-width="1.41" fill="none" mask="url(#mf)"/>
<path d="M-851.0,1231.2L-1274.5,1254.1M-4604.6,1434.1L-6658.2,1545.2M-235.5,1209.2L-423.6,1220.1M-11253.1,1844.4L-13084.6,1950.0M147.1,1198.5L24.6,1206.1M437.3,1192.3L345.5,1198.4M673.8,1188.9L604.5,1193.8M880.6,1187.1L829.0,1191.2M1082.9,1185.5L1037.0,1189.4M1265.0,1185.4L1223.7,1189.3M1432.2,1186.8L1402.4,1190.0M1608.9,1187.5L1575.8,1191.6M1775.6,1189.8L1752.3,1193.1M1942.2,1193.0L1921.9,1196.4M2115.3,1196.3L2098.3,1199.9M2292.1,1200.7L2278.5,1204.5M2478.3,1205.3L2468.5,1209.3M2673.1,1211.2L2667.5,1215.5M2880.9,1218.6L2880.1,1223.2M3106.1,1226.7L3110.9,1231.7M3353.7,1236.7L3365.3,1242.3M3627.5,1247.9L3647.4,1254.0M3939.3,1262.0L3969.8,1268.9M4304.0,1279.9L4348.6,1288.0M1926.8,1192.4L2170.1,1201.5M3904.9,1266.5L4425.7,1286.0M1520.4,1187.2L1646.0,1192.2M5240.1,1335.7L5717.5,1354.7M1223.6,1185.9L1312.8,1189.7M6735.1,1421.4L7300.8,1445.6M965.9,1186.2L1049.1,1190.0M8737.9,1543.6L9656.6,1585.9M739.5,1188.1L806.9,1191.4M12081.6,1752.7L13540.5,1825.3M528.3,1191.2L581.6,1194.1M318.5,1195.0L369.4,1198.1M107.9,1199.7L156.4,1202.9M-105.7,1205.3L-59.7,1208.7M-325.3,1212.0L-290.7,1214.9M-554.2,1219.9L-521.9,1223.1M-804.0,1228.7L-766.9,1233.0M-1064.6,1240.1L-1038.1,1244.0M-1356.7,1252.9L-1334.2,1257.3M-1686.4,1267.4L-1669.3,1272.4M-2059.0,1285.3L-2048.8,1291.0M-2491.4,1307.7L-2490.8,1314.5M-3006.3,1334.4L-3019.3,1342.5M-3637.5,1369.1L-3670.8,1379.3M-4445.6,1415.9L-4510.9,1429.1M-5510.1,1477.5L-5628.1,1495.3M-7026.8,1568.5L-7242.3,1594.4M-9311.8,1705.5L-9723.7,1746.7" stroke="#7c9be0" stroke-opacity="0.718" stroke-width="1.38" fill="none" mask="url(#mf)"/>
<path d="M-1736.8,1264.3L-3539.7,1356.1M-565.1,1215.7L-851.0,1231.2M-6658.2,1545.2L-8944.4,1668.8M-83.5,1200.5L-235.5,1209.2M246.1,1192.4L147.1,1198.5M510.9,1187.4L437.3,1192.3M739.0,1184.2L673.8,1188.9M939.2,1182.6L880.6,1187.1M1126.6,1181.7L1082.9,1185.5M1296.6,1182.3L1265.0,1185.4M1467.8,1183.0L1432.2,1186.8M1634.2,1184.4L1608.9,1187.5M1798.0,1186.6L1775.6,1189.8M1966.4,1188.9L1942.2,1193.0M2131.7,1192.9L2115.3,1196.3M2305.2,1197.1L2292.1,1200.7M2487.6,1201.5L2478.3,1205.3M2678.4,1207.1L2673.1,1211.2M2881.7,1214.2L2880.9,1218.6M3101.5,1221.9L3106.1,1226.7M3342.6,1231.5L3353.7,1236.7M3608.6,1242.1L3627.5,1247.9M3910.5,1255.4L3939.3,1262.0M4262.1,1272.3L4304.0,1279.9M2360.1,1198.0L3581.2,1241.1M1749.6,1185.8L1926.8,1192.4M4425.7,1286.0L4907.5,1304.1M1402.1,1182.4L1520.4,1187.2M5717.5,1354.7L6257.7,1376.3M1138.5,1182.2L1223.6,1185.9M7300.8,1445.6L7940.2,1472.9M897.5,1183.0L965.9,1186.2M9656.6,1585.9L10572.3,1628.0M674.8,1184.9L739.5,1188.1M13540.5,1825.3L14999.2,1898.0M466.6,1187.9L528.3,1191.2M269.3,1192.1L318.5,1195.0M61.2,1196.6L107.9,1199.7M-141.3,1202.6L-105.7,1205.3M-358.8,1209.1L-325.3,1212.0M-585.5,1216.8L-554.2,1219.9M-832.5,1225.3L-804.0,1228.7M-1090.1,1236.3L-1064.6,1240.1M-1378.3,1248.7L-1356.7,1252.9M-1702.9,1262.6L-1686.4,1267.4M-2068.7,1279.8L-2059.0,1285.3M-2492.0,1301.2L-2491.4,1307.7M-2994.0,1326.6L-3006.3,1334.4M-3606.2,1359.5L-3637.5,1369.1M-4384.5,1403.5L-4445.6,1415.9M-5400.7,1461.0L-5510.1,1477.5M-6783.6,1539.2L-7026.8,1568.5M-8944.4,1668.8L-9311.8,1705.5" stroke="#7c9be0" stroke-opacity="0.709" stroke-width="1.34" fill="none" mask="url(#mf)"/>
<path d="M-1064.2,1230.1L-1736.8,1264.3M-3539.7,1356.1L-5518.0,1456.8M-355.1,1204.4L-565.1,1215.7M-8944.4,1668.8L-12268.4,1848.5M39.9,1193.3L-83.5,1200.5M338.3,1186.7L246.1,1192.4M580.3,1182.8L510.9,1187.4M790.5,1180.4L739.0,1184.2M985.5,1178.9L939.2,1182.6M1160.1,1178.8L1126.6,1181.7M1334.4,1178.7L1296.6,1182.3M1501.8,1179.3L1467.8,1183.0M1658.6,1181.4L1634.2,1184.4M1819.6,1183.5L1798.0,1186.6M1985.0,1185.7L1966.4,1188.9M2147.3,1189.6L2131.7,1192.9M2320.7,1192.8L2305.2,1197.1M2496.6,1197.8L2487.6,1201.5M2683.5,1203.2L2678.4,1207.1M2882.4,1210.0L2881.7,1214.2M3097.1,1217.3L3101.5,1221.9M3332.1,1226.5L3342.6,1231.5M3590.7,1236.5L3608.6,1242.1M3883.3,1249.2L3910.5,1255.4M4222.7,1265.1L4262.1,1272.3M2049.8,1187.1L2360.1,1198.0M3581.2,1241.1L4115.0,1259.9M1612.3,1180.6L1749.6,1185.8M4907.5,1304.1L5363.1,1321.1M1302.6,1178.5L1402.1,1182.4M6257.7,1376.3L6729.4,1395.1M1057.1,1178.7L1138.5,1182.2M7940.2,1472.9L8668.6,1504.1M831.8,1180.0L897.5,1183.0M10572.3,1628.0L11636.9,1676.9M622.9,1182.3L674.8,1184.9M14999.2,1898.0L16044.6,1950.0M417.1,1185.2L466.6,1187.9M221.9,1189.3L269.3,1192.1M25.0,1194.2L61.2,1196.6M-184.3,1199.4L-141.3,1202.6M-399.4,1205.7L-358.8,1209.1M-623.3,1213.1L-585.5,1216.8M-860.1,1222.0L-832.5,1225.3M-1120.9,1231.8L-1090.1,1236.3M-1404.3,1243.6L-1378.3,1248.7M-1718.7,1258.0L-1702.9,1262.6M-2078.1,1274.5L-2068.7,1279.8M-2492.6,1295.0L-2492.0,1301.2M-2982.2,1319.2L-2994.0,1326.6M-3576.5,1350.4L-3606.2,1359.5M-4327.1,1391.9L-4384.5,1403.5M-5299.0,1445.6L-5400.7,1461.0M-6607.1,1518.0L-6783.6,1539.2M-8614.8,1635.8L-8944.4,1668.8" stroke="#7c9be0" stroke-opacity="0.700" stroke-width="1.31" fill="none" mask="url(#mf)"/>
<path d="M-721.3,1212.7L-1064.2,1230.1M-5518.0,1456.8L-7452.1,1555.2M-201.2,1196.1L-355.1,1204.4M-12268.4,1848.5L-14146.3,1950.0M139.7,1187.6L39.9,1193.3M412.4,1182.1L338.3,1186.7M645.8,1178.4L580.3,1182.8M849.2,1176.2L790.5,1180.4M1029.6,1175.5L985.5,1178.9M1200.3,1175.4L1160.1,1178.8M1370.5,1175.3L1334.4,1178.7M1527.8,1176.5L1501.8,1179.3M1687.8,1177.8L1658.6,1181.4M1845.3,1179.9L1819.6,1183.5M2002.8,1182.7L1985.0,1185.7M2166.1,1185.6L2147.3,1189.6M2332.6,1189.5L2320.7,1192.8M2505.2,1194.3L2496.6,1197.8M2688.4,1199.5L2683.5,1203.2M2883.1,1206.0L2882.4,1210.0M3092.9,1213.0L3097.1,1217.3M3322.1,1221.7L3332.1,1226.5M3573.7,1231.3L3590.7,1236.5M3857.5,1243.3L3883.3,1249.2M4185.4,1258.4L4222.7,1265.1M2707.3,1200.1L3114.8,1213.7M1859.3,1180.4L2049.8,1187.1M4115.0,1259.9L4599.4,1277.0M1496.2,1176.3L1612.3,1180.6M5363.1,1321.1L5823.9,1338.4M1219.6,1175.2L1302.6,1178.5M6729.4,1395.1L7334.6,1419.3M979.3,1175.4L1057.1,1178.7M8668.6,1504.1L9378.9,1534.4M768.6,1177.1L831.8,1180.0M11636.9,1676.9L12890.1,1734.6M572.5,1179.8L622.9,1182.3M369.2,1182.6L417.1,1185.2M176.0,1186.5L221.9,1189.3M-18.8,1191.3L25.0,1194.2M-217.6,1197.0L-184.3,1199.4M-430.7,1203.0L-399.4,1205.7M-652.5,1210.2L-623.3,1213.1M-886.9,1218.8L-860.1,1222.0M-1144.5,1228.3L-1120.9,1231.8M-1424.2,1239.7L-1404.3,1243.6M-1733.9,1253.6L-1718.7,1258.0M-2087.0,1269.4L-2078.1,1274.5M-2493.1,1289.0L-2492.6,1295.0M-2971.1,1312.1L-2982.2,1319.2M-3548.4,1341.8L-3576.5,1350.4M-4260.2,1378.4L-4327.1,1391.9M-5181.6,1427.9L-5299.0,1445.6M-6444.7,1498.4L-6607.1,1518.0M-8247.4,1599.1L-8614.8,1635.8" stroke="#7c9be0" stroke-opacity="0.692" stroke-width="1.28" fill="none" mask="url(#mf)"/>
<path d="M-1328.3,1231.6L-4458.0,1382.0M-505.1,1201.7L-721.3,1212.7M-7452.1,1555.2L-9989.0,1684.3M-76.1,1189.3L-201.2,1196.1M245.7,1181.5L139.7,1187.6M493.6,1177.1L412.4,1182.1M707.7,1174.3L645.8,1178.4M895.7,1172.9L849.2,1176.2M1071.8,1172.1L1029.6,1175.5M1238.6,1172.1L1200.3,1175.4M1398.3,1172.6L1370.5,1175.3M1559.1,1173.2L1527.8,1176.5M1710.1,1175.1L1687.8,1177.8M1865.1,1177.0L1845.3,1179.9M2019.9,1179.8L2002.8,1182.7M2180.4,1182.6L2166.1,1185.6M2344.0,1186.3L2332.6,1189.5M2513.5,1191.0L2505.2,1194.3M2693.1,1195.9L2688.4,1199.5M2883.8,1202.2L2883.1,1206.0M3088.9,1208.9L3092.9,1213.0M3312.6,1217.2L3322.1,1221.7M3557.6,1226.3L3573.7,1231.3M3833.1,1237.7L3857.5,1243.3M4141.8,1250.4L4185.4,1258.4M2211.2,1183.6L2707.3,1200.1M3114.8,1213.7L3833.1,1237.7M1710.1,1175.1L1859.3,1180.4M4599.4,1277.0L5032.7,1292.3M1398.3,1172.6L1496.2,1176.3M5823.9,1338.4L6281.1,1355.5M1140.2,1172.0L1219.6,1175.2M7334.6,1419.3L7933.2,1443.2M915.2,1172.7L979.3,1175.4M9378.9,1534.4L10330.6,1575.1M707.7,1174.3L768.6,1177.1M12890.1,1734.6L14117.5,1791.0M514.3,1176.9L572.5,1179.8M322.8,1180.1L369.2,1182.6M131.7,1183.9L176.0,1186.5M-61.2,1188.5L-18.8,1191.3M-257.9,1194.0L-217.6,1197.0M-461.1,1200.4L-430.7,1203.0M-680.8,1207.4L-652.5,1210.2M-912.7,1215.8L-886.9,1218.8M-1167.4,1224.9L-1144.5,1228.3M-1443.4,1236.0L-1424.2,1239.7M-1748.6,1249.3L-1733.9,1253.6M-2095.6,1264.5L-2087.0,1269.4M-2493.7,1283.4L-2493.1,1289.0M-2960.4,1305.4L-2971.1,1312.1M-3521.8,1333.6L-3548.4,1341.8M-4210.1,1368.2L-4260.2,1378.4M-5094.5,1414.8L-5181.6,1427.9M-6294.7,1480.4L-6444.7,1498.4M-7983.9,1572.7L-8247.4,1599.1" stroke="#7c9be0" stroke-opacity="0.683" stroke-width="1.25" fill="none" mask="url(#mf)"/>
<path d="M-915.8,1211.8L-1328.3,1231.6M-4458.0,1382.0L-6280.2,1469.7M-313.2,1191.9L-505.1,1201.7M-9989.0,1684.3L-13294.6,1852.6M39.3,1183.1L-76.1,1189.3M320.0,1177.2L245.7,1181.5M559.1,1173.1L493.6,1177.1M756.7,1171.0L707.7,1174.3M940.2,1169.7L895.7,1172.9M1112.2,1169.0L1071.8,1172.1M1275.3,1168.9L1238.6,1172.1M1431.6,1169.4L1398.3,1172.6M1583.1,1170.6L1559.1,1173.2M1731.7,1172.5L1710.1,1175.1M1884.2,1174.3L1865.1,1177.0M2036.5,1177.0L2019.9,1179.8M2194.2,1179.7L2180.4,1182.6M2355.0,1183.2L2344.0,1186.3M2521.4,1187.7L2513.5,1191.0M2697.6,1192.5L2693.1,1195.9M2884.4,1198.5L2883.8,1202.2M3085.1,1204.9L3088.9,1208.9M3303.5,1212.8L3312.6,1217.2M3542.2,1221.5L3557.6,1226.3M3809.9,1232.4L3833.1,1237.7M4109.0,1244.5L4141.8,1250.4M1975.8,1175.8L2211.2,1183.6M3833.1,1237.7L4313.7,1253.7M1583.1,1170.6L1710.1,1175.1M5032.7,1292.3L5475.1,1307.9M1305.0,1169.1L1398.3,1172.6M6281.1,1355.5L6791.3,1374.6M1064.0,1168.9L1140.2,1172.0M7933.2,1443.2L8609.2,1470.2M853.5,1170.0L915.2,1172.7M10330.6,1575.1L11276.6,1615.5M658.6,1172.0L707.7,1174.3M14117.5,1791.0L15875.8,1871.9M467.3,1174.5L514.3,1176.9M277.9,1177.6L322.8,1180.1M97.2,1181.9L131.7,1183.9M-94.1,1186.3L-61.2,1188.5M-289.2,1191.6L-257.9,1194.0M-497.9,1197.3L-461.1,1200.4M-708.2,1204.7L-680.8,1207.4M-937.8,1212.8L-912.7,1215.8M-1189.5,1221.7L-1167.4,1224.9M-1462.0,1232.3L-1443.4,1236.0M-1762.7,1245.2L-1748.6,1249.3M-2103.9,1259.9L-2095.6,1264.5M-2494.2,1277.9L-2493.7,1283.4M-2950.3,1299.0L-2960.4,1305.4M-3496.5,1325.9L-3521.8,1333.6M-4162.8,1358.7L-4210.1,1368.2M-5013.0,1402.5L-5094.5,1414.8M-6155.7,1463.7L-6294.7,1480.4M-7743.5,1548.7L-7983.9,1572.7" stroke="#7c9be0" stroke-opacity="0.674" stroke-width="1.21" fill="none" mask="url(#mf)"/>
<path d="M-631.8,1198.1L-915.8,1211.8M-6280.2,1469.7L-8278.1,1565.7M-171.6,1184.7L-313.2,1191.9M-13294.6,1852.6L-15208.7,1950.0M146.2,1177.3L39.3,1183.1M401.7,1172.5L320.0,1177.2M621.2,1169.2L559.1,1173.1M812.8,1167.3L756.7,1171.0M982.7,1166.6L940.2,1169.7M1150.8,1165.9L1112.2,1169.0M1310.4,1165.9L1275.3,1168.9M1457.2,1167.0L1431.6,1169.4M1606.2,1168.1L1583.1,1170.6M1757.7,1169.3L1731.7,1172.5M1902.5,1171.7L1884.2,1174.3M2052.4,1174.2L2036.5,1177.0M2207.5,1176.9L2194.2,1179.7M2365.5,1180.3L2355.0,1183.2M2529.0,1184.6L2521.4,1187.7M2702.0,1189.2L2697.6,1192.5M2885.0,1195.0L2884.4,1198.5M3081.4,1201.1L3085.1,1204.9M3294.8,1208.7L3303.5,1212.8M3527.5,1217.0L3542.2,1221.5M3787.8,1227.3L3809.9,1232.4M4077.9,1238.8L4109.0,1244.5M2397.0,1181.3L3527.5,1217.0M1801.1,1169.9L1975.8,1175.8M4313.7,1253.7L4724.8,1267.4M1475.1,1166.8L1583.1,1170.6M5475.1,1307.9L5920.0,1323.6M1216.1,1165.8L1305.0,1169.1M6791.3,1374.6L7289.0,1393.2M1001.2,1166.4L1064.0,1168.9M8609.2,1470.2L9262.3,1496.2M793.9,1167.5L853.5,1170.0M11276.6,1615.5L12372.9,1662.4M601.7,1169.4L658.6,1172.0M15875.8,1871.9L17574.3,1950.0M421.8,1172.3L467.3,1174.5M234.5,1175.3L277.9,1177.6M55.4,1179.4L97.2,1181.9M-133.9,1183.7L-94.1,1186.3M-327.1,1188.8L-289.2,1191.6M-526.4,1194.9L-497.9,1197.3M-741.4,1201.4L-708.2,1204.7M-968.1,1209.2L-937.8,1212.8M-1210.9,1218.5L-1189.5,1221.7M-1471.0,1230.6L-1462.0,1232.3M-1766.1,1244.2L-1762.7,1245.2M-3490.4,1324.0L-3496.5,1325.9M-4140.1,1354.1L-4162.8,1358.7M-4936.5,1390.9L-5013.0,1402.5M-6026.5,1448.1L-6155.7,1463.7M-7523.4,1526.7L-7743.5,1548.7" stroke="#7c9be0" stroke-opacity="0.665" stroke-width="1.18" fill="none" mask="url(#mf)"/>
<path d="M-436.6,1188.7L-631.8,1198.1M-8278.1,1565.7L-10799.7,1686.9M-55.7,1178.8L-171.6,1184.7M233.3,1172.6L146.2,1177.3M467.7,1168.7L401.7,1172.5M670.5,1166.2L621.2,1169.2M857.4,1164.3L812.8,1167.3M1031.4,1163.1L982.7,1166.6M1187.8,1163.0L1150.8,1165.9M1337.4,1163.5L1310.4,1165.9M1487.9,1164.0L1457.2,1167.0M1634.1,1165.1L1606.2,1168.1M1777.6,1166.8L1757.7,1169.3M1924.6,1168.6L1902.5,1171.7M2071.5,1171.0L2052.4,1174.2M2220.3,1174.2L2207.5,1176.9M2375.7,1177.5L2365.5,1180.3M2536.4,1181.6L2529.0,1184.6M2706.1,1186.1L2702.0,1189.2M2885.6,1191.6L2885.0,1195.0M3077.9,1197.5L3081.4,1201.1M3286.5,1204.8L3294.8,1208.7M3513.5,1212.7L3527.5,1217.0M3766.8,1222.5L3787.8,1227.3M4048.4,1233.5L4077.9,1238.8M2099.3,1171.9L2397.0,1181.3M3527.5,1217.0L4048.4,1233.5M1675.7,1165.8L1801.1,1169.9M4724.8,1267.4L5147.6,1281.5M1383.7,1163.6L1475.1,1166.8M5920.0,1323.6L6359.2,1339.1M1141.7,1163.0L1216.1,1165.8M7289.0,1393.2L7927.1,1417.1M930.7,1163.6L1001.2,1166.4M9262.3,1496.2L9996.8,1525.5M736.4,1165.0L793.9,1167.5M12372.9,1662.4L13429.1,1707.5M555.8,1167.3L601.7,1169.4M377.7,1170.1L421.8,1172.3M200.6,1173.4L234.5,1175.3M14.9,1176.9L55.4,1179.4M-164.9,1181.6L-133.9,1183.7M-356.4,1186.6L-327.1,1188.8M-554.1,1192.5L-526.4,1194.9M-767.1,1198.9L-741.4,1201.4M-979.9,1207.8L-968.1,1209.2M-5935.6,1437.2L-6026.5,1448.1M-7273.1,1501.6L-7523.4,1526.7" stroke="#7c9be0" stroke-opacity="0.656" stroke-width="1.15" fill="none" mask="url(#mf)"/>
<path d="M-292.2,1181.8L-436.6,1188.7M-10799.7,1686.9L-14331.8,1856.7M51.8,1173.3L-55.7,1178.8M315.2,1168.1L233.3,1172.6M530.3,1165.1L467.7,1168.7M726.9,1162.7L670.5,1166.2M900.1,1161.5L857.4,1164.3M1070.1,1160.3L1031.4,1163.1M1223.3,1160.3L1187.8,1163.0M1369.9,1160.7L1337.4,1163.5M1511.6,1161.8L1487.9,1164.0M1655.5,1162.8L1634.1,1165.1M1796.8,1164.5L1777.6,1166.8M1941.6,1166.2L1924.6,1168.6M2086.2,1168.5L2071.5,1171.0M2232.6,1171.6L2220.3,1174.2M2385.5,1174.7L2375.7,1177.5M2543.4,1178.8L2536.4,1181.6M2710.1,1183.0L2706.1,1186.1M2886.2,1188.3L2885.6,1191.6M3074.6,1194.0L3077.9,1197.5M3278.5,1201.0L3286.5,1204.8M3500.2,1208.6L3513.5,1212.7M3746.8,1218.0L3766.8,1222.5M4020.3,1228.4L4048.4,1233.5M2727.2,1183.5L3094.1,1194.6M1911.5,1165.9L2099.3,1171.9M4048.4,1233.5L4469.8,1246.8M1557.4,1161.8L1675.7,1165.8M5147.6,1281.5L5577.3,1295.8M1296.5,1160.5L1383.7,1163.6M6359.2,1339.1L6846.7,1356.3M1080.2,1160.7L1141.7,1163.0M7927.1,1417.1L8462.9,1437.2M872.5,1161.3L930.7,1163.6M9996.8,1525.5L10978.7,1564.7M690.0,1163.0L736.4,1165.0M13429.1,1707.5L14912.7,1770.9M511.3,1165.3L555.8,1167.3M334.9,1168.0L377.7,1170.1M159.5,1171.2L200.6,1173.4M-16.6,1175.1L14.9,1176.9M-202.5,1179.1L-164.9,1181.6M-385.0,1184.5L-356.4,1186.6M-587.7,1189.7L-554.1,1192.5M-773.4,1198.3L-767.1,1198.9M-7226.0,1496.9L-7273.1,1501.6" stroke="#7c9be0" stroke-opacity="0.647" stroke-width="1.12" fill="none" mask="url(#mf)"/>
<path d="M-159.7,1175.4L-292.2,1181.8M-14331.8,1856.7L-16271.9,1950.0M151.8,1168.2L51.8,1173.3M392.2,1164.0L315.2,1168.1M599.4,1161.1L530.3,1165.1M780.5,1159.4L726.9,1162.7M949.0,1158.2L900.1,1161.5M1107.3,1157.7L1070.1,1160.3M1250.7,1158.1L1223.3,1160.3M1401.1,1158.1L1369.9,1160.7M1540.2,1159.0L1511.6,1161.8M1681.3,1160.1L1655.5,1162.8M1820.0,1161.6L1796.8,1164.5M1958.0,1163.8L1941.6,1166.2M2100.4,1166.1L2086.2,1168.5M2244.6,1169.0L2232.6,1171.6M2394.9,1172.1L2385.5,1174.7M2550.2,1176.0L2543.4,1178.8M2714.0,1180.1L2710.1,1183.0M2886.8,1185.2L2886.2,1188.3M3071.4,1190.6L3074.6,1194.0M3270.9,1197.3L3278.5,1201.0M3487.4,1204.6L3500.2,1208.6M3727.7,1213.6L3746.8,1218.0M3993.6,1223.5L4020.3,1228.4M2230.5,1168.6L2727.2,1183.5M3094.1,1194.6L3776.7,1215.1M1762.3,1161.2L1911.5,1165.9M4469.8,1246.8L4876.5,1259.6M1456.5,1158.4L1557.4,1161.8M5577.3,1295.8L5957.3,1308.5M1223.3,1157.9L1296.5,1160.5M6846.7,1356.3L7319.4,1373.0M1011.0,1158.1L1080.2,1160.7M8462.9,1437.2L9162.0,1463.4M816.2,1159.0L872.5,1161.3M10978.7,1564.7L11779.9,1596.7M636.0,1160.7L690.0,1163.0M14912.7,1770.9L16700.6,1847.3M468.0,1163.3L511.3,1165.3M293.3,1165.9L334.9,1168.0M119.6,1169.0L159.5,1171.2M-54.9,1172.8L-16.6,1175.1M-231.7,1177.2L-202.5,1179.1M-419.8,1181.9L-385.0,1184.5" stroke="#7c9be0" stroke-opacity="0.638" stroke-width="1.10" fill="none" mask="url(#mf)"/>
<path d="M-37.7,1169.5L-159.7,1175.4M233.7,1164.1L151.8,1168.2M454.7,1160.6L392.2,1164.0M646.4,1158.4L599.4,1161.1M823.3,1156.7L780.5,1159.4M988.0,1155.7L949.0,1158.2M1136.0,1155.6L1107.3,1157.7M1283.6,1155.5L1250.7,1158.1M1425.2,1156.0L1401.1,1158.1M1562.2,1156.9L1540.2,1159.0M1701.2,1157.9L1681.3,1160.1M1837.9,1159.5L1820.0,1161.6M1973.8,1161.6L1958.0,1163.8M2114.1,1163.8L2100.4,1166.1M2256.1,1166.6L2244.6,1169.0M2404.0,1169.6L2394.9,1172.1M2556.8,1173.3L2550.2,1176.0M2717.7,1177.3L2714.0,1180.1M2887.3,1182.2L2886.8,1185.2M3068.3,1187.4L3071.4,1190.6M3263.6,1193.9L3270.9,1197.3M3475.1,1200.8L3487.4,1204.6M3705.0,1208.4L3727.7,1213.6M3968.1,1218.9L3993.6,1223.5M2015.8,1162.2L2230.5,1168.6M3776.7,1215.1L4226.6,1228.6M1645.4,1157.5L1762.3,1161.2M4876.5,1259.6L5253.5,1271.6M1370.9,1155.6L1456.5,1158.4M5957.3,1308.5L6429.9,1324.3M1152.8,1155.4L1223.3,1157.9M7319.4,1373.0L7842.4,1391.4M953.8,1156.0L1011.0,1158.1M9162.0,1463.4L9836.2,1488.7M770.7,1157.2L816.2,1159.0M11779.9,1596.7L12876.7,1640.5M592.4,1158.9L636.0,1160.7M16700.6,1847.3L18497.0,1924.1M417.6,1160.9L468.0,1163.3M253.0,1163.9L293.3,1165.9M80.8,1166.9L119.6,1169.0M-92.0,1170.6L-54.9,1172.8M-267.2,1174.9L-231.7,1177.2" stroke="#7c9be0" stroke-opacity="0.629" stroke-width="1.10" fill="none" mask="url(#mf)"/>
<path d="M62.8,1164.7L-37.7,1169.5M310.9,1160.1L233.7,1164.1M514.1,1157.4L454.7,1160.6M700.3,1155.3L646.4,1158.4M872.3,1153.7L823.3,1156.7M1025.5,1153.2L988.0,1155.7M1170.5,1153.1L1136.0,1155.6M1315.3,1153.0L1283.6,1155.5M1454.2,1153.5L1425.2,1156.0M1588.7,1154.4L1562.2,1156.9M1720.5,1155.9L1701.2,1157.9M1855.2,1157.3L1837.9,1159.5M1989.1,1159.4L1973.8,1161.6M2127.3,1161.5L2114.1,1163.8M2267.2,1164.3L2256.1,1166.6M2412.8,1167.1L2404.0,1169.6M2563.1,1170.7L2556.8,1173.3M2721.2,1174.6L2717.7,1177.3M2887.8,1179.3L2887.3,1182.2M3065.3,1184.3L3068.3,1187.4M3256.5,1190.5L3263.6,1193.9M3463.4,1197.2L3475.1,1200.8M3687.8,1204.5L3705.0,1208.4M3938.0,1213.4L3968.1,1218.9M2412.8,1167.1L3506.2,1198.4M1855.2,1157.3L2015.8,1162.2M4226.6,1228.6L4616.5,1240.3M1534.7,1154.0L1645.4,1157.5M5253.5,1271.6L5671.1,1284.8M1299.0,1153.2L1370.9,1155.6M6429.9,1324.3L6835.6,1337.8M1085.0,1153.0L1152.8,1155.4M7842.4,1391.4L8424.1,1411.9M898.4,1153.9L953.8,1156.0M9836.2,1488.7L10593.0,1517.0M717.7,1155.1L770.7,1157.2M12876.7,1640.5L14155.6,1691.6M550.0,1157.1L592.4,1158.9M18497.0,1924.1L19102.4,1950.0M376.9,1159.1L417.6,1160.9M213.7,1161.9L253.0,1163.9M50.6,1165.3L80.8,1166.9M-120.9,1168.8L-92.0,1170.6" stroke="#7c9be0" stroke-opacity="0.620" stroke-width="1.10" fill="none" mask="url(#mf)"/>
<path d="M145.4,1160.7L62.8,1164.7M373.6,1156.9L310.9,1160.1M570.8,1154.3L514.1,1157.4M751.7,1152.3L700.3,1155.3M911.5,1151.3L872.3,1153.7M1061.6,1150.8L1025.5,1153.2M1203.8,1150.7L1170.5,1153.1M1345.8,1150.7L1315.3,1153.0M1476.6,1151.5L1454.2,1153.5M1609.2,1152.4L1588.7,1154.4M1743.7,1153.4L1720.5,1155.9M1871.9,1155.3L1855.2,1157.3M2004.0,1157.3L1989.1,1159.4M2140.1,1159.3L2127.3,1161.5M2277.9,1162.0L2267.2,1164.3M2421.3,1164.8L2412.8,1167.1M2569.2,1168.3L2563.1,1170.7M2724.7,1171.9L2721.2,1174.6M2888.3,1176.5L2887.8,1179.3M3062.4,1181.3L3065.3,1184.3M3249.8,1187.3L3256.5,1190.5M3452.1,1193.7L3463.4,1197.2M3671.3,1200.7L3687.8,1204.5M3915.0,1209.3L3938.0,1213.4M2127.3,1159.0L2412.8,1167.1M3506.2,1198.4L3995.4,1212.4M1727.9,1153.5L1855.2,1157.3M4616.5,1240.3L4983.4,1251.3M1450.3,1151.4L1534.7,1154.0M5671.1,1284.8L6038.8,1296.4M1220.0,1150.6L1299.0,1153.2M6835.6,1337.8L7346.7,1354.8M1019.6,1150.7L1085.0,1153.0M8424.1,1411.9L9075.0,1434.9M844.7,1151.9L898.4,1153.9M10593.0,1517.0L11448.5,1549.0M666.3,1153.1L717.7,1155.1M14155.6,1691.6L15666.4,1751.9M500.6,1155.0L550.0,1157.1M337.4,1157.3L376.9,1159.1M175.6,1160.0L213.7,1161.9M13.9,1163.3L50.6,1165.3M-128.0,1168.4L-120.9,1168.8" stroke="#7c9be0" stroke-opacity="0.611" stroke-width="1.10" fill="none" mask="url(#mf)"/>
<path d="M223.3,1157.0L145.4,1160.7M443.1,1153.4L373.6,1156.9M624.8,1151.4L570.8,1154.3M792.7,1149.9L751.7,1152.3M949.2,1149.0L911.5,1151.3M1096.3,1148.5L1061.6,1150.8M1235.8,1148.4L1203.8,1150.7M1369.4,1148.8L1345.8,1150.7M1503.7,1149.2L1476.6,1151.5M1634.0,1150.1L1609.2,1152.4M1761.7,1151.4L1743.7,1153.4M1892.1,1152.8L1871.9,1155.3M2021.9,1154.7L2004.0,1157.3M2152.6,1157.2L2140.1,1159.3M2288.3,1159.8L2277.9,1162.0M2425.5,1163.6L2421.3,1164.8M2570.7,1167.7L2569.2,1168.3M3248.2,1186.5L3249.8,1187.3M3446.7,1192.0L3452.1,1193.7M3659.4,1198.0L3671.3,1200.7M3893.1,1205.3L3915.0,1209.3M1954.6,1154.0L2127.3,1159.0M3995.4,1212.4L4368.2,1223.1M1618.4,1150.2L1727.9,1153.5M4983.4,1251.3L5351.4,1262.4M1369.4,1148.8L1450.3,1151.4M6038.8,1296.4L6441.2,1309.1M1153.5,1148.3L1220.0,1150.6M7346.7,1354.8L7842.0,1371.3M965.4,1148.8L1019.6,1150.7M9075.0,1434.9L9697.8,1456.9M792.7,1149.9L844.7,1151.9M11448.5,1549.0L12423.5,1585.6M624.8,1151.4L666.3,1153.1M15666.4,1751.9L17151.6,1811.2M460.6,1153.2L500.6,1155.0M298.9,1155.5L337.4,1157.3M138.5,1158.2L175.6,1160.0M-0.5,1162.5L13.9,1163.3" stroke="#7c9be0" stroke-opacity="0.602" stroke-width="1.10" fill="none" mask="url(#mf)"/>
<path d="M296.9,1153.5L223.3,1157.0M499.7,1150.5L443.1,1153.4M676.4,1148.6L624.8,1151.4M839.9,1147.2L792.7,1149.9M985.5,1146.7L949.2,1149.0M1129.7,1146.2L1096.3,1148.5M1266.7,1146.2L1235.8,1148.4M1397.8,1146.6L1369.4,1148.8M1524.6,1147.4L1503.7,1149.2M1653.1,1148.2L1634.0,1150.1M1779.1,1149.6L1761.7,1151.4M1907.7,1150.9L1892.1,1152.8M2035.7,1152.8L2021.9,1154.7M2158.6,1156.2L2152.6,1157.2M3887.8,1204.3L3893.1,1205.3M1805.4,1149.7L1954.6,1154.0M4368.2,1223.1L4754.7,1234.2M1524.6,1147.4L1618.4,1150.2M5351.4,1262.4L5714.9,1273.3M1291.7,1146.4L1369.4,1148.8M6441.2,1309.1L6883.2,1323.1M1089.3,1146.2L1153.5,1148.3M7842.0,1371.3L8389.7,1389.6M912.9,1147.0L965.4,1148.8M9697.8,1456.9L10391.4,1481.3M742.3,1148.1L792.7,1149.9M12423.5,1585.6L13544.9,1627.6M576.4,1149.5L624.8,1151.4M17151.6,1811.2L19288.9,1896.5M421.7,1151.6L460.6,1153.2M261.4,1153.8L298.9,1155.5M116.7,1157.1L138.5,1158.2" stroke="#7c9be0" stroke-opacity="0.593" stroke-width="1.10" fill="none" mask="url(#mf)"/>
<path d="M366.6,1150.1L296.9,1153.5M553.7,1147.8L499.7,1150.5M725.7,1146.0L676.4,1148.6M877.7,1145.0L839.9,1147.2M1020.5,1144.6L985.5,1146.7M1162.0,1144.1L1129.7,1146.2M1296.4,1144.0L1266.7,1146.2M1419.9,1144.8L1397.8,1146.6M1549.9,1145.2L1524.6,1147.4M1671.7,1146.5L1653.1,1148.2M1795.9,1147.7L1779.1,1149.6M1919.1,1149.5L1907.7,1150.9M1697.2,1146.6L1805.4,1149.7M4754.7,1234.2L5082.9,1243.6M1435.0,1144.7L1524.6,1147.4M5714.9,1273.3L6113.5,1285.3M1226.2,1144.3L1291.7,1146.4M6883.2,1323.1L7307.5,1336.5M1036.0,1144.4L1089.3,1146.2M8389.7,1389.6L8907.5,1406.9M861.9,1145.2L912.9,1147.0M10391.4,1481.3L11168.5,1508.7M693.4,1146.2L742.3,1148.1M13544.9,1627.6L14848.3,1676.4M537.1,1147.9L576.4,1149.5M19288.9,1896.5L20629.0,1950.0M383.7,1150.0L421.7,1151.6M224.9,1152.1L261.4,1153.8" stroke="#7c9be0" stroke-opacity="0.584" stroke-width="1.10" fill="none" mask="url(#mf)"/>
<path d="M423.5,1147.4L366.6,1150.1M605.4,1145.1L553.7,1147.8M765.2,1143.8L725.7,1146.0M914.2,1142.9L877.7,1145.0M1060.8,1142.1L1020.5,1144.6M1193.1,1142.0L1162.0,1144.1M1319.4,1142.4L1296.4,1144.0M1446.5,1142.8L1419.9,1144.8M1569.5,1143.5L1549.9,1145.2M1694.1,1144.3L1671.7,1146.5M1808.3,1146.4L1795.9,1147.7M1594.3,1143.7L1697.2,1146.6M5082.9,1243.6L5442.1,1253.9M1358.6,1142.4L1435.0,1144.7M6113.5,1285.3L6501.8,1296.9M1154.0,1142.0L1226.2,1144.3M7307.5,1336.5L7771.8,1351.2M975.9,1142.4L1036.0,1144.4M8907.5,1406.9L9577.3,1429.2M812.4,1143.4L861.9,1145.2M11168.5,1508.7L12045.2,1539.7M653.8,1144.7L693.4,1146.2M14848.3,1676.4L16107.7,1723.5M498.9,1146.4L537.1,1147.9M346.8,1148.4L383.7,1150.0" stroke="#7c9be0" stroke-opacity="0.575" stroke-width="1.10" fill="none" mask="url(#mf)"/>
<path d="M486.7,1144.3L423.5,1147.4M654.9,1142.6L605.4,1145.1M810.7,1141.4L765.2,1143.8M956.2,1140.5L914.2,1142.9M1093.1,1140.1L1060.8,1142.1M1223.1,1140.0L1193.1,1142.0M1347.3,1140.4L1319.4,1142.4M1472.3,1140.7L1446.5,1142.8M1593.3,1141.5L1569.5,1143.5M1702.9,1143.5L1694.1,1144.3M1505.9,1141.2L1594.3,1143.7M5442.1,1253.9L5795.7,1264.0M1285.1,1140.2L1358.6,1142.4M6501.8,1296.9L6926.6,1309.7M1101.7,1140.3L1154.0,1142.0M7771.8,1351.2L8282.1,1367.3M925.9,1140.8L975.9,1142.4M9577.3,1429.2L10217.3,1450.5M764.4,1141.7L812.4,1143.4M12045.2,1539.7L13041.8,1574.8M607.5,1143.0L653.8,1144.7M16107.7,1723.5L17883.2,1790.0M461.6,1144.9L498.9,1146.4M325.1,1147.5L346.8,1148.4" stroke="#7c9be0" stroke-opacity="0.566" stroke-width="1.10" fill="none" mask="url(#mf)"/>
<path d="M538.4,1141.8L486.7,1144.3M702.3,1140.2L654.9,1142.6M847.2,1139.4L810.7,1141.4M989.9,1138.6L956.2,1140.5M1124.4,1138.1L1093.1,1140.1M1246.3,1138.5L1223.1,1140.0M1374.2,1138.4L1347.3,1140.4M1492.2,1139.2L1472.3,1140.7M1602.5,1140.7L1593.3,1141.5M1421.2,1138.7L1505.9,1141.2M5795.7,1264.0L6182.3,1275.0M1223.0,1138.3L1285.1,1140.2M6926.6,1309.7L7332.5,1321.9M1042.6,1138.5L1101.7,1140.3M8282.1,1367.3L8845.8,1385.1M877.3,1139.1L925.9,1140.8M10217.3,1450.5L10928.8,1474.2M717.7,1140.1L764.4,1141.7M13041.8,1574.8L14184.9,1615.1M569.9,1141.6L607.5,1143.0M17883.2,1790.0L19643.6,1856.0M418.0,1143.2L461.6,1144.9" stroke="#7c9be0" stroke-opacity="0.557" stroke-width="1.10" fill="none" mask="url(#mf)"/>
<path d="M587.9,1139.5L538.4,1141.8M740.3,1138.3L702.3,1140.2M889.4,1137.1L847.2,1139.4M1022.5,1136.7L989.9,1138.6M1148.6,1136.7L1124.4,1138.1M1274.5,1136.6L1246.3,1138.5M1395.1,1136.9L1374.2,1138.4M1506.8,1138.0L1492.2,1139.2M1348.9,1136.7L1421.2,1138.7M6182.3,1275.0L6557.3,1285.8M1163.0,1136.5L1223.0,1138.3M7332.5,1321.9L7774.9,1335.2M993.4,1136.9L1042.6,1138.5M8845.8,1385.1L9377.9,1401.9M830.1,1137.6L877.3,1139.1M10928.8,1474.2L11724.5,1500.8M679.7,1138.7L717.7,1140.1M14184.9,1615.1L15274.2,1653.6M526.0,1140.0L569.9,1141.6M19643.6,1856.0L21736.5,1934.4" stroke="#7c9be0" stroke-opacity="0.548" stroke-width="1.10" fill="none" mask="url(#mf)"/>
<path d="M635.4,1137.2L587.9,1139.5M784.2,1136.0L740.3,1138.3M923.2,1135.3L889.4,1137.1M1054.0,1134.9L1022.5,1136.7M1178.0,1134.8L1148.6,1136.7M1301.8,1134.8L1274.5,1136.6M1415.4,1135.5L1395.1,1136.9M1287.8,1134.9L1348.9,1136.7M6557.3,1285.8L6913.0,1296.0M1104.8,1134.8L1163.0,1136.5M7774.9,1335.2L8259.0,1349.7M937.6,1135.2L993.4,1136.9M9377.9,1401.9L10065.4,1423.6M784.2,1136.0L830.1,1137.6M11724.5,1500.8L12620.2,1530.6M635.4,1137.2L679.7,1138.7M15274.2,1653.6L16784.8,1706.9M504.5,1139.1L526.0,1140.0M21736.5,1934.4L22154.0,1950.0" stroke="#7c9be0" stroke-opacity="0.544" stroke-width="1.10" fill="none" mask="url(#mf)"/>
<path d="M681.0,1135.0L635.4,1137.2M819.5,1134.2L784.2,1136.0M955.9,1133.5L923.2,1135.3M1084.4,1133.1L1054.0,1134.9M1206.4,1133.1L1178.0,1134.8M1328.1,1133.1L1301.8,1134.8M1220.2,1133.0L1287.8,1134.9M6913.0,1296.0L7355.3,1308.6M1048.4,1133.1L1104.8,1134.8M8259.0,1349.7L8790.8,1365.7M891.3,1133.7L937.6,1135.2M10065.4,1423.6L10721.2,1444.4M739.5,1134.5L784.2,1136.0M12620.2,1530.6L13636.3,1564.5M599.4,1135.9L635.4,1137.2M16784.8,1706.9L18254.5,1758.7" stroke="#7c9be0" stroke-opacity="0.544" stroke-width="1.10" fill="none" mask="url(#mf)"/>
<path d="M717.7,1133.2L681.0,1135.0M860.3,1132.2L819.5,1134.2M987.6,1131.8L955.9,1133.5M1113.9,1131.4L1084.4,1133.1M1233.8,1131.4L1206.4,1133.1M1163.0,1131.3L1220.2,1133.0M7355.3,1308.6L7777.8,1320.7M1001.5,1131.7L1048.4,1133.1M8790.8,1365.7L9290.2,1380.7M846.2,1132.3L891.3,1133.7M10721.2,1444.4L11449.2,1467.4M703.2,1133.3L739.5,1134.5M13636.3,1564.5L14593.3,1596.4M585.2,1135.4L599.4,1135.9M18254.5,1758.7L20343.3,1832.4" stroke="#7c9be0" stroke-opacity="0.544" stroke-width="1.10" fill="none" mask="url(#mf)"/>
<path d="M760.1,1131.2L717.7,1133.2M893.1,1130.5L860.3,1132.2M1018.2,1130.1L987.6,1131.8M1142.4,1129.8L1113.9,1131.4M1244.6,1130.7L1233.8,1131.4M1107.6,1129.8L1163.0,1131.3M7777.8,1320.7L8238.1,1333.9M948.3,1130.1L1001.5,1131.7M9290.2,1380.7L9835.9,1397.1M802.2,1130.9L846.2,1132.3M11449.2,1467.4L12261.8,1493.1M660.7,1131.9L703.2,1133.3M14593.3,1596.4L15902.9,1640.1M20343.3,1832.4L22434.1,1906.1" stroke="#7c9be0" stroke-opacity="0.544" stroke-width="1.10" fill="none" mask="url(#mf)"/>
<path d="M800.9,1129.2L760.1,1131.2M924.9,1128.9L893.1,1130.5M1053.8,1128.2L1018.2,1130.1M1164.6,1128.5L1142.4,1129.8M1061.4,1128.4L1107.6,1129.8M8238.1,1333.9L8666.7,1346.2M903.9,1128.8L948.3,1130.1M9835.9,1397.1L10539.8,1418.3M759.4,1129.5L802.2,1130.9M12261.8,1493.1L13174.9,1521.9M15902.9,1640.1L17157.8,1681.9M22434.1,1906.1L23677.5,1950.0" stroke="#7c9be0" stroke-opacity="0.544" stroke-width="1.10" fill="none" mask="url(#mf)"/>
<path d="M833.7,1127.7L800.9,1129.2M961.7,1127.0L924.9,1128.9M1082.4,1126.7L1053.8,1128.2M1008.9,1126.9L1061.4,1128.4M8666.7,1346.2L9212.0,1361.8M860.7,1127.5L903.9,1128.8M10539.8,1418.3L11210.3,1438.4M731.4,1128.6L759.4,1129.5M13174.9,1521.9L14026.6,1548.8M17157.8,1681.9L18909.5,1740.3" stroke="#7c9be0" stroke-opacity="0.544" stroke-width="1.10" fill="none" mask="url(#mf)"/>
<path d="M865.5,1126.1L833.7,1127.7M991.4,1125.5L961.7,1127.0M1088.0,1126.4L1082.4,1126.7M965.2,1125.7L1008.9,1126.9M9212.0,1361.8L9723.5,1376.4M818.6,1126.2L860.7,1127.5M11210.3,1438.4L11953.3,1460.7M14026.6,1548.8L15179.2,1585.3M18909.5,1740.3L20626.6,1797.5" stroke="#7c9be0" stroke-opacity="0.544" stroke-width="1.10" fill="none" mask="url(#mf)"/>
<path d="M902.5,1124.3L865.5,1126.1M1014.5,1124.3L991.4,1125.5M922.5,1124.5L965.2,1125.7M9723.5,1376.4L10281.8,1392.4M797.9,1125.6L818.6,1126.2M11953.3,1460.7L12636.9,1481.3M15179.2,1585.3L16270.0,1619.7M20626.6,1797.5L22642.9,1864.8" stroke="#7c9be0" stroke-opacity="0.544" stroke-width="1.10" fill="none" mask="url(#mf)"/>
<path d="M932.2,1122.9L902.5,1124.3M874.0,1123.1L922.5,1124.5M10281.8,1392.4L10893.3,1409.9M12636.9,1481.3L13547.6,1508.6M16270.0,1619.7L17770.7,1667.2M22642.9,1864.8L25199.5,1950.0" stroke="#7c9be0" stroke-opacity="0.544" stroke-width="1.10" fill="none" mask="url(#mf)"/>
<path d="M943.9,1122.4L932.2,1122.9M860.4,1122.7L874.0,1123.1M10893.3,1409.9L11566.3,1429.2M13547.6,1508.6L14574.7,1539.5M17770.7,1667.2L19217.4,1712.9" stroke="#7c9be0" stroke-opacity="0.544" stroke-width="1.10" fill="none" mask="url(#mf)"/>
<path d="M11566.3,1429.2L12310.3,1450.5M14574.7,1539.5L15536.6,1568.4M19217.4,1712.9L21251.3,1777.2" stroke="#7c9be0" stroke-opacity="0.544" stroke-width="1.10" fill="none" mask="url(#mf)"/>
<path d="M12310.3,1450.5L13137.4,1474.2M15536.6,1568.4L16844.2,1607.7M21251.3,1777.2L23261.5,1840.7" stroke="#7c9be0" stroke-opacity="0.544" stroke-width="1.10" fill="none" mask="url(#mf)"/>
<path d="M13137.4,1474.2L14062.2,1500.7M16844.2,1607.7L18087.8,1645.0M23261.5,1840.7L25643.3,1916.0" stroke="#7c9be0" stroke-opacity="0.544" stroke-width="1.10" fill="none" mask="url(#mf)"/>
<path d="M14062.2,1500.7L14920.6,1525.2M18087.8,1645.0L19808.7,1696.7M25643.3,1916.0L26719.9,1950.0" stroke="#7c9be0" stroke-opacity="0.544" stroke-width="1.10" fill="none" mask="url(#mf)"/>
<path d="M14920.6,1525.2L16075.8,1558.3M19808.7,1696.7L21478.7,1746.9" stroke="#7c9be0" stroke-opacity="0.544" stroke-width="1.10" fill="none" mask="url(#mf)"/>
<path d="M16075.8,1558.3L17162.3,1589.4M21478.7,1746.9L23418.8,1805.2" stroke="#7c9be0" stroke-opacity="0.544" stroke-width="1.10" fill="none" mask="url(#mf)"/>
<path d="M17162.3,1589.4L18646.3,1631.9M23418.8,1805.2L26205.5,1888.9" stroke="#7c9be0" stroke-opacity="0.544" stroke-width="1.10" fill="none" mask="url(#mf)"/>
<path d="M18646.3,1631.9L20065.3,1672.5M26205.5,1888.9L28238.8,1950.0" stroke="#7c9be0" stroke-opacity="0.544" stroke-width="1.10" fill="none" mask="url(#mf)"/>
<path d="M20065.3,1672.5L22041.4,1729.1" stroke="#7c9be0" stroke-opacity="0.544" stroke-width="1.10" fill="none" mask="url(#mf)"/>
<path d="M22041.4,1729.1L23973.1,1784.4" stroke="#7c9be0" stroke-opacity="0.544" stroke-width="1.10" fill="none" mask="url(#mf)"/>
<path d="M23973.1,1784.4L26234.6,1849.2" stroke="#7c9be0" stroke-opacity="0.544" stroke-width="1.10" fill="none" mask="url(#mf)"/>
<path d="M26234.6,1849.2L28918.3,1926.0" stroke="#7c9be0" stroke-opacity="0.544" stroke-width="1.10" fill="none" mask="url(#mf)"/>
<path d="M28918.3,1926.0L29756.2,1950.0" stroke="#7c9be0" stroke-opacity="0.544" stroke-width="1.10" fill="none" mask="url(#mf)"/>
<polygon points="190.2,729.5 984.2,642.6 1630.0,771.4 1622.0,1258.4 989.8,1371.3 211.3,1294.6" fill="#e8e8e8" />
<polygon points="190.2,729.5 984.2,642.6 989.8,1371.3 211.3,1294.6" fill="#ededed" />
<polygon points="984.2,642.6 1630.0,771.4 1621.9,1258.4 989.8,1371.3" fill="#e3e3e3" />
<polygon points="1435.0,1292.4 1437.1,1069.2 1577.1,1065.3 1972.1,1069.1 1965.6,1290.6 1856.6,1320.8" fill="#ececec" />
<polygon points="1437.1,1069.2 1862.9,1073.9 1972.1,1069.1 1577.1,1065.3" fill="#f3f3f3" />
<polygon points="1437.1,1069.2 1862.9,1073.9 1856.6,1320.8 1435.0,1292.4" fill="#ededed" />
<polygon points="1862.9,1073.9 1972.1,1069.1 1965.6,1290.6 1856.6,1320.8" fill="#e4e4e4" />
</g></svg>
<div class="hdr"></div>
<div class="title">Untitled Project</div>
<svg width="400" height="98" style="position:absolute;left:0;top:0">
 <g fill="#ffffff" transform="translate(18,30) scale(0.037979)">
  <path fill-rule="evenodd" d="M130 130H500C650 130 750 260 750 500C750 740 650 865 480 865H130Z M315 290H430C530 290 575 380 575 500C575 630 520 705 430 705H315Z"/>
  <path d="M940 130H1450L1470 150L1180 390C1300 400 1345 470 1340 560C1335 720 1200 862 980 862C880 862 760 850 760 850L830 600C900 660 1000 740 1130 750C1210 750 1240 700 1210 670C1160 620 1020 590 940 572L1200 295L1000 300L870 390Z"/>
  <path fill-rule="evenodd" d="M1510 130H1800C2000 130 2085 280 2080 430C2070 650 1900 862 1580 862H1310Z M1760 160C1850 170 1880 260 1860 360L1760 700C1720 790 1680 830 1590 830Z"/>
 </g>
 <g fill="none" stroke="#ececf0" stroke-width="2" stroke-linecap="round" stroke-linejoin="round">
  <g transform="translate(118.2,29.2) scale(1.5)"><path d="M9 14l-4 -4l4 -4"/><path d="M5 10h11a4 4 0 1 1 0 8h-1"/></g>
  <g transform="translate(194.8,29.4) scale(1.5)"><path d="M15 14l4 -4l-4 -4"/><path d="M19 10h-11a4 4 0 1 0 0 8h1"/></g>
  <g transform="translate(346,31) scale(1.5)"><path d="M6 17.6l-2 -1.1v-2.5"/><path d="M4 10v-2.5l2 -1.1"/><path d="M10 4.1l2 -1.1l2 1.1"/><path d="M18 6.4l2 1.1v2.5"/><path d="M20 14v2.5l-2 1.12"/><path d="M14 19.9l-2 1.1l-2 -1.1"/><path d="M12 12l2 -1.1"/><path d="M18 8.6l2 -1.1"/><path d="M12 12l0 2.5"/><path d="M12 18.5l0 2.5"/><path d="M12 12l-2 -1.12"/><path d="M6 8.6l-2 -1.1"/></g>
 </g>
 <g fill="none" stroke="#ececf0" stroke-width="3" stroke-linecap="round" stroke-linejoin="round">
  <path d="M287.4 38.4H279a4 4 0 0 0 -4 4V55.3a4 4 0 0 0 4 4H297.3a4 4 0 0 0 4 -4V49.3"/>
  <rect x="290.4" y="38.4" width="10.9" height="8" rx="1.5"/>
 </g>
</svg>
<div class="toast">
 <div class="dot" style="left:24.2px;top:38.7px;width:9.8px;height:9.8px;background:#2d4f86"></div>
 <div class="dot" style="left:43.1px;top:36.8px;width:13.6px;height:13.6px;background:#3a72c6"></div>
 <div class="dot" style="left:65.9px;top:38.7px;width:9.8px;height:9.8px;background:#2d4f86"></div>
 <div class="t">Rendering...</div>
</div>
<div class="tog"><svg width="41" height="44" style="position:absolute;left:0;top:0"><path d="M17.8 15l8 7l-8 7.2" fill="none" stroke="#ffffff" stroke-width="2"/></svg></div>
<div class="kb">
 <svg width="170" height="84" style="position:absolute;left:0;top:0"><path transform="translate(-30,-1686)" d="M64.4 1716.1L50.3 1732.3L61.2 1732.1L58.2 1740.4L70.1 1726.3L60.5 1726.3Z" fill="#aeb0da"/></svg>
 <div class="key" style="left:62px;width:44px"><svg width="44" height="36" style="position:absolute;left:0;top:0"><g transform="translate(13.2,7.4)" fill="none" stroke="#aaabd6" stroke-width="1.9"><path d="M6 6H12V12H6Z"/><path d="M6 6V3.6A2.6 2.6 0 1 0 3.6 6H6"/><path d="M12 6V3.6A2.6 2.6 0 1 1 14.4 6H12"/><path d="M6 12V14.4A2.6 2.6 0 1 1 3.6 12H6"/><path d="M12 12V14.4A2.6 2.6 0 1 0 14.4 12H12"/></g></svg></div>
 <div class="key" style="left:119px;width:35px"><svg width="35" height="36" style="position:absolute;left:0;top:0"><path d="M12.9 8.1V25M24.6 8.1L13 19.6M16.7 16.2L25.2 25" fill="none" stroke="#aaabd6" stroke-width="1.5"/></svg></div>
</div>
</body></html>
